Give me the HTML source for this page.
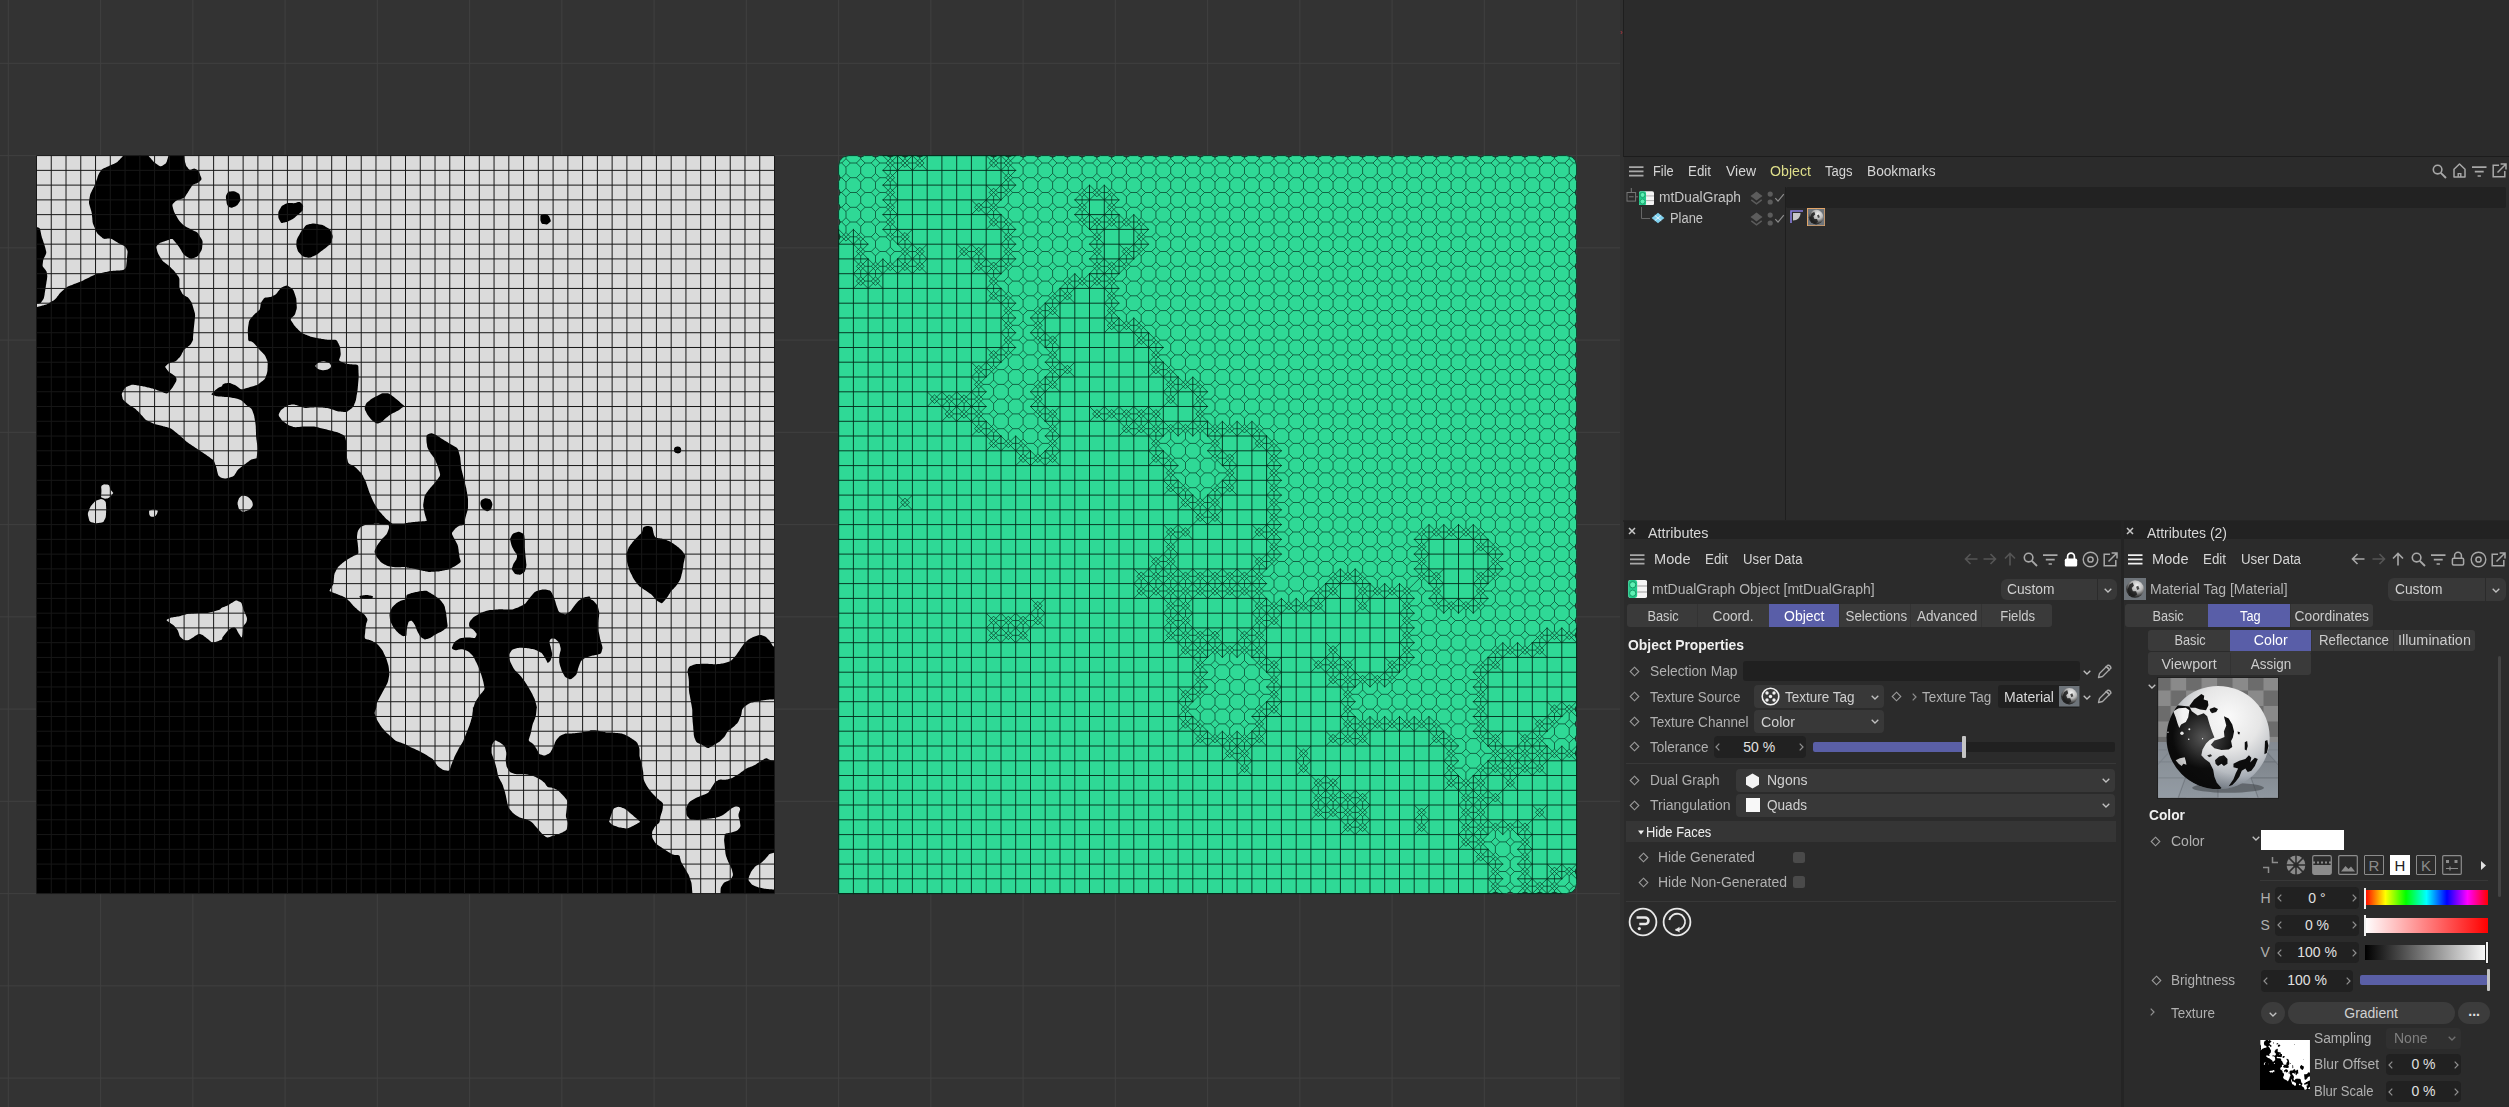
<!DOCTYPE html>
<html><head><meta charset="utf-8"><title>C4D</title>
<style>
html,body{margin:0;padding:0;background:#333;}
body{width:2509px;height:1107px;position:relative;overflow:hidden;font-family:"Liberation Sans",sans-serif;font-size:14px;}
#ui div,#ui svg{position:absolute}
</style></head><body>
<svg id="vp" width="1620" height="1107" viewBox="0 0 1620 1107" style="position:absolute;left:0;top:0">
<defs><clipPath id="cl"><rect x="36.5" y="155.6" width="738" height="738"/></clipPath><filter id="bl" x="-2%" y="-2%" width="104%" height="104%"><feGaussianBlur stdDeviation="0.7"/></filter></defs>
<rect width="1620" height="1107" fill="#333333"/>
<path d="M8.35,0V1107M100.6,0V1107M192.85,0V1107M285.1,0V1107M377.35,0V1107M469.6,0V1107M561.85,0V1107M654.1,0V1107M746.35,0V1107M838.6,0V1107M930.85,0V1107M1023.1,0V1107M1115.35,0V1107M1207.6,0V1107M1299.85,0V1107M1392.1,0V1107M1484.35,0V1107M1576.6,0V1107M0,63.35H1620M0,155.6H1620M0,247.85H1620M0,340.1H1620M0,432.35H1620M0,524.6H1620M0,616.85H1620M0,709.1H1620M0,801.35H1620M0,893.6H1620M0,985.85H1620M0,1078.1H1620" stroke="#404040" stroke-width="1" fill="none"/>
<rect x="36.5" y="155.6" width="738" height="738" fill="#dbdbdb"/>
<g clip-path="url(#cl)"><g filter="url(#bl)">
<path id="blobp" d="M779.7,761.1 778.8,761.1 777.9,761 777,760.9 776.2,760.8 775.3,760.7 774.4,760.7 773.5,760.6 772.7,760.5 771.8,760.4 771,760.3 770.3,760.1 769.6,759.8 769.1,759.5 768.5,759.2 768,758.9 767.4,758.6 766.9,758.3 766.2,758.2 765.4,758.4 764.6,758.7 763.6,759.4 762.6,760 761.6,760.6 760.7,761.3 759.7,761.9 758.7,762.5 757.7,763.1 756.7,763.8 755.8,764.4 754.8,765 753.7,765.5 752.7,766 751.7,766.4 750.6,766.8 749.6,767.2 748.5,767.6 747.5,768.1 746.5,768.5 745.6,769.1 744.7,769.6 743.8,770.3 743,770.9 742.2,771.5 741.3,772.1 740.5,772.8 739.6,773.4 738.8,773.9 738,774.5 737.2,775 736.3,775.5 735.5,776 734.7,776.6 733.8,777.1 733,777.5 732.2,777.9 731.4,778.2 730.5,778.5 729.7,778.7 728.9,779 728.1,779.2 727.3,779.5 726.4,779.6 725.6,779.7 724.7,779.8 723.9,779.7 723,779.7 722.2,779.7 721.3,779.6 720.5,779.6 719.7,779.7 719,779.8 718.4,780 717.8,780.4 717.3,780.7 716.8,781 716.2,781.3 715.7,781.7 715.2,782.1 714.6,782.7 714.1,783.5 713.5,784.4 713,785.3 712.4,786.2 711.8,787.1 711.3,788 710.7,788.9 710.2,789.8 709.6,790.7 709.1,791.6 708.4,792.4 707.6,793 706.7,793.6 705.7,794 704.6,794.4 703.6,794.8 702.5,795.2 701.5,795.6 700.5,796.1 699.4,796.5 698.4,796.9 697.4,797.3 696.4,797.7 695.4,798.2 694.6,798.7 693.7,799.2 692.9,799.8 692,800.3 691.2,800.8 690.3,801.3 689.6,801.9 689,802.6 688.5,803.3 688.1,804 687.7,804.8 687.3,805.5 686.9,806.3 686.5,807 686.3,807.8 686.1,808.6 686,809.4 686.1,810.3 686.2,811.2 686.2,812 686.3,812.9 686.3,813.8 686.5,814.6 686.7,815.3 687.1,815.9 687.5,816.4 687.9,817 688.4,817.5 688.8,818 689.2,818.6 689.8,819 690.5,819.3 691.3,819.5 692.3,819.6 693.2,819.6 694.2,819.7 695.2,819.8 696.2,819.9 697.2,819.9 698.2,819.9 699.4,819.8 700.5,819.6 701.7,819.5 702.8,819.4 704,819.2 705.1,819.1 706.3,819 707.5,818.8 708.6,818.7 709.8,818.5 710.9,818.4 712.1,818.3 713.2,818.1 714.4,818 715.5,817.8 716.5,817.6 717.4,817.3 718.2,817 719.1,816.7 719.9,816.4 720.8,816 721.6,815.7 722.5,815.3 723.3,814.8 724.1,814.3 725,813.6 725.8,812.9 726.7,812.2 727.5,811.6 728.4,810.9 729.2,810.2 730,809.6 730.9,808.9 731.7,808.2 732.7,807.7 733.7,807.2 734.7,806.8 735.9,806.6 736.9,806.5 737.9,806.7 738.7,807 739.4,807.6 739.9,808.2 740.1,808.9 740.1,809.6 739.8,810.5 739.5,811.3 739.2,812.1 738.9,812.9 738.6,813.7 738.5,814.6 738.5,815.4 738.5,816.2 738.7,817.1 739,817.9 739.2,818.8 739.4,819.6 739.6,820.5 739.8,821.3 739.9,822 740,822.7 740.1,823.3 740.2,823.9 740.3,824.5 740.4,825.2 740.4,825.8 740.3,826.5 740,827.3 739.4,828.2 738.6,829.1 737.8,829.9 737,830.5 736.2,831 735.4,831.2 734.6,831.5 733.8,831.7 733,832 732.2,832.3 731.4,832.5 730.6,832.7 729.8,832.8 729.1,833 728.3,833.1 727.5,833.2 726.8,833.3 726,833.4 725.4,833.7 725,834.2 724.7,834.8 724.6,835.6 724.5,836.4 724.4,837.2 724.3,838 724.2,838.8 724.1,839.7 724.1,840.5 724.2,841.5 724.3,842.4 724.4,843.3 724.5,844.3 724.6,845.2 724.7,846.2 724.8,847.1 724.9,848.1 725,849 725.1,849.9 725.2,850.9 725.3,851.8 725.4,852.8 725.5,853.7 725.7,854.6 725.9,855.5 726.2,856.4 726.5,857.2 726.8,858.1 727.1,858.9 727.4,859.8 727.8,860.6 728.1,861.5 728.5,862.3 728.9,863.1 729.3,864 729.7,864.8 730.1,865.6 730.5,866.5 730.9,867.3 731.3,868.1 731.6,869 731.9,869.8 732.1,870.6 732.3,871.4 732.5,872.2 732.7,873 732.9,873.8 732.9,874.6 732.9,875.3 732.7,875.9 732.4,876.5 732.1,877.1 731.8,877.7 731.5,878.3 731.2,878.9 730.8,879.4 730.3,879.9 729.6,880.3 728.7,880.6 727.9,880.9 727.1,881.2 726.2,881.6 725.4,881.9 724.7,882.3 724,882.8 723.5,883.3 723.1,884 722.6,884.6 722.2,885.3 721.8,885.9 721.4,886.5 721,887.3 720.8,888.1 720.6,889.1 720.6,890.1 720.5,891.1 720.5,892.2 720.4,893.2 720.3,894.3 720.3,895.3 720.2,896.4 720.2,897.4 720.1,898.4 720.4,899.2 720.9,899.7 721.8,900 723,900 724.1,900 725.3,900 726.5,900 727.7,900 728.8,900 730,900 731.2,900 732.4,900 733.5,900 734.7,900 735.9,900 737,900 738.2,900 739.4,899.9 740.6,899.9 741.7,899.9 742.9,899.9 744.1,899.9 745.2,899.9 746.4,899.9 747.6,899.9 748.8,899.9 749.9,899.9 751.1,899.9 752.3,899.9 753.5,899.9 754.6,899.9 755.8,899.9 757,899.9 758.1,899.9 759.3,899.9 760.5,899.9 761.7,899.9 762.8,899.9 764,899.9 765.2,899.9 766.3,899.9 767.5,899.9 768.7,899.9 769.9,899.9 771,899.9 772.2,899.9 773.4,899.9 774.6,899.9 775.7,899.8 776.9,899.8 778.1,899.8 779.2,899.8 780.1,899.5 780.7,898.9 781,898 781,896.7 780.9,895.5 780.9,894.2 780.9,893 780.9,891.7 780.6,890.8 779.9,890.1 779,889.7 777.8,889.7 776.6,889.6 775.4,889.5 774.2,889.5 772.9,889.4 771.7,889.3 770.5,889.2 769.3,889.2 768.1,889.1 766.9,889 765.8,888.8 764.7,888.7 763.6,888.5 762.6,888.2 761.5,888 760.5,887.8 759.5,887.6 758.5,887.4 757.6,887.1 756.8,886.8 756.1,886.5 755.4,886.2 754.7,885.9 753.9,885.6 753.2,885.3 752.6,884.9 752,884.4 751.4,883.9 750.9,883.3 750.4,882.7 749.9,882.1 749.4,881.5 748.9,880.8 748.6,880.2 748.5,879.5 748.5,878.8 748.7,878 748.9,877.3 749.1,876.6 749.4,875.8 749.7,875.1 750,874.4 750.3,873.7 750.6,873 750.9,872.2 751.3,871.5 751.7,870.9 752.2,870.2 752.7,869.6 753.2,869 753.7,868.4 754.2,867.8 754.7,867.1 755.3,866.6 755.9,866 756.6,865.6 757.3,865.2 758.1,864.7 758.8,864.3 759.5,863.9 760.3,863.5 760.9,863 761.6,862.6 762.2,862.1 762.7,861.5 763.2,861 763.7,860.5 764.3,860 764.8,859.4 765.3,858.9 765.8,858.3 766.3,857.7 766.9,857.1 767.4,856.5 767.9,855.9 768.4,855.3 768.9,854.6 769.6,854.1 770.3,853.7 771.1,853.4 772.1,853.2 773,852.9 774,852.7 774.9,852.5 775.8,852.2 776.8,852 777.7,851.8 778.7,851.5 779.6,851.3 780.3,850.8 780.8,850.1 781,849.1 781,847.9 781,846.6 781,845.4 781,844.1 781,842.9 781,841.6 781,840.4 781,839.1 781,837.9 781,836.6 781,835.4 781,834.2 781,832.9 781,831.7 781,830.4 781,829.2 781,827.9 781,826.7 781,825.4 781,824.2 781,822.9 781,821.7 781,820.4 781,819.2 781,818 781,816.7 781,815.5 781,814.2 781,813 781,811.7 781,810.5 781,809.2 781,808 781,806.7 781,805.5 781,804.2 781,803 781,801.8 781,800.5 781,799.3 781,798 781,796.8 781,795.5 781,794.3 781,793 781,791.8 781,790.5 781,789.3 781,788.1 781,786.8 781,785.6 781,784.3 781,783.1 781,781.8 781,780.6 781,779.3 781,778.1 781,776.8 781,775.6 781,774.3 781,773.1 781,771.9 781,770.6 781,769.4 781,768.1 781,766.9 781,765.6 781,764.4 781,763.1 780.7,762.2 780.3,761.5ZM689.2,692.8 689.4,694 689.7,695.1 689.9,696.2 690.1,697.3 690.3,698.4 690.5,699.5 690.7,700.7 690.9,701.8 691.1,702.9 691.3,704 691.5,705.1 691.7,706.2 691.9,707.4 692.1,708.4 692.2,709.4 692.3,710.4 692.3,711.3 692.3,712.3 692.3,713.2 692.3,714.1 692.3,715 692.3,715.9 692.3,716.9 692.4,717.9 692.5,718.9 692.6,719.9 692.6,720.9 692.7,721.9 692.8,722.9 692.9,723.9 693,724.9 693.1,726 693.2,727 693.2,728 693.3,729 693.4,730 693.5,731 693.6,732 693.7,733 693.7,734 693.8,735 694,736 694.2,736.8 694.4,737.7 694.8,738.4 695.1,739.2 695.4,739.9 695.7,740.7 696.1,741.4 696.5,742 697,742.6 697.7,743 698.4,743.3 699.1,743.6 699.9,744 700.6,744.3 701.4,744.6 702.1,744.9 702.8,745.3 703.5,745.7 704.2,746.1 704.9,746.5 705.6,747 706.3,747.4 707.1,747.8 707.8,748 708.7,747.9 709.5,747.6 710.5,747 711.5,746.5 712.4,745.9 713.4,745.3 714.3,744.8 715.3,744.2 716.2,743.7 717.2,743.1 718.1,742.5 719,741.9 719.8,741.4 720.5,740.7 721.2,740.1 721.8,739.5 722.4,738.8 723.1,738.2 723.7,737.6 724.3,736.9 724.8,736.2 725.3,735.5 725.7,734.8 726.1,734.1 726.5,733.3 727,732.6 727.4,731.9 727.8,731.2 728.4,730.7 728.9,730.2 729.6,729.8 730.2,729.3 730.8,728.9 731.4,728.5 732,728.1 732.6,727.6 733.3,727.1 733.9,726.5 734.5,725.9 735.2,725.3 735.8,724.6 736.4,724 737.1,723.4 737.6,722.7 738.2,721.9 738.6,721 739.1,720 739.5,719.1 739.9,718.1 740.3,717.2 740.8,716.2 741.1,715.3 741.4,714.5 741.5,713.8 741.6,713.1 741.7,712.4 741.8,711.7 741.9,711 742,710.3 742.2,709.7 742.6,708.9 743.1,708.2 743.7,707.5 744.4,706.8 745,706.3 745.6,705.8 746.2,705.4 746.9,705 747.5,704.6 748.1,704.2 748.7,703.7 749.4,703.4 750.1,703.1 750.9,702.8 751.7,702.6 752.5,702.4 753.3,702.2 754.2,702 755,701.8 755.8,701.6 756.6,701.4 757.5,701.3 758.3,701.1 759.1,701 760,700.9 760.8,700.7 761.6,700.6 762.5,700.4 763.3,700.3 764.1,700.2 765,700 765.9,699.9 766.9,699.8 768.1,699.7 769.3,699.6 770.5,699.5 771.7,699.5 773,699.4 774.2,699.3 775.4,699.2 776.7,699.1 777.9,699.1 779.1,699 780,698.6 780.7,698 781,697.1 781,696 781,694.8 781,693.7 781,692.5 781,691.4 781,690.2 781,689.1 781,687.9 781,686.8 781,685.6 781,684.5 781,683.3 781,682.2 781,681.1 781,679.9 781,678.8 781,677.6 781,676.5 781,675.3 781,674.2 781,673 781,671.9 781,670.7 781,669.6 781,668.4 781,667.3 781,666.1 781,665 781,663.8 781,662.7 781,661.5 781,660.4 781,659.2 781,658.1 781,656.9 781,655.8 781,654.6 781,653.5 781,652.3 781,651.2 781,650 780.7,649.1 780.2,648.4 779.5,648 778.5,647.8 777.5,647.5 776.6,647.3 775.6,647.1 774.6,646.8 773.7,646.5 773,646 772.5,645.4 772.1,644.7 771.6,644 771.2,643.3 770.8,642.6 770.4,641.8 769.9,641.2 769.5,640.6 769,640 768.4,639.5 767.9,638.9 767.4,638.4 766.9,637.9 766.3,637.3 765.8,636.9 765.2,636.5 764.5,636.2 763.9,636 763.2,635.8 762.5,635.6 761.9,635.3 761.2,635.1 760.5,635 759.8,635 759.1,635.1 758.4,635.3 757.6,635.5 756.9,635.7 756.2,635.9 755.4,636.2 754.7,636.4 754,636.7 753.4,636.9 752.8,637.3 752.1,637.6 751.5,637.9 750.9,638.2 750.2,638.5 749.6,638.9 749,639.3 748.3,639.8 747.7,640.3 747.1,640.8 746.4,641.4 745.8,641.9 745.1,642.4 744.5,643 744,643.7 743.4,644.4 742.9,645.2 742.4,646 741.8,646.8 741.3,647.6 740.8,648.3 740.2,649.1 739.7,649.9 739.2,650.7 738.7,651.5 738.1,652.3 737.6,653.1 737.1,653.8 736.6,654.6 736,655.4 735.4,656.1 734.8,656.8 734.2,657.5 733.6,658.1 733,658.8 732.3,659.4 731.7,660.1 731,660.7 730.3,661.1 729.6,661.5 728.7,661.8 727.9,662 727.1,662.3 726.3,662.5 725.5,662.8 724.6,663 723.7,663.2 722.7,663.4 721.7,663.6 720.7,663.7 719.6,663.9 718.6,664 717.6,664.1 716.6,664.2 715.6,664.3 714.7,664.3 713.9,664.2 713.1,664.2 712.2,664.1 711.4,664.1 710.6,664 709.7,663.9 708.9,663.9 708.1,663.8 707.2,663.8 706.4,663.7 705.6,663.7 704.7,663.7 703.9,663.8 703,663.8 702.2,663.8 701.4,663.8 700.5,663.9 699.7,663.9 698.9,663.9 698,664 697.2,664 696.3,664.1 695.5,664.3 694.6,664.5 693.8,664.8 692.9,665.1 692.1,665.5 691.2,665.8 690.4,666.1 689.6,666.6 689,667.3 688.4,668.3 687.9,669.4 687.7,670.5 687.5,671.5 687.6,672.4 687.8,673.2 688,674.1 688.1,674.9 688.2,675.7 688.4,676.6 688.5,677.4 688.6,678.2 688.7,679 688.8,679.8 688.8,680.7 688.9,681.5 688.9,682.3 688.9,683.2 688.9,684 688.9,684.9 688.9,685.7 688.9,686.5 688.9,687.4 688.9,688.2 688.9,689.1 688.9,689.9 689,690.8 689.1,691.8ZM122.3,392.5 122.8,391.7 123.2,390.9 123.7,390.1 124.2,389.3 124.6,388.5 125.2,387.9 125.9,387.3 126.7,386.8 127.5,386.5 128.4,386.1 129.2,385.7 130.1,385.4 131,385 131.9,384.8 132.8,384.7 133.7,384.7 134.7,384.9 135.7,385 136.7,385.2 137.7,385.4 138.6,385.5 139.6,385.7 140.6,385.9 141.6,386 142.6,386.2 143.5,386.4 144.4,386.6 145.3,386.8 146.1,387 146.9,387.2 147.8,387.4 148.6,387.6 149.5,387.8 150.3,388 151.1,388.2 152,388.4 152.8,388.6 153.7,388.9 154.7,389.2 155.7,389.6 156.8,390 157.9,390.4 159,390.8 160.1,391.2 161.2,391.6 162.3,392 163.4,392.5 164.5,392.9 165.6,393.3 166.6,393.4 167.4,393.3 168.2,392.8 168.8,392.1 169.4,391.4 170,390.7 170.6,390 171.2,389.3 171.8,388.5 172.4,387.7 173,386.7 173.6,385.7 174.2,384.7 174.8,383.7 175.5,382.6 176.1,381.6 176.4,380.6 176.5,379.6 176.4,378.6 176,377.6 175.5,376.8 174.9,376 174.2,375.4 173.4,374.9 172.5,374.3 171.7,373.8 170.9,373.3 170,372.8 169.3,372.2 168.7,371.7 168.1,371.1 167.7,370.5 167.2,369.9 166.8,369.3 166.3,368.7 165.9,368 165.5,367.5 165.3,367.2 165.2,366.9 165.2,366.7 165.3,366.5 165.5,366.2 165.8,365.9 166.3,365.4 166.8,365 167.2,364.6 167.7,364.2 168.2,363.7 168.7,363.4 169.4,363 170.1,362.8 171,362.6 171.8,362.3 172.6,362.1 173.5,361.9 174.3,361.7 175.1,361.4 175.8,361 176.5,360.5 177.1,359.9 177.7,359.3 178.3,358.6 178.9,358 179.5,357.4 180.1,356.8 180.6,356 181.1,355.2 181.5,354.4 181.9,353.6 182.3,352.7 182.8,351.9 183.2,351 183.7,350.3 184.3,349.5 185.1,348.8 185.9,348.2 186.7,347.6 187.6,347 188.4,346.3 189.2,345.7 189.9,345.1 190.5,344.5 191,343.8 191.3,343.2 191.7,342.5 192,341.9 192.4,341.3 192.7,340.6 193,340.1 193.1,339.7 193.1,339.4 193,339.3 193,338.9 193,338.2 193,337.3 193.1,336.2 193.2,335 193.3,333.9 193.4,332.7 193.5,331.6 193.6,330.5 193.7,329.4 193.8,328.4 193.9,327.5 194,326.5 194.1,325.6 194.2,324.7 194.3,323.7 194.4,322.8 194.5,321.8 194.6,320.9 194.7,319.9 194.8,319 194.9,318.1 195,317.1 195.1,316.2 195.1,315.2 195,314.2 194.9,313.3 194.6,312.3 194.3,311.3 194,310.3 193.7,309.3 193.5,308.4 193.2,307.4 192.9,306.4 192.6,305.4 192.3,304.4 192,303.5 191.7,302.7 191.3,302 190.8,301.3 190.4,300.7 190,300 189.6,299.4 189.1,298.8 188.6,298.2 188,297.6 187.4,297.1 186.6,296.7 185.9,296.3 185.2,295.9 184.4,295.4 183.7,295 183.1,294.5 182.5,293.9 182,293.1 181.6,292.3 181.2,291.5 180.8,290.7 180.4,289.9 180,289.1 179.7,288.3 179.5,287.5 179.4,286.6 179.4,285.8 179.4,285 179.4,284.1 179.4,283.3 179.4,282.4 179.4,281.6 179.4,280.8 179.4,279.9 179.4,279.1 179.2,278.2 178.9,277.4 178.4,276.6 177.8,275.7 177.1,274.9 176.5,274 175.9,273.2 175.2,272.3 174.6,271.5 174,270.8 173.3,270.1 172.7,269.5 172.1,268.9 171.4,268.2 170.8,267.6 170.2,267 169.5,266.3 168.8,265.7 168,265.1 167.2,264.5 166.3,263.8 165.5,263.2 164.7,262.6 163.8,261.9 163,261.2 162.3,260.4 161.7,259.5 161,258.4 160.4,257.4 159.8,256.4 159.2,255.4 158.6,254.4 158.1,253.4 157.7,252.5 157.4,251.6 157.2,250.9 157,250.1 156.8,249.3 156.6,248.5 156.4,247.7 156.4,246.9 156.7,246.1 157.3,245.3 158.1,244.5 158.9,243.7 159.8,243.1 160.9,242.6 161.9,242.2 163,241.8 164.1,241.4 165.2,241.1 166.3,240.7 167.4,240.3 168.5,239.9 169.6,239.5 170.7,239.1 171.6,239 172.4,239.1 173.1,239.5 173.6,240.2 174.2,240.8 174.7,241.5 175.2,242.1 175.8,242.8 176.3,243.4 176.9,244.1 177.4,244.8 177.9,245.4 178.5,246.2 179.1,247 179.7,248 180.3,249 181,250.1 181.6,251.2 182.2,252.2 182.9,253.3 183.6,254.2 184.3,255 185.1,255.6 186,256.2 186.8,256.7 187.7,257.3 188.6,257.8 189.4,258.3 190.3,258.6 191.2,258.7 192,258.6 192.9,258.3 193.8,258 194.6,257.7 195.5,257.3 196.4,257 197.1,256.6 197.8,256 198.5,255.3 199,254.4 199.5,253.5 200.1,252.7 200.6,251.8 201.1,251 201.6,250 201.9,249.1 202.1,248.1 202.2,247 202.3,245.9 202.4,244.9 202.5,243.8 202.6,242.7 202.6,241.7 202.3,240.6 201.8,239.6 201.2,238.5 200.6,237.4 199.9,236.4 199.3,235.3 198.7,234.3 198,233.4 197.3,232.6 196.5,232 195.6,231.6 194.8,231.2 193.9,230.8 193.1,230.4 192.3,229.9 191.4,229.5 190.6,229.1 189.8,228.7 188.9,228.2 188.1,227.8 187.2,227.4 186.4,227 185.6,226.5 184.8,226.1 184.1,225.6 183.4,225 182.8,224.4 182.1,223.8 181.5,223.2 180.9,222.5 180.3,221.9 179.7,221.2 179.1,220.4 178.4,219.5 177.8,218.4 177.2,217.4 176.6,216.3 175.9,215.3 175.3,214.3 174.8,213.2 174.3,212.2 173.9,211.2 173.6,210.2 173.3,209.3 173,208.3 172.8,207.3 172.5,206.3 172.4,205.5 172.5,204.7 172.7,204.1 173.2,203.5 173.7,203 174.2,202.5 174.7,201.9 175.2,201.4 175.8,200.9 176.6,200.5 177.5,200.1 178.5,199.8 179.6,199.5 180.6,199.2 181.7,198.8 182.7,198.5 183.6,198.1 184.4,197.5 185.1,196.8 185.6,196 186.1,195.1 186.6,194.3 187.1,193.5 187.7,192.7 188.2,191.8 188.7,191 189.2,190.2 189.7,189.3 190.3,188.5 190.8,187.7 191.3,186.9 191.8,186 192.4,185.4 192.9,184.8 193.5,184.5 194.2,184.2 194.8,184 195.4,183.8 196,183.6 196.7,183.4 197.3,183.1 197.9,182.8 198.4,182.4 199,181.9 199.5,181.5 200.1,181 200.6,180.6 201.1,180.1 201.4,179.5 201.5,178.8 201.3,177.8 200.9,176.7 200.4,175.7 200,174.6 199.6,173.5 199.1,172.4 198.7,171.5 198.2,170.8 197.7,170.3 197.1,170 196.6,169.6 196,169.3 195.5,169 194.9,168.7 194.2,168.6 193.4,168.7 192.5,169 191.5,169.5 190.6,169.8 189.8,169.8 189.2,169.5 188.7,169 188.2,168.4 187.8,167.8 187.3,167.3 186.8,166.7 186.4,166.1 186,165.4 185.8,164.6 185.6,163.8 185.4,163 185.1,162.2 184.9,161.3 184.7,160.5 184.5,159.7 184.4,158.8 184.3,158 184.2,157.1 184.1,156.3 184,155.4 183.9,154.6 183.8,153.7 183.7,152.8 183.6,152 183.5,151.1 183.4,150.3 183.1,149.6 182.5,149.2 181.7,149 180.6,149 179.6,149 178.5,149 177.4,149 176.4,149 175.3,149 174.2,149 173.2,149 172.1,149 171.2,149.3 170.5,149.9 170,150.8 169.6,152 169.2,153.2 168.9,154.3 168.5,155.5 168.2,156.7 167.8,157.9 167.5,159.1 167.1,160.2 166.8,161.4 166.3,162.4 165.8,163.2 165.2,163.9 164.5,164.3 163.8,164.8 163.1,165.2 162.4,165.7 161.7,166.1 161,166.3 160.2,166.3 159.5,166 158.7,165.4 157.9,164.9 157,164.3 156.2,163.8 155.4,163.2 154.6,162.6 153.9,161.9 153.1,161.2 152.4,160.3 151.6,159.5 150.9,158.6 150.2,157.8 149.4,157 148.7,156.1 148,155.3 147.2,154.5 146.5,153.6 145.8,152.8 145,151.9 144.3,151.1 143.6,150.3 142.7,149.6 141.8,149.2 140.9,149 139.8,149 138.7,149 137.7,149 136.6,149 135.5,149 134.5,149 133.4,149 132.3,149 131.3,149 130.3,149.2 129.3,149.6 128.5,150.2 127.7,151.1 126.9,151.9 126.1,152.7 125.3,153.6 124.5,154.4 123.7,155.3 122.9,156.1 122.1,156.9 121.4,157.8 120.6,158.6 119.8,159.5 119,160.3 118.2,161.1 117.4,161.9 116.5,162.5 115.6,163 114.6,163.4 113.7,163.9 112.8,164.3 111.8,164.7 110.9,165.1 109.9,165.5 109,166 108,166.4 107.1,166.8 106.2,167.2 105.2,167.7 104.3,168.1 103.3,168.5 102.5,169 101.8,169.5 101.3,170.1 100.9,170.7 100.4,171.4 100,172 99.6,172.6 99.2,173.3 98.8,174 98.4,174.7 98.1,175.5 97.8,176.3 97.5,177.2 97.3,178 97,178.9 96.7,179.7 96.4,180.5 96.1,181.4 95.9,182.2 95.6,183.1 95.3,183.9 94.9,184.7 94.5,185.6 94.1,186.4 93.7,187.3 93.3,188.1 92.8,188.9 92.4,189.8 92,190.6 91.6,191.5 91.2,192.3 90.8,193.1 90.4,194 90.1,195 89.9,196 89.7,197 89.5,198.1 89.4,199.1 89.2,200.2 89,201.2 89,202.2 89,203.2 89.2,204.1 89.4,204.9 89.7,205.8 89.9,206.6 90.2,207.4 90.4,208.3 90.7,209.1 90.9,209.9 91.2,210.8 91.4,211.6 91.6,212.5 91.8,213.3 91.9,214.1 92,215 92,215.8 92.1,216.7 92.2,217.5 92.3,218.3 92.3,219.2 92.4,220 92.5,220.8 92.5,221.7 92.7,222.5 92.9,223.4 93.2,224.2 93.5,225 93.9,225.9 94.2,226.7 94.6,227.6 94.9,228.4 95.3,229.3 95.6,230.1 96,231 96.3,231.8 96.8,232.6 97.4,233.4 98.1,234.2 99,234.9 99.8,235.7 100.7,236.4 101.5,237.1 102.4,237.9 103.2,238.4 104.1,238.7 104.9,238.9 105.8,238.8 106.6,238.7 107.5,238.6 108.4,238.5 109.2,238.4 110.1,238.5 110.9,238.7 111.8,239.1 112.6,239.6 113.4,240.1 114.2,240.6 115,241.1 115.8,241.6 116.7,242.1 117.6,242.6 118.6,243.2 119.6,243.7 120.7,244.2 121.7,244.7 122.8,245.3 123.8,245.8 124.6,246.3 125.3,246.9 125.8,247.5 126.1,248.1 126.4,248.7 126.7,249.3 127,249.9 127.3,250.5 127.5,251.2 127.6,252.1 127.5,253 127.4,254 127.3,255 127.2,256 127.1,257.1 127,258.1 126.9,259.1 126.8,260.1 126.7,261.2 126.6,262.2 126.5,263.2 126.4,264.2 126.3,265.3 126.2,266.3 126,267.2 125.6,268 125.1,268.7 124.5,269.3 123.8,269.7 122.9,270 121.9,270.2 120.9,270.3 119.8,270.4 118.7,270.5 117.6,270.5 116.5,270.6 115.4,270.7 114.3,270.7 113.2,270.8 112.1,270.9 111.1,271 110,271.1 109.1,271.3 108.1,271.5 107.2,271.7 106.2,271.9 105.3,272.1 104.3,272.3 103.4,272.5 102.4,272.8 101.5,273 100.5,273.2 99.6,273.4 98.7,273.6 97.7,273.8 96.8,274 95.8,274.3 94.7,274.7 93.7,275.2 92.6,275.7 91.4,276.3 90.3,276.8 89.2,277.4 88.1,278 87,278.5 85.9,279.1 84.7,279.6 83.6,280.2 82.6,280.7 81.5,281.2 80.5,281.6 79.6,281.9 78.7,282.3 77.7,282.7 76.8,283 75.8,283.4 74.9,283.8 74,284.1 73,284.5 72.1,284.9 71.1,285.2 70.2,285.6 69.2,286 68.3,286.3 67.4,286.8 66.5,287.4 65.6,288 64.8,288.7 63.9,289.5 63.1,290.2 62.3,290.9 61.4,291.7 60.6,292.4 59.9,293.2 59.2,294 58.6,294.9 58,295.7 57.3,296.5 56.7,297.4 56.1,298.2 55.3,299 54.5,299.7 53.6,300.4 52.6,301 51.5,301.6 50.5,302.2 49.5,302.8 48.5,303.5 47.4,304 46.4,304.4 45.3,304.8 44.3,305.1 43.2,305.4 42.2,305.6 41.1,305.9 40,306.2 39,306.5 37.9,306.8 36.9,307 35.8,307.3 34.7,307.6 33.7,307.9 32.6,308.1 31.6,308.4 30.8,308.9 30.2,309.7 30,310.7 30,311.9 30,313.2 30,314.4 30,315.7 30,316.9 30,318.1 30,319.4 30,320.6 30,321.9 30,323.1 30,324.4 30,325.6 30,326.8 30,328.1 30,329.3 30,330.6 30,331.8 30,333 30,334.3 30,335.5 30,336.8 30,338 30,339.3 30,340.5 30,341.7 30,343 30,344.2 30,345.5 30,346.7 30,348 30,349.2 30,350.4 30,351.7 30,352.9 30,354.2 30,355.4 30,356.6 30,357.9 30,359.1 30,360.4 30,361.6 30,362.9 30,364.1 30,365.3 30,366.6 30,367.8 30,369.1 30,370.3 30,371.5 30,372.8 30,374 30,375.3 30,376.5 30,377.8 30,379 30,380.2 30,381.5 30,382.7 30,384 30,385.2 30,386.4 30,387.7 30,388.9 30,390.2 30,391.4 30,392.7 30,393.9 30,395.1 30,396.4 30,397.6 30,398.9 30,400.1 30,401.4 30,402.6 30,403.8 30,405.1 30,406.3 30,407.6 30,408.8 30,410 30,411.3 30,412.5 30,413.8 30,415 30,416.3 30,417.5 30,418.7 30,420 30,421.2 30,422.5 30,423.7 30,424.9 30,426.2 30,427.4 30,428.7 30,429.9 30,431.2 30,432.4 30,433.6 30,434.9 30,436.1 30,437.4 30,438.6 30,439.8 30,441.1 30,442.3 30,443.6 30,444.8 30,446.1 30,447.3 30,448.5 30,449.8 30,451 30,452.3 30,453.5 30,454.7 30,456 30,457.2 30,458.5 30,459.7 30,461 30,462.2 30,463.4 30,464.7 30,465.9 30,467.2 30,468.4 30,469.7 30,470.9 30,472.1 30,473.4 30,474.6 30,475.9 30,477.1 30,478.3 30,479.6 30,480.8 30,482.1 30,483.3 30,484.6 30,485.8 30,487 30,488.3 30,489.5 30,490.8 30,492 30,493.2 30,494.5 30,495.7 30,497 30,498.2 30,499.5 30,500.7 30,501.9 30,503.2 30,504.4 30,505.7 30,506.9 30,508.1 30,509.4 30,510.6 30,511.9 30,513.1 30,514.4 30,515.6 30,516.8 30,518.1 30,519.3 30,520.6 30,521.8 30,523 30,524.3 30,525.5 30,526.8 30,528 30,529.3 30,530.5 30,531.7 30,533 30,534.2 30,535.5 30,536.7 30,538 30,539.2 30,540.4 30,541.7 30,542.9 30,544.2 30,545.4 30,546.6 30,547.9 30,549.1 30,550.4 30,551.6 30,552.9 30,554.1 30,555.3 30,556.6 30,557.8 30,559.1 30,560.3 30,561.5 30,562.8 30,564 30,565.3 30,566.5 30,567.8 30,569 30,570.2 30,571.5 30,572.7 30,574 30,575.2 30,576.4 30,577.7 30,578.9 30,580.2 30,581.4 30,582.7 30,583.9 30,585.1 30,586.4 30,587.6 30,588.9 30,590.1 30,591.4 30,592.6 30,593.8 30,595.1 30,596.3 30,597.6 30,598.8 30,600 30,601.3 30,602.5 30,603.8 30,605 30,606.3 30,607.5 30,608.7 30,610 30,611.2 30,612.5 30,613.7 30,614.9 30,616.2 30,617.4 30,618.7 30,619.9 30,621.2 30,622.4 30,623.6 30,624.9 30,626.1 30,627.4 30,628.6 30,629.8 30,631.1 30,632.3 30,633.6 30,634.8 30,636.1 30,637.3 30,638.5 30,639.8 30,641 30,642.3 30,643.5 30,644.7 30,646 30,647.2 30,648.5 30,649.7 30,651 30,652.2 30,653.4 30,654.7 30,655.9 30,657.2 30,658.4 30,659.7 30,660.9 30,662.1 30,663.4 30,664.6 30,665.9 30,667.1 30,668.3 30,669.6 30,670.8 30,672.1 30,673.3 30,674.6 30,675.8 30,677 30,678.3 30,679.5 30,680.8 30,682 30,683.2 30,684.5 30,685.7 30,687 30,688.2 30,689.5 30,690.7 30,691.9 30,693.2 30,694.4 30,695.7 30,696.9 30,698.1 30,699.4 30,700.6 30,701.9 30,703.1 30,704.4 30,705.6 30,706.8 30,708.1 30,709.3 30,710.6 30,711.8 30,713 30,714.3 30,715.5 30,716.8 30,718 30,719.3 30,720.5 30,721.7 30.1,723 30.1,724.2 30.1,725.5 30.1,726.7 30.1,728 30.1,729.2 30.1,730.4 30.1,731.7 30.1,732.9 30.1,734.2 30.1,735.4 30.1,736.6 30.1,737.9 30.1,739.1 30.1,740.4 30.1,741.6 30.1,742.9 30.1,744.1 30.1,745.3 30.1,746.6 30.1,747.8 30.1,749.1 30.1,750.3 30.1,751.5 30.1,752.8 30.1,754 30.1,755.3 30.1,756.5 30.1,757.8 30.1,759 30.1,760.2 30.1,761.5 30.1,762.7 30.1,764 30.1,765.2 30.1,766.4 30.1,767.7 30.1,768.9 30.1,770.2 30.1,771.4 30.1,772.7 30.1,773.9 30.1,775.1 30.1,776.4 30.1,777.6 30.1,778.9 30.1,780.1 30.1,781.4 30.1,782.6 30.1,783.8 30.1,785.1 30.1,786.3 30.1,787.6 30.1,788.8 30.1,790 30.1,791.3 30.1,792.5 30.1,793.8 30.1,795 30.1,796.3 30.1,797.5 30.1,798.7 30.1,800 30.1,801.2 30.1,802.5 30.1,803.7 30.1,804.9 30.1,806.2 30.1,807.4 30.1,808.7 30.1,809.9 30.1,811.2 30.1,812.4 30.1,813.6 30.1,814.9 30.1,816.1 30.1,817.4 30.1,818.6 30.1,819.8 30.1,821.1 30.1,822.3 30.1,823.6 30.1,824.8 30.1,826.1 30.1,827.3 30.1,828.5 30.1,829.8 30.1,831 30.1,832.3 30.1,833.5 30.1,834.7 30.1,836 30.1,837.2 30.1,838.5 30.1,839.7 30.1,841 30.1,842.2 30.1,843.4 30.1,844.7 30.1,845.9 30.1,847.2 30.1,848.4 30.1,849.7 30.1,850.9 30.1,852.1 30.1,853.4 30.1,854.6 30.1,855.9 30.1,857.1 30.1,858.3 30.1,859.6 30.1,860.8 30.1,862.1 30.1,863.3 30.1,864.6 30.1,865.8 30.1,867 30.1,868.3 30.1,869.5 30.1,870.8 30.1,872 30.1,873.2 30.1,874.5 30.1,875.7 30.1,877 30.1,878.2 30.1,879.5 30.1,880.7 30.1,881.9 30.1,883.2 30.1,884.4 30.1,885.7 30.1,886.9 30.1,888.1 30.1,889.4 30.1,890.6 30.1,891.9 30.1,893.1 30.1,894.4 30.1,895.6 30.1,896.8 30.1,898.1 30.4,899 31,899.6 32,899.9 33.2,899.9 34.4,899.9 35.7,899.9 36.9,899.9 38.2,899.9 39.4,899.9 40.7,899.9 41.9,899.9 43.2,899.9 44.4,899.9 45.7,899.9 46.9,899.9 48.1,899.9 49.4,899.9 50.6,899.9 51.9,899.9 53.1,899.9 54.4,899.9 55.6,899.9 56.9,899.9 58.1,899.9 59.4,899.9 60.6,899.9 61.9,899.9 63.1,899.9 64.3,899.9 65.6,899.9 66.8,899.9 68.1,899.9 69.3,899.9 70.6,899.9 71.8,899.9 73.1,899.9 74.3,899.9 75.6,899.9 76.8,899.9 78,899.9 79.3,899.9 80.5,899.9 81.8,899.9 83,899.9 84.3,899.9 85.5,899.9 86.8,899.9 88,899.9 89.3,899.9 90.5,899.9 91.8,899.9 93,899.9 94.2,899.9 95.5,899.9 96.7,899.9 98,899.9 99.2,899.9 100.5,899.9 101.7,899.9 103,899.9 104.2,899.9 105.5,899.9 106.7,899.9 107.9,899.9 109.2,899.9 110.4,899.9 111.7,899.9 112.9,899.9 114.2,899.9 115.4,899.9 116.7,899.9 117.9,899.9 119.2,899.9 120.4,899.9 121.7,899.9 122.9,899.9 124.1,899.9 125.4,899.9 126.6,899.9 127.9,899.9 129.1,899.9 130.4,899.9 131.6,899.9 132.9,899.9 134.1,899.9 135.4,899.9 136.6,899.9 137.8,899.9 139.1,899.9 140.3,899.9 141.6,899.9 142.8,899.9 144.1,899.9 145.3,899.9 146.6,899.9 147.8,899.9 149.1,899.9 150.3,899.9 151.6,899.9 152.8,899.9 154,899.9 155.3,899.9 156.5,899.9 157.8,899.9 159,899.9 160.3,899.9 161.5,899.9 162.8,899.9 164,899.9 165.3,899.9 166.5,899.9 167.7,899.9 169,899.9 170.2,899.9 171.5,899.9 172.7,899.9 174,899.9 175.2,899.9 176.5,899.9 177.7,899.9 179,899.9 180.2,899.9 181.5,899.9 182.7,899.9 183.9,899.9 185.2,899.9 186.4,899.9 187.7,899.9 188.9,899.9 190.2,899.9 191.4,899.9 192.7,899.9 193.9,899.9 195.2,899.9 196.4,899.9 197.6,899.9 198.9,899.9 200.1,899.9 201.4,899.9 202.6,899.9 203.9,899.9 205.1,899.9 206.4,899.9 207.6,899.9 208.9,899.9 210.1,899.9 211.4,899.9 212.6,899.9 213.8,899.9 215.1,899.9 216.3,899.9 217.6,899.9 218.8,899.9 220.1,899.9 221.3,899.9 222.6,899.9 223.8,899.9 225.1,899.9 226.3,899.9 227.5,899.9 228.8,899.9 230,899.9 231.3,899.9 232.5,899.9 233.8,899.9 235,899.9 236.3,899.9 237.5,899.9 238.8,899.9 240,899.9 241.3,899.9 242.5,899.9 243.7,899.9 245,899.9 246.2,899.9 247.5,899.9 248.7,899.9 250,899.9 251.2,899.9 252.5,899.9 253.7,899.9 255,899.9 256.2,899.9 257.4,899.9 258.7,899.9 259.9,899.9 261.2,899.9 262.4,899.9 263.7,899.9 264.9,899.9 266.2,899.9 267.4,899.9 268.7,899.9 269.9,899.9 271.2,899.9 272.4,899.9 273.6,899.9 274.9,899.9 276.1,899.9 277.4,899.9 278.6,899.9 279.9,899.9 281.1,899.9 282.4,899.9 283.6,899.9 284.9,899.9 286.1,899.9 287.3,899.9 288.6,899.9 289.8,899.9 291.1,899.9 292.3,899.9 293.6,899.9 294.8,899.9 296.1,899.9 297.3,899.9 298.6,899.9 299.8,899.9 301.1,899.9 302.3,899.9 303.5,899.9 304.8,899.9 306,899.9 307.3,899.9 308.5,899.9 309.8,899.9 311,899.9 312.3,899.9 313.5,899.9 314.8,899.9 316,899.9 317.2,899.9 318.5,899.9 319.7,899.9 321,899.9 322.2,899.9 323.5,899.9 324.7,899.9 326,899.9 327.2,899.9 328.5,899.9 329.7,899.9 331,899.9 332.2,899.9 333.4,899.9 334.7,899.9 335.9,899.9 337.2,899.9 338.4,899.9 339.7,899.9 340.9,899.9 342.2,899.9 343.4,899.9 344.7,899.9 345.9,899.9 347.2,899.9 348.4,899.9 349.6,899.9 350.9,899.9 352.1,899.9 353.4,899.9 354.6,899.9 355.9,899.9 357.1,899.9 358.4,899.9 359.6,899.9 360.9,899.9 362.1,899.9 363.3,899.9 364.6,899.9 365.8,899.9 367.1,899.9 368.3,899.9 369.6,899.9 370.8,899.9 372.1,899.9 373.3,899.9 374.6,899.9 375.8,899.9 377.1,899.9 378.3,899.9 379.5,899.9 380.8,899.9 382,899.9 383.3,899.9 384.5,899.9 385.8,899.9 387,899.9 388.3,899.9 389.5,899.9 390.8,899.9 392,899.9 393.2,899.9 394.5,899.9 395.7,899.9 397,899.9 398.2,899.9 399.5,899.9 400.7,899.9 402,899.9 403.2,899.9 404.5,899.9 405.7,899.9 407,899.9 408.2,899.9 409.4,899.9 410.7,899.9 411.9,899.9 413.2,899.9 414.4,899.9 415.7,899.9 416.9,899.9 418.2,899.9 419.4,899.9 420.7,899.9 421.9,899.9 423.1,899.9 424.4,899.9 425.6,899.9 426.9,899.9 428.1,899.9 429.4,899.9 430.6,899.9 431.9,899.9 433.1,899.9 434.4,899.9 435.6,899.9 436.9,899.9 438.1,899.9 439.3,899.9 440.6,899.9 441.8,899.9 443.1,899.9 444.3,899.9 445.6,899.9 446.8,899.9 448.1,899.9 449.3,899.9 450.6,899.9 451.8,899.9 453,899.9 454.3,899.9 455.5,899.9 456.8,899.9 458,899.9 459.3,899.9 460.5,899.9 461.8,899.9 463,899.9 464.3,899.9 465.5,899.9 466.8,899.9 468,899.9 469.2,899.9 470.5,899.9 471.7,899.9 473,899.9 474.2,899.9 475.5,899.9 476.7,899.9 478,899.9 479.2,899.9 480.5,899.9 481.7,899.9 482.9,899.9 484.2,899.9 485.4,899.9 486.7,899.9 487.9,899.9 489.2,899.9 490.4,899.9 491.7,899.9 492.9,899.9 494.2,899.9 495.4,899.9 496.7,899.9 497.9,899.9 499.1,899.9 500.4,899.9 501.6,899.9 502.9,899.9 504.1,899.9 505.4,899.9 506.6,899.9 507.9,899.9 509.1,899.9 510.4,899.9 511.6,899.9 512.8,899.9 514.1,899.9 515.3,899.9 516.6,899.9 517.8,899.9 519.1,899.9 520.3,899.9 521.6,899.9 522.8,899.9 524.1,899.9 525.3,899.9 526.6,899.9 527.8,899.9 529,899.9 530.3,899.9 531.5,899.9 532.8,899.9 534,899.9 535.3,899.9 536.5,899.9 537.8,899.9 539,899.9 540.3,899.9 541.5,899.9 542.7,899.9 544,899.9 545.2,899.9 546.5,899.9 547.7,899.9 549,899.9 550.2,899.9 551.5,899.9 552.7,899.9 554,899.9 555.2,899.9 556.5,899.9 557.7,899.9 558.9,899.9 560.2,899.9 561.4,899.9 562.7,899.9 563.9,899.9 565.2,899.9 566.4,899.9 567.7,899.9 568.9,899.9 570.2,899.9 571.4,899.9 572.6,899.9 573.9,899.9 575.1,899.9 576.4,899.9 577.6,899.9 578.9,899.9 580.1,899.9 581.4,899.9 582.6,899.9 583.9,899.9 585.1,899.9 586.4,899.9 587.6,899.9 588.8,899.9 590.1,899.9 591.3,899.9 592.6,899.9 593.8,899.9 595.1,899.9 596.3,899.9 597.6,899.9 598.8,899.9 600.1,899.9 601.3,899.9 602.5,899.9 603.8,899.9 605,899.9 606.3,899.9 607.5,899.9 608.8,899.9 610,899.9 611.3,899.9 612.5,899.9 613.8,899.9 615,899.9 616.3,899.9 617.5,899.9 618.7,899.9 620,899.9 621.2,899.9 622.5,899.9 623.7,899.9 625,899.9 626.2,899.9 627.5,899.9 628.7,899.9 630,899.9 631.2,899.9 632.4,899.9 633.7,899.9 634.9,899.9 636.2,899.9 637.4,899.9 638.7,899.9 639.9,899.9 641.2,899.9 642.4,899.9 643.7,899.9 644.9,899.9 646.2,899.9 647.4,899.9 648.6,899.9 649.9,899.9 651.1,899.9 652.4,899.9 653.6,899.9 654.9,899.9 656.1,899.9 657.4,899.9 658.6,899.9 659.9,899.9 661.1,899.9 662.3,899.9 663.6,899.9 664.8,899.9 666.1,899.9 667.3,899.9 668.6,899.9 669.8,899.9 671.1,899.9 672.3,899.9 673.6,899.9 674.8,899.9 676.1,899.9 677.3,899.9 678.5,899.9 679.8,899.9 681,899.9 682.3,899.9 683.5,899.9 684.8,899.9 686,899.9 687.3,899.9 688.5,899.9 689.8,899.9 691,899.9 691.9,899.7 692.5,899.1 692.8,898.4 692.7,897.3 692.6,896.3 692.5,895.3 692.4,894.2 692.4,893.2 692.3,892.2 692.2,891.1 692.1,890.1 692,889.1 692,888 691.9,887 691.8,886 691.7,884.9 691.6,883.9 691.4,882.8 691.1,881.8 690.7,880.7 690.4,879.7 690,878.6 689.6,877.6 689.3,876.5 688.9,875.5 688.5,874.6 688,873.7 687.5,872.9 687,872 686.5,871.2 686.1,870.4 685.6,869.5 685.1,868.7 684.6,867.9 684.1,867 683.6,866.2 683.1,865.4 682.6,864.5 682.1,863.7 681.7,862.9 681.2,862 680.9,861.2 680.7,860.4 680.5,859.6 680.3,858.8 680.1,858 680,857.2 679.8,856.4 679.5,855.8 678.9,855.4 678.2,855.1 677.4,855 676.5,855 675.7,854.9 674.8,854.9 673.9,854.8 673.1,854.6 672.1,854.2 671.2,853.8 670.2,853.1 669.3,852.5 668.3,851.9 667.3,851.3 666.4,850.7 665.4,850 664.4,849.4 663.5,848.8 662.5,848.2 661.6,847.6 660.8,847 660,846.5 659.3,846 658.5,845.4 657.8,844.9 657.1,844.4 656.4,843.9 655.7,843.3 655.2,842.7 654.7,842.1 654.3,841.3 653.9,840.6 653.5,839.9 653.1,839.2 652.7,838.5 652.4,837.8 652.2,837.1 652.1,836.4 652.1,835.6 652.1,834.9 652.1,834.2 652.1,833.5 652.1,832.8 652.2,832 652.4,831.3 652.7,830.6 653.1,829.9 653.5,829.2 653.9,828.5 654.3,827.8 654.7,827.1 655.1,826.5 655.6,825.9 656.1,825.4 656.6,825 657.1,824.5 657.7,824.1 658.2,823.7 658.7,823.2 659.2,822.7 659.5,822.1 659.7,821.5 659.8,820.7 659.9,820 660,819.3 660.1,818.5 660.2,817.8 660.4,817 660.5,816.3 660.8,815.4 661,814.6 661.3,813.8 661.6,812.9 661.9,812.1 662.1,811.3 662.4,810.4 662.5,809.6 662.7,808.7 662.8,807.9 662.8,807 662.9,806.2 663,805.3 663.1,804.5 663,803.7 662.7,803 662.2,802.4 661.5,801.8 660.8,801.3 660.1,800.7 659.4,800.2 658.8,799.6 658.1,799 657.4,798.4 656.6,797.7 655.9,797 655.2,796.2 654.5,795.5 653.7,794.8 653,794.1 652.3,793.3 651.6,792.5 651,791.7 650.4,790.9 649.7,790.1 649.1,789.3 648.5,788.4 647.9,787.6 647.3,786.8 646.8,786 646.3,785.1 645.9,784.3 645.5,783.5 645.1,782.7 644.7,781.9 644.3,781 644,780.2 643.7,779.2 643.6,778.2 643.5,777.2 643.5,776.1 643.4,775.1 643.3,774.1 643.3,773 643.2,772 643,770.9 642.8,769.9 642.6,768.8 642.4,767.8 642.2,766.7 642,765.7 641.8,764.6 641.6,763.6 641.3,762.7 641.1,761.8 640.9,761 640.6,760.1 640.4,759.3 640.1,758.5 639.9,757.6 639.7,756.8 639.5,755.8 639.5,754.8 639.5,753.8 639.5,752.7 639.5,751.7 639.5,750.7 639.5,749.6 639.4,748.6 639.2,747.7 639,746.9 638.7,746.2 638.3,745.4 638,744.6 637.7,743.9 637.4,743.1 636.9,742.4 636.2,741.7 635.4,741.1 634.5,740.4 633.6,739.8 632.6,739.2 631.7,738.5 630.7,737.9 629.8,737.3 628.9,736.8 628,736.3 627.2,735.9 626.3,735.5 625.5,735 624.6,734.6 623.8,734.2 622.9,733.9 621.9,733.6 620.9,733.4 619.9,733.3 618.8,733.2 617.8,733.1 616.7,733 615.7,732.9 614.6,732.8 613.6,732.7 612.5,732.7 611.5,732.6 610.4,732.6 609.4,732.5 608.4,732.5 607.3,732.4 606.3,732.4 605.4,732.3 604.5,732.1 603.7,731.9 602.8,731.8 602,731.6 601.2,731.4 600.3,731.2 599.5,731 598.7,730.8 597.8,730.7 597,730.5 596.2,730.4 595.4,730.3 594.7,730.2 594.1,730.2 593.4,730.2 592.7,730.2 592,730.2 591.4,730.2 590.8,730.3 590.4,730.3 590.2,730.5 590.1,730.7 589.7,730.8 589.1,731 588.1,731.2 587,731.4 585.8,731.7 584.6,731.9 583.4,732.1 582.3,732.3 581.1,732.5 580,732.6 578.9,732.7 577.9,732.8 576.8,732.9 575.8,733.1 574.8,733.2 573.7,733.3 572.7,733.3 571.8,733.4 570.9,733.4 570.1,733.4 569.2,733.4 568.4,733.4 567.6,733.4 566.7,733.4 565.9,733.5 565.2,733.6 564.4,733.9 563.7,734.2 563,734.5 562.3,734.8 561.6,735.1 560.9,735.4 560.2,735.8 559.6,736.2 559,736.8 558.5,737.4 558,738 557.5,738.6 557,739.2 556.5,739.8 556,740.5 555.6,741.2 555.2,742 554.9,742.8 554.6,743.7 554.3,744.5 554,745.3 553.7,746.2 553.3,747 553,747.8 552.6,748.5 552.2,749.3 551.7,750 551.3,750.7 550.9,751.5 550.5,752.2 550,752.8 549.4,753.3 548.8,753.7 548.2,754 547.5,754.3 546.9,754.6 546.2,754.9 545.5,755.2 544.9,755.4 544.2,755.4 543.6,755.4 542.9,755.2 542.2,755 541.6,754.8 540.9,754.6 540.3,754.5 539.7,754.2 539.2,753.8 538.8,753.2 538.5,752.6 538.2,752 537.8,751.3 537.5,750.7 537.2,750.1 536.9,749.4 536.5,748.8 536.1,748.2 535.7,747.6 535.3,747 534.9,746.3 534.5,745.7 534,745.1 533.6,744.5 533.1,744 532.5,743.5 531.9,743.1 531.2,742.6 530.6,742.2 530,741.8 529.3,741.3 528.9,740.7 528.8,740 528.8,739.2 529.2,738.2 529.5,737.3 529.8,736.3 530.1,735.4 530.4,734.4 530.7,733.4 530.9,732.4 531.2,731.4 531.4,730.4 531.6,729.3 531.8,728.3 532,727.2 532.2,726.2 532.5,725.1 532.8,724.1 533.1,723 533.6,722 534,721 534.4,719.9 534.8,718.9 535.2,717.8 535.6,716.8 535.8,715.8 536,714.7 536.1,713.7 536.2,712.7 536.3,711.7 536.4,710.7 536.5,709.7 536.6,708.9 536.7,708.3 536.8,708 536.9,707.8 536.9,707.5 536.8,706.9 536.6,706.1 536.3,705 536.1,704 535.8,703 535.5,701.9 535.2,700.9 534.9,699.8 534.5,698.8 534,697.8 533.5,696.7 533,695.7 532.5,694.6 532,693.6 531.4,692.5 530.9,691.5 530.3,690.4 529.7,689.4 529.1,688.3 528.4,687.3 527.8,686.2 527.2,685.2 526.6,684.2 525.9,683.2 525.3,682.2 524.7,681.3 524,680.5 523.4,679.6 522.8,678.8 522.1,677.9 521.5,677.1 520.8,676.3 520.1,675.4 519.3,674.6 518.5,673.7 517.6,672.9 516.8,672 516,671.2 515.1,670.4 514.4,669.5 513.7,668.5 513.1,667.6 512.6,666.6 512.1,665.5 511.6,664.5 511.1,663.5 510.6,662.5 510.2,661.5 509.9,660.6 509.7,659.7 509.6,658.9 509.5,658.1 509.4,657.2 509.3,656.4 509.2,655.6 509.2,654.8 509.4,654.1 509.6,653.5 510,652.9 510.4,652.3 510.8,651.7 511.2,651.1 511.6,650.5 512.1,650 512.7,649.6 513.4,649.3 514.2,649 515,648.8 515.8,648.6 516.6,648.3 517.4,648.1 518.3,647.9 519.2,647.8 520.2,647.8 521.2,647.8 522.3,647.8 523.3,647.9 524.4,647.9 525.4,648 526.4,648 527.5,648.2 528.5,648.3 529.5,648.5 530.5,648.7 531.6,648.9 532.6,649.1 533.6,649.3 534.6,649.6 535.5,649.9 536.4,650.3 537.2,650.7 538.1,651.1 538.9,651.5 539.7,651.9 540.6,652.4 541.3,652.8 541.9,653.3 542.4,653.9 542.8,654.5 543.2,655.1 543.6,655.7 544,656.3 544.4,656.9 544.8,657.5 545.2,658.2 545.5,658.8 545.8,659.4 546.2,660 546.5,660.7 546.8,661.3 547.1,661.9 547.4,662.4 547.6,662.8 547.7,662.9 547.8,663 548.1,662.8 548.5,662.5 549,662 549.7,661.4 550.3,660.7 550.7,660 551,659.2 551.2,658.5 551.5,657.7 551.7,657 551.9,656.2 552.1,655.5 552.2,654.6 552.2,653.7 552,652.7 551.7,651.6 551.5,650.5 551.2,649.4 550.9,648.3 550.7,647.1 550.4,646 550.1,644.9 549.8,643.8 549.6,642.7 549.5,641.7 549.7,640.8 550,639.9 550.6,639.2 551.3,638.7 552,638.4 552.8,638.4 553.8,638.5 554.6,638.8 555.3,639.1 555.9,639.6 556.4,640.1 557,640.6 557.5,641.1 558,641.6 558.5,642.1 558.9,642.7 559.3,643.3 559.6,644 559.8,644.8 560,645.6 560.2,646.4 560.4,647.2 560.6,648 560.7,648.8 560.7,649.6 560.6,650.5 560.4,651.3 560.1,652.2 559.9,653 559.7,653.9 559.5,654.7 559.4,655.6 559.3,656.4 559.2,657.3 559.2,658.1 559.2,658.9 559.2,659.8 559.2,660.6 559.2,661.5 559.3,662.4 559.5,663.3 559.7,664.3 560,665.4 560.3,666.4 560.7,667.5 561,668.5 561.3,669.6 561.6,670.6 562,671.5 562.4,672.3 562.8,673.1 563.3,673.8 563.7,674.5 564.1,675.3 564.5,676 565,676.7 565.6,677.2 566.2,677.6 566.9,678 567.6,678.3 568.3,678.6 568.9,678.9 569.6,679.2 570.3,679.3 571,679.1 571.8,678.7 572.5,678.1 573.3,677.5 574,676.8 574.7,676.2 575.5,675.5 576.1,674.8 576.6,674.1 576.9,673.3 577.1,672.5 577.4,671.6 577.6,670.8 577.8,669.9 578,669.1 578.2,668.2 578.5,667.4 578.8,666.6 579.1,665.7 579.4,664.9 579.7,664.1 580.1,663.3 580.4,662.4 580.7,661.7 581.1,661.1 581.6,660.6 582.1,660.2 582.6,659.8 583.1,659.4 583.6,659 584.1,658.6 584.7,658.2 585.3,657.9 585.9,657.6 586.6,657.4 587.3,657.2 588,656.9 588.7,656.7 589.4,656.5 590.2,656.3 591,656 591.8,655.8 592.7,655.6 593.5,655.5 594.4,655.3 595.3,655.1 596.1,654.9 597,654.7 597.9,654.5 598.7,654.3 599.6,654.1 600.3,653.8 600.8,653.3 601.2,652.7 601.5,651.9 601.7,651.2 601.9,650.4 602.1,649.6 602.4,648.9 602.5,648 602.4,647.1 602.2,646.1 601.9,645.1 601.6,644 601.3,642.9 601,641.9 600.7,640.8 600.4,639.7 600.1,638.7 599.9,637.6 599.7,636.6 599.5,635.6 599.3,634.5 599.1,633.5 598.9,632.5 598.7,631.4 598.6,630.2 598.5,629.1 598.5,627.8 598.5,626.6 598.5,625.3 598.5,624.1 598.5,622.8 598.6,621.6 598.6,620.5 598.7,619.4 598.8,618.3 598.9,617.3 599,616.2 599.1,615.1 599.2,614.1 599.2,613.1 599.2,612.1 599,611.2 598.8,610.4 598.6,609.5 598.4,608.7 598.2,607.8 598,607 597.7,606.2 597.3,605.4 596.9,604.7 596.3,604.1 595.8,603.5 595.3,602.8 594.7,602.2 594.2,601.6 593.6,601 593,600.5 592.3,600.1 591.6,599.8 591,599.4 590.6,598.9 590.4,598.2 590.3,597.5 590,597 589.7,596.6 589.1,596.5 588.4,596.6 587.7,596.7 587,596.8 586.3,597 585.6,597.1 584.9,597.2 584.1,597.5 583.4,597.8 582.7,598.3 581.9,598.7 581.2,599.1 580.4,599.5 579.7,600 579,600.4 578.4,601 577.8,601.5 577.3,602.2 576.7,602.8 576.2,603.4 575.7,604.1 575.1,604.7 574.6,605.4 574.1,606.1 573.6,606.8 573.1,607.5 572.5,608.2 572,608.9 571.5,609.7 571,610.4 570.4,611 569.9,611.6 569.3,612.1 568.6,612.5 568,612.8 567.4,613.2 566.8,613.6 566.1,614 565.5,614.2 564.8,614.3 564,614.1 563.3,613.8 562.5,613.5 561.7,613.2 560.9,612.9 560.1,612.6 559.5,612.2 558.9,611.6 558.5,610.9 558.2,610.2 557.9,609.4 557.6,608.6 557.3,607.8 557,607 556.7,606.1 556.4,605.2 556.1,604.2 555.8,603.2 555.5,602.1 555.2,601.1 554.8,600 554.5,599 554.2,598 553.8,597 553.4,596.1 553,595.3 552.6,594.4 552.1,593.6 551.7,592.7 551.3,591.9 550.8,591.2 550.1,590.7 549.3,590.3 548.5,590.2 547.6,590 546.7,589.8 545.8,589.6 544.9,589.4 544,589.4 543.1,589.4 542,589.6 541,589.9 539.9,590.1 538.9,590.4 537.8,590.7 536.7,591 535.8,591.4 534.9,591.9 534.2,592.5 533.6,593.2 532.9,594 532.3,594.7 531.7,595.5 531,596.2 530.4,597 529.8,597.7 529.1,598.5 528.5,599.4 527.9,600.2 527.3,601 526.7,601.8 526,602.7 525.4,603.4 524.6,604 523.9,604.5 523,604.9 522.2,605.4 521.4,605.8 520.6,606.2 519.8,606.6 518.9,607 518.1,607.4 517.3,607.7 516.4,608 515.6,608.3 514.8,608.6 513.9,608.9 513.1,609.2 512.2,609.5 511.3,609.6 510.4,609.6 509.4,609.6 508.5,609.6 507.5,609.5 506.5,609.5 505.6,609.4 504.6,609.4 503.6,609.4 502.7,609.3 501.7,609.3 500.7,609.3 499.7,609.3 498.8,609.3 497.8,609.4 496.8,609.5 495.8,609.6 494.8,609.7 493.9,609.8 492.9,609.9 491.9,609.9 490.9,610 489.9,610.1 488.9,610.3 487.9,610.5 486.9,610.8 485.8,611.1 484.8,611.5 483.7,611.8 482.7,612.2 481.6,612.6 480.6,612.9 479.7,613.4 478.8,613.9 478,614.4 477.1,614.9 476.3,615.4 475.4,616 474.6,616.5 473.8,617.1 473.2,617.6 472.5,618.2 472,618.9 471.5,619.5 470.9,620.1 470.4,620.8 469.9,621.4 469.5,622.2 469.2,623.1 469.1,624.1 469.1,625.2 469.3,626.3 469.8,627.2 470.6,627.9 471.7,628.6 472.6,629.2 473.4,629.8 474,630.4 474.5,631 475,631.6 475.4,632.2 475.9,632.7 476.4,633.3 476.6,634 476.6,634.7 476.4,635.5 475.9,636.4 475.5,637.2 475.2,637.6 475,637.9 474.8,638 474.5,638 473.9,638 473.2,637.9 472.2,637.8 471.2,637.7 470.2,637.6 469.3,637.5 468.3,637.4 467.3,637.4 466.4,637.4 465.5,637.5 464.7,637.6 463.8,637.7 463,637.8 462.1,637.9 461.3,638 460.4,638.2 459.6,638.5 458.9,639 458.1,639.5 457.4,640 456.6,640.6 455.9,641.1 455.2,641.6 454.5,642.2 454,642.9 453.6,643.6 453.2,644.4 452.9,645.1 452.6,645.9 452.3,646.7 451.9,647.4 451.9,648.1 452.2,648.8 452.8,649.3 453.8,649.8 454.7,650.1 455.5,650.3 456.4,650.2 457.3,650 458.1,649.8 459,649.6 459.8,649.4 460.7,649.2 461.5,649.2 462.4,649.2 463.2,649.4 464,649.7 464.7,650 465.5,650.3 466.3,650.6 467.1,650.9 467.9,651.3 468.6,651.7 469.2,652.2 469.8,652.8 470.4,653.5 471.1,654.1 471.7,654.7 472.3,655.3 472.9,656 473.4,656.8 474,657.8 474.5,658.8 475,659.8 475.5,660.9 476.1,661.9 476.6,662.9 477.1,664 477.5,665 478,666.1 478.4,667.1 478.8,668.1 479.2,669.2 479.7,670.2 480.1,671.3 480.5,672.3 480.8,673.4 481.2,674.4 481.5,675.4 481.8,676.5 482.1,677.5 482.4,678.6 482.7,679.6 483,680.7 483.3,681.7 483.5,682.7 483.7,683.7 483.9,684.7 484.1,685.7 484.3,686.7 484.5,687.7 484.5,688.7 484.2,689.6 483.7,690.5 483,691.3 482.3,692.2 481.6,693 480.9,693.8 480.1,694.7 479.5,695.5 478.9,696.4 478.3,697.2 477.8,698 477.2,698.9 476.7,699.7 476.2,700.6 475.7,701.4 475.2,702.3 474.8,703.3 474.4,704.4 474.1,705.6 473.8,706.5 473.5,707.1 473.3,707.4 473,707.5 472.9,707.6 472.8,707.7 472.8,707.9 472.9,708 472.9,708.4 472.9,709 472.9,709.8 472.8,710.8 472.7,711.8 472.5,712.8 472.4,713.9 472.3,714.9 472.2,715.9 472,717 471.7,718 471.4,719.1 471.1,720.1 470.8,721.2 470.5,722.2 470.1,723.3 469.8,724.3 469.4,725.4 469,726.4 468.6,727.4 468.2,728.5 467.8,729.5 467.4,730.6 466.9,731.6 466.5,732.7 466.1,733.7 465.7,734.8 465.3,735.8 464.9,736.9 464.4,737.9 464,739 463.6,740 463.2,741 462.7,741.9 462.2,742.8 461.7,743.7 461.1,744.5 460.6,745.4 460.1,746.2 459.6,747 459,747.9 458.5,748.9 458,749.9 457.5,750.9 457,751.9 456.4,753 455.9,754 455.4,755.1 454.9,756.1 454.4,757.1 454,758.2 453.6,759.2 453.2,760.3 452.7,761.3 452.3,762.3 451.9,763.4 451.5,764.3 451.2,765.2 450.9,766 450.7,766.8 450.5,767.5 450.2,768.3 450,769 449.8,769.8 449.4,770.3 448.9,770.6 448.2,770.8 447.5,770.7 446.7,770.5 445.9,770.4 445.1,770.3 444.4,770.2 443.6,770 442.8,769.7 442.1,769.3 441.4,768.8 440.6,768.2 439.9,767.7 439.2,767.2 438.4,766.7 437.8,766.1 437.1,765.4 436.6,764.6 436,763.8 435.5,763 435,762.1 434.5,761.3 433.9,760.5 433.3,759.7 432.7,759 431.9,758.5 431.1,757.9 430.3,757.4 429.4,756.9 428.6,756.4 427.8,755.9 426.9,755.3 426,754.8 425.1,754.3 424.2,753.8 423.3,753.3 422.3,752.8 421.4,752.2 420.5,751.7 419.5,751.2 418.6,750.8 417.6,750.3 416.7,749.9 415.8,749.5 414.8,749.1 413.9,748.6 412.9,748.2 412,747.8 411.1,747.4 410.2,746.9 409.4,746.4 408.5,746 407.7,745.5 406.8,745.1 405.9,744.6 405,744.2 404,743.8 402.9,743.4 401.8,743 400.6,742.6 399.5,742.2 398.3,741.8 397.2,741.5 396.2,741 395.3,740.6 394.7,740.1 394.1,739.6 393.6,739 393.1,738.5 392.5,738 392,737.5 391.5,736.9 390.9,736.4 390.3,735.9 389.6,735.4 389,734.8 388.4,734.3 387.8,733.8 387.1,733.3 386.5,732.7 385.9,732.1 385.3,731.4 384.6,730.6 384,729.9 383.3,729.1 382.7,728.4 382.1,727.7 381.5,726.9 380.9,726.1 380.3,725.3 379.8,724.5 379.3,723.6 378.8,722.8 378.3,721.9 377.7,721.1 377.3,720.3 376.8,719.4 376.5,718.6 376.2,717.7 375.8,716.9 375.5,716 375.2,715.1 374.9,714.3 374.7,713.5 374.7,712.7 374.8,712 375,711.3 375.2,710.7 375.4,710 375.7,709.4 375.9,708.7 376.1,708 376.3,707.4 376.4,706.7 376.5,706.1 376.6,705.5 376.6,704.8 376.7,704.2 376.8,703.6 377,702.8 377.3,702 377.8,701.1 378.3,700.1 378.9,699.1 379.4,698.1 379.9,697.1 380.5,696.1 381,695.1 381.6,694.1 382.1,693.1 382.6,692.1 383.2,691.1 383.7,690.1 384.3,689.1 384.8,688.1 385.4,687.1 385.9,686.1 386.4,685.1 387,684.1 387.4,683.1 387.8,682.1 388.1,681.1 388.3,680.1 388.5,679 388.7,678 388.9,677 389.1,675.9 389.3,674.9 389.3,673.9 389.3,672.8 389.2,671.8 389.1,670.8 389,669.7 388.9,668.7 388.8,667.7 388.6,666.6 388.4,665.6 388.1,664.6 387.8,663.5 387.5,662.5 387.2,661.5 386.9,660.4 386.6,659.4 386.2,658.3 385.8,657.3 385.3,656.3 384.8,655.2 384.3,654.2 383.8,653.2 383.3,652.1 382.8,651.1 382.2,650.1 381.6,649.3 381,648.5 380.4,647.7 379.8,647 379.2,646.3 378.6,645.6 378,644.8 377.3,644.2 376.6,643.6 375.9,643.1 375.2,642.7 374.5,642.3 373.8,641.9 373.1,641.5 372.4,641.1 371.6,640.7 370.8,640.4 370,640.1 369.1,639.9 368.3,639.6 367.4,639.4 366.6,639.2 365.7,638.9 365.1,638.4 364.8,637.7 364.7,636.8 364.8,635.6 364.9,634.4 365.1,633.2 365.2,632 365.3,630.8 365.4,629.6 365.6,628.4 365.7,627.2 365.8,626 366,625 366.2,624.1 366.3,623.3 366.6,622.7 366.8,622.1 367,621.5 367.2,620.9 367.4,620.2 367.4,619.6 367.3,619 367.1,618.4 366.7,617.8 366.3,617.2 365.9,616.6 365.5,616 365.1,615.4 364.6,614.8 364.1,614.3 363.5,613.9 362.9,613.5 362.3,613 361.7,612.6 361.1,612.2 360.4,611.8 359.8,611.4 359.2,610.9 358.6,610.4 357.9,609.9 357.3,609.4 356.7,608.8 356.1,608.3 355.4,607.8 354.8,607.2 354.2,606.6 353.5,605.9 352.9,605.2 352.3,604.4 351.6,603.7 351,603 350.4,602.2 349.8,601.5 349.1,600.9 348.5,600.4 347.9,599.8 347.3,599.3 346.7,598.8 346,598.3 345.4,597.8 344.7,597.3 344,596.9 343.1,596.5 342.2,596.1 341.3,595.8 340.4,595.4 339.4,595 338.5,594.7 337.6,594.3 336.7,594 335.8,593.6 334.8,593.2 333.9,592.9 333,592.5 332.1,592.2 331.2,591.8 330.4,591.5 329.9,591.2 329.6,591 329.6,590.8 329.6,590.5 329.8,590 330.2,589.3 330.7,588.5 331.2,587.7 331.7,586.9 332.2,586.1 332.7,585.3 333.1,584.5 333.4,583.6 333.6,582.8 333.6,582 333.7,581.1 333.8,580.3 333.8,579.5 333.9,578.6 334,577.8 334.1,577 334.1,576.1 334.2,575.3 334.4,574.5 334.6,573.6 334.9,572.8 335.4,571.9 335.8,571.1 336.2,570.2 336.6,569.4 337.1,568.5 337.6,567.7 338.2,566.9 339,566.1 339.8,565.4 340.7,564.6 341.5,563.9 342.4,563.1 343.2,562.4 344.1,561.7 345.1,561 346.1,560.4 347.1,559.7 348.2,559.1 349.2,558.5 350.3,557.8 351.3,557.2 352.3,556.7 353.1,556.2 353.9,555.8 354.6,555.5 355.3,555.2 356,554.9 356.7,554.6 357.4,554.3 358,553.8 358.3,553.2 358.4,552.3 358.4,551.3 358.3,550.3 358.2,549.3 358.2,548.3 358.1,547.3 358,546.2 357.9,545.2 357.8,544.2 357.7,543.1 357.5,542.1 357.4,541.1 357.2,540 357.1,539 357,538 357,537.1 357,536.3 357.1,535.5 357.2,534.8 357.3,534.1 357.4,533.3 357.5,532.6 357.7,531.9 357.9,531.2 358.2,530.6 358.5,530.1 358.8,529.5 359.2,529 359.5,528.5 359.8,527.9 360.3,527.4 360.8,527 361.5,526.6 362.2,526.3 363,526 363.7,525.6 364.5,525.3 365.2,525 366,524.7 366.8,524.5 367.6,524.4 368.4,524.3 369.3,524.2 370.1,524.2 371,524.1 371.8,524 372.6,524 373.5,523.9 374.3,523.8 375.2,523.8 376,523.7 376.9,523.7 377.9,523.8 378.8,523.8 379.8,523.9 380.8,524 381.7,524 382.7,524.1 383.6,524.2 384.6,524.2 385.6,524.3 386.5,524.4 387.3,524.4 387.8,524.5 388.2,524.6 388.3,524.7 388.4,524.9 388.6,525.3 388.8,525.8 389,526.4 389,527.1 389,527.9 388.8,528.7 388.5,529.5 388.2,530.4 387.9,531.2 387.6,532.1 387.2,532.9 386.8,533.7 386.4,534.4 385.8,535.1 385.2,535.8 384.5,536.4 383.9,537 383.3,537.7 382.6,538.3 382,539 381.4,539.7 380.8,540.5 380.1,541.4 379.5,542.2 378.9,543 378.3,543.8 377.7,544.7 377.1,545.4 376.7,546.2 376.3,547 376,547.7 375.7,548.4 375.4,549.1 375.1,549.8 374.8,550.5 374.6,551.2 374.6,551.9 374.7,552.6 375.1,553.3 375.4,554.1 375.7,554.8 376,555.5 376.3,556.2 376.6,556.9 377.1,557.6 377.6,558.3 378.3,559 378.9,559.7 379.5,560.5 380.1,561.2 380.7,561.9 381.4,562.5 382.1,563.1 382.9,563.6 383.7,564 384.5,564.4 385.3,564.8 386.2,565.2 387,565.7 387.9,566 388.8,566.3 389.8,566.5 390.8,566.6 391.8,566.8 392.9,566.9 393.9,567.1 394.9,567.2 396,567.3 397.1,567.3 398.2,567.3 399.4,567.2 400.6,567.2 401.7,567.1 402.9,567 404.1,566.9 405,566.9 405.6,567 406,567.1 406.2,567.3 406.4,567.5 406.8,567.6 407.3,567.7 408,567.8 408.7,567.8 409.3,567.9 410,568 410.6,568 411.4,568.1 412.2,568.3 413.2,568.5 414.2,568.7 415.3,569 416.3,569.2 417.4,569.5 418.4,569.7 419.5,569.9 420.5,570.2 421.6,570.4 422.6,570.7 423.7,570.9 424.7,571.1 425.8,571.4 426.8,571.6 427.8,571.8 428.7,571.9 429.6,571.9 430.5,571.9 431.3,571.8 432.1,571.8 433,571.7 433.8,571.7 434.7,571.7 435.5,571.6 436.3,571.6 437.2,571.5 438,571.5 438.9,571.4 439.7,571.2 440.6,571.1 441.4,570.9 442.2,570.7 443.1,570.5 443.9,570.4 444.8,570.2 445.6,570 446.5,569.9 447.3,569.7 448.2,569.5 449,569.2 449.9,568.8 450.7,568.4 451.5,568 452.4,567.6 453.2,567.1 454,566.7 454.9,566.3 455.7,565.8 456.4,565.3 457.2,564.8 457.9,564.2 458.6,563.7 459.4,563.2 460.1,562.6 460.6,562 460.7,561.3 460.6,560.5 460.2,559.5 459.9,558.6 459.6,557.6 459.4,556.6 459.3,555.5 459.2,554.5 459,553.4 458.9,552.4 458.7,551.4 458.6,550.3 458.5,549.3 458.3,548.2 458.2,547.2 457.9,546.1 457.6,545.1 457.2,544.1 456.6,543.1 456.1,542 455.6,541 455,540 454.5,538.9 453.9,537.9 453.4,536.9 452.9,535.9 452.3,534.8 452,533.9 452,533.1 452.2,532.4 452.7,531.8 453.2,531.2 453.7,530.6 454.2,530 454.6,529.4 455.1,528.8 455.6,528.3 456.1,527.9 456.7,527.5 457.2,527.1 457.7,526.8 458.2,526.4 458.8,526 459.4,525.7 460.2,525.5 461.1,525.4 462.2,525.3 463,525 463.7,524.5 464.1,523.7 464.3,522.7 464.5,521.7 464.8,520.7 465,519.7 465.2,518.7 465.4,517.7 465.7,516.7 466,515.6 466.3,514.6 466.6,513.5 466.9,512.5 467.2,511.5 467.5,510.4 467.8,509.4 467.9,508.5 468,507.6 468,506.7 468,505.9 468,505 468,504.2 468,503.3 468,502.5 468,501.7 468,500.8 468,500 468,499.1 467.9,498.3 467.8,497.4 467.7,496.6 467.5,495.8 467.4,494.9 467.2,494.1 467.1,493.3 467,492.4 466.8,491.6 466.7,490.7 466.5,489.9 466.4,489 466.2,488.1 466,487.2 465.7,486.2 465.5,485.2 465.2,484.2 465,483.2 464.7,482.2 464.5,481.2 464.2,480.2 464,479.2 463.7,478.2 463.5,477.2 463.2,476.2 463,475.2 462.7,474.2 462.5,473.2 462.2,472.2 462,471.2 461.7,470.2 461.5,469.2 461.3,468.2 461.2,467.2 461.1,466.2 461,465.2 460.9,464.3 460.8,463.3 460.7,462.3 460.6,461.3 460.5,460.3 460.4,459.4 460.3,458.4 460.2,457.4 460,456.4 459.7,455.3 459.4,454.2 459.1,453.2 458.8,452.1 458.6,451 458.3,449.9 457.8,449 457.2,448.2 456.5,447.6 455.6,447 454.7,446.5 453.8,446 453,445.5 452.1,444.9 451.2,444.4 450.3,443.9 449.4,443.4 448.5,442.9 447.6,442.3 446.7,441.8 445.9,441.3 445,440.8 444.1,440.2 443.1,439.6 442.2,439 441.3,438.4 440.3,437.8 439.4,437.1 438.4,436.5 437.5,435.9 436.6,435.3 435.8,434.9 435.1,434.5 434.4,434.3 433.8,434 433.2,433.8 432.5,433.5 431.9,433.3 431.1,433.2 430.2,433.4 429.2,433.7 428.1,434.2 427.3,434.8 426.7,435.4 426.5,436 426.4,436.7 426.4,437.3 426.4,438 426.4,438.7 426.4,439.3 426.4,440 426.5,440.8 426.5,441.6 426.6,442.4 426.7,443.3 426.9,444.1 427,444.9 427.1,445.8 427.2,446.6 427.4,447.3 427.7,448 428,448.7 428.3,449.3 428.7,449.9 429,450.6 429.3,451.2 429.7,451.9 430.2,452.6 430.7,453.4 431.3,454.3 432,455.1 432.6,455.9 433.2,456.8 433.8,457.6 434.4,458.5 434.9,459.4 435.4,460.4 435.8,461.4 436.2,462.5 436.6,463.5 437.1,464.5 437.5,465.6 437.8,466.6 438.2,467.6 438.5,468.6 438.8,469.6 439.1,470.6 439.4,471.6 439.7,472.7 440,473.7 440.1,474.6 440,475.5 439.6,476.4 439,477.2 438.4,478.1 437.8,478.9 437.2,479.7 436.6,480.6 435.9,481.4 435.3,482.2 434.6,483.1 433.8,483.9 433.1,484.7 432.4,485.6 431.6,486.4 430.9,487.3 430.2,488.1 429.5,488.9 428.8,489.8 428.2,490.6 427.6,491.5 426.9,492.3 426.3,493.2 425.7,494 425.2,494.9 424.8,495.7 424.5,496.6 424.4,497.4 424.2,498.3 424.1,499.1 423.9,500 423.8,500.8 423.7,501.7 423.5,502.5 423.4,503.4 423.2,504.2 423.2,505.1 423.2,506 423.3,507 423.6,508.1 423.8,509.2 424,510.2 424.2,511.3 424.4,512.3 424.6,513.3 424.9,514.3 425.1,515.2 425.4,516 425.6,516.8 425.9,517.7 426.2,518.5 426.4,519.4 426.6,520.1 426.7,520.5 426.6,520.8 426.5,520.9 426.2,521 425.6,521.1 424.9,521.2 423.9,521.2 423,521.3 422.1,521.3 421.1,521.4 420.2,521.5 419.2,521.5 418.3,521.6 417.3,521.7 416.4,521.7 415.5,521.8 414.6,521.9 413.7,522 412.9,522.1 412.1,522.2 411.2,522.3 410.4,522.4 409.5,522.5 408.7,522.6 407.9,522.8 407,522.9 406.2,523 405.5,523.1 405,523.2 404.7,523.3 404.5,523.5 404.1,523.6 403.5,523.6 402.7,523.6 401.7,523.6 400.7,523.6 399.7,523.6 398.7,523.6 397.7,523.6 396.7,523.6 395.7,523.6 394.7,523.6 393.6,523.6 392.7,523.5 391.8,523.2 391,522.7 390.2,522.1 389.4,521.4 388.6,520.8 387.8,520.1 387,519.5 386.3,518.9 385.6,518.2 384.9,517.5 384.3,516.8 383.7,516.1 383,515.4 382.4,514.7 381.8,514 381.2,513.3 380.5,512.6 379.9,511.9 379.3,511.2 378.7,510.5 378,509.6 377.4,508.6 376.8,507.6 376.2,506.6 375.5,505.5 374.9,504.5 374.3,503.5 373.8,502.5 373.3,501.5 372.9,500.7 372.5,499.8 372.2,499 371.8,498.2 371.5,497.4 371.1,496.5 370.8,495.7 370.4,494.9 370.1,494 369.8,493.2 369.4,492.4 369.1,491.6 368.8,490.7 368.5,489.9 368.3,489 368,488.2 367.7,487.4 367.4,486.5 367.1,485.7 366.9,484.9 366.6,484 366.3,483.2 366,482.3 365.6,481.3 365.1,480.3 364.6,479.3 364,478.2 363.5,477.2 363,476.1 362.5,475.1 361.8,474.1 361.2,473.1 360.4,472.2 359.5,471.4 358.7,470.5 357.9,469.7 357,468.8 356.2,468 355.3,467.3 354.5,466.6 353.7,466.1 352.8,465.7 352,465.2 351.2,464.8 350.4,464.4 349.5,464 348.9,463.4 348.3,462.7 347.9,461.8 347.7,460.8 347.5,459.8 347.2,458.8 347,457.8 346.7,456.8 346.6,455.8 346.4,454.8 346.4,453.8 346.4,452.9 346.5,451.9 346.5,450.9 346.5,449.9 346.5,449 346.6,448 346.6,447 346.6,446 346.6,445 346.6,444.1 346.5,443.1 346.4,442.1 346.1,441.2 345.9,440.2 345.7,439.2 345.5,438.3 345.2,437.3 344.9,436.4 344.3,435.8 343.6,435.2 342.8,434.8 341.9,434.3 341.1,433.9 340.2,433.5 339.4,433.1 338.4,432.7 337.4,432.3 336.3,432 335.1,431.7 334,431.4 332.8,431.1 331.6,430.8 330.5,430.5 329.3,430.2 328.1,429.9 326.9,429.6 325.8,429.3 324.6,429 323.4,428.8 322.3,428.5 321.1,428.2 319.9,427.9 318.7,427.6 317.6,427.3 316.4,427 315.3,426.8 314.2,426.6 313.2,426.6 312.2,426.6 311.2,426.6 310.2,426.6 309.3,426.6 308.3,426.6 307.3,426.6 306.3,426.6 305.3,426.6 304.4,426.6 303.4,426.6 302.3,426.6 301.3,426.7 300.3,426.8 299.2,426.9 298.2,427 297.1,427.1 296.1,427.2 295.1,427.2 294.2,427.1 293.3,426.9 292.5,426.6 291.7,426.3 290.8,426 290,425.7 289.2,425.4 288.4,425 287.7,424.6 286.9,424.1 286.2,423.6 285.5,423.1 284.8,422.6 284,422.1 283.3,421.5 282.7,421 282,420.4 281.5,419.7 281,419 280.5,418.3 280,417.6 279.5,416.9 279.1,416.2 278.8,415.6 278.7,414.9 278.8,414.3 279,413.7 279.3,413.1 279.6,412.5 279.9,412 280.2,411.4 280.5,410.8 281,410.2 281.7,409.6 282.4,409 283.1,408.4 283.8,407.9 284.5,407.3 285.3,406.7 286,406.2 286.8,405.8 287.5,405.5 288.3,405.3 289.2,405.1 290,404.9 290.8,404.7 291.6,404.5 292.3,404.4 293,404.4 293.7,404.5 294.3,404.6 295,404.8 295.6,405 296.2,405.1 296.9,405.3 297.5,405.5 298.3,405.7 299.1,406 299.9,406.3 300.7,406.6 301.6,406.9 302.4,407.2 303.2,407.6 304.1,407.8 305,407.9 306,407.9 306.9,407.9 307.9,407.8 308.9,407.7 309.9,407.6 310.8,407.6 311.8,407.5 312.8,407.4 313.8,407.4 314.7,407.3 315.7,407.3 316.7,407.3 317.7,407.3 318.6,407.4 319.6,407.4 320.6,407.5 321.5,407.6 322.5,407.6 323.5,407.7 324.4,407.8 325.4,407.9 326.4,407.9 327.3,408 328.2,408.2 329.1,408.4 329.9,408.7 330.8,409 331.6,409.3 332.4,409.6 333.3,409.8 334.1,410.1 335,410.4 335.8,410.7 336.6,410.9 337.5,411.2 338.5,411.4 339.5,411.5 340.6,411.6 341.7,411.7 342.7,411.8 343.8,411.9 344.9,412 345.9,411.9 346.9,411.7 347.8,411.2 348.6,410.6 349.5,409.9 350.3,409.3 351.2,408.7 352,408 352.7,407.3 353.3,406.6 353.8,405.8 354.1,404.9 354.4,404.1 354.7,403.2 355.1,402.4 355.4,401.6 355.7,400.7 355.9,399.9 356.1,399 356.2,398.2 356.4,397.3 356.5,396.5 356.6,395.6 356.8,394.8 356.9,394 357.1,393.1 357.2,392.3 357.3,391.4 357.5,390.5 357.6,389.5 357.7,388.5 357.8,387.4 357.9,386.3 358,385.2 358.1,384 358.2,382.9 358.3,381.8 358.4,380.7 358.5,379.6 358.6,378.5 358.6,377.4 358.7,376.3 358.7,375.3 358.6,374.3 358.6,373.3 358.5,372.3 358.5,371.3 358.5,370.3 358.4,369.3 358.4,368.3 358.4,367.3 358.3,366.3 358,365.5 357.5,365 356.8,364.7 355.8,364.6 354.8,364.5 353.8,364.5 352.8,364.4 351.9,364.3 350.9,364.2 349.9,364.2 348.9,364.1 347.9,364 346.9,363.8 346,363.6 345,363.3 344,362.9 343.1,362.5 342.1,362.1 341.1,361.7 340.2,361.3 339.5,360.8 339.2,360.2 339.1,359.6 339.4,358.9 339.6,358.2 339.9,357.5 340.2,356.8 340.4,356.1 340.6,355.3 340.7,354.4 340.7,353.5 340.6,352.4 340.5,351.4 340.4,350.3 340.3,349.3 340.2,348.2 340,347.2 339.7,346.3 339.4,345.4 338.9,344.5 338.5,343.6 338,342.8 337.6,341.9 337.2,341 336.6,340.4 336,339.9 335.2,339.7 334.3,339.7 333.5,339.7 332.6,339.7 331.7,339.7 330.9,339.7 330,339.7 329.1,339.7 328.2,339.7 327.4,339.7 326.4,339.6 325.4,339.5 324.2,339.3 323,339.1 321.8,338.9 320.5,338.6 319.3,338.4 318.1,338.2 316.9,338 315.6,337.8 314.4,337.5 313.2,337.3 312.1,337.1 311,336.8 310.1,336.5 309.3,336.1 308.5,335.8 307.6,335.4 306.8,335.1 306,334.7 305.1,334.4 304.3,334 303.5,333.7 302.7,333.4 301.8,332.9 301,332.3 300.2,331.6 299.4,330.8 298.5,330 297.7,329.1 296.9,328.3 296,327.5 295.3,326.6 294.6,325.8 293.9,324.9 293.4,324 292.8,323.1 292.2,322.2 291.6,321.3 291,320.5 290.8,319.7 290.8,319 291.1,318.3 291.6,317.8 292.2,317.3 292.8,316.8 293.4,316.2 294,315.7 294.5,315.1 294.9,314.4 295.2,313.7 295.5,312.8 295.7,312 296,311.1 296.2,310.2 296.5,309.4 296.7,308.5 296.8,307.7 296.8,306.8 296.7,306 296.7,305.2 296.6,304.3 296.6,303.5 296.5,302.6 296.5,301.8 296.4,300.9 296.4,300.1 296.3,299.2 296.2,298.3 295.9,297.4 295.6,296.4 295.2,295.3 294.9,294.2 294.5,293.2 294.1,292.1 293.7,291 293.2,290.1 292.6,289.3 291.9,288.6 291.2,288.1 290.4,287.6 289.6,287 288.9,286.5 288.1,286 287.3,285.7 286.6,285.6 285.8,285.7 285.1,286 284.3,286.3 283.6,286.6 282.8,286.9 282.1,287.3 281.3,287.7 280.6,288.3 280,289 279.3,289.9 278.7,290.7 278,291.5 277.4,292.4 276.8,293.2 276.1,293.9 275.5,294.5 274.9,294.9 274.3,295.2 273.7,295.5 273.1,295.8 272.5,296.1 271.9,296.4 271.2,296.7 270.5,296.9 269.7,297 268.9,297.2 268,297.3 267.2,297.4 266.4,297.5 265.5,297.6 264.8,297.8 264.1,298.2 263.6,298.7 263.2,299.4 262.7,300 262.3,300.7 261.9,301.3 261.4,302 261.1,302.7 260.8,303.4 260.6,304.2 260.5,305 260.4,305.9 260.3,306.7 260.2,307.5 260,308.4 259.8,309.1 259.4,309.9 258.8,310.5 258.1,311.1 257.4,311.8 256.7,312.4 256,313 255.2,313.6 254.5,314.2 253.9,314.9 253.2,315.6 252.6,316.4 251.9,317.1 251.3,317.9 250.7,318.6 250,319.4 249.5,320.2 249.1,321.2 248.8,322.3 248.7,323.4 248.5,324.6 248.3,325.7 248.1,326.9 248,328.1 247.9,329.2 247.8,330.2 247.8,331.2 247.8,332.2 247.9,333.1 247.9,334 248,335 248,335.9 248.1,336.9 248.1,337.8 248.1,338.8 248.2,339.7 248.5,340.4 248.9,340.9 249.6,341.2 250.6,341.3 251.5,341.6 252.3,342 253.1,342.5 253.9,343.3 254.6,344 255.3,344.8 255.9,345.5 256.6,346.2 257.2,347 257.8,347.7 258.4,348.4 259.1,349.2 259.7,349.9 260.3,350.5 260.9,351.2 261.6,351.8 262.2,352.4 262.8,353.1 263.4,353.7 264,354.3 264.6,355 265.1,355.7 265.5,356.5 265.8,357.3 266.2,358.1 266.5,358.9 266.9,359.7 267.2,360.5 267.5,361.4 267.6,362.5 267.7,363.6 267.7,364.8 267.6,366.1 267.6,367.3 267.5,368.6 267.5,369.8 267.4,371 267.2,372 267,373 266.7,374 266.4,374.9 266,375.8 265.7,376.7 265.4,377.7 265,378.5 264.3,379.4 263.6,380.1 262.6,380.9 261.7,381.6 260.8,382.3 259.9,383 258.9,383.7 258,384.4 257,384.9 256,385.3 255,385.6 254,385.9 253,386.2 252,386.5 251,386.8 249.9,387.1 248.9,387.4 247.9,387.7 246.9,388 245.9,388.3 244.9,388.6 243.9,388.9 242.8,389.2 241.9,389.3 241.1,389.2 240.4,388.9 239.7,388.4 239.1,387.9 238.5,387.4 237.8,386.9 237.2,386.4 236.5,385.9 235.7,385.5 235,385.1 234.1,384.8 233.3,384.4 232.4,384 231.6,383.7 230.7,383.3 230,383.1 229.2,382.9 228.5,382.9 227.8,383 227.2,383.1 226.5,383.2 225.9,383.2 225.2,383.3 224.6,383.5 224.1,383.7 223.5,383.9 223.1,384.2 222.7,384.5 222.4,384.9 222.3,385.3 222.2,385.7 222,386.1 221.5,386.4 220.9,386.7 220.1,387 219.3,387.3 218.5,387.8 217.7,388.3 216.8,388.9 216.1,389.5 215.4,390.1 214.8,390.7 214.2,391.2 213.7,391.8 213.2,392.3 212.6,392.8 212.1,393.4 211.7,393.8 211.5,394.1 211.4,394.4 211.4,394.5 211.6,394.6 212,394.8 212.5,395 213.1,395.2 213.7,395.4 214.4,395.6 215,395.8 215.6,396 216.4,396.2 217.2,396.3 218.2,396.4 219.3,396.5 220.3,396.6 221.4,396.6 222.4,396.7 223.5,396.8 224.6,396.9 225.6,396.9 226.7,397 227.7,397.1 228.8,397.2 229.8,397.3 230.9,397.5 231.9,397.7 233,397.9 234,398.1 235,398.3 236.1,398.5 237.1,398.8 238.1,399.1 239.1,399.4 240.1,399.8 241,400.3 241.8,400.7 242.4,401.2 243,401.7 243.5,402.3 244,402.8 244.5,403.3 245.1,403.8 245.6,404.4 246.3,404.9 246.9,405.4 247.6,405.9 248.4,406.4 249.1,406.9 249.8,407.5 250.5,408 251.1,408.6 251.7,409.2 252.1,410 252.4,410.8 252.7,411.6 253,412.4 253.3,413.3 253.6,414.1 253.9,414.9 254.1,415.7 254.3,416.5 254.4,417.4 254.6,418.2 254.7,419 254.8,419.8 255,420.7 255.1,421.5 255.3,422.3 255.4,423.2 255.5,424 255.6,424.8 255.7,425.8 255.8,426.7 255.8,427.7 255.8,428.6 255.9,429.6 255.9,430.6 255.9,431.6 256,432.6 256,433.5 256,434.5 256,435.5 256.1,436.5 256.2,437.5 256.3,438.4 256.4,439.4 256.6,440.4 256.7,441.3 256.8,442.3 257,443.3 257.1,444.2 257.3,445.2 257.4,446.2 257.5,447.2 257.6,448.2 257.6,449.2 257.5,450.4 257.4,451.5 257.3,452.7 257.1,453.9 257,455.1 256.8,456.3 256.7,457.2 256.6,457.8 256.5,458.2 256.4,458.3 256,458.4 255.4,458.5 254.5,458.7 253.4,458.9 252.4,459.2 251.4,459.6 250.6,460 249.8,460.6 249.1,461.1 248.3,461.7 247.5,462.3 246.7,462.8 246,463.4 245.2,463.9 244.4,464.5 243.7,465.1 242.9,465.6 242.2,466.2 241.6,466.7 240.9,467.2 240.3,467.7 239.7,468.3 239,468.8 238.4,469.3 237.8,469.9 237.3,470.5 236.8,471.2 236.4,471.9 236,472.7 235.5,473.4 235.1,474.1 234.7,474.8 234.2,475.5 233.5,476 232.8,476.4 232,476.7 231.2,477 230.4,477.3 229.6,477.6 228.8,477.9 227.9,478.1 226.9,478.3 225.9,478.4 224.7,478.4 223.8,478.3 223.1,478.3 222.7,478.2 222.6,478.1 222.4,478 222.2,477.9 222.1,477.9 221.9,478 221.5,477.8 221,477.6 220.3,477.2 219.5,476.6 218.8,475.9 218.2,475 217.9,474.1 217.6,473 217.4,471.9 217.1,470.9 216.9,469.8 216.7,468.7 216.4,467.7 216.1,466.8 215.9,465.9 215.5,465.1 215.2,464.2 214.9,463.4 214.6,462.6 214.3,461.8 213.9,461 213.3,460.3 212.6,459.6 211.8,459 211,458.4 210.1,457.8 209.3,457.1 208.5,456.5 207.6,455.9 206.7,455.2 205.7,454.6 204.7,453.9 203.7,453.3 202.7,452.6 201.7,451.9 200.7,451.2 199.7,450.6 198.7,449.9 197.7,449.2 196.7,448.6 195.7,447.9 194.7,447.2 193.7,446.6 192.7,445.9 191.7,445.2 190.7,444.6 189.7,443.9 188.7,443.2 187.8,442.6 186.9,441.9 186.1,441.3 185.5,440.7 184.8,440 184.1,439.4 183.4,438.8 182.7,438.1 182,437.5 181.3,436.9 180.6,436.3 179.9,435.6 179.2,435 178.5,434.4 177.8,433.9 177.1,433.3 176.4,432.8 175.7,432.2 175,431.7 174.3,431.1 173.6,430.5 173,430 172.3,429.4 171.6,428.9 170.8,428.4 169.9,428 169,427.7 167.9,427.4 166.9,427.1 165.8,426.9 164.8,426.6 163.8,426.4 162.7,426.1 161.7,425.8 160.6,425.6 159.6,425.3 158.6,425.1 157.5,424.8 156.5,424.5 155.4,424.3 154.4,423.9 153.3,423.6 152.3,423.1 151.2,422.6 150.2,422 149.1,421.5 148.1,421 147,420.4 146,419.9 145.2,419.2 144.5,418.6 143.8,417.8 143.2,417.1 142.6,416.3 141.9,415.6 141.3,414.9 140.7,414.2 140.1,413.5 139.4,412.8 138.8,412.2 138.2,411.6 137.6,411 136.9,410.4 136.3,409.7 135.6,409.1 134.9,408.6 134.1,408 133.3,407.5 132.5,407 131.6,406.4 130.8,405.9 130,405.4 129.2,404.9 128.4,404.3 127.6,403.7 126.9,403.1 126.2,402.4 125.4,401.8 124.7,401.2 124,400.5 123.4,399.9 122.9,399.2 122.6,398.5 122.5,397.7 122.3,397 122.1,396.3 122,395.5 121.8,394.8 121.8,394 122,393.2ZM609.2,821.8 609.2,821.6 609.2,821.3 609.3,820.8 609.5,820.2 609.8,819.3 610,818.5 610.3,817.7 610.6,816.9 610.8,816.1 611.1,815.3 611.4,814.4 611.7,813.6 612,812.8 612.3,811.9 612.6,811.1 613,810.3 613.3,809.4 613.7,808.7 614.2,808.2 614.7,807.9 615.4,807.7 616.1,807.5 616.7,807.3 617.4,807.1 618,806.9 618.7,806.8 619.4,806.9 620.2,807 620.9,807.3 621.7,807.6 622.5,807.9 623.2,808.1 624,808.4 624.8,808.8 625.7,809.4 626.6,810 627.5,810.8 628.4,811.6 629.4,812.4 630.3,813.2 631.2,814 632.2,814.8 633.1,815.6 634,816.4 635,817.2 635.9,818 636.9,818.8 637.8,819.6 638.7,820.4 639.4,821 639.8,821.5 640,821.8 639.9,821.9 639.7,822.1 639.3,822.4 638.8,822.7 638.1,823.1 637.4,823.5 636.7,823.9 636,824.3 635.3,824.7 634.6,825.1 633.8,825.5 633,825.9 632.2,826.3 631.3,826.8 630.4,827.2 629.6,827.6 628.7,828 627.8,828.3 626.9,828.4 625.8,828.4 624.8,828.2 623.7,828.1 622.7,827.9 621.6,827.7 620.6,827.6 619.6,827.4 618.6,827.2 617.7,826.9 616.9,826.6 616.1,826.3 615.2,826 614.4,825.7 613.6,825.4 612.8,825 612,824.5 611.2,823.9 610.4,823.1 609.8,822.5 609.4,822.1ZM491.6,752.3 491.6,751.7 491.6,751 491.6,750.4 491.6,749.7 491.6,749.1 491.6,748.3 491.7,747.4 491.9,746.5 492.1,745.4 492.4,744.4 492.8,743.5 493.3,742.6 493.9,741.8 494.4,741.1 494.8,740.7 495.1,740.4 495.3,740.4 495.5,740.4 495.9,740.6 496.4,740.8 497,741.1 497.6,741.4 498.3,741.7 498.9,742 499.5,742.3 500.1,742.7 500.7,743.1 501.3,743.5 501.8,743.9 502.3,744.3 502.9,744.8 503.4,745.2 503.9,745.7 504.4,746.2 504.8,746.9 505.1,747.6 505.3,748.4 505.5,749.3 505.7,750.1 505.9,751 506.1,751.8 506.3,752.7 506.3,753.5 506.3,754.4 506.2,755.2 506.1,756 506,756.9 505.9,757.7 505.8,758.5 505.7,759.4 505.7,760.2 505.8,761 505.9,761.9 506,762.7 506.1,763.5 506.2,764.3 506.3,765.1 506.5,765.9 506.7,766.7 507.1,767.4 507.5,768.2 507.9,768.9 508.3,769.6 508.7,770.3 509.1,771 509.6,771.6 510.1,772.1 510.8,772.5 511.5,772.7 512.2,773 512.9,773.2 513.6,773.5 514.3,773.8 515,774 515.8,774.1 516.6,774.2 517.4,774.2 518.3,774.2 519.1,774.2 519.9,774.2 520.8,774.2 521.6,774.2 522.4,774.2 523.3,774.2 524.1,774.2 525,774.2 526,774.4 527,774.6 528,774.8 529.1,775.1 530.1,775.3 531.2,775.6 532.3,775.8 533.3,776.1 534.2,776.5 535.1,776.8 536,777.3 536.8,777.7 537.6,778.1 538.5,778.5 539.3,778.9 540.1,779.4 540.7,779.8 541.3,780.2 541.9,780.6 542.4,781 542.9,781.4 543.4,781.9 543.9,782.3 544.5,782.8 545.1,783.6 545.7,784.5 546.3,785.5 547,786.3 547.6,786.9 548.3,787.2 549,787.3 549.8,787.4 550.5,787.5 551.2,787.6 551.9,787.7 552.6,787.9 553.3,788.1 553.9,788.3 554.6,788.7 555.2,789 555.8,789.3 556.5,789.6 557.1,789.9 557.7,790.3 558.4,790.8 559,791.3 559.6,792 560.3,792.6 560.9,793.3 561.6,793.9 562.2,794.5 562.8,795.2 563.4,795.8 564,796.5 564.5,797.1 565,797.8 565.6,798.5 566.1,799.1 566.6,799.8 567,800.5 567.2,801.4 567.3,802.3 567.2,803.2 567.1,804.2 567,805.2 566.9,806.2 566.8,807.2 566.7,808.2 566.6,809.2 566.5,810.2 566.4,811.1 566.3,812.1 566.2,813.1 566,814.1 565.9,815.1 565.9,816.1 566,817 566.3,817.9 566.6,818.7 566.9,819.5 567.2,820.4 567.5,821.2 567.8,822.1 568,822.9 568,823.8 567.9,824.6 567.7,825.5 567.5,826.4 567.3,827.2 567,828.1 566.8,829 566.5,829.7 566,830.3 565.4,830.8 564.6,831.2 563.9,831.6 563.1,832 562.4,832.4 561.7,832.8 560.8,833.1 559.9,833.5 558.8,833.9 557.7,834.3 556.6,834.6 555.4,835 554.3,835.4 553.2,835.8 552,836.1 550.9,836.5 549.8,836.9 548.6,837.2 547.6,837.4 546.7,837.3 546,837 545.3,836.5 544.7,836 544,835.4 543.4,834.9 542.8,834.4 542.1,833.8 541.5,833.2 540.9,832.5 540.2,831.8 539.6,831 539,830.3 538.4,829.6 537.7,828.8 537.1,828.1 536.5,827.4 535.9,826.7 535.2,825.9 534.6,825.2 534,824.5 533.4,823.7 532.7,823 532.1,822.4 531.5,821.9 530.9,821.5 530.3,821.2 529.6,820.8 529,820.5 528.4,820.2 527.8,819.9 527.1,819.6 526.4,819.4 525.6,819.1 524.8,818.9 523.9,818.7 523.1,818.5 522.2,818.3 521.4,818.1 520.6,817.8 519.7,817.4 518.9,817 518,816.4 517.2,815.9 516.3,815.4 515.5,814.9 514.6,814.3 513.9,813.7 513.1,813.1 512.4,812.4 511.8,811.6 511.1,810.9 510.5,810.1 509.9,809.4 509.2,808.6 508.7,807.8 508.3,807 508,806 507.8,805 507.5,804 507.3,803 507.1,802 506.9,801.1 506.7,800.1 506.5,799.1 506.3,798.1 506.1,797.1 505.9,796.1 505.7,795.1 505.4,794.1 505.2,793.1 505,792.1 504.7,791.2 504.5,790.2 504.1,789.3 503.8,788.4 503.5,787.4 503.2,786.5 502.9,785.6 502.5,784.6 502.1,783.7 501.7,782.8 501.1,781.8 500.6,780.9 500.1,779.9 499.6,779 499,778 498.6,777.1 498.2,776.1 497.9,775 497.7,774 497.5,772.9 497.3,771.9 497.1,770.9 496.9,769.8 496.7,768.8 496.4,767.7 496.1,766.7 495.8,765.6 495.5,764.6 495.2,763.6 494.9,762.5 494.5,761.5 494.2,760.5 493.9,759.6 493.6,758.7 493.3,757.9 493,757 492.7,756.2 492.4,755.4 492.1,754.5 491.8,753.7 491.7,753ZM315.3,366 315.3,365.8 315.5,365.5 315.9,365 316.5,364.3 317.3,363.5 318.1,362.9 318.8,362.4 319.5,362.1 320.2,361.9 320.8,361.7 321.5,361.6 322.2,361.4 322.8,361.3 323.5,361.2 324.2,361.3 324.9,361.4 325.7,361.7 326.4,362 327.2,362.2 327.9,362.5 328.7,362.7 329.3,363.1 329.9,363.7 330.5,364.5 330.9,365.3 331,366.2 330.8,367 330.3,367.8 329.4,368.5 328.5,369.1 327.7,369.5 326.9,369.7 326.2,369.8 325.5,369.9 324.7,370.1 324,370.2 323.2,370.3 322.4,370.2 321.4,370.1 320.3,369.8 319.2,369.4 318.2,368.9 317.3,368.4 316.6,367.8 316.1,367.2 315.7,366.7 315.4,366.3ZM237.7,502.1 237.9,501.4 238.1,500.7 238.4,500.1 238.6,499.4 238.8,498.7 239.2,498.1 239.8,497.4 240.5,496.7 241.4,496.1 242.3,495.6 243.1,495.4 243.8,495.4 244.4,495.6 245.1,495.9 245.7,496.1 246.4,496.3 247,496.5 247.6,496.8 248.2,497.2 248.7,497.6 249.2,498.1 249.8,498.6 250.3,499.2 250.8,499.7 251.3,500.2 251.8,500.9 252.2,501.7 252.5,502.7 252.7,503.8 252.8,504.8 252.7,505.6 252.4,506.3 252,506.9 251.6,507.4 251.1,508 250.7,508.5 250.3,509.1 249.7,509.6 249.1,510 248.3,510.3 247.4,510.6 246.6,510.9 245.7,511.1 244.8,511.4 244,511.7 243.2,511.8 242.5,511.7 241.9,511.5 241.4,511.1 241,510.7 240.5,510.3 240,509.9 239.5,509.5 239.1,509.1 238.7,508.5 238.5,507.8 238.3,507.1 238.2,506.4 238,505.6 237.8,504.9 237.6,504.2 237.6,503.5 237.6,502.8ZM166.6,620.3 166.6,620 166.9,619.7 167.4,619.3 168.1,618.9 169.1,618.4 170.1,618 171.1,617.6 172.1,617.4 173.2,617.2 174.2,617.1 175.3,616.9 176.3,616.8 177.4,616.6 178.4,616.4 179.5,616.2 180.5,615.9 181.6,615.6 182.6,615.3 183.7,615 184.7,614.7 185.8,614.4 186.8,614.1 187.7,613.9 188.6,613.8 189.4,613.7 190.3,613.7 191.1,613.6 192,613.5 192.8,613.4 193.6,613.4 194.5,613.3 195.3,613.2 196.2,613.2 197,613.1 197.8,613.1 198.7,613.1 199.5,613.1 200.3,613.1 201.2,613.1 202,613.1 202.8,613.1 203.7,613.1 204.5,613.1 205.3,613.1 206.2,613.1 207,613 207.8,612.9 208.7,612.7 209.5,612.5 210.3,612.3 211.2,612.1 212,611.9 212.8,611.7 213.6,611.5 214.5,611.3 215.3,611 216.1,610.7 216.9,610.5 217.8,610.2 218.6,610 219.4,609.7 220,609.4 220.5,609.1 220.8,608.8 220.8,608.5 221.1,608.2 221.5,607.9 222.2,607.6 223,607.3 223.8,607 224.6,606.7 225.5,606.3 226.3,606 227.1,605.7 227.9,605.3 228.6,604.9 229.3,604.5 230,604 230.7,603.6 231.4,603.1 232.2,602.7 232.9,602.2 233.6,601.8 234.3,601.3 235,600.9 235.7,600.6 236.4,600.5 237.1,600.6 237.7,600.9 238.4,601.2 239,601.4 239.7,601.7 240.4,602 240.9,602.5 241.4,603.1 241.8,604 242.1,605 242.5,606.1 242.8,607.1 243.1,608.1 243.4,609.2 243.8,610.2 244.1,611.2 244.5,612.2 244.9,613.2 245.4,614.1 245.8,615.1 246.2,616 246.6,617 246.9,618 247,619 246.9,620.1 246.7,621.1 246.3,622.2 245.8,623.1 245.1,624 244.3,624.8 243.7,625.7 243.2,626.5 243,627.3 243,628.1 242.9,629 242.9,629.8 242.8,630.6 242.8,631.4 242.7,632.3 242.6,633.4 242.5,634.5 242.3,635.6 242.1,636.5 241.9,637.1 241.7,637.4 241.5,637.3 241.3,637.2 241,636.9 240.7,636.5 240.3,635.9 239.9,635.3 239.6,634.8 239.2,634.2 238.8,633.7 238.5,633.1 238.1,632.5 237.8,631.9 237.5,631.3 237.2,630.7 236.9,630.1 236.6,629.5 236.3,628.8 235.8,628.3 235.3,627.9 234.7,627.6 233.9,627.4 233.1,627.4 232.2,627.7 231.2,628.1 230.2,628.7 229.4,629.3 228.6,629.9 227.9,630.5 227.4,631.2 226.9,631.8 226.3,632.5 225.8,633.1 225.3,633.8 224.7,634.4 224.2,635.1 223.7,635.7 223.1,636.4 222.7,637 222.4,637.6 222.3,638.2 222.2,638.8 222,639.3 221.5,639.7 220.9,640 220.1,640.3 219.3,640.6 218.5,640.9 217.7,641.2 216.9,641.4 216.1,641.7 215.3,642 214.5,642.3 213.7,642.6 212.9,642.6 212.1,642.4 211.3,641.9 210.4,641.2 209.5,640.5 208.7,639.8 207.8,639.1 207,638.5 206.1,637.8 205.3,637.1 204.4,636.4 203.6,635.7 202.7,635.1 201.8,634.7 200.8,634.3 199.8,634.1 198.9,634.1 198,634.3 197.1,634.7 196.3,635.2 195.4,635.8 194.6,636.3 193.8,636.9 193,637.4 192.1,638 191.3,638.5 190.5,639.1 189.6,639.6 188.7,640 187.8,640.2 186.7,640.3 185.6,640.2 184.6,640 183.8,639.8 183.1,639.4 182.6,638.9 182,638.4 181.5,637.9 181,637.4 180.4,636.9 180,636.4 179.6,635.8 179.3,635.1 179.1,634.3 178.9,633.6 178.7,632.9 178.4,632.1 178.2,631.4 177.9,630.7 177.6,630 177.1,629.4 176.6,628.8 176.1,628.1 175.6,627.5 175.1,626.9 174.6,626.3 174,625.7 173.3,625.1 172.5,624.5 171.6,623.9 170.7,623.3 169.8,622.7 168.9,622.1 168,621.5 167.3,621 166.8,620.6ZM149.1,510.8 149.2,510.6 149.6,510.5 150.2,510.2 151.1,509.9 152.3,509.6 153.3,509.4 154.4,509.4 155.3,509.6 156.2,509.9 156.9,510.2 157.4,510.4 157.7,510.6 157.8,510.7 157.8,511.1 157.6,511.7 157.4,512.6 157,513.7 156.5,514.6 155.9,515.4 155.2,516 154.4,516.5 153.5,516.7 152.6,516.8 151.7,516.7 150.8,516.4 150.1,515.9 149.5,515.1 149.2,514.1 149.1,512.9 149.1,511.9 149.1,511.2ZM101.2,497.3 101.1,497.1 101.1,496.9 101.1,496.4 101.1,495.9 101.2,495.2 101.2,494.4 101.3,493.7 101.3,493 101.4,492.3 101.4,491.6 101.4,490.9 101.4,490.3 101.4,489.6 101.3,489 101.3,488.3 101.2,487.7 101.2,487 101.3,486.4 101.6,485.8 102.1,485.3 102.8,484.9 103.5,484.6 104.1,484.4 104.8,484.3 105.4,484.4 106.1,484.5 106.7,484.5 107.4,484.6 108,484.7 108.6,484.9 109,485.3 109.3,485.8 109.6,486.5 109.8,487.2 110,487.8 110.3,488.5 110.5,489.2 110.8,489.9 111.2,490.5 111.7,491.1 112.3,491.7 112.7,492.2 113,492.5 113.2,492.8 113.2,493 113.1,493.3 112.9,493.6 112.6,494 112.2,494.5 111.8,495 111.4,495.6 110.9,496.1 110.5,496.6 110,497.1 109.2,497.5 108.4,498 107.3,498.4 106.3,498.6 105.2,498.7 104.1,498.5 103,498.1 102.2,497.7 101.6,497.5ZM88.1,512.6 88.4,511.8 88.8,510.9 89.1,510 89.4,509.1 89.7,508.3 90.1,507.4 90.6,506.6 91.1,505.8 91.8,505.1 92.4,504.3 93,503.6 93.7,502.9 94.3,502.1 95,501.5 95.7,501 96.4,500.6 97.2,500.3 97.9,500 98.7,499.7 99.4,499.5 100.2,499.2 101,499.1 102,499.3 103,499.6 104.1,500.2 104.9,500.9 105.5,501.7 105.8,502.5 105.9,503.5 106,504.5 106,505.4 106.1,506.4 106.1,507.3 106.2,508.3 106.2,509.3 106.1,510.4 106.1,511.4 106.1,512.5 106,513.5 106,514.5 105.9,515.6 105.8,516.5 105.6,517.4 105.4,518.2 105,518.8 104.7,519.5 104.4,520.1 104,520.8 103.7,521.4 103.2,522 102.6,522.3 101.7,522.6 100.8,522.7 99.8,522.8 98.8,522.9 97.9,523.1 96.9,523.2 96,523.2 95.2,523.2 94.4,523 93.6,522.8 92.9,522.6 92.2,522.4 91.4,522.2 90.7,522 90.1,521.6 89.6,521 89.2,520.2 89,519.2 88.7,518.3 88.5,517.3 88.3,516.4 88,515.4 87.9,514.5 87.9,513.5ZM634.8,580.6 635.4,581.4 636,582.3 636.7,583.1 637.3,584 638,584.8 638.7,585.6 639.5,586.4 640.5,587.1 641.5,587.8 642.5,588.5 643.6,589.2 644.6,589.9 645.7,590.6 646.7,591.3 647.7,592 648.8,592.7 649.8,593.4 650.8,594.1 651.6,594.8 652.3,595.5 653,596.2 653.6,597 654.2,597.7 654.9,598.5 655.5,599.2 656.1,599.9 656.8,600.4 657.5,600.9 658.1,601.4 658.8,601.8 659.5,602.2 660.2,602.6 660.8,603.1 661.5,603.2 662.2,603 662.8,602.6 663.5,601.8 664.1,601.1 664.7,600.4 665.4,599.6 666,598.9 666.6,598.1 667.2,597.3 667.8,596.5 668.3,595.7 668.8,594.8 669.3,594 669.9,593.2 670.4,592.3 670.9,591.5 671.5,590.8 672.1,590.1 672.7,589.5 673.4,588.9 674,588.2 674.6,587.6 675.2,587 675.8,586.3 676.4,585.6 677,584.8 677.5,583.9 678,583.1 678.6,582.2 679.1,581.4 679.6,580.6 680.1,579.7 680.5,578.7 680.8,577.7 681.1,576.7 681.4,575.6 681.6,574.6 681.9,573.5 682.2,572.5 682.4,571.4 682.6,570.4 682.8,569.3 683,568.3 683.1,567.2 683.3,566.2 683.4,565.1 683.5,564.1 683.7,563.1 683.9,562.1 684.1,561.2 684.3,560.4 684.5,559.5 684.7,558.6 684.9,557.8 685.1,556.9 685.1,556.1 685,555.3 684.8,554.6 684.3,554 683.9,553.4 683.5,552.7 683,552.1 682.6,551.4 682.1,550.8 681.5,550.2 680.9,549.5 680.1,548.9 679.4,548.3 678.7,547.6 677.9,547 677.2,546.4 676.4,545.8 675.7,545.2 674.8,544.7 674,544.1 673.2,543.6 672.3,543.1 671.5,542.6 670.7,542 669.8,541.6 669,541.1 668.1,540.8 667.3,540.5 666.4,540.1 665.6,539.8 664.7,539.5 663.9,539.2 663,538.9 662.1,538.7 661.2,538.5 660.3,538.4 659.4,538.3 658.5,538.2 657.6,538.1 656.7,538 655.9,537.6 655.2,537.1 654.7,536.3 654.3,535.4 653.9,534.4 653.7,533.5 653.4,532.6 653.3,531.8 653.1,530.9 652.9,530.1 652.8,529.2 652.6,528.3 652.3,527.7 652,527.1 651.5,526.8 650.9,526.6 650.2,526.4 649.6,526.3 649,526.1 648.4,525.9 647.7,525.9 646.8,526 645.9,526.2 644.8,526.5 643.9,526.9 643.3,527.4 643,528 642.8,528.7 642.7,529.3 642.6,530 642.4,530.6 642.3,531.3 642,531.9 641.6,532.6 641.1,533.3 640.4,533.9 639.7,534.6 639,535.3 638.3,536 637.6,536.7 637,537.4 636.3,538.1 635.6,538.8 634.9,539.4 634.2,540.2 633.6,540.9 632.9,541.7 632.3,542.6 631.7,543.4 631,544.2 630.4,545.1 629.8,545.9 629.2,546.8 628.7,547.6 628.4,548.5 628,549.3 627.7,550.2 627.4,551 627.1,551.9 626.7,552.7 626.5,553.6 626.4,554.6 626.4,555.6 626.5,556.7 626.6,557.7 626.7,558.8 626.8,559.9 626.9,560.9 627.1,562 627.3,563.1 627.6,564.1 627.9,565.2 628.2,566.2 628.5,567.3 628.8,568.3 629.2,569.4 629.5,570.4 629.9,571.5 630.4,572.5 630.9,573.5 631.5,574.6 632,575.6 632.5,576.7 633,577.7 633.6,578.7 634.2,579.7ZM675.3,452.7 676.2,453.1 677.1,453.3 678,453.4 678.9,453.3 679.8,453 680.4,452.5 680.9,451.7 681.1,450.7 681.2,449.5 681,448.5 680.5,447.7 679.9,447.1 678.9,446.8 678,446.6 677.1,446.6 676.3,446.7 675.4,447 674.7,447.6 674.2,448.3 674,449.2 674,450.4 674.2,451.4 674.6,452.1ZM542.7,223.9 543.4,224 544.1,224.1 544.8,224.2 545.4,224.3 546.1,224.4 546.8,224.4 547.3,224.2 547.9,223.9 548.4,223.5 548.9,223.1 549.3,222.7 549.8,222.3 550.3,221.9 550.6,221.4 550.7,220.9 550.7,220.3 550.4,219.6 550.2,219 549.9,218.3 549.6,217.6 549.4,217 549,216.3 548.4,215.7 547.7,215.1 546.8,214.5 546,214.1 545.2,213.9 544.5,214 543.9,214.1 543.3,214.3 542.6,214.5 542,214.7 541.3,214.9 540.9,215.2 540.5,215.6 540.4,216.2 540.4,216.8 540.4,217.5 540.4,218.1 540.4,218.8 540.4,219.4 540.4,220.1 540.6,220.9 540.9,221.7 541.2,222.5 541.6,223.2 542.1,223.7ZM517,556.4 516.9,557.4 516.6,558.3 516.4,559.2 516,559.9 515.6,560.5 515.2,561.1 514.8,561.8 514.3,562.4 513.9,563 513.6,563.6 513.3,564.3 513,564.9 512.8,565.6 512.6,566.2 512.4,566.9 512.1,567.6 511.9,568.2 511.9,568.9 512,569.5 512.3,570.1 512.7,570.7 513.1,571.3 513.6,571.9 514,572.6 514.5,573.2 514.9,573.7 515.5,574 516.1,574.2 516.7,574.3 517.4,574.4 518.1,574.5 518.7,574.6 519.4,574.7 520,574.7 520.6,574.5 521.2,574.3 521.7,573.9 522.3,573.5 522.8,573.1 523.4,572.8 523.9,572.4 524.4,571.9 524.8,571.4 525.1,570.7 525.3,569.9 525.5,569.2 525.8,568.4 526,567.7 526.2,566.9 526.3,566.1 526.4,565.2 526.4,564.2 526.2,563.2 526.1,562.1 526,561.1 525.9,560 525.8,559 525.7,557.9 525.6,556.9 525.5,555.9 525.4,554.8 525.3,553.8 525.2,552.7 525.1,551.7 525,550.6 524.9,549.6 524.9,548.6 524.8,547.5 524.8,546.5 524.8,545.4 524.8,544.4 524.8,543.3 524.8,542.3 524.8,541.3 524.8,540.3 524.7,539.4 524.6,538.6 524.5,537.7 524.4,536.9 524.3,536.1 524.2,535.2 523.9,534.5 523.5,533.9 523,533.5 522.3,533.2 521.7,532.9 521,532.6 520.3,532.3 519.7,532 519,531.8 518.3,531.8 517.5,531.9 516.8,532.2 516,532.5 515.2,532.8 514.5,533.1 513.7,533.3 513.1,533.7 512.5,534.2 512.1,534.7 511.7,535.4 511.4,536.1 511.1,536.7 510.8,537.4 510.4,538 510.2,538.7 510.2,539.5 510.3,540.3 510.5,541.2 510.7,542 510.9,542.9 511.1,543.7 511.3,544.6 511.6,545.4 511.8,546.1 512.1,546.8 512.4,547.4 512.7,548.1 513.1,548.7 513.4,549.3 513.7,550 514.1,550.7 514.7,551.5 515.3,552.4 516.1,553.3 516.6,554.3 516.9,555.3ZM481.1,506.4 481.6,507.4 482.2,508.3 482.8,509 483.5,509.5 484.1,509.9 484.8,510.2 485.4,510.5 486.1,510.8 486.8,511.2 487.5,511.2 488.3,511.1 489.1,510.6 490,510 490.7,509.3 491.2,508.7 491.6,508 491.7,507.3 491.9,506.7 492,506 492.2,505.4 492.4,504.7 492.3,504 492.1,503.1 491.8,502.1 491.2,501 490.7,500.1 490.1,499.5 489.5,499.1 488.8,498.9 488.1,498.8 487.5,498.6 486.8,498.5 486.2,498.3 485.4,498.3 484.5,498.5 483.5,498.9 482.4,499.4 481.6,500.1 480.9,500.9 480.6,501.9 480.4,503.1 480.5,504.2 480.7,505.3ZM389.5,615.5 389.6,616.3 389.7,617.1 389.8,618 389.9,618.8 390,619.6 390.2,620.4 390.4,621.2 390.7,622.1 391.2,622.9 391.6,623.7 392,624.5 392.4,625.4 392.8,626.2 393.3,627 393.8,627.8 394.4,628.5 395,629.2 395.6,629.9 396.2,630.7 396.8,631.4 397.5,632.1 398.1,632.8 398.7,633.3 399.3,633.8 399.9,634.2 400.5,634.6 401.1,635 401.7,635.4 402.3,635.8 402.9,636.1 403.5,636.2 404.2,636.1 404.8,636 405.3,635.8 405.7,635.8 406,635.8 406.1,635.9 406.3,635.7 406.4,635.2 406.5,634.4 406.6,633.4 406.6,632.4 406.7,631.3 406.8,630.3 406.9,629.3 407,628.3 407.1,627.4 407.3,626.6 407.5,625.8 407.7,625 407.9,624.2 408.1,623.4 408.3,622.7 408.6,622 409,621.5 409.5,621.2 410.2,620.9 410.7,620.8 411.1,620.7 411.4,620.6 411.5,620.7 411.8,620.9 412.3,621.4 412.9,622.1 413.6,623 414.2,623.9 414.7,624.8 415.2,625.7 415.5,626.5 415.8,627.3 416.1,628.2 416.4,629 416.7,629.8 417.1,630.7 417.5,631.4 417.8,632.2 418.3,632.9 418.7,633.7 419.1,634.4 419.5,635.2 420,635.9 420.4,636.5 420.9,637.1 421.4,637.5 422,637.8 422.5,638.2 423.1,638.5 423.6,638.8 424.2,639.2 424.7,639.4 425.3,639.4 426,639.3 426.6,639.1 427.3,638.9 427.9,638.7 428.6,638.5 429.3,638.3 429.9,638 430.6,637.7 431.2,637.3 431.8,636.9 432.5,636.5 433.1,636.1 433.7,635.6 434.3,635.2 435,634.8 435.8,634.4 436.5,634 437.4,633.5 438.2,633.1 439,632.7 439.9,632.3 440.7,631.9 441.5,631.4 442.3,630.9 443.1,630.4 443.8,629.9 444.6,629.3 445.3,628.8 446.1,628.2 446.8,627.7 447.3,627 447.6,626.2 447.6,625.2 447.4,624.1 447.3,623.1 447.1,622 447,621 446.9,619.9 446.8,618.9 446.7,617.8 446.5,616.8 446.4,615.7 446.3,614.7 446.2,613.6 446,612.6 445.8,611.5 445.5,610.5 445.3,609.4 445.1,608.4 444.9,607.3 444.6,606.3 444.2,605.4 443.8,604.6 443.2,603.8 442.7,603.1 442.2,602.4 441.6,601.6 441.1,600.9 440.5,600.2 439.9,599.6 439.3,599 438.6,598.5 437.9,598.1 437.2,597.6 436.5,597.1 435.8,596.6 435.1,596.1 434.4,595.6 433.7,595.1 433,594.6 432.3,594.2 431.5,593.7 430.8,593.3 430.1,592.8 429.3,592.4 428.6,592 427.8,591.6 427.1,591.1 426.3,590.8 425.5,590.7 424.7,590.7 423.8,590.8 423,590.9 422.1,591 421.3,591.1 420.4,591.2 419.5,591.3 418.6,591.5 417.7,591.7 416.8,591.9 415.8,592.1 414.9,592.3 414,592.5 413,592.7 412.2,592.9 411.4,593.1 410.6,593.4 410,593.6 409.3,593.9 408.7,594.1 408,594.4 407.3,594.6 406.8,595.1 406.5,595.7 406.3,596.6 406.3,597.7 405.9,598.6 405.4,599.3 404.5,599.8 403.3,600 402.3,600.3 401.4,600.5 400.7,600.8 400.1,601.1 399.4,601.5 398.8,601.8 398.2,602.1 397.6,602.4 397,602.8 396.4,603.2 395.8,603.8 395.1,604.4 394.5,605 393.9,605.6 393.3,606.2 392.7,606.8 392.1,607.5 391.7,608.2 391.3,609 391,609.8 390.7,610.6 390.4,611.4 390.1,612.2 389.8,613.1 389.6,613.9 389.5,614.7ZM373,421.1 373.7,421.6 374.3,422 374.9,422.4 375.6,422.8 376.2,423.3 377,423.5 377.9,423.5 378.8,423.3 379.9,422.8 380.9,422.4 381.7,421.9 382.4,421.4 382.9,420.9 383.5,420.3 384,419.8 384.5,419.3 385.1,418.7 385.7,418.2 386.3,417.7 387,417.2 387.7,416.7 388.4,416.1 389.1,415.6 389.8,415.1 390.6,414.6 391.3,414.1 392.1,413.6 392.9,413.2 393.7,412.8 394.6,412.4 395.4,411.9 396.2,411.5 397.1,411.1 397.9,410.7 398.7,410.2 399.4,409.7 400.2,409.2 400.9,408.6 401.6,408.1 402.4,407.6 403.1,407.1 403.7,406.7 404,406.3 404.2,406.1 404.3,406 404.1,405.8 403.6,405.3 402.9,404.7 402,403.9 401.1,403.2 400.2,402.4 399.3,401.6 398.4,400.8 397.5,400 396.6,399.3 395.6,398.5 394.7,397.7 393.9,397 393.1,396.4 392.4,395.9 391.8,395.5 391.1,395.1 390.5,394.7 389.9,394.2 389.2,393.8 388.6,393.5 387.9,393.3 387.1,393.2 386.4,393.2 385.6,393.2 384.8,393.2 384,393.2 383.3,393.2 382.5,393.3 381.6,393.5 380.8,393.9 379.8,394.4 378.9,394.9 378,395.4 377.1,395.9 376.2,396.3 375.3,396.8 374.4,397.3 373.5,397.8 372.6,398.3 371.7,398.8 371,399.3 370.3,399.8 369.6,400.4 369,400.9 368.3,401.5 367.7,402 367,402.6 366.5,403.1 366.1,403.7 365.7,404.4 365.5,405 365.3,405.7 365.1,406.3 364.9,407 364.7,407.6 364.7,408.3 364.8,409.1 365,409.9 365.4,410.7 365.9,411.6 366.3,412.4 366.7,413.3 367.1,414.1 367.6,414.9 368.1,415.6 368.6,416.3 369.1,417 369.6,417.6 370.2,418.3 370.7,418.9 371.2,419.5 371.8,420.1 372.4,420.7ZM361.4,598.5 362.1,598.6 362.9,598.7 363.7,598.8 364.5,598.9 365.2,599.1 366,599.1 366.7,599.1 367.5,599.1 368.2,599 369,598.9 369.7,598.8 370.4,598.8 371.2,598.7 371.8,598.5 372.3,598.1 372.7,597.6 373,597 373,596.6 372.7,596.2 372.1,595.9 371.2,595.7 370.3,595.6 369.5,595.4 368.6,595.3 367.7,595.1 366.8,595 366,595 365.1,595 364.3,595.2 363.4,595.3 362.6,595.4 361.7,595.5 360.9,595.7 360.3,595.8 359.8,595.9 359.5,596 359.5,596.1 359.5,596.3 359.5,596.6 359.7,597.1 359.9,597.6 360.3,598 360.8,598.3ZM298.8,252.3 299.4,253 300,253.6 300.6,254.3 301.2,254.9 301.8,255.6 302.5,256.1 303.2,256.5 304,256.8 304.8,257 305.7,257.2 306.5,257.3 307.4,257.5 308.2,257.7 309.1,257.7 309.9,257.6 310.8,257.4 311.7,257 312.5,256.6 313.4,256.2 314.3,255.8 315.2,255.5 316,255 316.9,254.5 317.8,253.9 318.7,253.2 319.6,252.5 320.5,251.8 321.4,251.1 322.3,250.4 323.2,249.7 324.1,249 325,248.4 325.9,247.7 326.8,247 327.6,246.3 328.5,245.6 329.4,244.9 330.2,244.2 330.8,243.3 331.2,242.4 331.5,241.5 331.7,240.5 332,239.6 332.3,238.6 332.6,237.6 332.7,236.7 332.6,235.8 332.4,234.9 332,234.1 331.6,233.2 331.3,232.3 330.9,231.5 330.5,230.6 330,229.8 329.4,229.1 328.6,228.5 327.8,228 326.9,227.4 326,226.9 325.2,226.4 324.3,225.8 323.4,225.4 322.6,225 321.7,224.8 320.9,224.7 320.1,224.5 319.2,224.4 318.4,224.2 317.5,224.1 316.7,224 315.9,223.8 315,223.7 314.2,223.5 313.3,223.5 312.5,223.5 311.6,223.7 310.8,223.9 309.9,224.1 309,224.3 308.2,224.5 307.3,224.7 306.5,225.1 305.8,225.6 305.1,226.3 304.4,227.2 303.8,228 303.2,228.9 302.5,229.7 301.9,230.6 301.3,231.4 300.7,232.3 300.1,233.3 299.6,234.2 299.1,235.2 298.6,236.1 298,237.1 297.5,238 297.1,238.9 296.8,239.8 296.6,240.6 296.5,241.3 296.5,242.1 296.4,242.8 296.4,243.6 296.3,244.3 296.3,245.1 296.4,245.8 296.5,246.6 296.7,247.3 296.9,248 297.1,248.8 297.4,249.5 297.6,250.3 297.9,251 298.3,251.7ZM278.9,218.9 279.2,219.6 279.6,220.2 280,220.9 280.3,221.5 280.7,222.2 281.1,222.7 281.7,222.9 282.3,222.9 283.1,222.8 283.8,222.6 284.5,222.4 285.3,222.3 286,222.1 286.7,221.9 287.5,221.6 288.2,221.3 289,220.9 289.7,220.6 290.5,220.2 291.2,219.8 292,219.5 292.7,219 293.5,218.5 294.3,217.9 295.1,217.2 295.9,216.5 296.7,215.8 297.6,215.1 298.4,214.4 299.2,213.7 300,213 300.8,212.3 301.6,211.6 302.2,210.9 302.7,210.2 302.9,209.5 302.9,208.8 303,208.1 303,207.5 303.1,206.8 303.1,206.1 303,205.5 302.8,204.9 302.5,204.4 302,204 301.6,203.6 301.1,203.1 300.7,202.7 300.2,202.3 299.7,202 299.2,201.9 298.6,201.9 297.9,202.1 297.3,202.3 296.7,202.5 296.1,202.7 295.4,203 294.7,203.1 294,203.2 293.2,203.2 292.4,203.1 291.5,203.1 290.7,203 289.9,202.9 289,202.9 288.2,202.9 287.4,203.1 286.6,203.4 285.9,203.8 285.1,204.1 284.4,204.5 283.6,204.9 282.9,205.3 282.2,205.8 281.6,206.3 281.1,207 280.7,207.8 280.3,208.5 279.8,209.3 279.4,210.1 279,210.8 278.6,211.6 278.4,212.3 278.3,213.1 278.3,213.8 278.3,214.6 278.3,215.3 278.3,216.1 278.3,216.8 278.4,217.5 278.6,218.2ZM228.5,206.5 229.5,207.2 230.5,207.6 231.3,207.7 232.2,207.7 232.9,207.3 233.7,207 234.4,206.7 235.2,206.4 236,206 236.6,205.6 237.2,205.2 237.8,204.6 238.2,203.9 238.6,203.3 239.1,202.6 239.5,202 239.9,201.3 240.2,200.7 240.4,199.9 240.4,199.2 240.3,198.4 240.2,197.7 240,196.9 239.9,196.1 239.8,195.4 239.6,194.7 239.2,194.1 238.7,193.6 238,193.2 237.4,192.8 236.7,192.5 236.1,192.1 235.4,191.7 234.7,191.4 234,191.2 233.3,191.2 232.5,191.3 231.7,191.3 231,191.4 230.2,191.5 229.4,191.6 228.8,191.7 228.2,192.1 227.8,192.5 227.5,193 227.1,193.6 226.8,194.1 226.5,194.7 226.2,195.2 226,196 225.9,196.8 225.9,197.8 226.1,199 226.3,200.2 226.5,201.4 226.6,202.6 226.8,203.7 227.2,204.8 227.8,205.7ZM31.3,304.7 32.2,304.6 33.1,304.5 33.9,304.3 34.8,304.2 35.7,304.1 36.6,304 37.4,303.8 38.3,303.7 39.2,303.6 39.9,303.3 40.6,302.9 41.1,302.4 41.6,301.8 42,301.1 42.5,300.5 42.9,299.8 43.3,299.2 43.7,298.4 44,297.6 44.2,296.6 44.4,295.5 44.6,294.4 44.7,293.3 44.9,292.2 45.1,291.1 45.3,290 45.4,288.9 45.6,287.8 45.8,286.7 45.9,285.6 46.1,284.5 46.3,283.4 46.4,282.4 46.6,281.3 46.8,280.2 47,279.1 47.1,278 47.2,277 47.3,276.1 47.2,275.4 47.1,274.7 47,274.1 46.9,273.4 46.8,272.8 46.7,272.1 46.5,271.5 46.2,270.9 45.7,270.2 45.2,269.6 44.7,269 44.2,268.3 43.7,267.7 43.2,267.1 42.8,266.4 42.6,265.7 42.6,264.9 42.7,264.1 42.8,263.3 42.9,262.5 43,261.7 43.1,260.9 43.2,260.1 43.5,259.3 43.8,258.4 44.2,257.6 44.7,256.7 45.1,255.9 45.5,255 45.9,254.2 46.2,253.3 46.3,252.5 46.2,251.6 46,250.8 45.8,249.9 45.6,249.1 45.4,248.3 45.2,247.4 44.9,246.6 44.7,245.7 44.4,244.9 44.2,244.1 43.9,243.2 43.6,242.4 43.3,241.6 43.1,240.7 42.8,239.9 42.5,239.1 42.2,238.2 41.9,237.4 41.7,236.5 41.4,235.6 41.2,234.6 41,233.5 40.8,232.5 40.6,231.4 40.4,230.4 40.2,229.3 39.7,228.5 39,227.8 38.1,227.4 36.9,227.1 35.7,226.9 34.5,226.7 33.3,226.4 32.1,226.2 31.2,226 30.6,226 30.2,226 30.1,226.1 30,226.4 30,227.1 30,228 30,229.3 30,230.5 30,231.7 30,233 30,234.2 30,235.4 30,236.7 30,237.9 30,239.1 30,240.3 30,241.6 30,242.8 30,244 30,245.3 30,246.5 30,247.7 30,249 30,250.2 30,251.4 30,252.6 30,253.9 30,255.1 30,256.3 30,257.6 30,258.8 30,260 30,261.3 30,262.5 30,263.7 30,264.9 30,266.2 30,267.4 30,268.6 30,269.9 30,271.1 30,272.3 30,273.6 30,274.8 30,276 30,277.2 30,278.5 30,279.7 30,280.9 30,282.2 30,283.4 30,284.6 30,285.8 30,287.1 30,288.3 30,289.5 30,290.8 30,292 30,293.2 30,294.5 30,295.7 30,296.9 30,298.1 30,299.4 30,300.6 30,301.8 30,303.1 30.2,304 30.7,304.5Z" fill="#000" fill-rule="evenodd"/>
</g></g>
<path d="M36.5,155.6V893.6M36.5,155.6H774.5M51.26,155.6V893.6M36.5,170.36H774.5M66.02,155.6V893.6M36.5,185.12H774.5M80.78,155.6V893.6M36.5,199.88H774.5M95.54,155.6V893.6M36.5,214.64H774.5M110.3,155.6V893.6M36.5,229.4H774.5M125.06,155.6V893.6M36.5,244.16H774.5M139.82,155.6V893.6M36.5,258.92H774.5M154.58,155.6V893.6M36.5,273.68H774.5M169.34,155.6V893.6M36.5,288.44H774.5M184.1,155.6V893.6M36.5,303.2H774.5M198.86,155.6V893.6M36.5,317.96H774.5M213.62,155.6V893.6M36.5,332.72H774.5M228.38,155.6V893.6M36.5,347.48H774.5M243.14,155.6V893.6M36.5,362.24H774.5M257.9,155.6V893.6M36.5,377H774.5M272.66,155.6V893.6M36.5,391.76H774.5M287.42,155.6V893.6M36.5,406.52H774.5M302.18,155.6V893.6M36.5,421.28H774.5M316.94,155.6V893.6M36.5,436.04H774.5M331.7,155.6V893.6M36.5,450.8H774.5M346.46,155.6V893.6M36.5,465.56H774.5M361.22,155.6V893.6M36.5,480.32H774.5M375.98,155.6V893.6M36.5,495.08H774.5M390.74,155.6V893.6M36.5,509.84H774.5M405.5,155.6V893.6M36.5,524.6H774.5M420.26,155.6V893.6M36.5,539.36H774.5M435.02,155.6V893.6M36.5,554.12H774.5M449.78,155.6V893.6M36.5,568.88H774.5M464.54,155.6V893.6M36.5,583.64H774.5M479.3,155.6V893.6M36.5,598.4H774.5M494.06,155.6V893.6M36.5,613.16H774.5M508.82,155.6V893.6M36.5,627.92H774.5M523.58,155.6V893.6M36.5,642.68H774.5M538.34,155.6V893.6M36.5,657.44H774.5M553.1,155.6V893.6M36.5,672.2H774.5M567.86,155.6V893.6M36.5,686.96H774.5M582.62,155.6V893.6M36.5,701.72H774.5M597.38,155.6V893.6M36.5,716.48H774.5M612.14,155.6V893.6M36.5,731.24H774.5M626.9,155.6V893.6M36.5,746H774.5M641.66,155.6V893.6M36.5,760.76H774.5M656.42,155.6V893.6M36.5,775.52H774.5M671.18,155.6V893.6M36.5,790.28H774.5M685.94,155.6V893.6M36.5,805.04H774.5M700.7,155.6V893.6M36.5,819.8H774.5M715.46,155.6V893.6M36.5,834.56H774.5M730.22,155.6V893.6M36.5,849.32H774.5M744.98,155.6V893.6M36.5,864.08H774.5M759.74,155.6V893.6M36.5,878.84H774.5M774.5,155.6V893.6M36.5,893.6H774.5" stroke="#171717" stroke-width="1" fill="none"/>
<path d="M839.78,160.77 843.03,157.08 848.93,155.6 857.05,155.6 860.74,157.22 864.43,155.6 871.81,155.6 875.5,157.22 879.19,155.6 886.57,155.6 890.26,157.22 893.95,155.6 901.33,155.6 905.02,157.22 908.71,155.6 916.09,155.6 919.78,157.22 923.47,155.6 927.16,155.6 941.92,155.6 941.92,155.6 956.68,155.6 956.68,155.6 971.44,155.6 971.44,155.6 986.2,155.6 989.89,155.6 993.58,157.22 997.27,155.6 1004.65,155.6 1008.34,157.22 1012.03,155.6 1019.41,155.6 1023.1,157.22 1026.79,155.6 1034.17,155.6 1037.86,157.22 1041.55,155.6 1048.93,155.6 1052.62,157.22 1056.31,155.6 1063.69,155.6 1067.38,157.22 1071.07,155.6 1078.45,155.6 1082.14,157.22 1085.83,155.6 1093.21,155.6 1096.9,157.22 1100.59,155.6 1107.97,155.6 1111.66,157.22 1115.35,155.6 1122.73,155.6 1126.42,157.22 1130.11,155.6 1137.49,155.6 1141.18,157.22 1144.87,155.6 1152.25,155.6 1155.94,157.22 1159.63,155.6 1167.01,155.6 1170.7,157.22 1174.39,155.6 1181.77,155.6 1185.46,157.22 1189.15,155.6 1196.53,155.6 1200.22,157.22 1203.91,155.6 1211.29,155.6 1214.98,157.22 1218.67,155.6 1226.05,155.6 1229.74,157.22 1233.43,155.6 1240.81,155.6 1244.5,157.22 1248.19,155.6 1255.57,155.6 1259.26,157.22 1262.95,155.6 1270.33,155.6 1274.02,157.22 1277.71,155.6 1285.09,155.6 1288.78,157.22 1292.47,155.6 1299.85,155.6 1303.54,157.22 1307.23,155.6 1314.61,155.6 1318.3,157.22 1321.99,155.6 1329.37,155.6 1333.06,157.22 1336.75,155.6 1344.13,155.6 1347.82,157.22 1351.51,155.6 1358.89,155.6 1362.58,157.22 1366.27,155.6 1373.65,155.6 1377.34,157.22 1381.03,155.6 1388.41,155.6 1392.1,157.22 1395.79,155.6 1403.17,155.6 1406.86,157.22 1410.55,155.6 1417.93,155.6 1421.62,157.22 1425.31,155.6 1432.69,155.6 1436.38,157.22 1440.07,155.6 1447.45,155.6 1451.14,157.22 1454.83,155.6 1462.21,155.6 1465.9,157.22 1469.59,155.6 1476.97,155.6 1480.66,157.22 1484.35,155.6 1491.73,155.6 1495.42,157.22 1499.11,155.6 1506.49,155.6 1510.18,157.22 1513.87,155.6 1521.25,155.6 1524.94,157.22 1528.63,155.6 1536.01,155.6 1539.7,157.22 1543.39,155.6 1550.77,155.6 1554.46,157.22 1558.15,155.6 1566.27,155.6 1572.17,157.08 1575.42,160.77 1576.6,165.93 1576.6,174.05 1574.98,177.74 1576.6,181.43 1576.6,188.81 1574.98,192.5 1576.6,196.19 1576.6,203.57 1574.98,207.26 1576.6,210.95 1576.6,218.33 1574.98,222.02 1576.6,225.71 1576.6,233.09 1574.98,236.78 1576.6,240.47 1576.6,247.85 1574.98,251.54 1576.6,255.23 1576.6,262.61 1574.98,266.3 1576.6,269.99 1576.6,277.37 1574.98,281.06 1576.6,284.75 1576.6,292.13 1574.98,295.82 1576.6,299.51 1576.6,306.89 1574.98,310.58 1576.6,314.27 1576.6,321.65 1574.98,325.34 1576.6,329.03 1576.6,336.41 1574.98,340.1 1576.6,343.79 1576.6,351.17 1574.98,354.86 1576.6,358.55 1576.6,365.93 1574.98,369.62 1576.6,373.31 1576.6,380.69 1574.98,384.38 1576.6,388.07 1576.6,395.45 1574.98,399.14 1576.6,402.83 1576.6,410.21 1574.98,413.9 1576.6,417.59 1576.6,424.97 1574.98,428.66 1576.6,432.35 1576.6,439.73 1574.98,443.42 1576.6,447.11 1576.6,454.49 1574.98,458.18 1576.6,461.87 1576.6,469.25 1574.98,472.94 1576.6,476.63 1576.6,484.01 1574.98,487.7 1576.6,491.39 1576.6,498.77 1574.98,502.46 1576.6,506.15 1576.6,513.53 1574.98,517.22 1576.6,520.91 1576.6,528.29 1574.98,531.98 1576.6,535.67 1576.6,543.05 1574.98,546.74 1576.6,550.43 1576.6,557.81 1574.98,561.5 1576.6,565.19 1576.6,572.57 1574.98,576.26 1576.6,579.95 1576.6,587.33 1574.98,591.02 1576.6,594.71 1576.6,602.09 1574.98,605.78 1576.6,609.47 1576.6,616.85 1574.98,620.54 1576.6,624.23 1576.6,631.61 1574.98,635.3 1576.6,638.99 1576.6,642.68 1576.6,657.44 1576.6,657.44 1576.6,672.2 1576.6,672.2 1576.6,686.96 1576.6,686.96 1576.6,701.72 1576.6,705.41 1574.98,709.1 1576.6,712.79 1576.6,720.17 1574.98,723.86 1576.6,727.55 1576.6,734.93 1574.98,738.62 1576.6,742.31 1576.6,749.69 1574.98,753.38 1576.6,757.07 1576.6,760.76 1576.6,775.52 1576.6,775.52 1576.6,790.28 1576.6,790.28 1576.6,805.04 1576.6,805.04 1576.6,819.8 1576.6,819.8 1576.6,834.56 1576.6,834.56 1576.6,849.32 1576.6,849.32 1576.6,864.08 1576.6,867.77 1574.98,871.46 1576.6,875.15 1576.6,883.27 1575.42,888.43 1572.17,892.12 1566.27,893.6 1558.15,893.6 1554.46,891.98 1550.77,893.6 1543.39,893.6 1539.7,891.98 1536.01,893.6 1528.63,893.6 1524.94,891.98 1521.25,893.6 1513.87,893.6 1510.18,891.98 1506.49,893.6 1499.11,893.6 1495.42,891.98 1491.73,893.6 1488.04,893.6 1473.28,893.6 1473.28,893.6 1458.52,893.6 1458.52,893.6 1443.76,893.6 1443.76,893.6 1429,893.6 1429,893.6 1414.24,893.6 1414.24,893.6 1399.48,893.6 1399.48,893.6 1384.72,893.6 1384.72,893.6 1369.96,893.6 1369.96,893.6 1355.2,893.6 1355.2,893.6 1340.44,893.6 1340.44,893.6 1325.68,893.6 1325.68,893.6 1310.92,893.6 1310.92,893.6 1296.16,893.6 1296.16,893.6 1281.4,893.6 1281.4,893.6 1266.64,893.6 1266.64,893.6 1251.88,893.6 1251.88,893.6 1237.12,893.6 1237.12,893.6 1222.36,893.6 1222.36,893.6 1207.6,893.6 1207.6,893.6 1192.84,893.6 1192.84,893.6 1178.08,893.6 1178.08,893.6 1163.32,893.6 1163.32,893.6 1148.56,893.6 1148.56,893.6 1133.8,893.6 1133.8,893.6 1119.04,893.6 1119.04,893.6 1104.28,893.6 1104.28,893.6 1089.52,893.6 1089.52,893.6 1074.76,893.6 1074.76,893.6 1060,893.6 1060,893.6 1045.24,893.6 1045.24,893.6 1030.48,893.6 1030.48,893.6 1015.72,893.6 1015.72,893.6 1000.96,893.6 1000.96,893.6 986.2,893.6 986.2,893.6 971.44,893.6 971.44,893.6 956.68,893.6 956.68,893.6 941.92,893.6 941.92,893.6 927.16,893.6 927.16,893.6 912.4,893.6 912.4,893.6 897.64,893.6 897.64,893.6 882.88,893.6 882.88,893.6 868.12,893.6 868.12,893.6 853.36,893.6 853.36,893.6 838.6,893.6 838.6,893.6 838.6,878.84 838.6,878.84 838.6,864.08 838.6,864.08 838.6,849.32 838.6,849.32 838.6,834.56 838.6,834.56 838.6,819.8 838.6,819.8 838.6,805.04 838.6,805.04 838.6,790.28 838.6,790.28 838.6,775.52 838.6,775.52 838.6,760.76 838.6,760.76 838.6,746 838.6,746 838.6,731.24 838.6,731.24 838.6,716.48 838.6,716.48 838.6,701.72 838.6,701.72 838.6,686.96 838.6,686.96 838.6,672.2 838.6,672.2 838.6,657.44 838.6,657.44 838.6,642.68 838.6,642.68 838.6,627.92 838.6,627.92 838.6,613.16 838.6,613.16 838.6,598.4 838.6,598.4 838.6,583.64 838.6,583.64 838.6,568.88 838.6,568.88 838.6,554.12 838.6,554.12 838.6,539.36 838.6,539.36 838.6,524.6 838.6,524.6 838.6,509.84 838.6,509.84 838.6,495.08 838.6,495.08 838.6,480.32 838.6,480.32 838.6,465.56 838.6,465.56 838.6,450.8 838.6,450.8 838.6,436.04 838.6,436.04 838.6,421.28 838.6,421.28 838.6,406.52 838.6,406.52 838.6,391.76 838.6,391.76 838.6,377 838.6,377 838.6,362.24 838.6,362.24 838.6,347.48 838.6,347.48 838.6,332.72 838.6,332.72 838.6,317.96 838.6,317.96 838.6,303.2 838.6,303.2 838.6,288.44 838.6,288.44 838.6,273.68 838.6,273.68 838.6,258.92 838.6,258.92 838.6,244.16 838.6,240.47 840.22,236.78 838.6,233.09 838.6,225.71 840.22,222.02 838.6,218.33 838.6,210.95 840.22,207.26 838.6,203.57 838.6,196.19 840.22,192.5 838.6,188.81 838.6,181.43 840.22,177.74 838.6,174.05 838.6,165.93Z" fill="#2fd996" stroke="#06402a" stroke-width="1" stroke-linejoin="round"/>
<path d="M841.7,163L846,158.7L850.3,163L846,167.3ZM850.3,163L856.4,163M846,167.3L846,173.4M841.7,163L839.8,163M846,158.7L846,156.8M856.4,163L860.7,158.7L865.1,163L860.7,167.3ZM865.1,163L871.2,163M860.7,167.3L860.7,173.4M860.7,158.7L860.7,156.8M871.2,163L875.5,158.7L879.8,163L875.5,167.3ZM879.8,163L885.9,163M875.5,167.3L875.5,173.4M875.5,158.7L875.5,156.8M885.9,163L890.3,158.7L894.6,163L890.3,167.3ZM894.6,163L900.7,163M890.3,167.3L890.3,173.4M890.3,158.7L890.3,156.8M890.3,163L882.9,155.6M890.3,163L897.6,155.6M890.3,163L882.9,170.4M890.3,163L897.6,170.4M900.7,163L905,158.7L909.3,163L905,167.3ZM909.3,163L915.5,163M905,158.7L905,156.8M905,163L897.6,155.6M905,163L912.4,155.6M905,163L897.6,170.4M905,163L912.4,170.4M915.5,163L919.8,158.7L924.1,163L919.8,167.3ZM919.8,158.7L919.8,156.8M919.8,163L912.4,155.6M919.8,163L927.2,155.6M919.8,163L912.4,170.4M919.8,163L927.2,170.4M989.3,163L993.6,158.7L997.9,163L993.6,167.3ZM997.9,163L1004,163M993.6,158.7L993.6,156.8M993.6,163L986.2,155.6M993.6,163L1001,155.6M993.6,163L986.2,170.4M993.6,163L1001,170.4M1004,163L1008.3,158.7L1012.7,163L1008.3,167.3ZM1012.7,163L1018.8,163M1008.3,167.3L1008.3,173.4M1008.3,158.7L1008.3,156.8M1008.3,163L1001,155.6M1008.3,163L1015.7,155.6M1008.3,163L1001,170.4M1008.3,163L1015.7,170.4M1018.8,163L1023.1,158.7L1027.4,163L1023.1,167.3ZM1027.4,163L1033.5,163M1023.1,167.3L1023.1,173.4M1023.1,158.7L1023.1,156.8M1033.5,163L1037.9,158.7L1042.2,163L1037.9,167.3ZM1042.2,163L1048.3,163M1037.9,167.3L1037.9,173.4M1037.9,158.7L1037.9,156.8M1048.3,163L1052.6,158.7L1056.9,163L1052.6,167.3ZM1056.9,163L1063.1,163M1052.6,167.3L1052.6,173.4M1052.6,158.7L1052.6,156.8M1063.1,163L1067.4,158.7L1071.7,163L1067.4,167.3ZM1071.7,163L1077.8,163M1067.4,167.3L1067.4,173.4M1067.4,158.7L1067.4,156.8M1077.8,163L1082.1,158.7L1086.5,163L1082.1,167.3ZM1086.5,163L1092.6,163M1082.1,167.3L1082.1,173.4M1082.1,158.7L1082.1,156.8M1092.6,163L1096.9,158.7L1101.2,163L1096.9,167.3ZM1101.2,163L1107.3,163M1096.9,167.3L1096.9,173.4M1096.9,158.7L1096.9,156.8M1107.3,163L1111.7,158.7L1116,163L1111.7,167.3ZM1116,163L1122.1,163M1111.7,167.3L1111.7,173.4M1111.7,158.7L1111.7,156.8M1122.1,163L1126.4,158.7L1130.7,163L1126.4,167.3ZM1130.7,163L1136.9,163M1126.4,167.3L1126.4,173.4M1126.4,158.7L1126.4,156.8M1136.9,163L1141.2,158.7L1145.5,163L1141.2,167.3ZM1145.5,163L1151.6,163M1141.2,167.3L1141.2,173.4M1141.2,158.7L1141.2,156.8M1151.6,163L1155.9,158.7L1160.3,163L1155.9,167.3ZM1160.3,163L1166.4,163M1155.9,167.3L1155.9,173.4M1155.9,158.7L1155.9,156.8M1166.4,163L1170.7,158.7L1175,163L1170.7,167.3ZM1175,163L1181.1,163M1170.7,167.3L1170.7,173.4M1170.7,158.7L1170.7,156.8M1181.1,163L1185.5,158.7L1189.8,163L1185.5,167.3ZM1189.8,163L1195.9,163M1185.5,167.3L1185.5,173.4M1185.5,158.7L1185.5,156.8M1195.9,163L1200.2,158.7L1204.5,163L1200.2,167.3ZM1204.5,163L1210.7,163M1200.2,167.3L1200.2,173.4M1200.2,158.7L1200.2,156.8M1210.7,163L1215,158.7L1219.3,163L1215,167.3ZM1219.3,163L1225.4,163M1215,167.3L1215,173.4M1215,158.7L1215,156.8M1225.4,163L1229.7,158.7L1234.1,163L1229.7,167.3ZM1234.1,163L1240.2,163M1229.7,167.3L1229.7,173.4M1229.7,158.7L1229.7,156.8M1240.2,163L1244.5,158.7L1248.8,163L1244.5,167.3ZM1248.8,163L1254.9,163M1244.5,167.3L1244.5,173.4M1244.5,158.7L1244.5,156.8M1254.9,163L1259.3,158.7L1263.6,163L1259.3,167.3ZM1263.6,163L1269.7,163M1259.3,167.3L1259.3,173.4M1259.3,158.7L1259.3,156.8M1269.7,163L1274,158.7L1278.3,163L1274,167.3ZM1278.3,163L1284.5,163M1274,167.3L1274,173.4M1274,158.7L1274,156.8M1284.5,163L1288.8,158.7L1293.1,163L1288.8,167.3ZM1293.1,163L1299.2,163M1288.8,167.3L1288.8,173.4M1288.8,158.7L1288.8,156.8M1299.2,163L1303.5,158.7L1307.9,163L1303.5,167.3ZM1307.9,163L1314,163M1303.5,167.3L1303.5,173.4M1303.5,158.7L1303.5,156.8M1314,163L1318.3,158.7L1322.6,163L1318.3,167.3ZM1322.6,163L1328.7,163M1318.3,167.3L1318.3,173.4M1318.3,158.7L1318.3,156.8M1328.7,163L1333.1,158.7L1337.4,163L1333.1,167.3ZM1337.4,163L1343.5,163M1333.1,167.3L1333.1,173.4M1333.1,158.7L1333.1,156.8M1343.5,163L1347.8,158.7L1352.1,163L1347.8,167.3ZM1352.1,163L1358.3,163M1347.8,167.3L1347.8,173.4M1347.8,158.7L1347.8,156.8M1358.3,163L1362.6,158.7L1366.9,163L1362.6,167.3ZM1366.9,163L1373,163M1362.6,167.3L1362.6,173.4M1362.6,158.7L1362.6,156.8M1373,163L1377.3,158.7L1381.7,163L1377.3,167.3ZM1381.7,163L1387.8,163M1377.3,167.3L1377.3,173.4M1377.3,158.7L1377.3,156.8M1387.8,163L1392.1,158.7L1396.4,163L1392.1,167.3ZM1396.4,163L1402.5,163M1392.1,167.3L1392.1,173.4M1392.1,158.7L1392.1,156.8M1402.5,163L1406.9,158.7L1411.2,163L1406.9,167.3ZM1411.2,163L1417.3,163M1406.9,167.3L1406.9,173.4M1406.9,158.7L1406.9,156.8M1417.3,163L1421.6,158.7L1425.9,163L1421.6,167.3ZM1425.9,163L1432.1,163M1421.6,167.3L1421.6,173.4M1421.6,158.7L1421.6,156.8M1432.1,163L1436.4,158.7L1440.7,163L1436.4,167.3ZM1440.7,163L1446.8,163M1436.4,167.3L1436.4,173.4M1436.4,158.7L1436.4,156.8M1446.8,163L1451.1,158.7L1455.5,163L1451.1,167.3ZM1455.5,163L1461.6,163M1451.1,167.3L1451.1,173.4M1451.1,158.7L1451.1,156.8M1461.6,163L1465.9,158.7L1470.2,163L1465.9,167.3ZM1470.2,163L1476.3,163M1465.9,167.3L1465.9,173.4M1465.9,158.7L1465.9,156.8M1476.3,163L1480.7,158.7L1485,163L1480.7,167.3ZM1485,163L1491.1,163M1480.7,167.3L1480.7,173.4M1480.7,158.7L1480.7,156.8M1491.1,163L1495.4,158.7L1499.7,163L1495.4,167.3ZM1499.7,163L1505.9,163M1495.4,167.3L1495.4,173.4M1495.4,158.7L1495.4,156.8M1505.9,163L1510.2,158.7L1514.5,163L1510.2,167.3ZM1514.5,163L1520.6,163M1510.2,167.3L1510.2,173.4M1510.2,158.7L1510.2,156.8M1520.6,163L1524.9,158.7L1529.3,163L1524.9,167.3ZM1529.3,163L1535.4,163M1524.9,167.3L1524.9,173.4M1524.9,158.7L1524.9,156.8M1535.4,163L1539.7,158.7L1544,163L1539.7,167.3ZM1544,163L1550.1,163M1539.7,167.3L1539.7,173.4M1539.7,158.7L1539.7,156.8M1550.1,163L1554.5,158.7L1558.8,163L1554.5,167.3ZM1558.8,163L1564.9,163M1554.5,167.3L1554.5,173.4M1554.5,158.7L1554.5,156.8M1564.9,163L1569.2,158.7L1573.5,163L1569.2,167.3ZM1569.2,167.3L1569.2,173.4M1573.5,163L1575.4,163M1569.2,158.7L1569.2,156.8M841.7,177.7L846,173.4L850.3,177.7L846,182.1ZM850.3,177.7L856.4,177.7M846,182.1L846,188.2M841.7,177.7L839.8,177.7M856.4,177.7L860.7,173.4L865.1,177.7L860.7,182.1ZM865.1,177.7L871.2,177.7M860.7,182.1L860.7,188.2M871.2,177.7L875.5,173.4L879.8,177.7L875.5,182.1ZM879.8,177.7L885.9,177.7M875.5,182.1L875.5,188.2M885.9,177.7L890.3,173.4L894.6,177.7L890.3,182.1ZM890.3,182.1L890.3,188.2M890.3,177.7L882.9,170.4M890.3,177.7L897.6,170.4M890.3,177.7L882.9,185.1M890.3,177.7L897.6,185.1M1004,177.7L1008.3,173.4L1012.7,177.7L1008.3,182.1ZM1012.7,177.7L1018.8,177.7M1008.3,182.1L1008.3,188.2M1008.3,177.7L1001,170.4M1008.3,177.7L1015.7,170.4M1008.3,177.7L1001,185.1M1008.3,177.7L1015.7,185.1M1018.8,177.7L1023.1,173.4L1027.4,177.7L1023.1,182.1ZM1027.4,177.7L1033.5,177.7M1023.1,182.1L1023.1,188.2M1033.5,177.7L1037.9,173.4L1042.2,177.7L1037.9,182.1ZM1042.2,177.7L1048.3,177.7M1037.9,182.1L1037.9,188.2M1048.3,177.7L1052.6,173.4L1056.9,177.7L1052.6,182.1ZM1056.9,177.7L1063.1,177.7M1052.6,182.1L1052.6,188.2M1063.1,177.7L1067.4,173.4L1071.7,177.7L1067.4,182.1ZM1071.7,177.7L1077.8,177.7M1067.4,182.1L1067.4,188.2M1077.8,177.7L1082.1,173.4L1086.5,177.7L1082.1,182.1ZM1086.5,177.7L1092.6,177.7M1082.1,182.1L1082.1,188.2M1092.6,177.7L1096.9,173.4L1101.2,177.7L1096.9,182.1ZM1101.2,177.7L1107.3,177.7M1096.9,182.1L1096.9,188.2M1107.3,177.7L1111.7,173.4L1116,177.7L1111.7,182.1ZM1116,177.7L1122.1,177.7M1111.7,182.1L1111.7,188.2M1122.1,177.7L1126.4,173.4L1130.7,177.7L1126.4,182.1ZM1130.7,177.7L1136.9,177.7M1126.4,182.1L1126.4,188.2M1136.9,177.7L1141.2,173.4L1145.5,177.7L1141.2,182.1ZM1145.5,177.7L1151.6,177.7M1141.2,182.1L1141.2,188.2M1151.6,177.7L1155.9,173.4L1160.3,177.7L1155.9,182.1ZM1160.3,177.7L1166.4,177.7M1155.9,182.1L1155.9,188.2M1166.4,177.7L1170.7,173.4L1175,177.7L1170.7,182.1ZM1175,177.7L1181.1,177.7M1170.7,182.1L1170.7,188.2M1181.1,177.7L1185.5,173.4L1189.8,177.7L1185.5,182.1ZM1189.8,177.7L1195.9,177.7M1185.5,182.1L1185.5,188.2M1195.9,177.7L1200.2,173.4L1204.5,177.7L1200.2,182.1ZM1204.5,177.7L1210.7,177.7M1200.2,182.1L1200.2,188.2M1210.7,177.7L1215,173.4L1219.3,177.7L1215,182.1ZM1219.3,177.7L1225.4,177.7M1215,182.1L1215,188.2M1225.4,177.7L1229.7,173.4L1234.1,177.7L1229.7,182.1ZM1234.1,177.7L1240.2,177.7M1229.7,182.1L1229.7,188.2M1240.2,177.7L1244.5,173.4L1248.8,177.7L1244.5,182.1ZM1248.8,177.7L1254.9,177.7M1244.5,182.1L1244.5,188.2M1254.9,177.7L1259.3,173.4L1263.6,177.7L1259.3,182.1ZM1263.6,177.7L1269.7,177.7M1259.3,182.1L1259.3,188.2M1269.7,177.7L1274,173.4L1278.3,177.7L1274,182.1ZM1278.3,177.7L1284.5,177.7M1274,182.1L1274,188.2M1284.5,177.7L1288.8,173.4L1293.1,177.7L1288.8,182.1ZM1293.1,177.7L1299.2,177.7M1288.8,182.1L1288.8,188.2M1299.2,177.7L1303.5,173.4L1307.9,177.7L1303.5,182.1ZM1307.9,177.7L1314,177.7M1303.5,182.1L1303.5,188.2M1314,177.7L1318.3,173.4L1322.6,177.7L1318.3,182.1ZM1322.6,177.7L1328.7,177.7M1318.3,182.1L1318.3,188.2M1328.7,177.7L1333.1,173.4L1337.4,177.7L1333.1,182.1ZM1337.4,177.7L1343.5,177.7M1333.1,182.1L1333.1,188.2M1343.5,177.7L1347.8,173.4L1352.1,177.7L1347.8,182.1ZM1352.1,177.7L1358.3,177.7M1347.8,182.1L1347.8,188.2M1358.3,177.7L1362.6,173.4L1366.9,177.7L1362.6,182.1ZM1366.9,177.7L1373,177.7M1362.6,182.1L1362.6,188.2M1373,177.7L1377.3,173.4L1381.7,177.7L1377.3,182.1ZM1381.7,177.7L1387.8,177.7M1377.3,182.1L1377.3,188.2M1387.8,177.7L1392.1,173.4L1396.4,177.7L1392.1,182.1ZM1396.4,177.7L1402.5,177.7M1392.1,182.1L1392.1,188.2M1402.5,177.7L1406.9,173.4L1411.2,177.7L1406.9,182.1ZM1411.2,177.7L1417.3,177.7M1406.9,182.1L1406.9,188.2M1417.3,177.7L1421.6,173.4L1425.9,177.7L1421.6,182.1ZM1425.9,177.7L1432.1,177.7M1421.6,182.1L1421.6,188.2M1432.1,177.7L1436.4,173.4L1440.7,177.7L1436.4,182.1ZM1440.7,177.7L1446.8,177.7M1436.4,182.1L1436.4,188.2M1446.8,177.7L1451.1,173.4L1455.5,177.7L1451.1,182.1ZM1455.5,177.7L1461.6,177.7M1451.1,182.1L1451.1,188.2M1461.6,177.7L1465.9,173.4L1470.2,177.7L1465.9,182.1ZM1470.2,177.7L1476.3,177.7M1465.9,182.1L1465.9,188.2M1476.3,177.7L1480.7,173.4L1485,177.7L1480.7,182.1ZM1485,177.7L1491.1,177.7M1480.7,182.1L1480.7,188.2M1491.1,177.7L1495.4,173.4L1499.7,177.7L1495.4,182.1ZM1499.7,177.7L1505.9,177.7M1495.4,182.1L1495.4,188.2M1505.9,177.7L1510.2,173.4L1514.5,177.7L1510.2,182.1ZM1514.5,177.7L1520.6,177.7M1510.2,182.1L1510.2,188.2M1520.6,177.7L1524.9,173.4L1529.3,177.7L1524.9,182.1ZM1529.3,177.7L1535.4,177.7M1524.9,182.1L1524.9,188.2M1535.4,177.7L1539.7,173.4L1544,177.7L1539.7,182.1ZM1544,177.7L1550.1,177.7M1539.7,182.1L1539.7,188.2M1550.1,177.7L1554.5,173.4L1558.8,177.7L1554.5,182.1ZM1558.8,177.7L1564.9,177.7M1554.5,182.1L1554.5,188.2M1564.9,177.7L1569.2,173.4L1573.5,177.7L1569.2,182.1ZM1569.2,182.1L1569.2,188.2M1573.5,177.7L1575.4,177.7M841.7,192.5L846,188.2L850.3,192.5L846,196.8ZM850.3,192.5L856.4,192.5M846,196.8L846,202.9M841.7,192.5L839.8,192.5M856.4,192.5L860.7,188.2L865.1,192.5L860.7,196.8ZM865.1,192.5L871.2,192.5M860.7,196.8L860.7,202.9M871.2,192.5L875.5,188.2L879.8,192.5L875.5,196.8ZM879.8,192.5L885.9,192.5M875.5,196.8L875.5,202.9M885.9,192.5L890.3,188.2L894.6,192.5L890.3,196.8ZM890.3,196.8L890.3,202.9M890.3,192.5L882.9,185.1M890.3,192.5L897.6,185.1M890.3,192.5L882.9,199.9M890.3,192.5L897.6,199.9M989.3,192.5L993.6,188.2L997.9,192.5L993.6,196.8ZM997.9,192.5L1004,192.5M993.6,196.8L993.6,202.9M993.6,192.5L986.2,185.1M993.6,192.5L1001,185.1M993.6,192.5L986.2,199.9M993.6,192.5L1001,199.9M1004,192.5L1008.3,188.2L1012.7,192.5L1008.3,196.8ZM1012.7,192.5L1018.8,192.5M1008.3,196.8L1008.3,202.9M1008.3,192.5L1001,185.1M1008.3,192.5L1015.7,185.1M1008.3,192.5L1001,199.9M1018.8,192.5L1023.1,188.2L1027.4,192.5L1023.1,196.8ZM1027.4,192.5L1033.5,192.5M1023.1,196.8L1023.1,202.9M1033.5,192.5L1037.9,188.2L1042.2,192.5L1037.9,196.8ZM1042.2,192.5L1048.3,192.5M1037.9,196.8L1037.9,202.9M1048.3,192.5L1052.6,188.2L1056.9,192.5L1052.6,196.8ZM1056.9,192.5L1063.1,192.5M1052.6,196.8L1052.6,202.9M1063.1,192.5L1067.4,188.2L1071.7,192.5L1067.4,196.8ZM1071.7,192.5L1077.8,192.5M1067.4,196.8L1067.4,202.9M1077.8,192.5L1082.1,188.2L1086.5,192.5L1082.1,196.8ZM1086.5,192.5L1092.6,192.5M1082.1,196.8L1082.1,202.9M1082.1,192.5L1089.5,185.1M1082.1,192.5L1074.8,199.9M1082.1,192.5L1089.5,199.9M1092.6,192.5L1096.9,188.2L1101.2,192.5L1096.9,196.8ZM1101.2,192.5L1107.3,192.5M1096.9,192.5L1089.5,185.1M1096.9,192.5L1104.3,185.1M1096.9,192.5L1089.5,199.9M1096.9,192.5L1104.3,199.9M1107.3,192.5L1111.7,188.2L1116,192.5L1111.7,196.8ZM1116,192.5L1122.1,192.5M1111.7,196.8L1111.7,202.9M1111.7,192.5L1104.3,185.1M1111.7,192.5L1104.3,199.9M1111.7,192.5L1119,199.9M1122.1,192.5L1126.4,188.2L1130.7,192.5L1126.4,196.8ZM1130.7,192.5L1136.9,192.5M1126.4,196.8L1126.4,202.9M1136.9,192.5L1141.2,188.2L1145.5,192.5L1141.2,196.8ZM1145.5,192.5L1151.6,192.5M1141.2,196.8L1141.2,202.9M1151.6,192.5L1155.9,188.2L1160.3,192.5L1155.9,196.8ZM1160.3,192.5L1166.4,192.5M1155.9,196.8L1155.9,202.9M1166.4,192.5L1170.7,188.2L1175,192.5L1170.7,196.8ZM1175,192.5L1181.1,192.5M1170.7,196.8L1170.7,202.9M1181.1,192.5L1185.5,188.2L1189.8,192.5L1185.5,196.8ZM1189.8,192.5L1195.9,192.5M1185.5,196.8L1185.5,202.9M1195.9,192.5L1200.2,188.2L1204.5,192.5L1200.2,196.8ZM1204.5,192.5L1210.7,192.5M1200.2,196.8L1200.2,202.9M1210.7,192.5L1215,188.2L1219.3,192.5L1215,196.8ZM1219.3,192.5L1225.4,192.5M1215,196.8L1215,202.9M1225.4,192.5L1229.7,188.2L1234.1,192.5L1229.7,196.8ZM1234.1,192.5L1240.2,192.5M1229.7,196.8L1229.7,202.9M1240.2,192.5L1244.5,188.2L1248.8,192.5L1244.5,196.8ZM1248.8,192.5L1254.9,192.5M1244.5,196.8L1244.5,202.9M1254.9,192.5L1259.3,188.2L1263.6,192.5L1259.3,196.8ZM1263.6,192.5L1269.7,192.5M1259.3,196.8L1259.3,202.9M1269.7,192.5L1274,188.2L1278.3,192.5L1274,196.8ZM1278.3,192.5L1284.5,192.5M1274,196.8L1274,202.9M1284.5,192.5L1288.8,188.2L1293.1,192.5L1288.8,196.8ZM1293.1,192.5L1299.2,192.5M1288.8,196.8L1288.8,202.9M1299.2,192.5L1303.5,188.2L1307.9,192.5L1303.5,196.8ZM1307.9,192.5L1314,192.5M1303.5,196.8L1303.5,202.9M1314,192.5L1318.3,188.2L1322.6,192.5L1318.3,196.8ZM1322.6,192.5L1328.7,192.5M1318.3,196.8L1318.3,202.9M1328.7,192.5L1333.1,188.2L1337.4,192.5L1333.1,196.8ZM1337.4,192.5L1343.5,192.5M1333.1,196.8L1333.1,202.9M1343.5,192.5L1347.8,188.2L1352.1,192.5L1347.8,196.8ZM1352.1,192.5L1358.3,192.5M1347.8,196.8L1347.8,202.9M1358.3,192.5L1362.6,188.2L1366.9,192.5L1362.6,196.8ZM1366.9,192.5L1373,192.5M1362.6,196.8L1362.6,202.9M1373,192.5L1377.3,188.2L1381.7,192.5L1377.3,196.8ZM1381.7,192.5L1387.8,192.5M1377.3,196.8L1377.3,202.9M1387.8,192.5L1392.1,188.2L1396.4,192.5L1392.1,196.8ZM1396.4,192.5L1402.5,192.5M1392.1,196.8L1392.1,202.9M1402.5,192.5L1406.9,188.2L1411.2,192.5L1406.9,196.8ZM1411.2,192.5L1417.3,192.5M1406.9,196.8L1406.9,202.9M1417.3,192.5L1421.6,188.2L1425.9,192.5L1421.6,196.8ZM1425.9,192.5L1432.1,192.5M1421.6,196.8L1421.6,202.9M1432.1,192.5L1436.4,188.2L1440.7,192.5L1436.4,196.8ZM1440.7,192.5L1446.8,192.5M1436.4,196.8L1436.4,202.9M1446.8,192.5L1451.1,188.2L1455.5,192.5L1451.1,196.8ZM1455.5,192.5L1461.6,192.5M1451.1,196.8L1451.1,202.9M1461.6,192.5L1465.9,188.2L1470.2,192.5L1465.9,196.8ZM1470.2,192.5L1476.3,192.5M1465.9,196.8L1465.9,202.9M1476.3,192.5L1480.7,188.2L1485,192.5L1480.7,196.8ZM1485,192.5L1491.1,192.5M1480.7,196.8L1480.7,202.9M1491.1,192.5L1495.4,188.2L1499.7,192.5L1495.4,196.8ZM1499.7,192.5L1505.9,192.5M1495.4,196.8L1495.4,202.9M1505.9,192.5L1510.2,188.2L1514.5,192.5L1510.2,196.8ZM1514.5,192.5L1520.6,192.5M1510.2,196.8L1510.2,202.9M1520.6,192.5L1524.9,188.2L1529.3,192.5L1524.9,196.8ZM1529.3,192.5L1535.4,192.5M1524.9,196.8L1524.9,202.9M1535.4,192.5L1539.7,188.2L1544,192.5L1539.7,196.8ZM1544,192.5L1550.1,192.5M1539.7,196.8L1539.7,202.9M1550.1,192.5L1554.5,188.2L1558.8,192.5L1554.5,196.8ZM1558.8,192.5L1564.9,192.5M1554.5,196.8L1554.5,202.9M1564.9,192.5L1569.2,188.2L1573.5,192.5L1569.2,196.8ZM1569.2,196.8L1569.2,202.9M1573.5,192.5L1575.4,192.5M841.7,207.3L846,202.9L850.3,207.3L846,211.6ZM850.3,207.3L856.4,207.3M846,211.6L846,217.7M841.7,207.3L839.8,207.3M856.4,207.3L860.7,202.9L865.1,207.3L860.7,211.6ZM865.1,207.3L871.2,207.3M860.7,211.6L860.7,217.7M871.2,207.3L875.5,202.9L879.8,207.3L875.5,211.6ZM879.8,207.3L885.9,207.3M875.5,211.6L875.5,217.7M885.9,207.3L890.3,202.9L894.6,207.3L890.3,211.6ZM890.3,211.6L890.3,217.7M890.3,207.3L882.9,199.9M890.3,207.3L897.6,199.9M890.3,207.3L882.9,214.6M890.3,207.3L897.6,214.6M974.5,207.3L978.8,202.9L983.1,207.3L978.8,211.6ZM983.1,207.3L989.3,207.3M978.8,207.3L971.4,199.9M978.8,207.3L986.2,199.9M978.8,207.3L971.4,214.6M978.8,207.3L986.2,214.6M989.3,207.3L993.6,202.9L997.9,207.3L993.6,211.6ZM997.9,207.3L1004,207.3M993.6,211.6L993.6,217.7M993.6,207.3L986.2,199.9M993.6,207.3L1001,199.9M993.6,207.3L986.2,214.6M993.6,207.3L1001,214.6M1004,207.3L1008.3,202.9L1012.7,207.3L1008.3,211.6ZM1012.7,207.3L1018.8,207.3M1008.3,211.6L1008.3,217.7M1018.8,207.3L1023.1,202.9L1027.4,207.3L1023.1,211.6ZM1027.4,207.3L1033.5,207.3M1023.1,211.6L1023.1,217.7M1033.5,207.3L1037.9,202.9L1042.2,207.3L1037.9,211.6ZM1042.2,207.3L1048.3,207.3M1037.9,211.6L1037.9,217.7M1048.3,207.3L1052.6,202.9L1056.9,207.3L1052.6,211.6ZM1056.9,207.3L1063.1,207.3M1052.6,211.6L1052.6,217.7M1063.1,207.3L1067.4,202.9L1071.7,207.3L1067.4,211.6ZM1071.7,207.3L1077.8,207.3M1067.4,211.6L1067.4,217.7M1077.8,207.3L1082.1,202.9L1086.5,207.3L1082.1,211.6ZM1082.1,211.6L1082.1,217.7M1082.1,207.3L1074.8,199.9M1082.1,207.3L1089.5,199.9M1082.1,207.3L1074.8,214.6M1082.1,207.3L1089.5,214.6M1107.3,207.3L1111.7,202.9L1116,207.3L1111.7,211.6ZM1116,207.3L1122.1,207.3M1111.7,211.6L1111.7,217.7M1111.7,207.3L1104.3,199.9M1111.7,207.3L1119,199.9M1111.7,207.3L1104.3,214.6M1111.7,207.3L1119,214.6M1122.1,207.3L1126.4,202.9L1130.7,207.3L1126.4,211.6ZM1130.7,207.3L1136.9,207.3M1126.4,211.6L1126.4,217.7M1136.9,207.3L1141.2,202.9L1145.5,207.3L1141.2,211.6ZM1145.5,207.3L1151.6,207.3M1141.2,211.6L1141.2,217.7M1151.6,207.3L1155.9,202.9L1160.3,207.3L1155.9,211.6ZM1160.3,207.3L1166.4,207.3M1155.9,211.6L1155.9,217.7M1166.4,207.3L1170.7,202.9L1175,207.3L1170.7,211.6ZM1175,207.3L1181.1,207.3M1170.7,211.6L1170.7,217.7M1181.1,207.3L1185.5,202.9L1189.8,207.3L1185.5,211.6ZM1189.8,207.3L1195.9,207.3M1185.5,211.6L1185.5,217.7M1195.9,207.3L1200.2,202.9L1204.5,207.3L1200.2,211.6ZM1204.5,207.3L1210.7,207.3M1200.2,211.6L1200.2,217.7M1210.7,207.3L1215,202.9L1219.3,207.3L1215,211.6ZM1219.3,207.3L1225.4,207.3M1215,211.6L1215,217.7M1225.4,207.3L1229.7,202.9L1234.1,207.3L1229.7,211.6ZM1234.1,207.3L1240.2,207.3M1229.7,211.6L1229.7,217.7M1240.2,207.3L1244.5,202.9L1248.8,207.3L1244.5,211.6ZM1248.8,207.3L1254.9,207.3M1244.5,211.6L1244.5,217.7M1254.9,207.3L1259.3,202.9L1263.6,207.3L1259.3,211.6ZM1263.6,207.3L1269.7,207.3M1259.3,211.6L1259.3,217.7M1269.7,207.3L1274,202.9L1278.3,207.3L1274,211.6ZM1278.3,207.3L1284.5,207.3M1274,211.6L1274,217.7M1284.5,207.3L1288.8,202.9L1293.1,207.3L1288.8,211.6ZM1293.1,207.3L1299.2,207.3M1288.8,211.6L1288.8,217.7M1299.2,207.3L1303.5,202.9L1307.9,207.3L1303.5,211.6ZM1307.9,207.3L1314,207.3M1303.5,211.6L1303.5,217.7M1314,207.3L1318.3,202.9L1322.6,207.3L1318.3,211.6ZM1322.6,207.3L1328.7,207.3M1318.3,211.6L1318.3,217.7M1328.7,207.3L1333.1,202.9L1337.4,207.3L1333.1,211.6ZM1337.4,207.3L1343.5,207.3M1333.1,211.6L1333.1,217.7M1343.5,207.3L1347.8,202.9L1352.1,207.3L1347.8,211.6ZM1352.1,207.3L1358.3,207.3M1347.8,211.6L1347.8,217.7M1358.3,207.3L1362.6,202.9L1366.9,207.3L1362.6,211.6ZM1366.9,207.3L1373,207.3M1362.6,211.6L1362.6,217.7M1373,207.3L1377.3,202.9L1381.7,207.3L1377.3,211.6ZM1381.7,207.3L1387.8,207.3M1377.3,211.6L1377.3,217.7M1387.8,207.3L1392.1,202.9L1396.4,207.3L1392.1,211.6ZM1396.4,207.3L1402.5,207.3M1392.1,211.6L1392.1,217.7M1402.5,207.3L1406.9,202.9L1411.2,207.3L1406.9,211.6ZM1411.2,207.3L1417.3,207.3M1406.9,211.6L1406.9,217.7M1417.3,207.3L1421.6,202.9L1425.9,207.3L1421.6,211.6ZM1425.9,207.3L1432.1,207.3M1421.6,211.6L1421.6,217.7M1432.1,207.3L1436.4,202.9L1440.7,207.3L1436.4,211.6ZM1440.7,207.3L1446.8,207.3M1436.4,211.6L1436.4,217.7M1446.8,207.3L1451.1,202.9L1455.5,207.3L1451.1,211.6ZM1455.5,207.3L1461.6,207.3M1451.1,211.6L1451.1,217.7M1461.6,207.3L1465.9,202.9L1470.2,207.3L1465.9,211.6ZM1470.2,207.3L1476.3,207.3M1465.9,211.6L1465.9,217.7M1476.3,207.3L1480.7,202.9L1485,207.3L1480.7,211.6ZM1485,207.3L1491.1,207.3M1480.7,211.6L1480.7,217.7M1491.1,207.3L1495.4,202.9L1499.7,207.3L1495.4,211.6ZM1499.7,207.3L1505.9,207.3M1495.4,211.6L1495.4,217.7M1505.9,207.3L1510.2,202.9L1514.5,207.3L1510.2,211.6ZM1514.5,207.3L1520.6,207.3M1510.2,211.6L1510.2,217.7M1520.6,207.3L1524.9,202.9L1529.3,207.3L1524.9,211.6ZM1529.3,207.3L1535.4,207.3M1524.9,211.6L1524.9,217.7M1535.4,207.3L1539.7,202.9L1544,207.3L1539.7,211.6ZM1544,207.3L1550.1,207.3M1539.7,211.6L1539.7,217.7M1550.1,207.3L1554.5,202.9L1558.8,207.3L1554.5,211.6ZM1558.8,207.3L1564.9,207.3M1554.5,211.6L1554.5,217.7M1564.9,207.3L1569.2,202.9L1573.5,207.3L1569.2,211.6ZM1569.2,211.6L1569.2,217.7M1573.5,207.3L1575.4,207.3M841.7,222L846,217.7L850.3,222L846,226.3ZM850.3,222L856.4,222M846,226.3L846,232.5M841.7,222L839.8,222M856.4,222L860.7,217.7L865.1,222L860.7,226.3ZM865.1,222L871.2,222M860.7,226.3L860.7,232.5M871.2,222L875.5,217.7L879.8,222L875.5,226.3ZM879.8,222L885.9,222M875.5,226.3L875.5,232.5M885.9,222L890.3,217.7L894.6,222L890.3,226.3ZM890.3,226.3L890.3,232.5M890.3,222L882.9,214.6M890.3,222L897.6,214.6M890.3,222L882.9,229.4M890.3,222L897.6,229.4M989.3,222L993.6,217.7L997.9,222L993.6,226.3ZM997.9,222L1004,222M993.6,222L986.2,214.6M993.6,222L1001,214.6M993.6,222L986.2,229.4M993.6,222L1001,229.4M1004,222L1008.3,217.7L1012.7,222L1008.3,226.3ZM1012.7,222L1018.8,222M1008.3,226.3L1008.3,232.5M1008.3,222L1001,214.6M1008.3,222L1001,229.4M1008.3,222L1015.7,229.4M1018.8,222L1023.1,217.7L1027.4,222L1023.1,226.3ZM1027.4,222L1033.5,222M1023.1,226.3L1023.1,232.5M1033.5,222L1037.9,217.7L1042.2,222L1037.9,226.3ZM1042.2,222L1048.3,222M1037.9,226.3L1037.9,232.5M1048.3,222L1052.6,217.7L1056.9,222L1052.6,226.3ZM1056.9,222L1063.1,222M1052.6,226.3L1052.6,232.5M1063.1,222L1067.4,217.7L1071.7,222L1067.4,226.3ZM1071.7,222L1077.8,222M1067.4,226.3L1067.4,232.5M1077.8,222L1082.1,217.7L1086.5,222L1082.1,226.3ZM1086.5,222L1092.6,222M1082.1,226.3L1082.1,232.5M1082.1,222L1074.8,214.6M1082.1,222L1089.5,214.6M1082.1,222L1089.5,229.4M1092.6,222L1096.9,217.7L1101.2,222L1096.9,226.3ZM1101.2,222L1107.3,222M1096.9,226.3L1096.9,232.5M1096.9,222L1089.5,214.6M1096.9,222L1104.3,214.6M1096.9,222L1089.5,229.4M1096.9,222L1104.3,229.4M1107.3,222L1111.7,217.7L1116,222L1111.7,226.3ZM1116,222L1122.1,222M1111.7,222L1104.3,214.6M1111.7,222L1119,214.6M1111.7,222L1104.3,229.4M1111.7,222L1119,229.4M1122.1,222L1126.4,217.7L1130.7,222L1126.4,226.3ZM1130.7,222L1136.9,222M1126.4,222L1119,214.6M1126.4,222L1133.8,214.6M1126.4,222L1119,229.4M1126.4,222L1133.8,229.4M1136.9,222L1141.2,217.7L1145.5,222L1141.2,226.3ZM1145.5,222L1151.6,222M1141.2,226.3L1141.2,232.5M1141.2,222L1133.8,214.6M1141.2,222L1133.8,229.4M1141.2,222L1148.6,229.4M1151.6,222L1155.9,217.7L1160.3,222L1155.9,226.3ZM1160.3,222L1166.4,222M1155.9,226.3L1155.9,232.5M1166.4,222L1170.7,217.7L1175,222L1170.7,226.3ZM1175,222L1181.1,222M1170.7,226.3L1170.7,232.5M1181.1,222L1185.5,217.7L1189.8,222L1185.5,226.3ZM1189.8,222L1195.9,222M1185.5,226.3L1185.5,232.5M1195.9,222L1200.2,217.7L1204.5,222L1200.2,226.3ZM1204.5,222L1210.7,222M1200.2,226.3L1200.2,232.5M1210.7,222L1215,217.7L1219.3,222L1215,226.3ZM1219.3,222L1225.4,222M1215,226.3L1215,232.5M1225.4,222L1229.7,217.7L1234.1,222L1229.7,226.3ZM1234.1,222L1240.2,222M1229.7,226.3L1229.7,232.5M1240.2,222L1244.5,217.7L1248.8,222L1244.5,226.3ZM1248.8,222L1254.9,222M1244.5,226.3L1244.5,232.5M1254.9,222L1259.3,217.7L1263.6,222L1259.3,226.3ZM1263.6,222L1269.7,222M1259.3,226.3L1259.3,232.5M1269.7,222L1274,217.7L1278.3,222L1274,226.3ZM1278.3,222L1284.5,222M1274,226.3L1274,232.5M1284.5,222L1288.8,217.7L1293.1,222L1288.8,226.3ZM1293.1,222L1299.2,222M1288.8,226.3L1288.8,232.5M1299.2,222L1303.5,217.7L1307.9,222L1303.5,226.3ZM1307.9,222L1314,222M1303.5,226.3L1303.5,232.5M1314,222L1318.3,217.7L1322.6,222L1318.3,226.3ZM1322.6,222L1328.7,222M1318.3,226.3L1318.3,232.5M1328.7,222L1333.1,217.7L1337.4,222L1333.1,226.3ZM1337.4,222L1343.5,222M1333.1,226.3L1333.1,232.5M1343.5,222L1347.8,217.7L1352.1,222L1347.8,226.3ZM1352.1,222L1358.3,222M1347.8,226.3L1347.8,232.5M1358.3,222L1362.6,217.7L1366.9,222L1362.6,226.3ZM1366.9,222L1373,222M1362.6,226.3L1362.6,232.5M1373,222L1377.3,217.7L1381.7,222L1377.3,226.3ZM1381.7,222L1387.8,222M1377.3,226.3L1377.3,232.5M1387.8,222L1392.1,217.7L1396.4,222L1392.1,226.3ZM1396.4,222L1402.5,222M1392.1,226.3L1392.1,232.5M1402.5,222L1406.9,217.7L1411.2,222L1406.9,226.3ZM1411.2,222L1417.3,222M1406.9,226.3L1406.9,232.5M1417.3,222L1421.6,217.7L1425.9,222L1421.6,226.3ZM1425.9,222L1432.1,222M1421.6,226.3L1421.6,232.5M1432.1,222L1436.4,217.7L1440.7,222L1436.4,226.3ZM1440.7,222L1446.8,222M1436.4,226.3L1436.4,232.5M1446.8,222L1451.1,217.7L1455.5,222L1451.1,226.3ZM1455.5,222L1461.6,222M1451.1,226.3L1451.1,232.5M1461.6,222L1465.9,217.7L1470.2,222L1465.9,226.3ZM1470.2,222L1476.3,222M1465.9,226.3L1465.9,232.5M1476.3,222L1480.7,217.7L1485,222L1480.7,226.3ZM1485,222L1491.1,222M1480.7,226.3L1480.7,232.5M1491.1,222L1495.4,217.7L1499.7,222L1495.4,226.3ZM1499.7,222L1505.9,222M1495.4,226.3L1495.4,232.5M1505.9,222L1510.2,217.7L1514.5,222L1510.2,226.3ZM1514.5,222L1520.6,222M1510.2,226.3L1510.2,232.5M1520.6,222L1524.9,217.7L1529.3,222L1524.9,226.3ZM1529.3,222L1535.4,222M1524.9,226.3L1524.9,232.5M1535.4,222L1539.7,217.7L1544,222L1539.7,226.3ZM1544,222L1550.1,222M1539.7,226.3L1539.7,232.5M1550.1,222L1554.5,217.7L1558.8,222L1554.5,226.3ZM1558.8,222L1564.9,222M1554.5,226.3L1554.5,232.5M1564.9,222L1569.2,217.7L1573.5,222L1569.2,226.3ZM1569.2,226.3L1569.2,232.5M1573.5,222L1575.4,222M841.7,236.8L846,232.5L850.3,236.8L846,241.1ZM850.3,236.8L856.4,236.8M841.7,236.8L839.8,236.8M846,236.8L838.6,229.4M846,236.8L853.4,229.4M846,236.8L838.6,244.2M846,236.8L853.4,244.2M856.4,236.8L860.7,232.5L865.1,236.8L860.7,241.1ZM865.1,236.8L871.2,236.8M860.7,241.1L860.7,247.2M860.7,236.8L853.4,229.4M860.7,236.8L853.4,244.2M860.7,236.8L868.1,244.2M871.2,236.8L875.5,232.5L879.8,236.8L875.5,241.1ZM879.8,236.8L885.9,236.8M875.5,241.1L875.5,247.2M885.9,236.8L890.3,232.5L894.6,236.8L890.3,241.1ZM894.6,236.8L900.7,236.8M890.3,241.1L890.3,247.2M890.3,236.8L882.9,229.4M890.3,236.8L897.6,229.4M890.3,236.8L897.6,244.2M900.7,236.8L905,232.5L909.3,236.8L905,241.1ZM905,241.1L905,247.2M905,236.8L897.6,229.4M905,236.8L912.4,229.4M905,236.8L897.6,244.2M905,236.8L912.4,244.2M1004,236.8L1008.3,232.5L1012.7,236.8L1008.3,241.1ZM1012.7,236.8L1018.8,236.8M1008.3,241.1L1008.3,247.2M1008.3,236.8L1001,229.4M1008.3,236.8L1015.7,229.4M1008.3,236.8L1001,244.2M1008.3,236.8L1015.7,244.2M1018.8,236.8L1023.1,232.5L1027.4,236.8L1023.1,241.1ZM1027.4,236.8L1033.5,236.8M1023.1,241.1L1023.1,247.2M1033.5,236.8L1037.9,232.5L1042.2,236.8L1037.9,241.1ZM1042.2,236.8L1048.3,236.8M1037.9,241.1L1037.9,247.2M1048.3,236.8L1052.6,232.5L1056.9,236.8L1052.6,241.1ZM1056.9,236.8L1063.1,236.8M1052.6,241.1L1052.6,247.2M1063.1,236.8L1067.4,232.5L1071.7,236.8L1067.4,241.1ZM1071.7,236.8L1077.8,236.8M1067.4,241.1L1067.4,247.2M1077.8,236.8L1082.1,232.5L1086.5,236.8L1082.1,241.1ZM1086.5,236.8L1092.6,236.8M1082.1,241.1L1082.1,247.2M1092.6,236.8L1096.9,232.5L1101.2,236.8L1096.9,241.1ZM1096.9,241.1L1096.9,247.2M1096.9,236.8L1089.5,229.4M1096.9,236.8L1104.3,229.4M1096.9,236.8L1089.5,244.2M1096.9,236.8L1104.3,244.2M1136.9,236.8L1141.2,232.5L1145.5,236.8L1141.2,241.1ZM1145.5,236.8L1151.6,236.8M1141.2,241.1L1141.2,247.2M1141.2,236.8L1133.8,229.4M1141.2,236.8L1148.6,229.4M1141.2,236.8L1133.8,244.2M1141.2,236.8L1148.6,244.2M1151.6,236.8L1155.9,232.5L1160.3,236.8L1155.9,241.1ZM1160.3,236.8L1166.4,236.8M1155.9,241.1L1155.9,247.2M1166.4,236.8L1170.7,232.5L1175,236.8L1170.7,241.1ZM1175,236.8L1181.1,236.8M1170.7,241.1L1170.7,247.2M1181.1,236.8L1185.5,232.5L1189.8,236.8L1185.5,241.1ZM1189.8,236.8L1195.9,236.8M1185.5,241.1L1185.5,247.2M1195.9,236.8L1200.2,232.5L1204.5,236.8L1200.2,241.1ZM1204.5,236.8L1210.7,236.8M1200.2,241.1L1200.2,247.2M1210.7,236.8L1215,232.5L1219.3,236.8L1215,241.1ZM1219.3,236.8L1225.4,236.8M1215,241.1L1215,247.2M1225.4,236.8L1229.7,232.5L1234.1,236.8L1229.7,241.1ZM1234.1,236.8L1240.2,236.8M1229.7,241.1L1229.7,247.2M1240.2,236.8L1244.5,232.5L1248.8,236.8L1244.5,241.1ZM1248.8,236.8L1254.9,236.8M1244.5,241.1L1244.5,247.2M1254.9,236.8L1259.3,232.5L1263.6,236.8L1259.3,241.1ZM1263.6,236.8L1269.7,236.8M1259.3,241.1L1259.3,247.2M1269.7,236.8L1274,232.5L1278.3,236.8L1274,241.1ZM1278.3,236.8L1284.5,236.8M1274,241.1L1274,247.2M1284.5,236.8L1288.8,232.5L1293.1,236.8L1288.8,241.1ZM1293.1,236.8L1299.2,236.8M1288.8,241.1L1288.8,247.2M1299.2,236.8L1303.5,232.5L1307.9,236.8L1303.5,241.1ZM1307.9,236.8L1314,236.8M1303.5,241.1L1303.5,247.2M1314,236.8L1318.3,232.5L1322.6,236.8L1318.3,241.1ZM1322.6,236.8L1328.7,236.8M1318.3,241.1L1318.3,247.2M1328.7,236.8L1333.1,232.5L1337.4,236.8L1333.1,241.1ZM1337.4,236.8L1343.5,236.8M1333.1,241.1L1333.1,247.2M1343.5,236.8L1347.8,232.5L1352.1,236.8L1347.8,241.1ZM1352.1,236.8L1358.3,236.8M1347.8,241.1L1347.8,247.2M1358.3,236.8L1362.6,232.5L1366.9,236.8L1362.6,241.1ZM1366.9,236.8L1373,236.8M1362.6,241.1L1362.6,247.2M1373,236.8L1377.3,232.5L1381.7,236.8L1377.3,241.1ZM1381.7,236.8L1387.8,236.8M1377.3,241.1L1377.3,247.2M1387.8,236.8L1392.1,232.5L1396.4,236.8L1392.1,241.1ZM1396.4,236.8L1402.5,236.8M1392.1,241.1L1392.1,247.2M1402.5,236.8L1406.9,232.5L1411.2,236.8L1406.9,241.1ZM1411.2,236.8L1417.3,236.8M1406.9,241.1L1406.9,247.2M1417.3,236.8L1421.6,232.5L1425.9,236.8L1421.6,241.1ZM1425.9,236.8L1432.1,236.8M1421.6,241.1L1421.6,247.2M1432.1,236.8L1436.4,232.5L1440.7,236.8L1436.4,241.1ZM1440.7,236.8L1446.8,236.8M1436.4,241.1L1436.4,247.2M1446.8,236.8L1451.1,232.5L1455.5,236.8L1451.1,241.1ZM1455.5,236.8L1461.6,236.8M1451.1,241.1L1451.1,247.2M1461.6,236.8L1465.9,232.5L1470.2,236.8L1465.9,241.1ZM1470.2,236.8L1476.3,236.8M1465.9,241.1L1465.9,247.2M1476.3,236.8L1480.7,232.5L1485,236.8L1480.7,241.1ZM1485,236.8L1491.1,236.8M1480.7,241.1L1480.7,247.2M1491.1,236.8L1495.4,232.5L1499.7,236.8L1495.4,241.1ZM1499.7,236.8L1505.9,236.8M1495.4,241.1L1495.4,247.2M1505.9,236.8L1510.2,232.5L1514.5,236.8L1510.2,241.1ZM1514.5,236.8L1520.6,236.8M1510.2,241.1L1510.2,247.2M1520.6,236.8L1524.9,232.5L1529.3,236.8L1524.9,241.1ZM1529.3,236.8L1535.4,236.8M1524.9,241.1L1524.9,247.2M1535.4,236.8L1539.7,232.5L1544,236.8L1539.7,241.1ZM1544,236.8L1550.1,236.8M1539.7,241.1L1539.7,247.2M1550.1,236.8L1554.5,232.5L1558.8,236.8L1554.5,241.1ZM1558.8,236.8L1564.9,236.8M1554.5,241.1L1554.5,247.2M1564.9,236.8L1569.2,232.5L1573.5,236.8L1569.2,241.1ZM1569.2,241.1L1569.2,247.2M1573.5,236.8L1575.4,236.8M856.4,251.5L860.7,247.2L865.1,251.5L860.7,255.9ZM865.1,251.5L871.2,251.5M860.7,255.9L860.7,262M860.7,251.5L853.4,244.2M860.7,251.5L868.1,244.2M860.7,251.5L853.4,258.9M860.7,251.5L868.1,258.9M871.2,251.5L875.5,247.2L879.8,251.5L875.5,255.9ZM879.8,251.5L885.9,251.5M875.5,255.9L875.5,262M885.9,251.5L890.3,247.2L894.6,251.5L890.3,255.9ZM894.6,251.5L900.7,251.5M890.3,255.9L890.3,262M900.7,251.5L905,247.2L909.3,251.5L905,255.9ZM909.3,251.5L915.5,251.5M905,255.9L905,262M905,251.5L897.6,244.2M905,251.5L912.4,244.2M905,251.5L897.6,258.9M905,251.5L912.4,258.9M915.5,251.5L919.8,247.2L924.1,251.5L919.8,255.9ZM919.8,255.9L919.8,262M919.8,251.5L912.4,244.2M919.8,251.5L927.2,244.2M919.8,251.5L912.4,258.9M919.8,251.5L927.2,258.9M959.7,251.5L964.1,247.2L968.4,251.5L964.1,255.9ZM968.4,251.5L974.5,251.5M964.1,251.5L956.7,244.2M964.1,251.5L971.4,244.2M964.1,251.5L956.7,258.9M964.1,251.5L971.4,258.9M974.5,251.5L978.8,247.2L983.1,251.5L978.8,255.9ZM978.8,255.9L978.8,262M978.8,251.5L971.4,244.2M978.8,251.5L986.2,244.2M978.8,251.5L971.4,258.9M978.8,251.5L986.2,258.9M1004,251.5L1008.3,247.2L1012.7,251.5L1008.3,255.9ZM1012.7,251.5L1018.8,251.5M1008.3,255.9L1008.3,262M1008.3,251.5L1001,244.2M1008.3,251.5L1015.7,244.2M1008.3,251.5L1001,258.9M1008.3,251.5L1015.7,258.9M1018.8,251.5L1023.1,247.2L1027.4,251.5L1023.1,255.9ZM1027.4,251.5L1033.5,251.5M1023.1,255.9L1023.1,262M1033.5,251.5L1037.9,247.2L1042.2,251.5L1037.9,255.9ZM1042.2,251.5L1048.3,251.5M1037.9,255.9L1037.9,262M1048.3,251.5L1052.6,247.2L1056.9,251.5L1052.6,255.9ZM1056.9,251.5L1063.1,251.5M1052.6,255.9L1052.6,262M1063.1,251.5L1067.4,247.2L1071.7,251.5L1067.4,255.9ZM1071.7,251.5L1077.8,251.5M1067.4,255.9L1067.4,262M1077.8,251.5L1082.1,247.2L1086.5,251.5L1082.1,255.9ZM1086.5,251.5L1092.6,251.5M1082.1,255.9L1082.1,262M1092.6,251.5L1096.9,247.2L1101.2,251.5L1096.9,255.9ZM1096.9,255.9L1096.9,262M1096.9,251.5L1089.5,244.2M1096.9,251.5L1104.3,244.2M1096.9,251.5L1089.5,258.9M1096.9,251.5L1104.3,258.9M1122.1,251.5L1126.4,247.2L1130.7,251.5L1126.4,255.9ZM1130.7,251.5L1136.9,251.5M1126.4,255.9L1126.4,262M1126.4,251.5L1119,244.2M1126.4,251.5L1133.8,244.2M1126.4,251.5L1119,258.9M1126.4,251.5L1133.8,258.9M1136.9,251.5L1141.2,247.2L1145.5,251.5L1141.2,255.9ZM1145.5,251.5L1151.6,251.5M1141.2,255.9L1141.2,262M1141.2,251.5L1133.8,244.2M1141.2,251.5L1148.6,244.2M1141.2,251.5L1133.8,258.9M1151.6,251.5L1155.9,247.2L1160.3,251.5L1155.9,255.9ZM1160.3,251.5L1166.4,251.5M1155.9,255.9L1155.9,262M1166.4,251.5L1170.7,247.2L1175,251.5L1170.7,255.9ZM1175,251.5L1181.1,251.5M1170.7,255.9L1170.7,262M1181.1,251.5L1185.5,247.2L1189.8,251.5L1185.5,255.9ZM1189.8,251.5L1195.9,251.5M1185.5,255.9L1185.5,262M1195.9,251.5L1200.2,247.2L1204.5,251.5L1200.2,255.9ZM1204.5,251.5L1210.7,251.5M1200.2,255.9L1200.2,262M1210.7,251.5L1215,247.2L1219.3,251.5L1215,255.9ZM1219.3,251.5L1225.4,251.5M1215,255.9L1215,262M1225.4,251.5L1229.7,247.2L1234.1,251.5L1229.7,255.9ZM1234.1,251.5L1240.2,251.5M1229.7,255.9L1229.7,262M1240.2,251.5L1244.5,247.2L1248.8,251.5L1244.5,255.9ZM1248.8,251.5L1254.9,251.5M1244.5,255.9L1244.5,262M1254.9,251.5L1259.3,247.2L1263.6,251.5L1259.3,255.9ZM1263.6,251.5L1269.7,251.5M1259.3,255.9L1259.3,262M1269.7,251.5L1274,247.2L1278.3,251.5L1274,255.9ZM1278.3,251.5L1284.5,251.5M1274,255.9L1274,262M1284.5,251.5L1288.8,247.2L1293.1,251.5L1288.8,255.9ZM1293.1,251.5L1299.2,251.5M1288.8,255.9L1288.8,262M1299.2,251.5L1303.5,247.2L1307.9,251.5L1303.5,255.9ZM1307.9,251.5L1314,251.5M1303.5,255.9L1303.5,262M1314,251.5L1318.3,247.2L1322.6,251.5L1318.3,255.9ZM1322.6,251.5L1328.7,251.5M1318.3,255.9L1318.3,262M1328.7,251.5L1333.1,247.2L1337.4,251.5L1333.1,255.9ZM1337.4,251.5L1343.5,251.5M1333.1,255.9L1333.1,262M1343.5,251.5L1347.8,247.2L1352.1,251.5L1347.8,255.9ZM1352.1,251.5L1358.3,251.5M1347.8,255.9L1347.8,262M1358.3,251.5L1362.6,247.2L1366.9,251.5L1362.6,255.9ZM1366.9,251.5L1373,251.5M1362.6,255.9L1362.6,262M1373,251.5L1377.3,247.2L1381.7,251.5L1377.3,255.9ZM1381.7,251.5L1387.8,251.5M1377.3,255.9L1377.3,262M1387.8,251.5L1392.1,247.2L1396.4,251.5L1392.1,255.9ZM1396.4,251.5L1402.5,251.5M1392.1,255.9L1392.1,262M1402.5,251.5L1406.9,247.2L1411.2,251.5L1406.9,255.9ZM1411.2,251.5L1417.3,251.5M1406.9,255.9L1406.9,262M1417.3,251.5L1421.6,247.2L1425.9,251.5L1421.6,255.9ZM1425.9,251.5L1432.1,251.5M1421.6,255.9L1421.6,262M1432.1,251.5L1436.4,247.2L1440.7,251.5L1436.4,255.9ZM1440.7,251.5L1446.8,251.5M1436.4,255.9L1436.4,262M1446.8,251.5L1451.1,247.2L1455.5,251.5L1451.1,255.9ZM1455.5,251.5L1461.6,251.5M1451.1,255.9L1451.1,262M1461.6,251.5L1465.9,247.2L1470.2,251.5L1465.9,255.9ZM1470.2,251.5L1476.3,251.5M1465.9,255.9L1465.9,262M1476.3,251.5L1480.7,247.2L1485,251.5L1480.7,255.9ZM1485,251.5L1491.1,251.5M1480.7,255.9L1480.7,262M1491.1,251.5L1495.4,247.2L1499.7,251.5L1495.4,255.9ZM1499.7,251.5L1505.9,251.5M1495.4,255.9L1495.4,262M1505.9,251.5L1510.2,247.2L1514.5,251.5L1510.2,255.9ZM1514.5,251.5L1520.6,251.5M1510.2,255.9L1510.2,262M1520.6,251.5L1524.9,247.2L1529.3,251.5L1524.9,255.9ZM1529.3,251.5L1535.4,251.5M1524.9,255.9L1524.9,262M1535.4,251.5L1539.7,247.2L1544,251.5L1539.7,255.9ZM1544,251.5L1550.1,251.5M1539.7,255.9L1539.7,262M1550.1,251.5L1554.5,247.2L1558.8,251.5L1554.5,255.9ZM1558.8,251.5L1564.9,251.5M1554.5,255.9L1554.5,262M1564.9,251.5L1569.2,247.2L1573.5,251.5L1569.2,255.9ZM1569.2,255.9L1569.2,262M1573.5,251.5L1575.4,251.5M856.4,266.3L860.7,262L865.1,266.3L860.7,270.6ZM865.1,266.3L871.2,266.3M860.7,270.6L860.7,276.7M860.7,266.3L853.4,258.9M860.7,266.3L868.1,258.9M860.7,266.3L853.4,273.7M860.7,266.3L868.1,273.7M871.2,266.3L875.5,262L879.8,266.3L875.5,270.6ZM879.8,266.3L885.9,266.3M875.5,270.6L875.5,276.7M875.5,266.3L868.1,258.9M875.5,266.3L882.9,258.9M875.5,266.3L868.1,273.7M875.5,266.3L882.9,273.7M885.9,266.3L890.3,262L894.6,266.3L890.3,270.6ZM894.6,266.3L900.7,266.3M890.3,266.3L882.9,258.9M890.3,266.3L897.6,258.9M890.3,266.3L882.9,273.7M890.3,266.3L897.6,273.7M900.7,266.3L905,262L909.3,266.3L905,270.6ZM909.3,266.3L915.5,266.3M905,266.3L897.6,258.9M905,266.3L912.4,258.9M905,266.3L897.6,273.7M905,266.3L912.4,273.7M915.5,266.3L919.8,262L924.1,266.3L919.8,270.6ZM919.8,266.3L912.4,258.9M919.8,266.3L927.2,258.9M919.8,266.3L912.4,273.7M919.8,266.3L927.2,273.7M974.5,266.3L978.8,262L983.1,266.3L978.8,270.6ZM983.1,266.3L989.3,266.3M978.8,266.3L971.4,258.9M978.8,266.3L986.2,258.9M978.8,266.3L971.4,273.7M978.8,266.3L986.2,273.7M989.3,266.3L993.6,262L997.9,266.3L993.6,270.6ZM997.9,266.3L1004,266.3M993.6,270.6L993.6,276.7M993.6,266.3L986.2,258.9M993.6,266.3L1001,258.9M993.6,266.3L986.2,273.7M993.6,266.3L1001,273.7M1004,266.3L1008.3,262L1012.7,266.3L1008.3,270.6ZM1012.7,266.3L1018.8,266.3M1008.3,270.6L1008.3,276.7M1008.3,266.3L1001,258.9M1008.3,266.3L1015.7,258.9M1008.3,266.3L1001,273.7M1018.8,266.3L1023.1,262L1027.4,266.3L1023.1,270.6ZM1027.4,266.3L1033.5,266.3M1023.1,270.6L1023.1,276.7M1033.5,266.3L1037.9,262L1042.2,266.3L1037.9,270.6ZM1042.2,266.3L1048.3,266.3M1037.9,270.6L1037.9,276.7M1048.3,266.3L1052.6,262L1056.9,266.3L1052.6,270.6ZM1056.9,266.3L1063.1,266.3M1052.6,270.6L1052.6,276.7M1063.1,266.3L1067.4,262L1071.7,266.3L1067.4,270.6ZM1071.7,266.3L1077.8,266.3M1067.4,270.6L1067.4,276.7M1077.8,266.3L1082.1,262L1086.5,266.3L1082.1,270.6ZM1086.5,266.3L1092.6,266.3M1082.1,270.6L1082.1,276.7M1092.6,266.3L1096.9,262L1101.2,266.3L1096.9,270.6ZM1101.2,266.3L1107.3,266.3M1096.9,270.6L1096.9,276.7M1096.9,266.3L1089.5,258.9M1096.9,266.3L1104.3,258.9M1096.9,266.3L1089.5,273.7M1096.9,266.3L1104.3,273.7M1107.3,266.3L1111.7,262L1116,266.3L1111.7,270.6ZM1116,266.3L1122.1,266.3M1111.7,270.6L1111.7,276.7M1111.7,266.3L1104.3,258.9M1111.7,266.3L1119,258.9M1111.7,266.3L1104.3,273.7M1111.7,266.3L1119,273.7M1122.1,266.3L1126.4,262L1130.7,266.3L1126.4,270.6ZM1130.7,266.3L1136.9,266.3M1126.4,270.6L1126.4,276.7M1126.4,266.3L1119,258.9M1126.4,266.3L1133.8,258.9M1126.4,266.3L1119,273.7M1136.9,266.3L1141.2,262L1145.5,266.3L1141.2,270.6ZM1145.5,266.3L1151.6,266.3M1141.2,270.6L1141.2,276.7M1151.6,266.3L1155.9,262L1160.3,266.3L1155.9,270.6ZM1160.3,266.3L1166.4,266.3M1155.9,270.6L1155.9,276.7M1166.4,266.3L1170.7,262L1175,266.3L1170.7,270.6ZM1175,266.3L1181.1,266.3M1170.7,270.6L1170.7,276.7M1181.1,266.3L1185.5,262L1189.8,266.3L1185.5,270.6ZM1189.8,266.3L1195.9,266.3M1185.5,270.6L1185.5,276.7M1195.9,266.3L1200.2,262L1204.5,266.3L1200.2,270.6ZM1204.5,266.3L1210.7,266.3M1200.2,270.6L1200.2,276.7M1210.7,266.3L1215,262L1219.3,266.3L1215,270.6ZM1219.3,266.3L1225.4,266.3M1215,270.6L1215,276.7M1225.4,266.3L1229.7,262L1234.1,266.3L1229.7,270.6ZM1234.1,266.3L1240.2,266.3M1229.7,270.6L1229.7,276.7M1240.2,266.3L1244.5,262L1248.8,266.3L1244.5,270.6ZM1248.8,266.3L1254.9,266.3M1244.5,270.6L1244.5,276.7M1254.9,266.3L1259.3,262L1263.6,266.3L1259.3,270.6ZM1263.6,266.3L1269.7,266.3M1259.3,270.6L1259.3,276.7M1269.7,266.3L1274,262L1278.3,266.3L1274,270.6ZM1278.3,266.3L1284.5,266.3M1274,270.6L1274,276.7M1284.5,266.3L1288.8,262L1293.1,266.3L1288.8,270.6ZM1293.1,266.3L1299.2,266.3M1288.8,270.6L1288.8,276.7M1299.2,266.3L1303.5,262L1307.9,266.3L1303.5,270.6ZM1307.9,266.3L1314,266.3M1303.5,270.6L1303.5,276.7M1314,266.3L1318.3,262L1322.6,266.3L1318.3,270.6ZM1322.6,266.3L1328.7,266.3M1318.3,270.6L1318.3,276.7M1328.7,266.3L1333.1,262L1337.4,266.3L1333.1,270.6ZM1337.4,266.3L1343.5,266.3M1333.1,270.6L1333.1,276.7M1343.5,266.3L1347.8,262L1352.1,266.3L1347.8,270.6ZM1352.1,266.3L1358.3,266.3M1347.8,270.6L1347.8,276.7M1358.3,266.3L1362.6,262L1366.9,266.3L1362.6,270.6ZM1366.9,266.3L1373,266.3M1362.6,270.6L1362.6,276.7M1373,266.3L1377.3,262L1381.7,266.3L1377.3,270.6ZM1381.7,266.3L1387.8,266.3M1377.3,270.6L1377.3,276.7M1387.8,266.3L1392.1,262L1396.4,266.3L1392.1,270.6ZM1396.4,266.3L1402.5,266.3M1392.1,270.6L1392.1,276.7M1402.5,266.3L1406.9,262L1411.2,266.3L1406.9,270.6ZM1411.2,266.3L1417.3,266.3M1406.9,270.6L1406.9,276.7M1417.3,266.3L1421.6,262L1425.9,266.3L1421.6,270.6ZM1425.9,266.3L1432.1,266.3M1421.6,270.6L1421.6,276.7M1432.1,266.3L1436.4,262L1440.7,266.3L1436.4,270.6ZM1440.7,266.3L1446.8,266.3M1436.4,270.6L1436.4,276.7M1446.8,266.3L1451.1,262L1455.5,266.3L1451.1,270.6ZM1455.5,266.3L1461.6,266.3M1451.1,270.6L1451.1,276.7M1461.6,266.3L1465.9,262L1470.2,266.3L1465.9,270.6ZM1470.2,266.3L1476.3,266.3M1465.9,270.6L1465.9,276.7M1476.3,266.3L1480.7,262L1485,266.3L1480.7,270.6ZM1485,266.3L1491.1,266.3M1480.7,270.6L1480.7,276.7M1491.1,266.3L1495.4,262L1499.7,266.3L1495.4,270.6ZM1499.7,266.3L1505.9,266.3M1495.4,270.6L1495.4,276.7M1505.9,266.3L1510.2,262L1514.5,266.3L1510.2,270.6ZM1514.5,266.3L1520.6,266.3M1510.2,270.6L1510.2,276.7M1520.6,266.3L1524.9,262L1529.3,266.3L1524.9,270.6ZM1529.3,266.3L1535.4,266.3M1524.9,270.6L1524.9,276.7M1535.4,266.3L1539.7,262L1544,266.3L1539.7,270.6ZM1544,266.3L1550.1,266.3M1539.7,270.6L1539.7,276.7M1550.1,266.3L1554.5,262L1558.8,266.3L1554.5,270.6ZM1558.8,266.3L1564.9,266.3M1554.5,270.6L1554.5,276.7M1564.9,266.3L1569.2,262L1573.5,266.3L1569.2,270.6ZM1569.2,270.6L1569.2,276.7M1573.5,266.3L1575.4,266.3M856.4,281.1L860.7,276.7L865.1,281.1L860.7,285.4ZM865.1,281.1L871.2,281.1M860.7,281.1L853.4,273.7M860.7,281.1L868.1,273.7M860.7,281.1L853.4,288.4M860.7,281.1L868.1,288.4M871.2,281.1L875.5,276.7L879.8,281.1L875.5,285.4ZM875.5,281.1L868.1,273.7M875.5,281.1L882.9,273.7M875.5,281.1L868.1,288.4M875.5,281.1L882.9,288.4M989.3,281.1L993.6,276.7L997.9,281.1L993.6,285.4ZM997.9,281.1L1004,281.1M993.6,285.4L993.6,291.5M993.6,281.1L986.2,273.7M993.6,281.1L1001,273.7M993.6,281.1L986.2,288.4M993.6,281.1L1001,288.4M1004,281.1L1008.3,276.7L1012.7,281.1L1008.3,285.4ZM1012.7,281.1L1018.8,281.1M1008.3,285.4L1008.3,291.5M1018.8,281.1L1023.1,276.7L1027.4,281.1L1023.1,285.4ZM1027.4,281.1L1033.5,281.1M1023.1,285.4L1023.1,291.5M1033.5,281.1L1037.9,276.7L1042.2,281.1L1037.9,285.4ZM1042.2,281.1L1048.3,281.1M1037.9,285.4L1037.9,291.5M1048.3,281.1L1052.6,276.7L1056.9,281.1L1052.6,285.4ZM1056.9,281.1L1063.1,281.1M1052.6,285.4L1052.6,291.5M1063.1,281.1L1067.4,276.7L1071.7,281.1L1067.4,285.4ZM1071.7,281.1L1077.8,281.1M1067.4,285.4L1067.4,291.5M1067.4,281.1L1074.8,273.7M1067.4,281.1L1060,288.4M1067.4,281.1L1074.8,288.4M1077.8,281.1L1082.1,276.7L1086.5,281.1L1082.1,285.4ZM1086.5,281.1L1092.6,281.1M1082.1,281.1L1074.8,273.7M1082.1,281.1L1089.5,273.7M1082.1,281.1L1074.8,288.4M1082.1,281.1L1089.5,288.4M1092.6,281.1L1096.9,276.7L1101.2,281.1L1096.9,285.4ZM1101.2,281.1L1107.3,281.1M1096.9,281.1L1089.5,273.7M1096.9,281.1L1104.3,273.7M1096.9,281.1L1089.5,288.4M1096.9,281.1L1104.3,288.4M1107.3,281.1L1111.7,276.7L1116,281.1L1111.7,285.4ZM1116,281.1L1122.1,281.1M1111.7,285.4L1111.7,291.5M1111.7,281.1L1104.3,273.7M1111.7,281.1L1119,273.7M1111.7,281.1L1104.3,288.4M1111.7,281.1L1119,288.4M1122.1,281.1L1126.4,276.7L1130.7,281.1L1126.4,285.4ZM1130.7,281.1L1136.9,281.1M1126.4,285.4L1126.4,291.5M1136.9,281.1L1141.2,276.7L1145.5,281.1L1141.2,285.4ZM1145.5,281.1L1151.6,281.1M1141.2,285.4L1141.2,291.5M1151.6,281.1L1155.9,276.7L1160.3,281.1L1155.9,285.4ZM1160.3,281.1L1166.4,281.1M1155.9,285.4L1155.9,291.5M1166.4,281.1L1170.7,276.7L1175,281.1L1170.7,285.4ZM1175,281.1L1181.1,281.1M1170.7,285.4L1170.7,291.5M1181.1,281.1L1185.5,276.7L1189.8,281.1L1185.5,285.4ZM1189.8,281.1L1195.9,281.1M1185.5,285.4L1185.5,291.5M1195.9,281.1L1200.2,276.7L1204.5,281.1L1200.2,285.4ZM1204.5,281.1L1210.7,281.1M1200.2,285.4L1200.2,291.5M1210.7,281.1L1215,276.7L1219.3,281.1L1215,285.4ZM1219.3,281.1L1225.4,281.1M1215,285.4L1215,291.5M1225.4,281.1L1229.7,276.7L1234.1,281.1L1229.7,285.4ZM1234.1,281.1L1240.2,281.1M1229.7,285.4L1229.7,291.5M1240.2,281.1L1244.5,276.7L1248.8,281.1L1244.5,285.4ZM1248.8,281.1L1254.9,281.1M1244.5,285.4L1244.5,291.5M1254.9,281.1L1259.3,276.7L1263.6,281.1L1259.3,285.4ZM1263.6,281.1L1269.7,281.1M1259.3,285.4L1259.3,291.5M1269.7,281.1L1274,276.7L1278.3,281.1L1274,285.4ZM1278.3,281.1L1284.5,281.1M1274,285.4L1274,291.5M1284.5,281.1L1288.8,276.7L1293.1,281.1L1288.8,285.4ZM1293.1,281.1L1299.2,281.1M1288.8,285.4L1288.8,291.5M1299.2,281.1L1303.5,276.7L1307.9,281.1L1303.5,285.4ZM1307.9,281.1L1314,281.1M1303.5,285.4L1303.5,291.5M1314,281.1L1318.3,276.7L1322.6,281.1L1318.3,285.4ZM1322.6,281.1L1328.7,281.1M1318.3,285.4L1318.3,291.5M1328.7,281.1L1333.1,276.7L1337.4,281.1L1333.1,285.4ZM1337.4,281.1L1343.5,281.1M1333.1,285.4L1333.1,291.5M1343.5,281.1L1347.8,276.7L1352.1,281.1L1347.8,285.4ZM1352.1,281.1L1358.3,281.1M1347.8,285.4L1347.8,291.5M1358.3,281.1L1362.6,276.7L1366.9,281.1L1362.6,285.4ZM1366.9,281.1L1373,281.1M1362.6,285.4L1362.6,291.5M1373,281.1L1377.3,276.7L1381.7,281.1L1377.3,285.4ZM1381.7,281.1L1387.8,281.1M1377.3,285.4L1377.3,291.5M1387.8,281.1L1392.1,276.7L1396.4,281.1L1392.1,285.4ZM1396.4,281.1L1402.5,281.1M1392.1,285.4L1392.1,291.5M1402.5,281.1L1406.9,276.7L1411.2,281.1L1406.9,285.4ZM1411.2,281.1L1417.3,281.1M1406.9,285.4L1406.9,291.5M1417.3,281.1L1421.6,276.7L1425.9,281.1L1421.6,285.4ZM1425.9,281.1L1432.1,281.1M1421.6,285.4L1421.6,291.5M1432.1,281.1L1436.4,276.7L1440.7,281.1L1436.4,285.4ZM1440.7,281.1L1446.8,281.1M1436.4,285.4L1436.4,291.5M1446.8,281.1L1451.1,276.7L1455.5,281.1L1451.1,285.4ZM1455.5,281.1L1461.6,281.1M1451.1,285.4L1451.1,291.5M1461.6,281.1L1465.9,276.7L1470.2,281.1L1465.9,285.4ZM1470.2,281.1L1476.3,281.1M1465.9,285.4L1465.9,291.5M1476.3,281.1L1480.7,276.7L1485,281.1L1480.7,285.4ZM1485,281.1L1491.1,281.1M1480.7,285.4L1480.7,291.5M1491.1,281.1L1495.4,276.7L1499.7,281.1L1495.4,285.4ZM1499.7,281.1L1505.9,281.1M1495.4,285.4L1495.4,291.5M1505.9,281.1L1510.2,276.7L1514.5,281.1L1510.2,285.4ZM1514.5,281.1L1520.6,281.1M1510.2,285.4L1510.2,291.5M1520.6,281.1L1524.9,276.7L1529.3,281.1L1524.9,285.4ZM1529.3,281.1L1535.4,281.1M1524.9,285.4L1524.9,291.5M1535.4,281.1L1539.7,276.7L1544,281.1L1539.7,285.4ZM1544,281.1L1550.1,281.1M1539.7,285.4L1539.7,291.5M1550.1,281.1L1554.5,276.7L1558.8,281.1L1554.5,285.4ZM1558.8,281.1L1564.9,281.1M1554.5,285.4L1554.5,291.5M1564.9,281.1L1569.2,276.7L1573.5,281.1L1569.2,285.4ZM1569.2,285.4L1569.2,291.5M1573.5,281.1L1575.4,281.1M989.3,295.8L993.6,291.5L997.9,295.8L993.6,300.1ZM997.9,295.8L1004,295.8M993.6,295.8L986.2,288.4M993.6,295.8L1001,288.4M993.6,295.8L986.2,303.2M993.6,295.8L1001,303.2M1004,295.8L1008.3,291.5L1012.7,295.8L1008.3,300.1ZM1012.7,295.8L1018.8,295.8M1008.3,300.1L1008.3,306.3M1008.3,295.8L1001,288.4M1008.3,295.8L1001,303.2M1008.3,295.8L1015.7,303.2M1018.8,295.8L1023.1,291.5L1027.4,295.8L1023.1,300.1ZM1027.4,295.8L1033.5,295.8M1023.1,300.1L1023.1,306.3M1033.5,295.8L1037.9,291.5L1042.2,295.8L1037.9,300.1ZM1042.2,295.8L1048.3,295.8M1037.9,300.1L1037.9,306.3M1048.3,295.8L1052.6,291.5L1056.9,295.8L1052.6,300.1ZM1056.9,295.8L1063.1,295.8M1052.6,300.1L1052.6,306.3M1052.6,295.8L1060,288.4M1052.6,295.8L1045.2,303.2M1052.6,295.8L1060,303.2M1063.1,295.8L1067.4,291.5L1071.7,295.8L1067.4,300.1ZM1067.4,295.8L1060,288.4M1067.4,295.8L1074.8,288.4M1067.4,295.8L1060,303.2M1067.4,295.8L1074.8,303.2M1107.3,295.8L1111.7,291.5L1116,295.8L1111.7,300.1ZM1116,295.8L1122.1,295.8M1111.7,300.1L1111.7,306.3M1111.7,295.8L1104.3,288.4M1111.7,295.8L1119,288.4M1111.7,295.8L1104.3,303.2M1111.7,295.8L1119,303.2M1122.1,295.8L1126.4,291.5L1130.7,295.8L1126.4,300.1ZM1130.7,295.8L1136.9,295.8M1126.4,300.1L1126.4,306.3M1136.9,295.8L1141.2,291.5L1145.5,295.8L1141.2,300.1ZM1145.5,295.8L1151.6,295.8M1141.2,300.1L1141.2,306.3M1151.6,295.8L1155.9,291.5L1160.3,295.8L1155.9,300.1ZM1160.3,295.8L1166.4,295.8M1155.9,300.1L1155.9,306.3M1166.4,295.8L1170.7,291.5L1175,295.8L1170.7,300.1ZM1175,295.8L1181.1,295.8M1170.7,300.1L1170.7,306.3M1181.1,295.8L1185.5,291.5L1189.8,295.8L1185.5,300.1ZM1189.8,295.8L1195.9,295.8M1185.5,300.1L1185.5,306.3M1195.9,295.8L1200.2,291.5L1204.5,295.8L1200.2,300.1ZM1204.5,295.8L1210.7,295.8M1200.2,300.1L1200.2,306.3M1210.7,295.8L1215,291.5L1219.3,295.8L1215,300.1ZM1219.3,295.8L1225.4,295.8M1215,300.1L1215,306.3M1225.4,295.8L1229.7,291.5L1234.1,295.8L1229.7,300.1ZM1234.1,295.8L1240.2,295.8M1229.7,300.1L1229.7,306.3M1240.2,295.8L1244.5,291.5L1248.8,295.8L1244.5,300.1ZM1248.8,295.8L1254.9,295.8M1244.5,300.1L1244.5,306.3M1254.9,295.8L1259.3,291.5L1263.6,295.8L1259.3,300.1ZM1263.6,295.8L1269.7,295.8M1259.3,300.1L1259.3,306.3M1269.7,295.8L1274,291.5L1278.3,295.8L1274,300.1ZM1278.3,295.8L1284.5,295.8M1274,300.1L1274,306.3M1284.5,295.8L1288.8,291.5L1293.1,295.8L1288.8,300.1ZM1293.1,295.8L1299.2,295.8M1288.8,300.1L1288.8,306.3M1299.2,295.8L1303.5,291.5L1307.9,295.8L1303.5,300.1ZM1307.9,295.8L1314,295.8M1303.5,300.1L1303.5,306.3M1314,295.8L1318.3,291.5L1322.6,295.8L1318.3,300.1ZM1322.6,295.8L1328.7,295.8M1318.3,300.1L1318.3,306.3M1328.7,295.8L1333.1,291.5L1337.4,295.8L1333.1,300.1ZM1337.4,295.8L1343.5,295.8M1333.1,300.1L1333.1,306.3M1343.5,295.8L1347.8,291.5L1352.1,295.8L1347.8,300.1ZM1352.1,295.8L1358.3,295.8M1347.8,300.1L1347.8,306.3M1358.3,295.8L1362.6,291.5L1366.9,295.8L1362.6,300.1ZM1366.9,295.8L1373,295.8M1362.6,300.1L1362.6,306.3M1373,295.8L1377.3,291.5L1381.7,295.8L1377.3,300.1ZM1381.7,295.8L1387.8,295.8M1377.3,300.1L1377.3,306.3M1387.8,295.8L1392.1,291.5L1396.4,295.8L1392.1,300.1ZM1396.4,295.8L1402.5,295.8M1392.1,300.1L1392.1,306.3M1402.5,295.8L1406.9,291.5L1411.2,295.8L1406.9,300.1ZM1411.2,295.8L1417.3,295.8M1406.9,300.1L1406.9,306.3M1417.3,295.8L1421.6,291.5L1425.9,295.8L1421.6,300.1ZM1425.9,295.8L1432.1,295.8M1421.6,300.1L1421.6,306.3M1432.1,295.8L1436.4,291.5L1440.7,295.8L1436.4,300.1ZM1440.7,295.8L1446.8,295.8M1436.4,300.1L1436.4,306.3M1446.8,295.8L1451.1,291.5L1455.5,295.8L1451.1,300.1ZM1455.5,295.8L1461.6,295.8M1451.1,300.1L1451.1,306.3M1461.6,295.8L1465.9,291.5L1470.2,295.8L1465.9,300.1ZM1470.2,295.8L1476.3,295.8M1465.9,300.1L1465.9,306.3M1476.3,295.8L1480.7,291.5L1485,295.8L1480.7,300.1ZM1485,295.8L1491.1,295.8M1480.7,300.1L1480.7,306.3M1491.1,295.8L1495.4,291.5L1499.7,295.8L1495.4,300.1ZM1499.7,295.8L1505.9,295.8M1495.4,300.1L1495.4,306.3M1505.9,295.8L1510.2,291.5L1514.5,295.8L1510.2,300.1ZM1514.5,295.8L1520.6,295.8M1510.2,300.1L1510.2,306.3M1520.6,295.8L1524.9,291.5L1529.3,295.8L1524.9,300.1ZM1529.3,295.8L1535.4,295.8M1524.9,300.1L1524.9,306.3M1535.4,295.8L1539.7,291.5L1544,295.8L1539.7,300.1ZM1544,295.8L1550.1,295.8M1539.7,300.1L1539.7,306.3M1550.1,295.8L1554.5,291.5L1558.8,295.8L1554.5,300.1ZM1558.8,295.8L1564.9,295.8M1554.5,300.1L1554.5,306.3M1564.9,295.8L1569.2,291.5L1573.5,295.8L1569.2,300.1ZM1569.2,300.1L1569.2,306.3M1573.5,295.8L1575.4,295.8M1004,310.6L1008.3,306.3L1012.7,310.6L1008.3,314.9ZM1012.7,310.6L1018.8,310.6M1008.3,314.9L1008.3,321M1008.3,310.6L1001,303.2M1008.3,310.6L1015.7,303.2M1008.3,310.6L1001,318M1008.3,310.6L1015.7,318M1018.8,310.6L1023.1,306.3L1027.4,310.6L1023.1,314.9ZM1027.4,310.6L1033.5,310.6M1023.1,314.9L1023.1,321M1033.5,310.6L1037.9,306.3L1042.2,310.6L1037.9,314.9ZM1042.2,310.6L1048.3,310.6M1037.9,314.9L1037.9,321M1037.9,310.6L1045.2,303.2M1037.9,310.6L1030.5,318M1037.9,310.6L1045.2,318M1048.3,310.6L1052.6,306.3L1056.9,310.6L1052.6,314.9ZM1052.6,310.6L1045.2,303.2M1052.6,310.6L1060,303.2M1052.6,310.6L1045.2,318M1052.6,310.6L1060,318M1107.3,310.6L1111.7,306.3L1116,310.6L1111.7,314.9ZM1116,310.6L1122.1,310.6M1111.7,314.9L1111.7,321M1111.7,310.6L1104.3,303.2M1111.7,310.6L1119,303.2M1111.7,310.6L1104.3,318M1111.7,310.6L1119,318M1122.1,310.6L1126.4,306.3L1130.7,310.6L1126.4,314.9ZM1130.7,310.6L1136.9,310.6M1126.4,314.9L1126.4,321M1136.9,310.6L1141.2,306.3L1145.5,310.6L1141.2,314.9ZM1145.5,310.6L1151.6,310.6M1141.2,314.9L1141.2,321M1151.6,310.6L1155.9,306.3L1160.3,310.6L1155.9,314.9ZM1160.3,310.6L1166.4,310.6M1155.9,314.9L1155.9,321M1166.4,310.6L1170.7,306.3L1175,310.6L1170.7,314.9ZM1175,310.6L1181.1,310.6M1170.7,314.9L1170.7,321M1181.1,310.6L1185.5,306.3L1189.8,310.6L1185.5,314.9ZM1189.8,310.6L1195.9,310.6M1185.5,314.9L1185.5,321M1195.9,310.6L1200.2,306.3L1204.5,310.6L1200.2,314.9ZM1204.5,310.6L1210.7,310.6M1200.2,314.9L1200.2,321M1210.7,310.6L1215,306.3L1219.3,310.6L1215,314.9ZM1219.3,310.6L1225.4,310.6M1215,314.9L1215,321M1225.4,310.6L1229.7,306.3L1234.1,310.6L1229.7,314.9ZM1234.1,310.6L1240.2,310.6M1229.7,314.9L1229.7,321M1240.2,310.6L1244.5,306.3L1248.8,310.6L1244.5,314.9ZM1248.8,310.6L1254.9,310.6M1244.5,314.9L1244.5,321M1254.9,310.6L1259.3,306.3L1263.6,310.6L1259.3,314.9ZM1263.6,310.6L1269.7,310.6M1259.3,314.9L1259.3,321M1269.7,310.6L1274,306.3L1278.3,310.6L1274,314.9ZM1278.3,310.6L1284.5,310.6M1274,314.9L1274,321M1284.5,310.6L1288.8,306.3L1293.1,310.6L1288.8,314.9ZM1293.1,310.6L1299.2,310.6M1288.8,314.9L1288.8,321M1299.2,310.6L1303.5,306.3L1307.9,310.6L1303.5,314.9ZM1307.9,310.6L1314,310.6M1303.5,314.9L1303.5,321M1314,310.6L1318.3,306.3L1322.6,310.6L1318.3,314.9ZM1322.6,310.6L1328.7,310.6M1318.3,314.9L1318.3,321M1328.7,310.6L1333.1,306.3L1337.4,310.6L1333.1,314.9ZM1337.4,310.6L1343.5,310.6M1333.1,314.9L1333.1,321M1343.5,310.6L1347.8,306.3L1352.1,310.6L1347.8,314.9ZM1352.1,310.6L1358.3,310.6M1347.8,314.9L1347.8,321M1358.3,310.6L1362.6,306.3L1366.9,310.6L1362.6,314.9ZM1366.9,310.6L1373,310.6M1362.6,314.9L1362.6,321M1373,310.6L1377.3,306.3L1381.7,310.6L1377.3,314.9ZM1381.7,310.6L1387.8,310.6M1377.3,314.9L1377.3,321M1387.8,310.6L1392.1,306.3L1396.4,310.6L1392.1,314.9ZM1396.4,310.6L1402.5,310.6M1392.1,314.9L1392.1,321M1402.5,310.6L1406.9,306.3L1411.2,310.6L1406.9,314.9ZM1411.2,310.6L1417.3,310.6M1406.9,314.9L1406.9,321M1417.3,310.6L1421.6,306.3L1425.9,310.6L1421.6,314.9ZM1425.9,310.6L1432.1,310.6M1421.6,314.9L1421.6,321M1432.1,310.6L1436.4,306.3L1440.7,310.6L1436.4,314.9ZM1440.7,310.6L1446.8,310.6M1436.4,314.9L1436.4,321M1446.8,310.6L1451.1,306.3L1455.5,310.6L1451.1,314.9ZM1455.5,310.6L1461.6,310.6M1451.1,314.9L1451.1,321M1461.6,310.6L1465.9,306.3L1470.2,310.6L1465.9,314.9ZM1470.2,310.6L1476.3,310.6M1465.9,314.9L1465.9,321M1476.3,310.6L1480.7,306.3L1485,310.6L1480.7,314.9ZM1485,310.6L1491.1,310.6M1480.7,314.9L1480.7,321M1491.1,310.6L1495.4,306.3L1499.7,310.6L1495.4,314.9ZM1499.7,310.6L1505.9,310.6M1495.4,314.9L1495.4,321M1505.9,310.6L1510.2,306.3L1514.5,310.6L1510.2,314.9ZM1514.5,310.6L1520.6,310.6M1510.2,314.9L1510.2,321M1520.6,310.6L1524.9,306.3L1529.3,310.6L1524.9,314.9ZM1529.3,310.6L1535.4,310.6M1524.9,314.9L1524.9,321M1535.4,310.6L1539.7,306.3L1544,310.6L1539.7,314.9ZM1544,310.6L1550.1,310.6M1539.7,314.9L1539.7,321M1550.1,310.6L1554.5,306.3L1558.8,310.6L1554.5,314.9ZM1558.8,310.6L1564.9,310.6M1554.5,314.9L1554.5,321M1564.9,310.6L1569.2,306.3L1573.5,310.6L1569.2,314.9ZM1569.2,314.9L1569.2,321M1573.5,310.6L1575.4,310.6M1004,325.3L1008.3,321L1012.7,325.3L1008.3,329.7ZM1012.7,325.3L1018.8,325.3M1008.3,329.7L1008.3,335.8M1008.3,325.3L1001,318M1008.3,325.3L1015.7,318M1008.3,325.3L1001,332.7M1008.3,325.3L1015.7,332.7M1018.8,325.3L1023.1,321L1027.4,325.3L1023.1,329.7ZM1027.4,325.3L1033.5,325.3M1023.1,329.7L1023.1,335.8M1033.5,325.3L1037.9,321L1042.2,325.3L1037.9,329.7ZM1037.9,329.7L1037.9,335.8M1037.9,325.3L1030.5,318M1037.9,325.3L1045.2,318M1037.9,325.3L1030.5,332.7M1037.9,325.3L1045.2,332.7M1107.3,325.3L1111.7,321L1116,325.3L1111.7,329.7ZM1116,325.3L1122.1,325.3M1111.7,325.3L1104.3,318M1111.7,325.3L1119,318M1111.7,325.3L1104.3,332.7M1111.7,325.3L1119,332.7M1122.1,325.3L1126.4,321L1130.7,325.3L1126.4,329.7ZM1130.7,325.3L1136.9,325.3M1126.4,325.3L1119,318M1126.4,325.3L1133.8,318M1126.4,325.3L1119,332.7M1126.4,325.3L1133.8,332.7M1136.9,325.3L1141.2,321L1145.5,325.3L1141.2,329.7ZM1145.5,325.3L1151.6,325.3M1141.2,329.7L1141.2,335.8M1141.2,325.3L1133.8,318M1141.2,325.3L1133.8,332.7M1141.2,325.3L1148.6,332.7M1151.6,325.3L1155.9,321L1160.3,325.3L1155.9,329.7ZM1160.3,325.3L1166.4,325.3M1155.9,329.7L1155.9,335.8M1166.4,325.3L1170.7,321L1175,325.3L1170.7,329.7ZM1175,325.3L1181.1,325.3M1170.7,329.7L1170.7,335.8M1181.1,325.3L1185.5,321L1189.8,325.3L1185.5,329.7ZM1189.8,325.3L1195.9,325.3M1185.5,329.7L1185.5,335.8M1195.9,325.3L1200.2,321L1204.5,325.3L1200.2,329.7ZM1204.5,325.3L1210.7,325.3M1200.2,329.7L1200.2,335.8M1210.7,325.3L1215,321L1219.3,325.3L1215,329.7ZM1219.3,325.3L1225.4,325.3M1215,329.7L1215,335.8M1225.4,325.3L1229.7,321L1234.1,325.3L1229.7,329.7ZM1234.1,325.3L1240.2,325.3M1229.7,329.7L1229.7,335.8M1240.2,325.3L1244.5,321L1248.8,325.3L1244.5,329.7ZM1248.8,325.3L1254.9,325.3M1244.5,329.7L1244.5,335.8M1254.9,325.3L1259.3,321L1263.6,325.3L1259.3,329.7ZM1263.6,325.3L1269.7,325.3M1259.3,329.7L1259.3,335.8M1269.7,325.3L1274,321L1278.3,325.3L1274,329.7ZM1278.3,325.3L1284.5,325.3M1274,329.7L1274,335.8M1284.5,325.3L1288.8,321L1293.1,325.3L1288.8,329.7ZM1293.1,325.3L1299.2,325.3M1288.8,329.7L1288.8,335.8M1299.2,325.3L1303.5,321L1307.9,325.3L1303.5,329.7ZM1307.9,325.3L1314,325.3M1303.5,329.7L1303.5,335.8M1314,325.3L1318.3,321L1322.6,325.3L1318.3,329.7ZM1322.6,325.3L1328.7,325.3M1318.3,329.7L1318.3,335.8M1328.7,325.3L1333.1,321L1337.4,325.3L1333.1,329.7ZM1337.4,325.3L1343.5,325.3M1333.1,329.7L1333.1,335.8M1343.5,325.3L1347.8,321L1352.1,325.3L1347.8,329.7ZM1352.1,325.3L1358.3,325.3M1347.8,329.7L1347.8,335.8M1358.3,325.3L1362.6,321L1366.9,325.3L1362.6,329.7ZM1366.9,325.3L1373,325.3M1362.6,329.7L1362.6,335.8M1373,325.3L1377.3,321L1381.7,325.3L1377.3,329.7ZM1381.7,325.3L1387.8,325.3M1377.3,329.7L1377.3,335.8M1387.8,325.3L1392.1,321L1396.4,325.3L1392.1,329.7ZM1396.4,325.3L1402.5,325.3M1392.1,329.7L1392.1,335.8M1402.5,325.3L1406.9,321L1411.2,325.3L1406.9,329.7ZM1411.2,325.3L1417.3,325.3M1406.9,329.7L1406.9,335.8M1417.3,325.3L1421.6,321L1425.9,325.3L1421.6,329.7ZM1425.9,325.3L1432.1,325.3M1421.6,329.7L1421.6,335.8M1432.1,325.3L1436.4,321L1440.7,325.3L1436.4,329.7ZM1440.7,325.3L1446.8,325.3M1436.4,329.7L1436.4,335.8M1446.8,325.3L1451.1,321L1455.5,325.3L1451.1,329.7ZM1455.5,325.3L1461.6,325.3M1451.1,329.7L1451.1,335.8M1461.6,325.3L1465.9,321L1470.2,325.3L1465.9,329.7ZM1470.2,325.3L1476.3,325.3M1465.9,329.7L1465.9,335.8M1476.3,325.3L1480.7,321L1485,325.3L1480.7,329.7ZM1485,325.3L1491.1,325.3M1480.7,329.7L1480.7,335.8M1491.1,325.3L1495.4,321L1499.7,325.3L1495.4,329.7ZM1499.7,325.3L1505.9,325.3M1495.4,329.7L1495.4,335.8M1505.9,325.3L1510.2,321L1514.5,325.3L1510.2,329.7ZM1514.5,325.3L1520.6,325.3M1510.2,329.7L1510.2,335.8M1520.6,325.3L1524.9,321L1529.3,325.3L1524.9,329.7ZM1529.3,325.3L1535.4,325.3M1524.9,329.7L1524.9,335.8M1535.4,325.3L1539.7,321L1544,325.3L1539.7,329.7ZM1544,325.3L1550.1,325.3M1539.7,329.7L1539.7,335.8M1550.1,325.3L1554.5,321L1558.8,325.3L1554.5,329.7ZM1558.8,325.3L1564.9,325.3M1554.5,329.7L1554.5,335.8M1564.9,325.3L1569.2,321L1573.5,325.3L1569.2,329.7ZM1569.2,329.7L1569.2,335.8M1573.5,325.3L1575.4,325.3M1004,340.1L1008.3,335.8L1012.7,340.1L1008.3,344.4ZM1012.7,340.1L1018.8,340.1M1008.3,344.4L1008.3,350.5M1008.3,340.1L1001,332.7M1008.3,340.1L1015.7,332.7M1008.3,340.1L1001,347.5M1008.3,340.1L1015.7,347.5M1018.8,340.1L1023.1,335.8L1027.4,340.1L1023.1,344.4ZM1027.4,340.1L1033.5,340.1M1023.1,344.4L1023.1,350.5M1033.5,340.1L1037.9,335.8L1042.2,340.1L1037.9,344.4ZM1042.2,340.1L1048.3,340.1M1037.9,344.4L1037.9,350.5M1037.9,340.1L1030.5,332.7M1037.9,340.1L1045.2,332.7M1037.9,340.1L1045.2,347.5M1048.3,340.1L1052.6,335.8L1056.9,340.1L1052.6,344.4ZM1052.6,344.4L1052.6,350.5M1052.6,340.1L1045.2,332.7M1052.6,340.1L1060,332.7M1052.6,340.1L1045.2,347.5M1052.6,340.1L1060,347.5M1136.9,340.1L1141.2,335.8L1145.5,340.1L1141.2,344.4ZM1145.5,340.1L1151.6,340.1M1141.2,340.1L1133.8,332.7M1141.2,340.1L1148.6,332.7M1141.2,340.1L1133.8,347.5M1141.2,340.1L1148.6,347.5M1151.6,340.1L1155.9,335.8L1160.3,340.1L1155.9,344.4ZM1160.3,340.1L1166.4,340.1M1155.9,344.4L1155.9,350.5M1155.9,340.1L1148.6,332.7M1155.9,340.1L1148.6,347.5M1155.9,340.1L1163.3,347.5M1166.4,340.1L1170.7,335.8L1175,340.1L1170.7,344.4ZM1175,340.1L1181.1,340.1M1170.7,344.4L1170.7,350.5M1181.1,340.1L1185.5,335.8L1189.8,340.1L1185.5,344.4ZM1189.8,340.1L1195.9,340.1M1185.5,344.4L1185.5,350.5M1195.9,340.1L1200.2,335.8L1204.5,340.1L1200.2,344.4ZM1204.5,340.1L1210.7,340.1M1200.2,344.4L1200.2,350.5M1210.7,340.1L1215,335.8L1219.3,340.1L1215,344.4ZM1219.3,340.1L1225.4,340.1M1215,344.4L1215,350.5M1225.4,340.1L1229.7,335.8L1234.1,340.1L1229.7,344.4ZM1234.1,340.1L1240.2,340.1M1229.7,344.4L1229.7,350.5M1240.2,340.1L1244.5,335.8L1248.8,340.1L1244.5,344.4ZM1248.8,340.1L1254.9,340.1M1244.5,344.4L1244.5,350.5M1254.9,340.1L1259.3,335.8L1263.6,340.1L1259.3,344.4ZM1263.6,340.1L1269.7,340.1M1259.3,344.4L1259.3,350.5M1269.7,340.1L1274,335.8L1278.3,340.1L1274,344.4ZM1278.3,340.1L1284.5,340.1M1274,344.4L1274,350.5M1284.5,340.1L1288.8,335.8L1293.1,340.1L1288.8,344.4ZM1293.1,340.1L1299.2,340.1M1288.8,344.4L1288.8,350.5M1299.2,340.1L1303.5,335.8L1307.9,340.1L1303.5,344.4ZM1307.9,340.1L1314,340.1M1303.5,344.4L1303.5,350.5M1314,340.1L1318.3,335.8L1322.6,340.1L1318.3,344.4ZM1322.6,340.1L1328.7,340.1M1318.3,344.4L1318.3,350.5M1328.7,340.1L1333.1,335.8L1337.4,340.1L1333.1,344.4ZM1337.4,340.1L1343.5,340.1M1333.1,344.4L1333.1,350.5M1343.5,340.1L1347.8,335.8L1352.1,340.1L1347.8,344.4ZM1352.1,340.1L1358.3,340.1M1347.8,344.4L1347.8,350.5M1358.3,340.1L1362.6,335.8L1366.9,340.1L1362.6,344.4ZM1366.9,340.1L1373,340.1M1362.6,344.4L1362.6,350.5M1373,340.1L1377.3,335.8L1381.7,340.1L1377.3,344.4ZM1381.7,340.1L1387.8,340.1M1377.3,344.4L1377.3,350.5M1387.8,340.1L1392.1,335.8L1396.4,340.1L1392.1,344.4ZM1396.4,340.1L1402.5,340.1M1392.1,344.4L1392.1,350.5M1402.5,340.1L1406.9,335.8L1411.2,340.1L1406.9,344.4ZM1411.2,340.1L1417.3,340.1M1406.9,344.4L1406.9,350.5M1417.3,340.1L1421.6,335.8L1425.9,340.1L1421.6,344.4ZM1425.9,340.1L1432.1,340.1M1421.6,344.4L1421.6,350.5M1432.1,340.1L1436.4,335.8L1440.7,340.1L1436.4,344.4ZM1440.7,340.1L1446.8,340.1M1436.4,344.4L1436.4,350.5M1446.8,340.1L1451.1,335.8L1455.5,340.1L1451.1,344.4ZM1455.5,340.1L1461.6,340.1M1451.1,344.4L1451.1,350.5M1461.6,340.1L1465.9,335.8L1470.2,340.1L1465.9,344.4ZM1470.2,340.1L1476.3,340.1M1465.9,344.4L1465.9,350.5M1476.3,340.1L1480.7,335.8L1485,340.1L1480.7,344.4ZM1485,340.1L1491.1,340.1M1480.7,344.4L1480.7,350.5M1491.1,340.1L1495.4,335.8L1499.7,340.1L1495.4,344.4ZM1499.7,340.1L1505.9,340.1M1495.4,344.4L1495.4,350.5M1505.9,340.1L1510.2,335.8L1514.5,340.1L1510.2,344.4ZM1514.5,340.1L1520.6,340.1M1510.2,344.4L1510.2,350.5M1520.6,340.1L1524.9,335.8L1529.3,340.1L1524.9,344.4ZM1529.3,340.1L1535.4,340.1M1524.9,344.4L1524.9,350.5M1535.4,340.1L1539.7,335.8L1544,340.1L1539.7,344.4ZM1544,340.1L1550.1,340.1M1539.7,344.4L1539.7,350.5M1550.1,340.1L1554.5,335.8L1558.8,340.1L1554.5,344.4ZM1558.8,340.1L1564.9,340.1M1554.5,344.4L1554.5,350.5M1564.9,340.1L1569.2,335.8L1573.5,340.1L1569.2,344.4ZM1569.2,344.4L1569.2,350.5M1573.5,340.1L1575.4,340.1M989.3,354.9L993.6,350.5L997.9,354.9L993.6,359.2ZM997.9,354.9L1004,354.9M993.6,359.2L993.6,365.3M993.6,354.9L986.2,347.5M993.6,354.9L1001,347.5M993.6,354.9L986.2,362.2M993.6,354.9L1001,362.2M1004,354.9L1008.3,350.5L1012.7,354.9L1008.3,359.2ZM1012.7,354.9L1018.8,354.9M1008.3,359.2L1008.3,365.3M1008.3,354.9L1001,347.5M1008.3,354.9L1015.7,347.5M1008.3,354.9L1001,362.2M1018.8,354.9L1023.1,350.5L1027.4,354.9L1023.1,359.2ZM1027.4,354.9L1033.5,354.9M1023.1,359.2L1023.1,365.3M1033.5,354.9L1037.9,350.5L1042.2,354.9L1037.9,359.2ZM1042.2,354.9L1048.3,354.9M1037.9,359.2L1037.9,365.3M1048.3,354.9L1052.6,350.5L1056.9,354.9L1052.6,359.2ZM1052.6,359.2L1052.6,365.3M1052.6,354.9L1045.2,347.5M1052.6,354.9L1060,347.5M1052.6,354.9L1045.2,362.2M1052.6,354.9L1060,362.2M1151.6,354.9L1155.9,350.5L1160.3,354.9L1155.9,359.2ZM1160.3,354.9L1166.4,354.9M1155.9,359.2L1155.9,365.3M1155.9,354.9L1148.6,347.5M1155.9,354.9L1163.3,347.5M1155.9,354.9L1148.6,362.2M1155.9,354.9L1163.3,362.2M1166.4,354.9L1170.7,350.5L1175,354.9L1170.7,359.2ZM1175,354.9L1181.1,354.9M1170.7,359.2L1170.7,365.3M1181.1,354.9L1185.5,350.5L1189.8,354.9L1185.5,359.2ZM1189.8,354.9L1195.9,354.9M1185.5,359.2L1185.5,365.3M1195.9,354.9L1200.2,350.5L1204.5,354.9L1200.2,359.2ZM1204.5,354.9L1210.7,354.9M1200.2,359.2L1200.2,365.3M1210.7,354.9L1215,350.5L1219.3,354.9L1215,359.2ZM1219.3,354.9L1225.4,354.9M1215,359.2L1215,365.3M1225.4,354.9L1229.7,350.5L1234.1,354.9L1229.7,359.2ZM1234.1,354.9L1240.2,354.9M1229.7,359.2L1229.7,365.3M1240.2,354.9L1244.5,350.5L1248.8,354.9L1244.5,359.2ZM1248.8,354.9L1254.9,354.9M1244.5,359.2L1244.5,365.3M1254.9,354.9L1259.3,350.5L1263.6,354.9L1259.3,359.2ZM1263.6,354.9L1269.7,354.9M1259.3,359.2L1259.3,365.3M1269.7,354.9L1274,350.5L1278.3,354.9L1274,359.2ZM1278.3,354.9L1284.5,354.9M1274,359.2L1274,365.3M1284.5,354.9L1288.8,350.5L1293.1,354.9L1288.8,359.2ZM1293.1,354.9L1299.2,354.9M1288.8,359.2L1288.8,365.3M1299.2,354.9L1303.5,350.5L1307.9,354.9L1303.5,359.2ZM1307.9,354.9L1314,354.9M1303.5,359.2L1303.5,365.3M1314,354.9L1318.3,350.5L1322.6,354.9L1318.3,359.2ZM1322.6,354.9L1328.7,354.9M1318.3,359.2L1318.3,365.3M1328.7,354.9L1333.1,350.5L1337.4,354.9L1333.1,359.2ZM1337.4,354.9L1343.5,354.9M1333.1,359.2L1333.1,365.3M1343.5,354.9L1347.8,350.5L1352.1,354.9L1347.8,359.2ZM1352.1,354.9L1358.3,354.9M1347.8,359.2L1347.8,365.3M1358.3,354.9L1362.6,350.5L1366.9,354.9L1362.6,359.2ZM1366.9,354.9L1373,354.9M1362.6,359.2L1362.6,365.3M1373,354.9L1377.3,350.5L1381.7,354.9L1377.3,359.2ZM1381.7,354.9L1387.8,354.9M1377.3,359.2L1377.3,365.3M1387.8,354.9L1392.1,350.5L1396.4,354.9L1392.1,359.2ZM1396.4,354.9L1402.5,354.9M1392.1,359.2L1392.1,365.3M1402.5,354.9L1406.9,350.5L1411.2,354.9L1406.9,359.2ZM1411.2,354.9L1417.3,354.9M1406.9,359.2L1406.9,365.3M1417.3,354.9L1421.6,350.5L1425.9,354.9L1421.6,359.2ZM1425.9,354.9L1432.1,354.9M1421.6,359.2L1421.6,365.3M1432.1,354.9L1436.4,350.5L1440.7,354.9L1436.4,359.2ZM1440.7,354.9L1446.8,354.9M1436.4,359.2L1436.4,365.3M1446.8,354.9L1451.1,350.5L1455.5,354.9L1451.1,359.2ZM1455.5,354.9L1461.6,354.9M1451.1,359.2L1451.1,365.3M1461.6,354.9L1465.9,350.5L1470.2,354.9L1465.9,359.2ZM1470.2,354.9L1476.3,354.9M1465.9,359.2L1465.9,365.3M1476.3,354.9L1480.7,350.5L1485,354.9L1480.7,359.2ZM1485,354.9L1491.1,354.9M1480.7,359.2L1480.7,365.3M1491.1,354.9L1495.4,350.5L1499.7,354.9L1495.4,359.2ZM1499.7,354.9L1505.9,354.9M1495.4,359.2L1495.4,365.3M1505.9,354.9L1510.2,350.5L1514.5,354.9L1510.2,359.2ZM1514.5,354.9L1520.6,354.9M1510.2,359.2L1510.2,365.3M1520.6,354.9L1524.9,350.5L1529.3,354.9L1524.9,359.2ZM1529.3,354.9L1535.4,354.9M1524.9,359.2L1524.9,365.3M1535.4,354.9L1539.7,350.5L1544,354.9L1539.7,359.2ZM1544,354.9L1550.1,354.9M1539.7,359.2L1539.7,365.3M1550.1,354.9L1554.5,350.5L1558.8,354.9L1554.5,359.2ZM1558.8,354.9L1564.9,354.9M1554.5,359.2L1554.5,365.3M1564.9,354.9L1569.2,350.5L1573.5,354.9L1569.2,359.2ZM1569.2,359.2L1569.2,365.3M1573.5,354.9L1575.4,354.9M974.5,369.6L978.8,365.3L983.1,369.6L978.8,373.9ZM983.1,369.6L989.3,369.6M978.8,373.9L978.8,380.1M978.8,369.6L971.4,362.2M978.8,369.6L986.2,362.2M978.8,369.6L971.4,377M978.8,369.6L986.2,377M989.3,369.6L993.6,365.3L997.9,369.6L993.6,373.9ZM997.9,369.6L1004,369.6M993.6,373.9L993.6,380.1M993.6,369.6L986.2,362.2M993.6,369.6L1001,362.2M993.6,369.6L986.2,377M1004,369.6L1008.3,365.3L1012.7,369.6L1008.3,373.9ZM1012.7,369.6L1018.8,369.6M1008.3,373.9L1008.3,380.1M1018.8,369.6L1023.1,365.3L1027.4,369.6L1023.1,373.9ZM1027.4,369.6L1033.5,369.6M1023.1,373.9L1023.1,380.1M1033.5,369.6L1037.9,365.3L1042.2,369.6L1037.9,373.9ZM1042.2,369.6L1048.3,369.6M1037.9,373.9L1037.9,380.1M1048.3,369.6L1052.6,365.3L1056.9,369.6L1052.6,373.9ZM1056.9,369.6L1063.1,369.6M1052.6,373.9L1052.6,380.1M1052.6,369.6L1045.2,362.2M1052.6,369.6L1060,362.2M1052.6,369.6L1045.2,377M1052.6,369.6L1060,377M1063.1,369.6L1067.4,365.3L1071.7,369.6L1067.4,373.9ZM1067.4,369.6L1060,362.2M1067.4,369.6L1074.8,362.2M1067.4,369.6L1060,377M1067.4,369.6L1074.8,377M1151.6,369.6L1155.9,365.3L1160.3,369.6L1155.9,373.9ZM1160.3,369.6L1166.4,369.6M1155.9,369.6L1148.6,362.2M1155.9,369.6L1163.3,362.2M1155.9,369.6L1148.6,377M1155.9,369.6L1163.3,377M1166.4,369.6L1170.7,365.3L1175,369.6L1170.7,373.9ZM1175,369.6L1181.1,369.6M1170.7,373.9L1170.7,380.1M1170.7,369.6L1163.3,362.2M1170.7,369.6L1163.3,377M1170.7,369.6L1178.1,377M1181.1,369.6L1185.5,365.3L1189.8,369.6L1185.5,373.9ZM1189.8,369.6L1195.9,369.6M1185.5,373.9L1185.5,380.1M1195.9,369.6L1200.2,365.3L1204.5,369.6L1200.2,373.9ZM1204.5,369.6L1210.7,369.6M1200.2,373.9L1200.2,380.1M1210.7,369.6L1215,365.3L1219.3,369.6L1215,373.9ZM1219.3,369.6L1225.4,369.6M1215,373.9L1215,380.1M1225.4,369.6L1229.7,365.3L1234.1,369.6L1229.7,373.9ZM1234.1,369.6L1240.2,369.6M1229.7,373.9L1229.7,380.1M1240.2,369.6L1244.5,365.3L1248.8,369.6L1244.5,373.9ZM1248.8,369.6L1254.9,369.6M1244.5,373.9L1244.5,380.1M1254.9,369.6L1259.3,365.3L1263.6,369.6L1259.3,373.9ZM1263.6,369.6L1269.7,369.6M1259.3,373.9L1259.3,380.1M1269.7,369.6L1274,365.3L1278.3,369.6L1274,373.9ZM1278.3,369.6L1284.5,369.6M1274,373.9L1274,380.1M1284.5,369.6L1288.8,365.3L1293.1,369.6L1288.8,373.9ZM1293.1,369.6L1299.2,369.6M1288.8,373.9L1288.8,380.1M1299.2,369.6L1303.5,365.3L1307.9,369.6L1303.5,373.9ZM1307.9,369.6L1314,369.6M1303.5,373.9L1303.5,380.1M1314,369.6L1318.3,365.3L1322.6,369.6L1318.3,373.9ZM1322.6,369.6L1328.7,369.6M1318.3,373.9L1318.3,380.1M1328.7,369.6L1333.1,365.3L1337.4,369.6L1333.1,373.9ZM1337.4,369.6L1343.5,369.6M1333.1,373.9L1333.1,380.1M1343.5,369.6L1347.8,365.3L1352.1,369.6L1347.8,373.9ZM1352.1,369.6L1358.3,369.6M1347.8,373.9L1347.8,380.1M1358.3,369.6L1362.6,365.3L1366.9,369.6L1362.6,373.9ZM1366.9,369.6L1373,369.6M1362.6,373.9L1362.6,380.1M1373,369.6L1377.3,365.3L1381.7,369.6L1377.3,373.9ZM1381.7,369.6L1387.8,369.6M1377.3,373.9L1377.3,380.1M1387.8,369.6L1392.1,365.3L1396.4,369.6L1392.1,373.9ZM1396.4,369.6L1402.5,369.6M1392.1,373.9L1392.1,380.1M1402.5,369.6L1406.9,365.3L1411.2,369.6L1406.9,373.9ZM1411.2,369.6L1417.3,369.6M1406.9,373.9L1406.9,380.1M1417.3,369.6L1421.6,365.3L1425.9,369.6L1421.6,373.9ZM1425.9,369.6L1432.1,369.6M1421.6,373.9L1421.6,380.1M1432.1,369.6L1436.4,365.3L1440.7,369.6L1436.4,373.9ZM1440.7,369.6L1446.8,369.6M1436.4,373.9L1436.4,380.1M1446.8,369.6L1451.1,365.3L1455.5,369.6L1451.1,373.9ZM1455.5,369.6L1461.6,369.6M1451.1,373.9L1451.1,380.1M1461.6,369.6L1465.9,365.3L1470.2,369.6L1465.9,373.9ZM1470.2,369.6L1476.3,369.6M1465.9,373.9L1465.9,380.1M1476.3,369.6L1480.7,365.3L1485,369.6L1480.7,373.9ZM1485,369.6L1491.1,369.6M1480.7,373.9L1480.7,380.1M1491.1,369.6L1495.4,365.3L1499.7,369.6L1495.4,373.9ZM1499.7,369.6L1505.9,369.6M1495.4,373.9L1495.4,380.1M1505.9,369.6L1510.2,365.3L1514.5,369.6L1510.2,373.9ZM1514.5,369.6L1520.6,369.6M1510.2,373.9L1510.2,380.1M1520.6,369.6L1524.9,365.3L1529.3,369.6L1524.9,373.9ZM1529.3,369.6L1535.4,369.6M1524.9,373.9L1524.9,380.1M1535.4,369.6L1539.7,365.3L1544,369.6L1539.7,373.9ZM1544,369.6L1550.1,369.6M1539.7,373.9L1539.7,380.1M1550.1,369.6L1554.5,365.3L1558.8,369.6L1554.5,373.9ZM1558.8,369.6L1564.9,369.6M1554.5,373.9L1554.5,380.1M1564.9,369.6L1569.2,365.3L1573.5,369.6L1569.2,373.9ZM1569.2,373.9L1569.2,380.1M1573.5,369.6L1575.4,369.6M974.5,384.4L978.8,380.1L983.1,384.4L978.8,388.7ZM983.1,384.4L989.3,384.4M978.8,388.7L978.8,394.8M978.8,384.4L971.4,377M978.8,384.4L986.2,377M978.8,384.4L971.4,391.8M978.8,384.4L986.2,391.8M989.3,384.4L993.6,380.1L997.9,384.4L993.6,388.7ZM997.9,384.4L1004,384.4M993.6,388.7L993.6,394.8M1004,384.4L1008.3,380.1L1012.7,384.4L1008.3,388.7ZM1012.7,384.4L1018.8,384.4M1008.3,388.7L1008.3,394.8M1018.8,384.4L1023.1,380.1L1027.4,384.4L1023.1,388.7ZM1027.4,384.4L1033.5,384.4M1023.1,388.7L1023.1,394.8M1033.5,384.4L1037.9,380.1L1042.2,384.4L1037.9,388.7ZM1042.2,384.4L1048.3,384.4M1037.9,388.7L1037.9,394.8M1037.9,384.4L1045.2,377M1037.9,384.4L1030.5,391.8M1037.9,384.4L1045.2,391.8M1048.3,384.4L1052.6,380.1L1056.9,384.4L1052.6,388.7ZM1052.6,384.4L1045.2,377M1052.6,384.4L1060,377M1052.6,384.4L1045.2,391.8M1052.6,384.4L1060,391.8M1166.4,384.4L1170.7,380.1L1175,384.4L1170.7,388.7ZM1175,384.4L1181.1,384.4M1170.7,388.7L1170.7,394.8M1170.7,384.4L1163.3,377M1170.7,384.4L1178.1,377M1170.7,384.4L1163.3,391.8M1170.7,384.4L1178.1,391.8M1181.1,384.4L1185.5,380.1L1189.8,384.4L1185.5,388.7ZM1189.8,384.4L1195.9,384.4M1185.5,384.4L1178.1,377M1185.5,384.4L1192.8,377M1185.5,384.4L1178.1,391.8M1185.5,384.4L1192.8,391.8M1195.9,384.4L1200.2,380.1L1204.5,384.4L1200.2,388.7ZM1204.5,384.4L1210.7,384.4M1200.2,388.7L1200.2,394.8M1200.2,384.4L1192.8,377M1200.2,384.4L1192.8,391.8M1200.2,384.4L1207.6,391.8M1210.7,384.4L1215,380.1L1219.3,384.4L1215,388.7ZM1219.3,384.4L1225.4,384.4M1215,388.7L1215,394.8M1225.4,384.4L1229.7,380.1L1234.1,384.4L1229.7,388.7ZM1234.1,384.4L1240.2,384.4M1229.7,388.7L1229.7,394.8M1240.2,384.4L1244.5,380.1L1248.8,384.4L1244.5,388.7ZM1248.8,384.4L1254.9,384.4M1244.5,388.7L1244.5,394.8M1254.9,384.4L1259.3,380.1L1263.6,384.4L1259.3,388.7ZM1263.6,384.4L1269.7,384.4M1259.3,388.7L1259.3,394.8M1269.7,384.4L1274,380.1L1278.3,384.4L1274,388.7ZM1278.3,384.4L1284.5,384.4M1274,388.7L1274,394.8M1284.5,384.4L1288.8,380.1L1293.1,384.4L1288.8,388.7ZM1293.1,384.4L1299.2,384.4M1288.8,388.7L1288.8,394.8M1299.2,384.4L1303.5,380.1L1307.9,384.4L1303.5,388.7ZM1307.9,384.4L1314,384.4M1303.5,388.7L1303.5,394.8M1314,384.4L1318.3,380.1L1322.6,384.4L1318.3,388.7ZM1322.6,384.4L1328.7,384.4M1318.3,388.7L1318.3,394.8M1328.7,384.4L1333.1,380.1L1337.4,384.4L1333.1,388.7ZM1337.4,384.4L1343.5,384.4M1333.1,388.7L1333.1,394.8M1343.5,384.4L1347.8,380.1L1352.1,384.4L1347.8,388.7ZM1352.1,384.4L1358.3,384.4M1347.8,388.7L1347.8,394.8M1358.3,384.4L1362.6,380.1L1366.9,384.4L1362.6,388.7ZM1366.9,384.4L1373,384.4M1362.6,388.7L1362.6,394.8M1373,384.4L1377.3,380.1L1381.7,384.4L1377.3,388.7ZM1381.7,384.4L1387.8,384.4M1377.3,388.7L1377.3,394.8M1387.8,384.4L1392.1,380.1L1396.4,384.4L1392.1,388.7ZM1396.4,384.4L1402.5,384.4M1392.1,388.7L1392.1,394.8M1402.5,384.4L1406.9,380.1L1411.2,384.4L1406.9,388.7ZM1411.2,384.4L1417.3,384.4M1406.9,388.7L1406.9,394.8M1417.3,384.4L1421.6,380.1L1425.9,384.4L1421.6,388.7ZM1425.9,384.4L1432.1,384.4M1421.6,388.7L1421.6,394.8M1432.1,384.4L1436.4,380.1L1440.7,384.4L1436.4,388.7ZM1440.7,384.4L1446.8,384.4M1436.4,388.7L1436.4,394.8M1446.8,384.4L1451.1,380.1L1455.5,384.4L1451.1,388.7ZM1455.5,384.4L1461.6,384.4M1451.1,388.7L1451.1,394.8M1461.6,384.4L1465.9,380.1L1470.2,384.4L1465.9,388.7ZM1470.2,384.4L1476.3,384.4M1465.9,388.7L1465.9,394.8M1476.3,384.4L1480.7,380.1L1485,384.4L1480.7,388.7ZM1485,384.4L1491.1,384.4M1480.7,388.7L1480.7,394.8M1491.1,384.4L1495.4,380.1L1499.7,384.4L1495.4,388.7ZM1499.7,384.4L1505.9,384.4M1495.4,388.7L1495.4,394.8M1505.9,384.4L1510.2,380.1L1514.5,384.4L1510.2,388.7ZM1514.5,384.4L1520.6,384.4M1510.2,388.7L1510.2,394.8M1520.6,384.4L1524.9,380.1L1529.3,384.4L1524.9,388.7ZM1529.3,384.4L1535.4,384.4M1524.9,388.7L1524.9,394.8M1535.4,384.4L1539.7,380.1L1544,384.4L1539.7,388.7ZM1544,384.4L1550.1,384.4M1539.7,388.7L1539.7,394.8M1550.1,384.4L1554.5,380.1L1558.8,384.4L1554.5,388.7ZM1558.8,384.4L1564.9,384.4M1554.5,388.7L1554.5,394.8M1564.9,384.4L1569.2,380.1L1573.5,384.4L1569.2,388.7ZM1569.2,388.7L1569.2,394.8M1573.5,384.4L1575.4,384.4M930.2,399.1L934.5,394.8L938.9,399.1L934.5,403.5ZM938.9,399.1L945,399.1M934.5,399.1L927.2,391.8M934.5,399.1L941.9,391.8M934.5,399.1L927.2,406.5M934.5,399.1L941.9,406.5M945,399.1L949.3,394.8L953.6,399.1L949.3,403.5ZM953.6,399.1L959.7,399.1M949.3,403.5L949.3,409.6M949.3,399.1L941.9,391.8M949.3,399.1L956.7,391.8M949.3,399.1L941.9,406.5M949.3,399.1L956.7,406.5M959.7,399.1L964.1,394.8L968.4,399.1L964.1,403.5ZM968.4,399.1L974.5,399.1M964.1,403.5L964.1,409.6M964.1,399.1L956.7,391.8M964.1,399.1L971.4,391.8M964.1,399.1L956.7,406.5M964.1,399.1L971.4,406.5M974.5,399.1L978.8,394.8L983.1,399.1L978.8,403.5ZM983.1,399.1L989.3,399.1M978.8,403.5L978.8,409.6M978.8,399.1L971.4,391.8M978.8,399.1L986.2,391.8M978.8,399.1L971.4,406.5M978.8,399.1L986.2,406.5M989.3,399.1L993.6,394.8L997.9,399.1L993.6,403.5ZM997.9,399.1L1004,399.1M993.6,403.5L993.6,409.6M1004,399.1L1008.3,394.8L1012.7,399.1L1008.3,403.5ZM1012.7,399.1L1018.8,399.1M1008.3,403.5L1008.3,409.6M1018.8,399.1L1023.1,394.8L1027.4,399.1L1023.1,403.5ZM1027.4,399.1L1033.5,399.1M1023.1,403.5L1023.1,409.6M1033.5,399.1L1037.9,394.8L1042.2,399.1L1037.9,403.5ZM1037.9,403.5L1037.9,409.6M1037.9,399.1L1030.5,391.8M1037.9,399.1L1045.2,391.8M1037.9,399.1L1030.5,406.5M1037.9,399.1L1045.2,406.5M1166.4,399.1L1170.7,394.8L1175,399.1L1170.7,403.5ZM1170.7,399.1L1163.3,391.8M1170.7,399.1L1178.1,391.8M1170.7,399.1L1163.3,406.5M1170.7,399.1L1178.1,406.5M1195.9,399.1L1200.2,394.8L1204.5,399.1L1200.2,403.5ZM1204.5,399.1L1210.7,399.1M1200.2,403.5L1200.2,409.6M1200.2,399.1L1192.8,391.8M1200.2,399.1L1207.6,391.8M1200.2,399.1L1192.8,406.5M1200.2,399.1L1207.6,406.5M1210.7,399.1L1215,394.8L1219.3,399.1L1215,403.5ZM1219.3,399.1L1225.4,399.1M1215,403.5L1215,409.6M1225.4,399.1L1229.7,394.8L1234.1,399.1L1229.7,403.5ZM1234.1,399.1L1240.2,399.1M1229.7,403.5L1229.7,409.6M1240.2,399.1L1244.5,394.8L1248.8,399.1L1244.5,403.5ZM1248.8,399.1L1254.9,399.1M1244.5,403.5L1244.5,409.6M1254.9,399.1L1259.3,394.8L1263.6,399.1L1259.3,403.5ZM1263.6,399.1L1269.7,399.1M1259.3,403.5L1259.3,409.6M1269.7,399.1L1274,394.8L1278.3,399.1L1274,403.5ZM1278.3,399.1L1284.5,399.1M1274,403.5L1274,409.6M1284.5,399.1L1288.8,394.8L1293.1,399.1L1288.8,403.5ZM1293.1,399.1L1299.2,399.1M1288.8,403.5L1288.8,409.6M1299.2,399.1L1303.5,394.8L1307.9,399.1L1303.5,403.5ZM1307.9,399.1L1314,399.1M1303.5,403.5L1303.5,409.6M1314,399.1L1318.3,394.8L1322.6,399.1L1318.3,403.5ZM1322.6,399.1L1328.7,399.1M1318.3,403.5L1318.3,409.6M1328.7,399.1L1333.1,394.8L1337.4,399.1L1333.1,403.5ZM1337.4,399.1L1343.5,399.1M1333.1,403.5L1333.1,409.6M1343.5,399.1L1347.8,394.8L1352.1,399.1L1347.8,403.5ZM1352.1,399.1L1358.3,399.1M1347.8,403.5L1347.8,409.6M1358.3,399.1L1362.6,394.8L1366.9,399.1L1362.6,403.5ZM1366.9,399.1L1373,399.1M1362.6,403.5L1362.6,409.6M1373,399.1L1377.3,394.8L1381.7,399.1L1377.3,403.5ZM1381.7,399.1L1387.8,399.1M1377.3,403.5L1377.3,409.6M1387.8,399.1L1392.1,394.8L1396.4,399.1L1392.1,403.5ZM1396.4,399.1L1402.5,399.1M1392.1,403.5L1392.1,409.6M1402.5,399.1L1406.9,394.8L1411.2,399.1L1406.9,403.5ZM1411.2,399.1L1417.3,399.1M1406.9,403.5L1406.9,409.6M1417.3,399.1L1421.6,394.8L1425.9,399.1L1421.6,403.5ZM1425.9,399.1L1432.1,399.1M1421.6,403.5L1421.6,409.6M1432.1,399.1L1436.4,394.8L1440.7,399.1L1436.4,403.5ZM1440.7,399.1L1446.8,399.1M1436.4,403.5L1436.4,409.6M1446.8,399.1L1451.1,394.8L1455.5,399.1L1451.1,403.5ZM1455.5,399.1L1461.6,399.1M1451.1,403.5L1451.1,409.6M1461.6,399.1L1465.9,394.8L1470.2,399.1L1465.9,403.5ZM1470.2,399.1L1476.3,399.1M1465.9,403.5L1465.9,409.6M1476.3,399.1L1480.7,394.8L1485,399.1L1480.7,403.5ZM1485,399.1L1491.1,399.1M1480.7,403.5L1480.7,409.6M1491.1,399.1L1495.4,394.8L1499.7,399.1L1495.4,403.5ZM1499.7,399.1L1505.9,399.1M1495.4,403.5L1495.4,409.6M1505.9,399.1L1510.2,394.8L1514.5,399.1L1510.2,403.5ZM1514.5,399.1L1520.6,399.1M1510.2,403.5L1510.2,409.6M1520.6,399.1L1524.9,394.8L1529.3,399.1L1524.9,403.5ZM1529.3,399.1L1535.4,399.1M1524.9,403.5L1524.9,409.6M1535.4,399.1L1539.7,394.8L1544,399.1L1539.7,403.5ZM1544,399.1L1550.1,399.1M1539.7,403.5L1539.7,409.6M1550.1,399.1L1554.5,394.8L1558.8,399.1L1554.5,403.5ZM1558.8,399.1L1564.9,399.1M1554.5,403.5L1554.5,409.6M1564.9,399.1L1569.2,394.8L1573.5,399.1L1569.2,403.5ZM1569.2,403.5L1569.2,409.6M1573.5,399.1L1575.4,399.1M945,413.9L949.3,409.6L953.6,413.9L949.3,418.2ZM953.6,413.9L959.7,413.9M949.3,413.9L941.9,406.5M949.3,413.9L956.7,406.5M949.3,413.9L941.9,421.3M949.3,413.9L956.7,421.3M959.7,413.9L964.1,409.6L968.4,413.9L964.1,418.2ZM968.4,413.9L974.5,413.9M964.1,413.9L956.7,406.5M964.1,413.9L971.4,406.5M964.1,413.9L956.7,421.3M964.1,413.9L971.4,421.3M974.5,413.9L978.8,409.6L983.1,413.9L978.8,418.2ZM983.1,413.9L989.3,413.9M978.8,418.2L978.8,424.3M978.8,413.9L971.4,406.5M978.8,413.9L986.2,406.5M978.8,413.9L971.4,421.3M978.8,413.9L986.2,421.3M989.3,413.9L993.6,409.6L997.9,413.9L993.6,418.2ZM997.9,413.9L1004,413.9M993.6,418.2L993.6,424.3M1004,413.9L1008.3,409.6L1012.7,413.9L1008.3,418.2ZM1012.7,413.9L1018.8,413.9M1008.3,418.2L1008.3,424.3M1018.8,413.9L1023.1,409.6L1027.4,413.9L1023.1,418.2ZM1027.4,413.9L1033.5,413.9M1023.1,418.2L1023.1,424.3M1033.5,413.9L1037.9,409.6L1042.2,413.9L1037.9,418.2ZM1042.2,413.9L1048.3,413.9M1037.9,418.2L1037.9,424.3M1037.9,413.9L1030.5,406.5M1037.9,413.9L1045.2,406.5M1037.9,413.9L1045.2,421.3M1048.3,413.9L1052.6,409.6L1056.9,413.9L1052.6,418.2ZM1052.6,418.2L1052.6,424.3M1052.6,413.9L1045.2,406.5M1052.6,413.9L1060,406.5M1052.6,413.9L1045.2,421.3M1052.6,413.9L1060,421.3M1092.6,413.9L1096.9,409.6L1101.2,413.9L1096.9,418.2ZM1101.2,413.9L1107.3,413.9M1096.9,413.9L1089.5,406.5M1096.9,413.9L1104.3,406.5M1096.9,413.9L1089.5,421.3M1096.9,413.9L1104.3,421.3M1107.3,413.9L1111.7,409.6L1116,413.9L1111.7,418.2ZM1116,413.9L1122.1,413.9M1111.7,413.9L1104.3,406.5M1111.7,413.9L1119,406.5M1111.7,413.9L1104.3,421.3M1111.7,413.9L1119,421.3M1122.1,413.9L1126.4,409.6L1130.7,413.9L1126.4,418.2ZM1130.7,413.9L1136.9,413.9M1126.4,418.2L1126.4,424.3M1126.4,413.9L1119,406.5M1126.4,413.9L1133.8,406.5M1126.4,413.9L1119,421.3M1126.4,413.9L1133.8,421.3M1136.9,413.9L1141.2,409.6L1145.5,413.9L1141.2,418.2ZM1145.5,413.9L1151.6,413.9M1141.2,418.2L1141.2,424.3M1141.2,413.9L1133.8,406.5M1141.2,413.9L1148.6,406.5M1141.2,413.9L1133.8,421.3M1141.2,413.9L1148.6,421.3M1151.6,413.9L1155.9,409.6L1160.3,413.9L1155.9,418.2ZM1155.9,418.2L1155.9,424.3M1155.9,413.9L1148.6,406.5M1155.9,413.9L1163.3,406.5M1155.9,413.9L1148.6,421.3M1155.9,413.9L1163.3,421.3M1195.9,413.9L1200.2,409.6L1204.5,413.9L1200.2,418.2ZM1204.5,413.9L1210.7,413.9M1200.2,418.2L1200.2,424.3M1200.2,413.9L1192.8,406.5M1200.2,413.9L1207.6,406.5M1200.2,413.9L1192.8,421.3M1200.2,413.9L1207.6,421.3M1210.7,413.9L1215,409.6L1219.3,413.9L1215,418.2ZM1219.3,413.9L1225.4,413.9M1215,418.2L1215,424.3M1225.4,413.9L1229.7,409.6L1234.1,413.9L1229.7,418.2ZM1234.1,413.9L1240.2,413.9M1229.7,418.2L1229.7,424.3M1240.2,413.9L1244.5,409.6L1248.8,413.9L1244.5,418.2ZM1248.8,413.9L1254.9,413.9M1244.5,418.2L1244.5,424.3M1254.9,413.9L1259.3,409.6L1263.6,413.9L1259.3,418.2ZM1263.6,413.9L1269.7,413.9M1259.3,418.2L1259.3,424.3M1269.7,413.9L1274,409.6L1278.3,413.9L1274,418.2ZM1278.3,413.9L1284.5,413.9M1274,418.2L1274,424.3M1284.5,413.9L1288.8,409.6L1293.1,413.9L1288.8,418.2ZM1293.1,413.9L1299.2,413.9M1288.8,418.2L1288.8,424.3M1299.2,413.9L1303.5,409.6L1307.9,413.9L1303.5,418.2ZM1307.9,413.9L1314,413.9M1303.5,418.2L1303.5,424.3M1314,413.9L1318.3,409.6L1322.6,413.9L1318.3,418.2ZM1322.6,413.9L1328.7,413.9M1318.3,418.2L1318.3,424.3M1328.7,413.9L1333.1,409.6L1337.4,413.9L1333.1,418.2ZM1337.4,413.9L1343.5,413.9M1333.1,418.2L1333.1,424.3M1343.5,413.9L1347.8,409.6L1352.1,413.9L1347.8,418.2ZM1352.1,413.9L1358.3,413.9M1347.8,418.2L1347.8,424.3M1358.3,413.9L1362.6,409.6L1366.9,413.9L1362.6,418.2ZM1366.9,413.9L1373,413.9M1362.6,418.2L1362.6,424.3M1373,413.9L1377.3,409.6L1381.7,413.9L1377.3,418.2ZM1381.7,413.9L1387.8,413.9M1377.3,418.2L1377.3,424.3M1387.8,413.9L1392.1,409.6L1396.4,413.9L1392.1,418.2ZM1396.4,413.9L1402.5,413.9M1392.1,418.2L1392.1,424.3M1402.5,413.9L1406.9,409.6L1411.2,413.9L1406.9,418.2ZM1411.2,413.9L1417.3,413.9M1406.9,418.2L1406.9,424.3M1417.3,413.9L1421.6,409.6L1425.9,413.9L1421.6,418.2ZM1425.9,413.9L1432.1,413.9M1421.6,418.2L1421.6,424.3M1432.1,413.9L1436.4,409.6L1440.7,413.9L1436.4,418.2ZM1440.7,413.9L1446.8,413.9M1436.4,418.2L1436.4,424.3M1446.8,413.9L1451.1,409.6L1455.5,413.9L1451.1,418.2ZM1455.5,413.9L1461.6,413.9M1451.1,418.2L1451.1,424.3M1461.6,413.9L1465.9,409.6L1470.2,413.9L1465.9,418.2ZM1470.2,413.9L1476.3,413.9M1465.9,418.2L1465.9,424.3M1476.3,413.9L1480.7,409.6L1485,413.9L1480.7,418.2ZM1485,413.9L1491.1,413.9M1480.7,418.2L1480.7,424.3M1491.1,413.9L1495.4,409.6L1499.7,413.9L1495.4,418.2ZM1499.7,413.9L1505.9,413.9M1495.4,418.2L1495.4,424.3M1505.9,413.9L1510.2,409.6L1514.5,413.9L1510.2,418.2ZM1514.5,413.9L1520.6,413.9M1510.2,418.2L1510.2,424.3M1520.6,413.9L1524.9,409.6L1529.3,413.9L1524.9,418.2ZM1529.3,413.9L1535.4,413.9M1524.9,418.2L1524.9,424.3M1535.4,413.9L1539.7,409.6L1544,413.9L1539.7,418.2ZM1544,413.9L1550.1,413.9M1539.7,418.2L1539.7,424.3M1550.1,413.9L1554.5,409.6L1558.8,413.9L1554.5,418.2ZM1558.8,413.9L1564.9,413.9M1554.5,418.2L1554.5,424.3M1564.9,413.9L1569.2,409.6L1573.5,413.9L1569.2,418.2ZM1569.2,418.2L1569.2,424.3M1573.5,413.9L1575.4,413.9M974.5,428.7L978.8,424.3L983.1,428.7L978.8,433ZM983.1,428.7L989.3,428.7M978.8,428.7L971.4,421.3M978.8,428.7L986.2,421.3M978.8,428.7L971.4,436M978.8,428.7L986.2,436M989.3,428.7L993.6,424.3L997.9,428.7L993.6,433ZM997.9,428.7L1004,428.7M993.6,433L993.6,439.1M993.6,428.7L986.2,421.3M993.6,428.7L986.2,436M993.6,428.7L1001,436M1004,428.7L1008.3,424.3L1012.7,428.7L1008.3,433ZM1012.7,428.7L1018.8,428.7M1008.3,433L1008.3,439.1M1018.8,428.7L1023.1,424.3L1027.4,428.7L1023.1,433ZM1027.4,428.7L1033.5,428.7M1023.1,433L1023.1,439.1M1033.5,428.7L1037.9,424.3L1042.2,428.7L1037.9,433ZM1042.2,428.7L1048.3,428.7M1037.9,433L1037.9,439.1M1048.3,428.7L1052.6,424.3L1056.9,428.7L1052.6,433ZM1052.6,433L1052.6,439.1M1052.6,428.7L1045.2,421.3M1052.6,428.7L1060,421.3M1052.6,428.7L1045.2,436M1052.6,428.7L1060,436M1122.1,428.7L1126.4,424.3L1130.7,428.7L1126.4,433ZM1130.7,428.7L1136.9,428.7M1126.4,428.7L1119,421.3M1126.4,428.7L1133.8,421.3M1126.4,428.7L1119,436M1126.4,428.7L1133.8,436M1136.9,428.7L1141.2,424.3L1145.5,428.7L1141.2,433ZM1145.5,428.7L1151.6,428.7M1141.2,428.7L1133.8,421.3M1141.2,428.7L1148.6,421.3M1141.2,428.7L1133.8,436M1141.2,428.7L1148.6,436M1151.6,428.7L1155.9,424.3L1160.3,428.7L1155.9,433ZM1160.3,428.7L1166.4,428.7M1155.9,433L1155.9,439.1M1155.9,428.7L1148.6,421.3M1155.9,428.7L1163.3,421.3M1155.9,428.7L1148.6,436M1155.9,428.7L1163.3,436M1166.4,428.7L1170.7,424.3L1175,428.7L1170.7,433ZM1175,428.7L1181.1,428.7M1170.7,433L1170.7,439.1M1170.7,428.7L1163.3,421.3M1170.7,428.7L1178.1,421.3M1170.7,428.7L1163.3,436M1170.7,428.7L1178.1,436M1181.1,428.7L1185.5,424.3L1189.8,428.7L1185.5,433ZM1189.8,428.7L1195.9,428.7M1185.5,433L1185.5,439.1M1185.5,428.7L1178.1,421.3M1185.5,428.7L1192.8,421.3M1185.5,428.7L1178.1,436M1185.5,428.7L1192.8,436M1195.9,428.7L1200.2,424.3L1204.5,428.7L1200.2,433ZM1204.5,428.7L1210.7,428.7M1200.2,433L1200.2,439.1M1200.2,428.7L1192.8,421.3M1200.2,428.7L1207.6,421.3M1200.2,428.7L1192.8,436M1200.2,428.7L1207.6,436M1210.7,428.7L1215,424.3L1219.3,428.7L1215,433ZM1219.3,428.7L1225.4,428.7M1215,433L1215,439.1M1215,428.7L1207.6,421.3M1215,428.7L1222.4,421.3M1215,428.7L1207.6,436M1215,428.7L1222.4,436M1225.4,428.7L1229.7,424.3L1234.1,428.7L1229.7,433ZM1234.1,428.7L1240.2,428.7M1229.7,428.7L1222.4,421.3M1229.7,428.7L1237.1,421.3M1229.7,428.7L1222.4,436M1229.7,428.7L1237.1,436M1240.2,428.7L1244.5,424.3L1248.8,428.7L1244.5,433ZM1248.8,428.7L1254.9,428.7M1244.5,428.7L1237.1,421.3M1244.5,428.7L1251.9,421.3M1244.5,428.7L1237.1,436M1244.5,428.7L1251.9,436M1254.9,428.7L1259.3,424.3L1263.6,428.7L1259.3,433ZM1263.6,428.7L1269.7,428.7M1259.3,433L1259.3,439.1M1259.3,428.7L1251.9,421.3M1259.3,428.7L1251.9,436M1259.3,428.7L1266.6,436M1269.7,428.7L1274,424.3L1278.3,428.7L1274,433ZM1278.3,428.7L1284.5,428.7M1274,433L1274,439.1M1284.5,428.7L1288.8,424.3L1293.1,428.7L1288.8,433ZM1293.1,428.7L1299.2,428.7M1288.8,433L1288.8,439.1M1299.2,428.7L1303.5,424.3L1307.9,428.7L1303.5,433ZM1307.9,428.7L1314,428.7M1303.5,433L1303.5,439.1M1314,428.7L1318.3,424.3L1322.6,428.7L1318.3,433ZM1322.6,428.7L1328.7,428.7M1318.3,433L1318.3,439.1M1328.7,428.7L1333.1,424.3L1337.4,428.7L1333.1,433ZM1337.4,428.7L1343.5,428.7M1333.1,433L1333.1,439.1M1343.5,428.7L1347.8,424.3L1352.1,428.7L1347.8,433ZM1352.1,428.7L1358.3,428.7M1347.8,433L1347.8,439.1M1358.3,428.7L1362.6,424.3L1366.9,428.7L1362.6,433ZM1366.9,428.7L1373,428.7M1362.6,433L1362.6,439.1M1373,428.7L1377.3,424.3L1381.7,428.7L1377.3,433ZM1381.7,428.7L1387.8,428.7M1377.3,433L1377.3,439.1M1387.8,428.7L1392.1,424.3L1396.4,428.7L1392.1,433ZM1396.4,428.7L1402.5,428.7M1392.1,433L1392.1,439.1M1402.5,428.7L1406.9,424.3L1411.2,428.7L1406.9,433ZM1411.2,428.7L1417.3,428.7M1406.9,433L1406.9,439.1M1417.3,428.7L1421.6,424.3L1425.9,428.7L1421.6,433ZM1425.9,428.7L1432.1,428.7M1421.6,433L1421.6,439.1M1432.1,428.7L1436.4,424.3L1440.7,428.7L1436.4,433ZM1440.7,428.7L1446.8,428.7M1436.4,433L1436.4,439.1M1446.8,428.7L1451.1,424.3L1455.5,428.7L1451.1,433ZM1455.5,428.7L1461.6,428.7M1451.1,433L1451.1,439.1M1461.6,428.7L1465.9,424.3L1470.2,428.7L1465.9,433ZM1470.2,428.7L1476.3,428.7M1465.9,433L1465.9,439.1M1476.3,428.7L1480.7,424.3L1485,428.7L1480.7,433ZM1485,428.7L1491.1,428.7M1480.7,433L1480.7,439.1M1491.1,428.7L1495.4,424.3L1499.7,428.7L1495.4,433ZM1499.7,428.7L1505.9,428.7M1495.4,433L1495.4,439.1M1505.9,428.7L1510.2,424.3L1514.5,428.7L1510.2,433ZM1514.5,428.7L1520.6,428.7M1510.2,433L1510.2,439.1M1520.6,428.7L1524.9,424.3L1529.3,428.7L1524.9,433ZM1529.3,428.7L1535.4,428.7M1524.9,433L1524.9,439.1M1535.4,428.7L1539.7,424.3L1544,428.7L1539.7,433ZM1544,428.7L1550.1,428.7M1539.7,433L1539.7,439.1M1550.1,428.7L1554.5,424.3L1558.8,428.7L1554.5,433ZM1558.8,428.7L1564.9,428.7M1554.5,433L1554.5,439.1M1564.9,428.7L1569.2,424.3L1573.5,428.7L1569.2,433ZM1569.2,433L1569.2,439.1M1573.5,428.7L1575.4,428.7M989.3,443.4L993.6,439.1L997.9,443.4L993.6,447.7ZM997.9,443.4L1004,443.4M993.6,443.4L986.2,436M993.6,443.4L1001,436M993.6,443.4L986.2,450.8M993.6,443.4L1001,450.8M1004,443.4L1008.3,439.1L1012.7,443.4L1008.3,447.7ZM1012.7,443.4L1018.8,443.4M1008.3,443.4L1001,436M1008.3,443.4L1015.7,436M1008.3,443.4L1001,450.8M1008.3,443.4L1015.7,450.8M1018.8,443.4L1023.1,439.1L1027.4,443.4L1023.1,447.7ZM1027.4,443.4L1033.5,443.4M1023.1,447.7L1023.1,453.9M1023.1,443.4L1015.7,436M1023.1,443.4L1015.7,450.8M1023.1,443.4L1030.5,450.8M1033.5,443.4L1037.9,439.1L1042.2,443.4L1037.9,447.7ZM1042.2,443.4L1048.3,443.4M1037.9,447.7L1037.9,453.9M1048.3,443.4L1052.6,439.1L1056.9,443.4L1052.6,447.7ZM1052.6,447.7L1052.6,453.9M1052.6,443.4L1045.2,436M1052.6,443.4L1060,436M1052.6,443.4L1045.2,450.8M1052.6,443.4L1060,450.8M1151.6,443.4L1155.9,439.1L1160.3,443.4L1155.9,447.7ZM1160.3,443.4L1166.4,443.4M1155.9,447.7L1155.9,453.9M1155.9,443.4L1148.6,436M1155.9,443.4L1163.3,436M1155.9,443.4L1148.6,450.8M1155.9,443.4L1163.3,450.8M1166.4,443.4L1170.7,439.1L1175,443.4L1170.7,447.7ZM1175,443.4L1181.1,443.4M1170.7,447.7L1170.7,453.9M1181.1,443.4L1185.5,439.1L1189.8,443.4L1185.5,447.7ZM1189.8,443.4L1195.9,443.4M1185.5,447.7L1185.5,453.9M1195.9,443.4L1200.2,439.1L1204.5,443.4L1200.2,447.7ZM1204.5,443.4L1210.7,443.4M1200.2,447.7L1200.2,453.9M1210.7,443.4L1215,439.1L1219.3,443.4L1215,447.7ZM1215,447.7L1215,453.9M1215,443.4L1207.6,436M1215,443.4L1222.4,436M1215,443.4L1207.6,450.8M1215,443.4L1222.4,450.8M1254.9,443.4L1259.3,439.1L1263.6,443.4L1259.3,447.7ZM1263.6,443.4L1269.7,443.4M1259.3,443.4L1251.9,436M1259.3,443.4L1266.6,436M1259.3,443.4L1251.9,450.8M1259.3,443.4L1266.6,450.8M1269.7,443.4L1274,439.1L1278.3,443.4L1274,447.7ZM1278.3,443.4L1284.5,443.4M1274,447.7L1274,453.9M1274,443.4L1266.6,436M1274,443.4L1266.6,450.8M1274,443.4L1281.4,450.8M1284.5,443.4L1288.8,439.1L1293.1,443.4L1288.8,447.7ZM1293.1,443.4L1299.2,443.4M1288.8,447.7L1288.8,453.9M1299.2,443.4L1303.5,439.1L1307.9,443.4L1303.5,447.7ZM1307.9,443.4L1314,443.4M1303.5,447.7L1303.5,453.9M1314,443.4L1318.3,439.1L1322.6,443.4L1318.3,447.7ZM1322.6,443.4L1328.7,443.4M1318.3,447.7L1318.3,453.9M1328.7,443.4L1333.1,439.1L1337.4,443.4L1333.1,447.7ZM1337.4,443.4L1343.5,443.4M1333.1,447.7L1333.1,453.9M1343.5,443.4L1347.8,439.1L1352.1,443.4L1347.8,447.7ZM1352.1,443.4L1358.3,443.4M1347.8,447.7L1347.8,453.9M1358.3,443.4L1362.6,439.1L1366.9,443.4L1362.6,447.7ZM1366.9,443.4L1373,443.4M1362.6,447.7L1362.6,453.9M1373,443.4L1377.3,439.1L1381.7,443.4L1377.3,447.7ZM1381.7,443.4L1387.8,443.4M1377.3,447.7L1377.3,453.9M1387.8,443.4L1392.1,439.1L1396.4,443.4L1392.1,447.7ZM1396.4,443.4L1402.5,443.4M1392.1,447.7L1392.1,453.9M1402.5,443.4L1406.9,439.1L1411.2,443.4L1406.9,447.7ZM1411.2,443.4L1417.3,443.4M1406.9,447.7L1406.9,453.9M1417.3,443.4L1421.6,439.1L1425.9,443.4L1421.6,447.7ZM1425.9,443.4L1432.1,443.4M1421.6,447.7L1421.6,453.9M1432.1,443.4L1436.4,439.1L1440.7,443.4L1436.4,447.7ZM1440.7,443.4L1446.8,443.4M1436.4,447.7L1436.4,453.9M1446.8,443.4L1451.1,439.1L1455.5,443.4L1451.1,447.7ZM1455.5,443.4L1461.6,443.4M1451.1,447.7L1451.1,453.9M1461.6,443.4L1465.9,439.1L1470.2,443.4L1465.9,447.7ZM1470.2,443.4L1476.3,443.4M1465.9,447.7L1465.9,453.9M1476.3,443.4L1480.7,439.1L1485,443.4L1480.7,447.7ZM1485,443.4L1491.1,443.4M1480.7,447.7L1480.7,453.9M1491.1,443.4L1495.4,439.1L1499.7,443.4L1495.4,447.7ZM1499.7,443.4L1505.9,443.4M1495.4,447.7L1495.4,453.9M1505.9,443.4L1510.2,439.1L1514.5,443.4L1510.2,447.7ZM1514.5,443.4L1520.6,443.4M1510.2,447.7L1510.2,453.9M1520.6,443.4L1524.9,439.1L1529.3,443.4L1524.9,447.7ZM1529.3,443.4L1535.4,443.4M1524.9,447.7L1524.9,453.9M1535.4,443.4L1539.7,439.1L1544,443.4L1539.7,447.7ZM1544,443.4L1550.1,443.4M1539.7,447.7L1539.7,453.9M1550.1,443.4L1554.5,439.1L1558.8,443.4L1554.5,447.7ZM1558.8,443.4L1564.9,443.4M1554.5,447.7L1554.5,453.9M1564.9,443.4L1569.2,439.1L1573.5,443.4L1569.2,447.7ZM1569.2,447.7L1569.2,453.9M1573.5,443.4L1575.4,443.4M1018.8,458.2L1023.1,453.9L1027.4,458.2L1023.1,462.5ZM1027.4,458.2L1033.5,458.2M1023.1,458.2L1015.7,450.8M1023.1,458.2L1030.5,450.8M1023.1,458.2L1015.7,465.6M1023.1,458.2L1030.5,465.6M1033.5,458.2L1037.9,453.9L1042.2,458.2L1037.9,462.5ZM1042.2,458.2L1048.3,458.2M1037.9,458.2L1030.5,450.8M1037.9,458.2L1045.2,450.8M1037.9,458.2L1030.5,465.6M1037.9,458.2L1045.2,465.6M1048.3,458.2L1052.6,453.9L1056.9,458.2L1052.6,462.5ZM1052.6,458.2L1045.2,450.8M1052.6,458.2L1060,450.8M1052.6,458.2L1045.2,465.6M1052.6,458.2L1060,465.6M1151.6,458.2L1155.9,453.9L1160.3,458.2L1155.9,462.5ZM1160.3,458.2L1166.4,458.2M1155.9,458.2L1148.6,450.8M1155.9,458.2L1163.3,450.8M1155.9,458.2L1148.6,465.6M1155.9,458.2L1163.3,465.6M1166.4,458.2L1170.7,453.9L1175,458.2L1170.7,462.5ZM1175,458.2L1181.1,458.2M1170.7,462.5L1170.7,468.6M1170.7,458.2L1163.3,450.8M1170.7,458.2L1163.3,465.6M1170.7,458.2L1178.1,465.6M1181.1,458.2L1185.5,453.9L1189.8,458.2L1185.5,462.5ZM1189.8,458.2L1195.9,458.2M1185.5,462.5L1185.5,468.6M1195.9,458.2L1200.2,453.9L1204.5,458.2L1200.2,462.5ZM1204.5,458.2L1210.7,458.2M1200.2,462.5L1200.2,468.6M1210.7,458.2L1215,453.9L1219.3,458.2L1215,462.5ZM1219.3,458.2L1225.4,458.2M1215,462.5L1215,468.6M1215,458.2L1207.6,450.8M1215,458.2L1222.4,450.8M1215,458.2L1222.4,465.6M1225.4,458.2L1229.7,453.9L1234.1,458.2L1229.7,462.5ZM1229.7,462.5L1229.7,468.6M1229.7,458.2L1222.4,450.8M1229.7,458.2L1237.1,450.8M1229.7,458.2L1222.4,465.6M1229.7,458.2L1237.1,465.6M1269.7,458.2L1274,453.9L1278.3,458.2L1274,462.5ZM1278.3,458.2L1284.5,458.2M1274,462.5L1274,468.6M1274,458.2L1266.6,450.8M1274,458.2L1281.4,450.8M1274,458.2L1266.6,465.6M1274,458.2L1281.4,465.6M1284.5,458.2L1288.8,453.9L1293.1,458.2L1288.8,462.5ZM1293.1,458.2L1299.2,458.2M1288.8,462.5L1288.8,468.6M1299.2,458.2L1303.5,453.9L1307.9,458.2L1303.5,462.5ZM1307.9,458.2L1314,458.2M1303.5,462.5L1303.5,468.6M1314,458.2L1318.3,453.9L1322.6,458.2L1318.3,462.5ZM1322.6,458.2L1328.7,458.2M1318.3,462.5L1318.3,468.6M1328.7,458.2L1333.1,453.9L1337.4,458.2L1333.1,462.5ZM1337.4,458.2L1343.5,458.2M1333.1,462.5L1333.1,468.6M1343.5,458.2L1347.8,453.9L1352.1,458.2L1347.8,462.5ZM1352.1,458.2L1358.3,458.2M1347.8,462.5L1347.8,468.6M1358.3,458.2L1362.6,453.9L1366.9,458.2L1362.6,462.5ZM1366.9,458.2L1373,458.2M1362.6,462.5L1362.6,468.6M1373,458.2L1377.3,453.9L1381.7,458.2L1377.3,462.5ZM1381.7,458.2L1387.8,458.2M1377.3,462.5L1377.3,468.6M1387.8,458.2L1392.1,453.9L1396.4,458.2L1392.1,462.5ZM1396.4,458.2L1402.5,458.2M1392.1,462.5L1392.1,468.6M1402.5,458.2L1406.9,453.9L1411.2,458.2L1406.9,462.5ZM1411.2,458.2L1417.3,458.2M1406.9,462.5L1406.9,468.6M1417.3,458.2L1421.6,453.9L1425.9,458.2L1421.6,462.5ZM1425.9,458.2L1432.1,458.2M1421.6,462.5L1421.6,468.6M1432.1,458.2L1436.4,453.9L1440.7,458.2L1436.4,462.5ZM1440.7,458.2L1446.8,458.2M1436.4,462.5L1436.4,468.6M1446.8,458.2L1451.1,453.9L1455.5,458.2L1451.1,462.5ZM1455.5,458.2L1461.6,458.2M1451.1,462.5L1451.1,468.6M1461.6,458.2L1465.9,453.9L1470.2,458.2L1465.9,462.5ZM1470.2,458.2L1476.3,458.2M1465.9,462.5L1465.9,468.6M1476.3,458.2L1480.7,453.9L1485,458.2L1480.7,462.5ZM1485,458.2L1491.1,458.2M1480.7,462.5L1480.7,468.6M1491.1,458.2L1495.4,453.9L1499.7,458.2L1495.4,462.5ZM1499.7,458.2L1505.9,458.2M1495.4,462.5L1495.4,468.6M1505.9,458.2L1510.2,453.9L1514.5,458.2L1510.2,462.5ZM1514.5,458.2L1520.6,458.2M1510.2,462.5L1510.2,468.6M1520.6,458.2L1524.9,453.9L1529.3,458.2L1524.9,462.5ZM1529.3,458.2L1535.4,458.2M1524.9,462.5L1524.9,468.6M1535.4,458.2L1539.7,453.9L1544,458.2L1539.7,462.5ZM1544,458.2L1550.1,458.2M1539.7,462.5L1539.7,468.6M1550.1,458.2L1554.5,453.9L1558.8,458.2L1554.5,462.5ZM1558.8,458.2L1564.9,458.2M1554.5,462.5L1554.5,468.6M1564.9,458.2L1569.2,453.9L1573.5,458.2L1569.2,462.5ZM1569.2,462.5L1569.2,468.6M1573.5,458.2L1575.4,458.2M1166.4,472.9L1170.7,468.6L1175,472.9L1170.7,477.3ZM1175,472.9L1181.1,472.9M1170.7,477.3L1170.7,483.4M1170.7,472.9L1163.3,465.6M1170.7,472.9L1178.1,465.6M1170.7,472.9L1163.3,480.3M1170.7,472.9L1178.1,480.3M1181.1,472.9L1185.5,468.6L1189.8,472.9L1185.5,477.3ZM1189.8,472.9L1195.9,472.9M1185.5,477.3L1185.5,483.4M1195.9,472.9L1200.2,468.6L1204.5,472.9L1200.2,477.3ZM1204.5,472.9L1210.7,472.9M1200.2,477.3L1200.2,483.4M1210.7,472.9L1215,468.6L1219.3,472.9L1215,477.3ZM1219.3,472.9L1225.4,472.9M1215,477.3L1215,483.4M1225.4,472.9L1229.7,468.6L1234.1,472.9L1229.7,477.3ZM1229.7,477.3L1229.7,483.4M1229.7,472.9L1222.4,465.6M1229.7,472.9L1237.1,465.6M1229.7,472.9L1222.4,480.3M1229.7,472.9L1237.1,480.3M1269.7,472.9L1274,468.6L1278.3,472.9L1274,477.3ZM1278.3,472.9L1284.5,472.9M1274,477.3L1274,483.4M1274,472.9L1266.6,465.6M1274,472.9L1281.4,465.6M1274,472.9L1266.6,480.3M1274,472.9L1281.4,480.3M1284.5,472.9L1288.8,468.6L1293.1,472.9L1288.8,477.3ZM1293.1,472.9L1299.2,472.9M1288.8,477.3L1288.8,483.4M1299.2,472.9L1303.5,468.6L1307.9,472.9L1303.5,477.3ZM1307.9,472.9L1314,472.9M1303.5,477.3L1303.5,483.4M1314,472.9L1318.3,468.6L1322.6,472.9L1318.3,477.3ZM1322.6,472.9L1328.7,472.9M1318.3,477.3L1318.3,483.4M1328.7,472.9L1333.1,468.6L1337.4,472.9L1333.1,477.3ZM1337.4,472.9L1343.5,472.9M1333.1,477.3L1333.1,483.4M1343.5,472.9L1347.8,468.6L1352.1,472.9L1347.8,477.3ZM1352.1,472.9L1358.3,472.9M1347.8,477.3L1347.8,483.4M1358.3,472.9L1362.6,468.6L1366.9,472.9L1362.6,477.3ZM1366.9,472.9L1373,472.9M1362.6,477.3L1362.6,483.4M1373,472.9L1377.3,468.6L1381.7,472.9L1377.3,477.3ZM1381.7,472.9L1387.8,472.9M1377.3,477.3L1377.3,483.4M1387.8,472.9L1392.1,468.6L1396.4,472.9L1392.1,477.3ZM1396.4,472.9L1402.5,472.9M1392.1,477.3L1392.1,483.4M1402.5,472.9L1406.9,468.6L1411.2,472.9L1406.9,477.3ZM1411.2,472.9L1417.3,472.9M1406.9,477.3L1406.9,483.4M1417.3,472.9L1421.6,468.6L1425.9,472.9L1421.6,477.3ZM1425.9,472.9L1432.1,472.9M1421.6,477.3L1421.6,483.4M1432.1,472.9L1436.4,468.6L1440.7,472.9L1436.4,477.3ZM1440.7,472.9L1446.8,472.9M1436.4,477.3L1436.4,483.4M1446.8,472.9L1451.1,468.6L1455.5,472.9L1451.1,477.3ZM1455.5,472.9L1461.6,472.9M1451.1,477.3L1451.1,483.4M1461.6,472.9L1465.9,468.6L1470.2,472.9L1465.9,477.3ZM1470.2,472.9L1476.3,472.9M1465.9,477.3L1465.9,483.4M1476.3,472.9L1480.7,468.6L1485,472.9L1480.7,477.3ZM1485,472.9L1491.1,472.9M1480.7,477.3L1480.7,483.4M1491.1,472.9L1495.4,468.6L1499.7,472.9L1495.4,477.3ZM1499.7,472.9L1505.9,472.9M1495.4,477.3L1495.4,483.4M1505.9,472.9L1510.2,468.6L1514.5,472.9L1510.2,477.3ZM1514.5,472.9L1520.6,472.9M1510.2,477.3L1510.2,483.4M1520.6,472.9L1524.9,468.6L1529.3,472.9L1524.9,477.3ZM1529.3,472.9L1535.4,472.9M1524.9,477.3L1524.9,483.4M1535.4,472.9L1539.7,468.6L1544,472.9L1539.7,477.3ZM1544,472.9L1550.1,472.9M1539.7,477.3L1539.7,483.4M1550.1,472.9L1554.5,468.6L1558.8,472.9L1554.5,477.3ZM1558.8,472.9L1564.9,472.9M1554.5,477.3L1554.5,483.4M1564.9,472.9L1569.2,468.6L1573.5,472.9L1569.2,477.3ZM1569.2,477.3L1569.2,483.4M1573.5,472.9L1575.4,472.9M1166.4,487.7L1170.7,483.4L1175,487.7L1170.7,492ZM1175,487.7L1181.1,487.7M1170.7,487.7L1163.3,480.3M1170.7,487.7L1178.1,480.3M1170.7,487.7L1163.3,495.1M1170.7,487.7L1178.1,495.1M1181.1,487.7L1185.5,483.4L1189.8,487.7L1185.5,492ZM1189.8,487.7L1195.9,487.7M1185.5,492L1185.5,498.1M1185.5,487.7L1178.1,480.3M1185.5,487.7L1178.1,495.1M1185.5,487.7L1192.8,495.1M1195.9,487.7L1200.2,483.4L1204.5,487.7L1200.2,492ZM1204.5,487.7L1210.7,487.7M1200.2,492L1200.2,498.1M1210.7,487.7L1215,483.4L1219.3,487.7L1215,492ZM1219.3,487.7L1225.4,487.7M1215,492L1215,498.1M1215,487.7L1222.4,480.3M1215,487.7L1207.6,495.1M1215,487.7L1222.4,495.1M1225.4,487.7L1229.7,483.4L1234.1,487.7L1229.7,492ZM1229.7,487.7L1222.4,480.3M1229.7,487.7L1237.1,480.3M1229.7,487.7L1222.4,495.1M1229.7,487.7L1237.1,495.1M1269.7,487.7L1274,483.4L1278.3,487.7L1274,492ZM1278.3,487.7L1284.5,487.7M1274,492L1274,498.1M1274,487.7L1266.6,480.3M1274,487.7L1281.4,480.3M1274,487.7L1266.6,495.1M1274,487.7L1281.4,495.1M1284.5,487.7L1288.8,483.4L1293.1,487.7L1288.8,492ZM1293.1,487.7L1299.2,487.7M1288.8,492L1288.8,498.1M1299.2,487.7L1303.5,483.4L1307.9,487.7L1303.5,492ZM1307.9,487.7L1314,487.7M1303.5,492L1303.5,498.1M1314,487.7L1318.3,483.4L1322.6,487.7L1318.3,492ZM1322.6,487.7L1328.7,487.7M1318.3,492L1318.3,498.1M1328.7,487.7L1333.1,483.4L1337.4,487.7L1333.1,492ZM1337.4,487.7L1343.5,487.7M1333.1,492L1333.1,498.1M1343.5,487.7L1347.8,483.4L1352.1,487.7L1347.8,492ZM1352.1,487.7L1358.3,487.7M1347.8,492L1347.8,498.1M1358.3,487.7L1362.6,483.4L1366.9,487.7L1362.6,492ZM1366.9,487.7L1373,487.7M1362.6,492L1362.6,498.1M1373,487.7L1377.3,483.4L1381.7,487.7L1377.3,492ZM1381.7,487.7L1387.8,487.7M1377.3,492L1377.3,498.1M1387.8,487.7L1392.1,483.4L1396.4,487.7L1392.1,492ZM1396.4,487.7L1402.5,487.7M1392.1,492L1392.1,498.1M1402.5,487.7L1406.9,483.4L1411.2,487.7L1406.9,492ZM1411.2,487.7L1417.3,487.7M1406.9,492L1406.9,498.1M1417.3,487.7L1421.6,483.4L1425.9,487.7L1421.6,492ZM1425.9,487.7L1432.1,487.7M1421.6,492L1421.6,498.1M1432.1,487.7L1436.4,483.4L1440.7,487.7L1436.4,492ZM1440.7,487.7L1446.8,487.7M1436.4,492L1436.4,498.1M1446.8,487.7L1451.1,483.4L1455.5,487.7L1451.1,492ZM1455.5,487.7L1461.6,487.7M1451.1,492L1451.1,498.1M1461.6,487.7L1465.9,483.4L1470.2,487.7L1465.9,492ZM1470.2,487.7L1476.3,487.7M1465.9,492L1465.9,498.1M1476.3,487.7L1480.7,483.4L1485,487.7L1480.7,492ZM1485,487.7L1491.1,487.7M1480.7,492L1480.7,498.1M1491.1,487.7L1495.4,483.4L1499.7,487.7L1495.4,492ZM1499.7,487.7L1505.9,487.7M1495.4,492L1495.4,498.1M1505.9,487.7L1510.2,483.4L1514.5,487.7L1510.2,492ZM1514.5,487.7L1520.6,487.7M1510.2,492L1510.2,498.1M1520.6,487.7L1524.9,483.4L1529.3,487.7L1524.9,492ZM1529.3,487.7L1535.4,487.7M1524.9,492L1524.9,498.1M1535.4,487.7L1539.7,483.4L1544,487.7L1539.7,492ZM1544,487.7L1550.1,487.7M1539.7,492L1539.7,498.1M1550.1,487.7L1554.5,483.4L1558.8,487.7L1554.5,492ZM1558.8,487.7L1564.9,487.7M1554.5,492L1554.5,498.1M1564.9,487.7L1569.2,483.4L1573.5,487.7L1569.2,492ZM1569.2,492L1569.2,498.1M1573.5,487.7L1575.4,487.7M900.7,502.5L905,498.1L909.3,502.5L905,506.8ZM905,502.5L897.6,495.1M905,502.5L912.4,495.1M905,502.5L897.6,509.8M905,502.5L912.4,509.8M1181.1,502.5L1185.5,498.1L1189.8,502.5L1185.5,506.8ZM1189.8,502.5L1195.9,502.5M1185.5,502.5L1178.1,495.1M1185.5,502.5L1192.8,495.1M1185.5,502.5L1178.1,509.8M1185.5,502.5L1192.8,509.8M1195.9,502.5L1200.2,498.1L1204.5,502.5L1200.2,506.8ZM1204.5,502.5L1210.7,502.5M1200.2,506.8L1200.2,512.9M1200.2,502.5L1192.8,495.1M1200.2,502.5L1207.6,495.1M1200.2,502.5L1192.8,509.8M1200.2,502.5L1207.6,509.8M1210.7,502.5L1215,498.1L1219.3,502.5L1215,506.8ZM1215,506.8L1215,512.9M1215,502.5L1207.6,495.1M1215,502.5L1222.4,495.1M1215,502.5L1207.6,509.8M1215,502.5L1222.4,509.8M1269.7,502.5L1274,498.1L1278.3,502.5L1274,506.8ZM1278.3,502.5L1284.5,502.5M1274,506.8L1274,512.9M1274,502.5L1266.6,495.1M1274,502.5L1281.4,495.1M1274,502.5L1266.6,509.8M1274,502.5L1281.4,509.8M1284.5,502.5L1288.8,498.1L1293.1,502.5L1288.8,506.8ZM1293.1,502.5L1299.2,502.5M1288.8,506.8L1288.8,512.9M1299.2,502.5L1303.5,498.1L1307.9,502.5L1303.5,506.8ZM1307.9,502.5L1314,502.5M1303.5,506.8L1303.5,512.9M1314,502.5L1318.3,498.1L1322.6,502.5L1318.3,506.8ZM1322.6,502.5L1328.7,502.5M1318.3,506.8L1318.3,512.9M1328.7,502.5L1333.1,498.1L1337.4,502.5L1333.1,506.8ZM1337.4,502.5L1343.5,502.5M1333.1,506.8L1333.1,512.9M1343.5,502.5L1347.8,498.1L1352.1,502.5L1347.8,506.8ZM1352.1,502.5L1358.3,502.5M1347.8,506.8L1347.8,512.9M1358.3,502.5L1362.6,498.1L1366.9,502.5L1362.6,506.8ZM1366.9,502.5L1373,502.5M1362.6,506.8L1362.6,512.9M1373,502.5L1377.3,498.1L1381.7,502.5L1377.3,506.8ZM1381.7,502.5L1387.8,502.5M1377.3,506.8L1377.3,512.9M1387.8,502.5L1392.1,498.1L1396.4,502.5L1392.1,506.8ZM1396.4,502.5L1402.5,502.5M1392.1,506.8L1392.1,512.9M1402.5,502.5L1406.9,498.1L1411.2,502.5L1406.9,506.8ZM1411.2,502.5L1417.3,502.5M1406.9,506.8L1406.9,512.9M1417.3,502.5L1421.6,498.1L1425.9,502.5L1421.6,506.8ZM1425.9,502.5L1432.1,502.5M1421.6,506.8L1421.6,512.9M1432.1,502.5L1436.4,498.1L1440.7,502.5L1436.4,506.8ZM1440.7,502.5L1446.8,502.5M1436.4,506.8L1436.4,512.9M1446.8,502.5L1451.1,498.1L1455.5,502.5L1451.1,506.8ZM1455.5,502.5L1461.6,502.5M1451.1,506.8L1451.1,512.9M1461.6,502.5L1465.9,498.1L1470.2,502.5L1465.9,506.8ZM1470.2,502.5L1476.3,502.5M1465.9,506.8L1465.9,512.9M1476.3,502.5L1480.7,498.1L1485,502.5L1480.7,506.8ZM1485,502.5L1491.1,502.5M1480.7,506.8L1480.7,512.9M1491.1,502.5L1495.4,498.1L1499.7,502.5L1495.4,506.8ZM1499.7,502.5L1505.9,502.5M1495.4,506.8L1495.4,512.9M1505.9,502.5L1510.2,498.1L1514.5,502.5L1510.2,506.8ZM1514.5,502.5L1520.6,502.5M1510.2,506.8L1510.2,512.9M1520.6,502.5L1524.9,498.1L1529.3,502.5L1524.9,506.8ZM1529.3,502.5L1535.4,502.5M1524.9,506.8L1524.9,512.9M1535.4,502.5L1539.7,498.1L1544,502.5L1539.7,506.8ZM1544,502.5L1550.1,502.5M1539.7,506.8L1539.7,512.9M1550.1,502.5L1554.5,498.1L1558.8,502.5L1554.5,506.8ZM1558.8,502.5L1564.9,502.5M1554.5,506.8L1554.5,512.9M1564.9,502.5L1569.2,498.1L1573.5,502.5L1569.2,506.8ZM1569.2,506.8L1569.2,512.9M1573.5,502.5L1575.4,502.5M1195.9,517.2L1200.2,512.9L1204.5,517.2L1200.2,521.5ZM1204.5,517.2L1210.7,517.2M1200.2,517.2L1192.8,509.8M1200.2,517.2L1207.6,509.8M1200.2,517.2L1192.8,524.6M1200.2,517.2L1207.6,524.6M1210.7,517.2L1215,512.9L1219.3,517.2L1215,521.5ZM1215,517.2L1207.6,509.8M1215,517.2L1222.4,509.8M1215,517.2L1207.6,524.6M1215,517.2L1222.4,524.6M1269.7,517.2L1274,512.9L1278.3,517.2L1274,521.5ZM1278.3,517.2L1284.5,517.2M1274,521.5L1274,527.7M1274,517.2L1266.6,509.8M1274,517.2L1281.4,509.8M1274,517.2L1266.6,524.6M1274,517.2L1281.4,524.6M1284.5,517.2L1288.8,512.9L1293.1,517.2L1288.8,521.5ZM1293.1,517.2L1299.2,517.2M1288.8,521.5L1288.8,527.7M1299.2,517.2L1303.5,512.9L1307.9,517.2L1303.5,521.5ZM1307.9,517.2L1314,517.2M1303.5,521.5L1303.5,527.7M1314,517.2L1318.3,512.9L1322.6,517.2L1318.3,521.5ZM1322.6,517.2L1328.7,517.2M1318.3,521.5L1318.3,527.7M1328.7,517.2L1333.1,512.9L1337.4,517.2L1333.1,521.5ZM1337.4,517.2L1343.5,517.2M1333.1,521.5L1333.1,527.7M1343.5,517.2L1347.8,512.9L1352.1,517.2L1347.8,521.5ZM1352.1,517.2L1358.3,517.2M1347.8,521.5L1347.8,527.7M1358.3,517.2L1362.6,512.9L1366.9,517.2L1362.6,521.5ZM1366.9,517.2L1373,517.2M1362.6,521.5L1362.6,527.7M1373,517.2L1377.3,512.9L1381.7,517.2L1377.3,521.5ZM1381.7,517.2L1387.8,517.2M1377.3,521.5L1377.3,527.7M1387.8,517.2L1392.1,512.9L1396.4,517.2L1392.1,521.5ZM1396.4,517.2L1402.5,517.2M1392.1,521.5L1392.1,527.7M1402.5,517.2L1406.9,512.9L1411.2,517.2L1406.9,521.5ZM1411.2,517.2L1417.3,517.2M1406.9,521.5L1406.9,527.7M1417.3,517.2L1421.6,512.9L1425.9,517.2L1421.6,521.5ZM1425.9,517.2L1432.1,517.2M1421.6,521.5L1421.6,527.7M1432.1,517.2L1436.4,512.9L1440.7,517.2L1436.4,521.5ZM1440.7,517.2L1446.8,517.2M1436.4,521.5L1436.4,527.7M1446.8,517.2L1451.1,512.9L1455.5,517.2L1451.1,521.5ZM1455.5,517.2L1461.6,517.2M1451.1,521.5L1451.1,527.7M1461.6,517.2L1465.9,512.9L1470.2,517.2L1465.9,521.5ZM1470.2,517.2L1476.3,517.2M1465.9,521.5L1465.9,527.7M1476.3,517.2L1480.7,512.9L1485,517.2L1480.7,521.5ZM1485,517.2L1491.1,517.2M1480.7,521.5L1480.7,527.7M1491.1,517.2L1495.4,512.9L1499.7,517.2L1495.4,521.5ZM1499.7,517.2L1505.9,517.2M1495.4,521.5L1495.4,527.7M1505.9,517.2L1510.2,512.9L1514.5,517.2L1510.2,521.5ZM1514.5,517.2L1520.6,517.2M1510.2,521.5L1510.2,527.7M1520.6,517.2L1524.9,512.9L1529.3,517.2L1524.9,521.5ZM1529.3,517.2L1535.4,517.2M1524.9,521.5L1524.9,527.7M1535.4,517.2L1539.7,512.9L1544,517.2L1539.7,521.5ZM1544,517.2L1550.1,517.2M1539.7,521.5L1539.7,527.7M1550.1,517.2L1554.5,512.9L1558.8,517.2L1554.5,521.5ZM1558.8,517.2L1564.9,517.2M1554.5,521.5L1554.5,527.7M1564.9,517.2L1569.2,512.9L1573.5,517.2L1569.2,521.5ZM1569.2,521.5L1569.2,527.7M1573.5,517.2L1575.4,517.2M1166.4,532L1170.7,527.7L1175,532L1170.7,536.3ZM1175,532L1181.1,532M1170.7,536.3L1170.7,542.4M1170.7,532L1163.3,524.6M1170.7,532L1178.1,524.6M1170.7,532L1163.3,539.4M1170.7,532L1178.1,539.4M1181.1,532L1185.5,527.7L1189.8,532L1185.5,536.3ZM1185.5,532L1178.1,524.6M1185.5,532L1192.8,524.6M1185.5,532L1178.1,539.4M1185.5,532L1192.8,539.4M1254.9,532L1259.3,527.7L1263.6,532L1259.3,536.3ZM1263.6,532L1269.7,532M1259.3,532L1251.9,524.6M1259.3,532L1266.6,524.6M1259.3,532L1251.9,539.4M1259.3,532L1266.6,539.4M1269.7,532L1274,527.7L1278.3,532L1274,536.3ZM1278.3,532L1284.5,532M1274,536.3L1274,542.4M1274,532L1266.6,524.6M1274,532L1281.4,524.6M1274,532L1266.6,539.4M1274,532L1281.4,539.4M1284.5,532L1288.8,527.7L1293.1,532L1288.8,536.3ZM1293.1,532L1299.2,532M1288.8,536.3L1288.8,542.4M1299.2,532L1303.5,527.7L1307.9,532L1303.5,536.3ZM1307.9,532L1314,532M1303.5,536.3L1303.5,542.4M1314,532L1318.3,527.7L1322.6,532L1318.3,536.3ZM1322.6,532L1328.7,532M1318.3,536.3L1318.3,542.4M1328.7,532L1333.1,527.7L1337.4,532L1333.1,536.3ZM1337.4,532L1343.5,532M1333.1,536.3L1333.1,542.4M1343.5,532L1347.8,527.7L1352.1,532L1347.8,536.3ZM1352.1,532L1358.3,532M1347.8,536.3L1347.8,542.4M1358.3,532L1362.6,527.7L1366.9,532L1362.6,536.3ZM1366.9,532L1373,532M1362.6,536.3L1362.6,542.4M1373,532L1377.3,527.7L1381.7,532L1377.3,536.3ZM1381.7,532L1387.8,532M1377.3,536.3L1377.3,542.4M1387.8,532L1392.1,527.7L1396.4,532L1392.1,536.3ZM1396.4,532L1402.5,532M1392.1,536.3L1392.1,542.4M1402.5,532L1406.9,527.7L1411.2,532L1406.9,536.3ZM1411.2,532L1417.3,532M1406.9,536.3L1406.9,542.4M1417.3,532L1421.6,527.7L1425.9,532L1421.6,536.3ZM1425.9,532L1432.1,532M1421.6,536.3L1421.6,542.4M1421.6,532L1429,524.6M1421.6,532L1414.2,539.4M1421.6,532L1429,539.4M1432.1,532L1436.4,527.7L1440.7,532L1436.4,536.3ZM1440.7,532L1446.8,532M1436.4,532L1429,524.6M1436.4,532L1443.8,524.6M1436.4,532L1429,539.4M1436.4,532L1443.8,539.4M1446.8,532L1451.1,527.7L1455.5,532L1451.1,536.3ZM1455.5,532L1461.6,532M1451.1,532L1443.8,524.6M1451.1,532L1458.5,524.6M1451.1,532L1443.8,539.4M1451.1,532L1458.5,539.4M1461.6,532L1465.9,527.7L1470.2,532L1465.9,536.3ZM1470.2,532L1476.3,532M1465.9,532L1458.5,524.6M1465.9,532L1473.3,524.6M1465.9,532L1458.5,539.4M1465.9,532L1473.3,539.4M1476.3,532L1480.7,527.7L1485,532L1480.7,536.3ZM1485,532L1491.1,532M1480.7,536.3L1480.7,542.4M1480.7,532L1473.3,524.6M1480.7,532L1473.3,539.4M1480.7,532L1488,539.4M1491.1,532L1495.4,527.7L1499.7,532L1495.4,536.3ZM1499.7,532L1505.9,532M1495.4,536.3L1495.4,542.4M1505.9,532L1510.2,527.7L1514.5,532L1510.2,536.3ZM1514.5,532L1520.6,532M1510.2,536.3L1510.2,542.4M1520.6,532L1524.9,527.7L1529.3,532L1524.9,536.3ZM1529.3,532L1535.4,532M1524.9,536.3L1524.9,542.4M1535.4,532L1539.7,527.7L1544,532L1539.7,536.3ZM1544,532L1550.1,532M1539.7,536.3L1539.7,542.4M1550.1,532L1554.5,527.7L1558.8,532L1554.5,536.3ZM1558.8,532L1564.9,532M1554.5,536.3L1554.5,542.4M1564.9,532L1569.2,527.7L1573.5,532L1569.2,536.3ZM1569.2,536.3L1569.2,542.4M1573.5,532L1575.4,532M1166.4,546.7L1170.7,542.4L1175,546.7L1170.7,551.1ZM1170.7,551.1L1170.7,557.2M1170.7,546.7L1163.3,539.4M1170.7,546.7L1178.1,539.4M1170.7,546.7L1163.3,554.1M1170.7,546.7L1178.1,554.1M1269.7,546.7L1274,542.4L1278.3,546.7L1274,551.1ZM1278.3,546.7L1284.5,546.7M1274,551.1L1274,557.2M1274,546.7L1266.6,539.4M1274,546.7L1281.4,539.4M1274,546.7L1266.6,554.1M1274,546.7L1281.4,554.1M1284.5,546.7L1288.8,542.4L1293.1,546.7L1288.8,551.1ZM1293.1,546.7L1299.2,546.7M1288.8,551.1L1288.8,557.2M1299.2,546.7L1303.5,542.4L1307.9,546.7L1303.5,551.1ZM1307.9,546.7L1314,546.7M1303.5,551.1L1303.5,557.2M1314,546.7L1318.3,542.4L1322.6,546.7L1318.3,551.1ZM1322.6,546.7L1328.7,546.7M1318.3,551.1L1318.3,557.2M1328.7,546.7L1333.1,542.4L1337.4,546.7L1333.1,551.1ZM1337.4,546.7L1343.5,546.7M1333.1,551.1L1333.1,557.2M1343.5,546.7L1347.8,542.4L1352.1,546.7L1347.8,551.1ZM1352.1,546.7L1358.3,546.7M1347.8,551.1L1347.8,557.2M1358.3,546.7L1362.6,542.4L1366.9,546.7L1362.6,551.1ZM1366.9,546.7L1373,546.7M1362.6,551.1L1362.6,557.2M1373,546.7L1377.3,542.4L1381.7,546.7L1377.3,551.1ZM1381.7,546.7L1387.8,546.7M1377.3,551.1L1377.3,557.2M1387.8,546.7L1392.1,542.4L1396.4,546.7L1392.1,551.1ZM1396.4,546.7L1402.5,546.7M1392.1,551.1L1392.1,557.2M1402.5,546.7L1406.9,542.4L1411.2,546.7L1406.9,551.1ZM1411.2,546.7L1417.3,546.7M1406.9,551.1L1406.9,557.2M1417.3,546.7L1421.6,542.4L1425.9,546.7L1421.6,551.1ZM1421.6,551.1L1421.6,557.2M1421.6,546.7L1414.2,539.4M1421.6,546.7L1429,539.4M1421.6,546.7L1414.2,554.1M1421.6,546.7L1429,554.1M1476.3,546.7L1480.7,542.4L1485,546.7L1480.7,551.1ZM1485,546.7L1491.1,546.7M1480.7,546.7L1473.3,539.4M1480.7,546.7L1488,539.4M1480.7,546.7L1473.3,554.1M1480.7,546.7L1488,554.1M1491.1,546.7L1495.4,542.4L1499.7,546.7L1495.4,551.1ZM1499.7,546.7L1505.9,546.7M1495.4,551.1L1495.4,557.2M1495.4,546.7L1488,539.4M1495.4,546.7L1488,554.1M1495.4,546.7L1502.8,554.1M1505.9,546.7L1510.2,542.4L1514.5,546.7L1510.2,551.1ZM1514.5,546.7L1520.6,546.7M1510.2,551.1L1510.2,557.2M1520.6,546.7L1524.9,542.4L1529.3,546.7L1524.9,551.1ZM1529.3,546.7L1535.4,546.7M1524.9,551.1L1524.9,557.2M1535.4,546.7L1539.7,542.4L1544,546.7L1539.7,551.1ZM1544,546.7L1550.1,546.7M1539.7,551.1L1539.7,557.2M1550.1,546.7L1554.5,542.4L1558.8,546.7L1554.5,551.1ZM1558.8,546.7L1564.9,546.7M1554.5,551.1L1554.5,557.2M1564.9,546.7L1569.2,542.4L1573.5,546.7L1569.2,551.1ZM1569.2,551.1L1569.2,557.2M1573.5,546.7L1575.4,546.7M1151.6,561.5L1155.9,557.2L1160.3,561.5L1155.9,565.8ZM1160.3,561.5L1166.4,561.5M1155.9,565.8L1155.9,571.9M1155.9,561.5L1148.6,554.1M1155.9,561.5L1163.3,554.1M1155.9,561.5L1148.6,568.9M1155.9,561.5L1163.3,568.9M1166.4,561.5L1170.7,557.2L1175,561.5L1170.7,565.8ZM1170.7,565.8L1170.7,571.9M1170.7,561.5L1163.3,554.1M1170.7,561.5L1178.1,554.1M1170.7,561.5L1163.3,568.9M1170.7,561.5L1178.1,568.9M1254.9,561.5L1259.3,557.2L1263.6,561.5L1259.3,565.8ZM1263.6,561.5L1269.7,561.5M1259.3,565.8L1259.3,571.9M1259.3,561.5L1251.9,554.1M1259.3,561.5L1266.6,554.1M1259.3,561.5L1251.9,568.9M1259.3,561.5L1266.6,568.9M1269.7,561.5L1274,557.2L1278.3,561.5L1274,565.8ZM1278.3,561.5L1284.5,561.5M1274,565.8L1274,571.9M1274,561.5L1266.6,554.1M1274,561.5L1281.4,554.1M1274,561.5L1266.6,568.9M1284.5,561.5L1288.8,557.2L1293.1,561.5L1288.8,565.8ZM1293.1,561.5L1299.2,561.5M1288.8,565.8L1288.8,571.9M1299.2,561.5L1303.5,557.2L1307.9,561.5L1303.5,565.8ZM1307.9,561.5L1314,561.5M1303.5,565.8L1303.5,571.9M1314,561.5L1318.3,557.2L1322.6,561.5L1318.3,565.8ZM1322.6,561.5L1328.7,561.5M1318.3,565.8L1318.3,571.9M1328.7,561.5L1333.1,557.2L1337.4,561.5L1333.1,565.8ZM1337.4,561.5L1343.5,561.5M1333.1,565.8L1333.1,571.9M1343.5,561.5L1347.8,557.2L1352.1,561.5L1347.8,565.8ZM1352.1,561.5L1358.3,561.5M1347.8,565.8L1347.8,571.9M1358.3,561.5L1362.6,557.2L1366.9,561.5L1362.6,565.8ZM1366.9,561.5L1373,561.5M1362.6,565.8L1362.6,571.9M1373,561.5L1377.3,557.2L1381.7,561.5L1377.3,565.8ZM1381.7,561.5L1387.8,561.5M1377.3,565.8L1377.3,571.9M1387.8,561.5L1392.1,557.2L1396.4,561.5L1392.1,565.8ZM1396.4,561.5L1402.5,561.5M1392.1,565.8L1392.1,571.9M1402.5,561.5L1406.9,557.2L1411.2,561.5L1406.9,565.8ZM1411.2,561.5L1417.3,561.5M1406.9,565.8L1406.9,571.9M1417.3,561.5L1421.6,557.2L1425.9,561.5L1421.6,565.8ZM1421.6,565.8L1421.6,571.9M1421.6,561.5L1414.2,554.1M1421.6,561.5L1429,554.1M1421.6,561.5L1414.2,568.9M1421.6,561.5L1429,568.9M1491.1,561.5L1495.4,557.2L1499.7,561.5L1495.4,565.8ZM1499.7,561.5L1505.9,561.5M1495.4,565.8L1495.4,571.9M1495.4,561.5L1488,554.1M1495.4,561.5L1502.8,554.1M1495.4,561.5L1488,568.9M1495.4,561.5L1502.8,568.9M1505.9,561.5L1510.2,557.2L1514.5,561.5L1510.2,565.8ZM1514.5,561.5L1520.6,561.5M1510.2,565.8L1510.2,571.9M1520.6,561.5L1524.9,557.2L1529.3,561.5L1524.9,565.8ZM1529.3,561.5L1535.4,561.5M1524.9,565.8L1524.9,571.9M1535.4,561.5L1539.7,557.2L1544,561.5L1539.7,565.8ZM1544,561.5L1550.1,561.5M1539.7,565.8L1539.7,571.9M1550.1,561.5L1554.5,557.2L1558.8,561.5L1554.5,565.8ZM1558.8,561.5L1564.9,561.5M1554.5,565.8L1554.5,571.9M1564.9,561.5L1569.2,557.2L1573.5,561.5L1569.2,565.8ZM1569.2,565.8L1569.2,571.9M1573.5,561.5L1575.4,561.5M1136.9,576.3L1141.2,571.9L1145.5,576.3L1141.2,580.6ZM1145.5,576.3L1151.6,576.3M1141.2,580.6L1141.2,586.7M1141.2,576.3L1133.8,568.9M1141.2,576.3L1148.6,568.9M1141.2,576.3L1133.8,583.6M1141.2,576.3L1148.6,583.6M1151.6,576.3L1155.9,571.9L1160.3,576.3L1155.9,580.6ZM1160.3,576.3L1166.4,576.3M1155.9,580.6L1155.9,586.7M1155.9,576.3L1148.6,568.9M1155.9,576.3L1163.3,568.9M1155.9,576.3L1148.6,583.6M1155.9,576.3L1163.3,583.6M1166.4,576.3L1170.7,571.9L1175,576.3L1170.7,580.6ZM1175,576.3L1181.1,576.3M1170.7,580.6L1170.7,586.7M1170.7,576.3L1163.3,568.9M1170.7,576.3L1178.1,568.9M1170.7,576.3L1163.3,583.6M1170.7,576.3L1178.1,583.6M1181.1,576.3L1185.5,571.9L1189.8,576.3L1185.5,580.6ZM1189.8,576.3L1195.9,576.3M1185.5,580.6L1185.5,586.7M1185.5,576.3L1178.1,568.9M1185.5,576.3L1192.8,568.9M1185.5,576.3L1178.1,583.6M1185.5,576.3L1192.8,583.6M1195.9,576.3L1200.2,571.9L1204.5,576.3L1200.2,580.6ZM1204.5,576.3L1210.7,576.3M1200.2,580.6L1200.2,586.7M1200.2,576.3L1192.8,568.9M1200.2,576.3L1207.6,568.9M1200.2,576.3L1192.8,583.6M1200.2,576.3L1207.6,583.6M1210.7,576.3L1215,571.9L1219.3,576.3L1215,580.6ZM1219.3,576.3L1225.4,576.3M1215,580.6L1215,586.7M1215,576.3L1207.6,568.9M1215,576.3L1222.4,568.9M1215,576.3L1207.6,583.6M1215,576.3L1222.4,583.6M1225.4,576.3L1229.7,571.9L1234.1,576.3L1229.7,580.6ZM1234.1,576.3L1240.2,576.3M1229.7,580.6L1229.7,586.7M1229.7,576.3L1222.4,568.9M1229.7,576.3L1237.1,568.9M1229.7,576.3L1222.4,583.6M1229.7,576.3L1237.1,583.6M1240.2,576.3L1244.5,571.9L1248.8,576.3L1244.5,580.6ZM1248.8,576.3L1254.9,576.3M1244.5,580.6L1244.5,586.7M1244.5,576.3L1237.1,568.9M1244.5,576.3L1251.9,568.9M1244.5,576.3L1237.1,583.6M1244.5,576.3L1251.9,583.6M1254.9,576.3L1259.3,571.9L1263.6,576.3L1259.3,580.6ZM1263.6,576.3L1269.7,576.3M1259.3,580.6L1259.3,586.7M1259.3,576.3L1251.9,568.9M1259.3,576.3L1266.6,568.9M1259.3,576.3L1251.9,583.6M1259.3,576.3L1266.6,583.6M1269.7,576.3L1274,571.9L1278.3,576.3L1274,580.6ZM1278.3,576.3L1284.5,576.3M1274,580.6L1274,586.7M1284.5,576.3L1288.8,571.9L1293.1,576.3L1288.8,580.6ZM1293.1,576.3L1299.2,576.3M1288.8,580.6L1288.8,586.7M1299.2,576.3L1303.5,571.9L1307.9,576.3L1303.5,580.6ZM1307.9,576.3L1314,576.3M1303.5,580.6L1303.5,586.7M1314,576.3L1318.3,571.9L1322.6,576.3L1318.3,580.6ZM1322.6,576.3L1328.7,576.3M1318.3,580.6L1318.3,586.7M1328.7,576.3L1333.1,571.9L1337.4,576.3L1333.1,580.6ZM1337.4,576.3L1343.5,576.3M1333.1,580.6L1333.1,586.7M1333.1,576.3L1340.4,568.9M1333.1,576.3L1325.7,583.6M1333.1,576.3L1340.4,583.6M1343.5,576.3L1347.8,571.9L1352.1,576.3L1347.8,580.6ZM1352.1,576.3L1358.3,576.3M1347.8,576.3L1340.4,568.9M1347.8,576.3L1355.2,568.9M1347.8,576.3L1340.4,583.6M1347.8,576.3L1355.2,583.6M1358.3,576.3L1362.6,571.9L1366.9,576.3L1362.6,580.6ZM1366.9,576.3L1373,576.3M1362.6,580.6L1362.6,586.7M1362.6,576.3L1355.2,568.9M1362.6,576.3L1355.2,583.6M1362.6,576.3L1370,583.6M1373,576.3L1377.3,571.9L1381.7,576.3L1377.3,580.6ZM1381.7,576.3L1387.8,576.3M1377.3,580.6L1377.3,586.7M1387.8,576.3L1392.1,571.9L1396.4,576.3L1392.1,580.6ZM1396.4,576.3L1402.5,576.3M1392.1,580.6L1392.1,586.7M1402.5,576.3L1406.9,571.9L1411.2,576.3L1406.9,580.6ZM1411.2,576.3L1417.3,576.3M1406.9,580.6L1406.9,586.7M1417.3,576.3L1421.6,571.9L1425.9,576.3L1421.6,580.6ZM1425.9,576.3L1432.1,576.3M1421.6,580.6L1421.6,586.7M1421.6,576.3L1414.2,568.9M1421.6,576.3L1429,568.9M1421.6,576.3L1414.2,583.6M1421.6,576.3L1429,583.6M1432.1,576.3L1436.4,571.9L1440.7,576.3L1436.4,580.6ZM1436.4,580.6L1436.4,586.7M1436.4,576.3L1429,568.9M1436.4,576.3L1443.8,568.9M1436.4,576.3L1429,583.6M1436.4,576.3L1443.8,583.6M1476.3,576.3L1480.7,571.9L1485,576.3L1480.7,580.6ZM1485,576.3L1491.1,576.3M1480.7,580.6L1480.7,586.7M1480.7,576.3L1473.3,568.9M1480.7,576.3L1488,568.9M1480.7,576.3L1473.3,583.6M1480.7,576.3L1488,583.6M1491.1,576.3L1495.4,571.9L1499.7,576.3L1495.4,580.6ZM1499.7,576.3L1505.9,576.3M1495.4,580.6L1495.4,586.7M1495.4,576.3L1488,568.9M1495.4,576.3L1502.8,568.9M1495.4,576.3L1488,583.6M1505.9,576.3L1510.2,571.9L1514.5,576.3L1510.2,580.6ZM1514.5,576.3L1520.6,576.3M1510.2,580.6L1510.2,586.7M1520.6,576.3L1524.9,571.9L1529.3,576.3L1524.9,580.6ZM1529.3,576.3L1535.4,576.3M1524.9,580.6L1524.9,586.7M1535.4,576.3L1539.7,571.9L1544,576.3L1539.7,580.6ZM1544,576.3L1550.1,576.3M1539.7,580.6L1539.7,586.7M1550.1,576.3L1554.5,571.9L1558.8,576.3L1554.5,580.6ZM1558.8,576.3L1564.9,576.3M1554.5,580.6L1554.5,586.7M1564.9,576.3L1569.2,571.9L1573.5,576.3L1569.2,580.6ZM1569.2,580.6L1569.2,586.7M1573.5,576.3L1575.4,576.3M1136.9,591L1141.2,586.7L1145.5,591L1141.2,595.3ZM1145.5,591L1151.6,591M1141.2,591L1133.8,583.6M1141.2,591L1148.6,583.6M1141.2,591L1133.8,598.4M1141.2,591L1148.6,598.4M1151.6,591L1155.9,586.7L1160.3,591L1155.9,595.3ZM1160.3,591L1166.4,591M1155.9,591L1148.6,583.6M1155.9,591L1163.3,583.6M1155.9,591L1148.6,598.4M1155.9,591L1163.3,598.4M1166.4,591L1170.7,586.7L1175,591L1170.7,595.3ZM1175,591L1181.1,591M1170.7,595.3L1170.7,601.5M1170.7,591L1163.3,583.6M1170.7,591L1178.1,583.6M1170.7,591L1163.3,598.4M1170.7,591L1178.1,598.4M1181.1,591L1185.5,586.7L1189.8,591L1185.5,595.3ZM1189.8,591L1195.9,591M1185.5,595.3L1185.5,601.5M1185.5,591L1178.1,583.6M1185.5,591L1192.8,583.6M1185.5,591L1178.1,598.4M1185.5,591L1192.8,598.4M1195.9,591L1200.2,586.7L1204.5,591L1200.2,595.3ZM1204.5,591L1210.7,591M1200.2,591L1192.8,583.6M1200.2,591L1207.6,583.6M1200.2,591L1192.8,598.4M1200.2,591L1207.6,598.4M1210.7,591L1215,586.7L1219.3,591L1215,595.3ZM1219.3,591L1225.4,591M1215,591L1207.6,583.6M1215,591L1222.4,583.6M1215,591L1207.6,598.4M1215,591L1222.4,598.4M1225.4,591L1229.7,586.7L1234.1,591L1229.7,595.3ZM1234.1,591L1240.2,591M1229.7,591L1222.4,583.6M1229.7,591L1237.1,583.6M1229.7,591L1222.4,598.4M1229.7,591L1237.1,598.4M1240.2,591L1244.5,586.7L1248.8,591L1244.5,595.3ZM1248.8,591L1254.9,591M1244.5,591L1237.1,583.6M1244.5,591L1251.9,583.6M1244.5,591L1237.1,598.4M1244.5,591L1251.9,598.4M1254.9,591L1259.3,586.7L1263.6,591L1259.3,595.3ZM1263.6,591L1269.7,591M1259.3,595.3L1259.3,601.5M1259.3,591L1251.9,583.6M1259.3,591L1266.6,583.6M1259.3,591L1251.9,598.4M1259.3,591L1266.6,598.4M1269.7,591L1274,586.7L1278.3,591L1274,595.3ZM1278.3,591L1284.5,591M1274,595.3L1274,601.5M1284.5,591L1288.8,586.7L1293.1,591L1288.8,595.3ZM1293.1,591L1299.2,591M1288.8,595.3L1288.8,601.5M1299.2,591L1303.5,586.7L1307.9,591L1303.5,595.3ZM1307.9,591L1314,591M1303.5,595.3L1303.5,601.5M1314,591L1318.3,586.7L1322.6,591L1318.3,595.3ZM1322.6,591L1328.7,591M1318.3,595.3L1318.3,601.5M1318.3,591L1325.7,583.6M1318.3,591L1310.9,598.4M1318.3,591L1325.7,598.4M1328.7,591L1333.1,586.7L1337.4,591L1333.1,595.3ZM1333.1,591L1325.7,583.6M1333.1,591L1340.4,583.6M1333.1,591L1325.7,598.4M1333.1,591L1340.4,598.4M1358.3,591L1362.6,586.7L1366.9,591L1362.6,595.3ZM1366.9,591L1373,591M1362.6,595.3L1362.6,601.5M1362.6,591L1355.2,583.6M1362.6,591L1370,583.6M1362.6,591L1355.2,598.4M1362.6,591L1370,598.4M1373,591L1377.3,586.7L1381.7,591L1377.3,595.3ZM1381.7,591L1387.8,591M1377.3,591L1370,583.6M1377.3,591L1384.7,583.6M1377.3,591L1370,598.4M1377.3,591L1384.7,598.4M1387.8,591L1392.1,586.7L1396.4,591L1392.1,595.3ZM1396.4,591L1402.5,591M1392.1,591L1384.7,583.6M1392.1,591L1399.5,583.6M1392.1,591L1384.7,598.4M1392.1,591L1399.5,598.4M1402.5,591L1406.9,586.7L1411.2,591L1406.9,595.3ZM1411.2,591L1417.3,591M1406.9,595.3L1406.9,601.5M1406.9,591L1399.5,583.6M1406.9,591L1414.2,583.6M1406.9,591L1399.5,598.4M1406.9,591L1414.2,598.4M1417.3,591L1421.6,586.7L1425.9,591L1421.6,595.3ZM1425.9,591L1432.1,591M1421.6,595.3L1421.6,601.5M1432.1,591L1436.4,586.7L1440.7,591L1436.4,595.3ZM1436.4,595.3L1436.4,601.5M1436.4,591L1429,583.6M1436.4,591L1443.8,583.6M1436.4,591L1429,598.4M1436.4,591L1443.8,598.4M1476.3,591L1480.7,586.7L1485,591L1480.7,595.3ZM1485,591L1491.1,591M1480.7,595.3L1480.7,601.5M1480.7,591L1473.3,583.6M1480.7,591L1488,583.6M1480.7,591L1473.3,598.4M1480.7,591L1488,598.4M1491.1,591L1495.4,586.7L1499.7,591L1495.4,595.3ZM1499.7,591L1505.9,591M1495.4,595.3L1495.4,601.5M1505.9,591L1510.2,586.7L1514.5,591L1510.2,595.3ZM1514.5,591L1520.6,591M1510.2,595.3L1510.2,601.5M1520.6,591L1524.9,586.7L1529.3,591L1524.9,595.3ZM1529.3,591L1535.4,591M1524.9,595.3L1524.9,601.5M1535.4,591L1539.7,586.7L1544,591L1539.7,595.3ZM1544,591L1550.1,591M1539.7,595.3L1539.7,601.5M1550.1,591L1554.5,586.7L1558.8,591L1554.5,595.3ZM1558.8,591L1564.9,591M1554.5,595.3L1554.5,601.5M1564.9,591L1569.2,586.7L1573.5,591L1569.2,595.3ZM1569.2,595.3L1569.2,601.5M1573.5,591L1575.4,591M1033.5,605.8L1037.9,601.5L1042.2,605.8L1037.9,610.1ZM1037.9,610.1L1037.9,616.2M1037.9,605.8L1030.5,598.4M1037.9,605.8L1045.2,598.4M1037.9,605.8L1030.5,613.2M1037.9,605.8L1045.2,613.2M1166.4,605.8L1170.7,601.5L1175,605.8L1170.7,610.1ZM1175,605.8L1181.1,605.8M1170.7,610.1L1170.7,616.2M1170.7,605.8L1163.3,598.4M1170.7,605.8L1178.1,598.4M1170.7,605.8L1163.3,613.2M1170.7,605.8L1178.1,613.2M1181.1,605.8L1185.5,601.5L1189.8,605.8L1185.5,610.1ZM1185.5,610.1L1185.5,616.2M1185.5,605.8L1178.1,598.4M1185.5,605.8L1192.8,598.4M1185.5,605.8L1178.1,613.2M1185.5,605.8L1192.8,613.2M1254.9,605.8L1259.3,601.5L1263.6,605.8L1259.3,610.1ZM1263.6,605.8L1269.7,605.8M1259.3,610.1L1259.3,616.2M1259.3,605.8L1251.9,598.4M1259.3,605.8L1266.6,598.4M1259.3,605.8L1251.9,613.2M1259.3,605.8L1266.6,613.2M1269.7,605.8L1274,601.5L1278.3,605.8L1274,610.1ZM1278.3,605.8L1284.5,605.8M1274,610.1L1274,616.2M1274,605.8L1266.6,598.4M1274,605.8L1281.4,598.4M1274,605.8L1266.6,613.2M1274,605.8L1281.4,613.2M1284.5,605.8L1288.8,601.5L1293.1,605.8L1288.8,610.1ZM1293.1,605.8L1299.2,605.8M1288.8,605.8L1281.4,598.4M1288.8,605.8L1296.2,598.4M1288.8,605.8L1281.4,613.2M1288.8,605.8L1296.2,613.2M1299.2,605.8L1303.5,601.5L1307.9,605.8L1303.5,610.1ZM1307.9,605.8L1314,605.8M1303.5,605.8L1296.2,598.4M1303.5,605.8L1310.9,598.4M1303.5,605.8L1296.2,613.2M1303.5,605.8L1310.9,613.2M1314,605.8L1318.3,601.5L1322.6,605.8L1318.3,610.1ZM1318.3,605.8L1310.9,598.4M1318.3,605.8L1325.7,598.4M1318.3,605.8L1310.9,613.2M1318.3,605.8L1325.7,613.2M1358.3,605.8L1362.6,601.5L1366.9,605.8L1362.6,610.1ZM1362.6,605.8L1355.2,598.4M1362.6,605.8L1370,598.4M1362.6,605.8L1355.2,613.2M1362.6,605.8L1370,613.2M1402.5,605.8L1406.9,601.5L1411.2,605.8L1406.9,610.1ZM1411.2,605.8L1417.3,605.8M1406.9,610.1L1406.9,616.2M1406.9,605.8L1399.5,598.4M1406.9,605.8L1414.2,598.4M1406.9,605.8L1399.5,613.2M1406.9,605.8L1414.2,613.2M1417.3,605.8L1421.6,601.5L1425.9,605.8L1421.6,610.1ZM1425.9,605.8L1432.1,605.8M1421.6,610.1L1421.6,616.2M1432.1,605.8L1436.4,601.5L1440.7,605.8L1436.4,610.1ZM1440.7,605.8L1446.8,605.8M1436.4,610.1L1436.4,616.2M1436.4,605.8L1429,598.4M1436.4,605.8L1443.8,598.4M1436.4,605.8L1443.8,613.2M1446.8,605.8L1451.1,601.5L1455.5,605.8L1451.1,610.1ZM1455.5,605.8L1461.6,605.8M1451.1,610.1L1451.1,616.2M1451.1,605.8L1443.8,598.4M1451.1,605.8L1458.5,598.4M1451.1,605.8L1443.8,613.2M1451.1,605.8L1458.5,613.2M1461.6,605.8L1465.9,601.5L1470.2,605.8L1465.9,610.1ZM1470.2,605.8L1476.3,605.8M1465.9,610.1L1465.9,616.2M1465.9,605.8L1458.5,598.4M1465.9,605.8L1473.3,598.4M1465.9,605.8L1458.5,613.2M1465.9,605.8L1473.3,613.2M1476.3,605.8L1480.7,601.5L1485,605.8L1480.7,610.1ZM1485,605.8L1491.1,605.8M1480.7,610.1L1480.7,616.2M1480.7,605.8L1473.3,598.4M1480.7,605.8L1488,598.4M1480.7,605.8L1473.3,613.2M1491.1,605.8L1495.4,601.5L1499.7,605.8L1495.4,610.1ZM1499.7,605.8L1505.9,605.8M1495.4,610.1L1495.4,616.2M1505.9,605.8L1510.2,601.5L1514.5,605.8L1510.2,610.1ZM1514.5,605.8L1520.6,605.8M1510.2,610.1L1510.2,616.2M1520.6,605.8L1524.9,601.5L1529.3,605.8L1524.9,610.1ZM1529.3,605.8L1535.4,605.8M1524.9,610.1L1524.9,616.2M1535.4,605.8L1539.7,601.5L1544,605.8L1539.7,610.1ZM1544,605.8L1550.1,605.8M1539.7,610.1L1539.7,616.2M1550.1,605.8L1554.5,601.5L1558.8,605.8L1554.5,610.1ZM1558.8,605.8L1564.9,605.8M1554.5,610.1L1554.5,616.2M1564.9,605.8L1569.2,601.5L1573.5,605.8L1569.2,610.1ZM1569.2,610.1L1569.2,616.2M1573.5,605.8L1575.4,605.8M989.3,620.5L993.6,616.2L997.9,620.5L993.6,624.9ZM997.9,620.5L1004,620.5M993.6,624.9L993.6,631M993.6,620.5L986.2,613.2M993.6,620.5L1001,613.2M993.6,620.5L986.2,627.9M993.6,620.5L1001,627.9M1004,620.5L1008.3,616.2L1012.7,620.5L1008.3,624.9ZM1012.7,620.5L1018.8,620.5M1008.3,624.9L1008.3,631M1008.3,620.5L1001,613.2M1008.3,620.5L1015.7,613.2M1008.3,620.5L1001,627.9M1008.3,620.5L1015.7,627.9M1018.8,620.5L1023.1,616.2L1027.4,620.5L1023.1,624.9ZM1027.4,620.5L1033.5,620.5M1023.1,624.9L1023.1,631M1023.1,620.5L1015.7,613.2M1023.1,620.5L1030.5,613.2M1023.1,620.5L1015.7,627.9M1023.1,620.5L1030.5,627.9M1033.5,620.5L1037.9,616.2L1042.2,620.5L1037.9,624.9ZM1037.9,620.5L1030.5,613.2M1037.9,620.5L1045.2,613.2M1037.9,620.5L1030.5,627.9M1037.9,620.5L1045.2,627.9M1166.4,620.5L1170.7,616.2L1175,620.5L1170.7,624.9ZM1175,620.5L1181.1,620.5M1170.7,624.9L1170.7,631M1170.7,620.5L1163.3,613.2M1170.7,620.5L1178.1,613.2M1170.7,620.5L1163.3,627.9M1170.7,620.5L1178.1,627.9M1181.1,620.5L1185.5,616.2L1189.8,620.5L1185.5,624.9ZM1185.5,624.9L1185.5,631M1185.5,620.5L1178.1,613.2M1185.5,620.5L1192.8,613.2M1185.5,620.5L1178.1,627.9M1185.5,620.5L1192.8,627.9M1254.9,620.5L1259.3,616.2L1263.6,620.5L1259.3,624.9ZM1263.6,620.5L1269.7,620.5M1259.3,624.9L1259.3,631M1259.3,620.5L1251.9,613.2M1259.3,620.5L1266.6,613.2M1259.3,620.5L1251.9,627.9M1259.3,620.5L1266.6,627.9M1269.7,620.5L1274,616.2L1278.3,620.5L1274,624.9ZM1274,620.5L1266.6,613.2M1274,620.5L1281.4,613.2M1274,620.5L1266.6,627.9M1274,620.5L1281.4,627.9M1402.5,620.5L1406.9,616.2L1411.2,620.5L1406.9,624.9ZM1411.2,620.5L1417.3,620.5M1406.9,624.9L1406.9,631M1406.9,620.5L1399.5,613.2M1406.9,620.5L1414.2,613.2M1406.9,620.5L1399.5,627.9M1406.9,620.5L1414.2,627.9M1417.3,620.5L1421.6,616.2L1425.9,620.5L1421.6,624.9ZM1425.9,620.5L1432.1,620.5M1421.6,624.9L1421.6,631M1432.1,620.5L1436.4,616.2L1440.7,620.5L1436.4,624.9ZM1440.7,620.5L1446.8,620.5M1436.4,624.9L1436.4,631M1446.8,620.5L1451.1,616.2L1455.5,620.5L1451.1,624.9ZM1455.5,620.5L1461.6,620.5M1451.1,624.9L1451.1,631M1461.6,620.5L1465.9,616.2L1470.2,620.5L1465.9,624.9ZM1470.2,620.5L1476.3,620.5M1465.9,624.9L1465.9,631M1476.3,620.5L1480.7,616.2L1485,620.5L1480.7,624.9ZM1485,620.5L1491.1,620.5M1480.7,624.9L1480.7,631M1491.1,620.5L1495.4,616.2L1499.7,620.5L1495.4,624.9ZM1499.7,620.5L1505.9,620.5M1495.4,624.9L1495.4,631M1505.9,620.5L1510.2,616.2L1514.5,620.5L1510.2,624.9ZM1514.5,620.5L1520.6,620.5M1510.2,624.9L1510.2,631M1520.6,620.5L1524.9,616.2L1529.3,620.5L1524.9,624.9ZM1529.3,620.5L1535.4,620.5M1524.9,624.9L1524.9,631M1535.4,620.5L1539.7,616.2L1544,620.5L1539.7,624.9ZM1544,620.5L1550.1,620.5M1539.7,624.9L1539.7,631M1550.1,620.5L1554.5,616.2L1558.8,620.5L1554.5,624.9ZM1558.8,620.5L1564.9,620.5M1554.5,624.9L1554.5,631M1564.9,620.5L1569.2,616.2L1573.5,620.5L1569.2,624.9ZM1569.2,624.9L1569.2,631M1573.5,620.5L1575.4,620.5M989.3,635.3L993.6,631L997.9,635.3L993.6,639.6ZM997.9,635.3L1004,635.3M993.6,635.3L986.2,627.9M993.6,635.3L1001,627.9M993.6,635.3L986.2,642.7M993.6,635.3L1001,642.7M1004,635.3L1008.3,631L1012.7,635.3L1008.3,639.6ZM1012.7,635.3L1018.8,635.3M1008.3,635.3L1001,627.9M1008.3,635.3L1015.7,627.9M1008.3,635.3L1001,642.7M1008.3,635.3L1015.7,642.7M1018.8,635.3L1023.1,631L1027.4,635.3L1023.1,639.6ZM1023.1,635.3L1015.7,627.9M1023.1,635.3L1030.5,627.9M1023.1,635.3L1015.7,642.7M1023.1,635.3L1030.5,642.7M1166.4,635.3L1170.7,631L1175,635.3L1170.7,639.6ZM1175,635.3L1181.1,635.3M1170.7,635.3L1163.3,627.9M1170.7,635.3L1178.1,627.9M1170.7,635.3L1163.3,642.7M1170.7,635.3L1178.1,642.7M1181.1,635.3L1185.5,631L1189.8,635.3L1185.5,639.6ZM1189.8,635.3L1195.9,635.3M1185.5,639.6L1185.5,645.7M1185.5,635.3L1178.1,627.9M1185.5,635.3L1192.8,627.9M1185.5,635.3L1178.1,642.7M1185.5,635.3L1192.8,642.7M1195.9,635.3L1200.2,631L1204.5,635.3L1200.2,639.6ZM1204.5,635.3L1210.7,635.3M1200.2,639.6L1200.2,645.7M1200.2,635.3L1192.8,627.9M1200.2,635.3L1207.6,627.9M1200.2,635.3L1192.8,642.7M1200.2,635.3L1207.6,642.7M1210.7,635.3L1215,631L1219.3,635.3L1215,639.6ZM1215,639.6L1215,645.7M1215,635.3L1207.6,627.9M1215,635.3L1222.4,627.9M1215,635.3L1207.6,642.7M1215,635.3L1222.4,642.7M1240.2,635.3L1244.5,631L1248.8,635.3L1244.5,639.6ZM1248.8,635.3L1254.9,635.3M1244.5,639.6L1244.5,645.7M1244.5,635.3L1237.1,627.9M1244.5,635.3L1251.9,627.9M1244.5,635.3L1237.1,642.7M1244.5,635.3L1251.9,642.7M1254.9,635.3L1259.3,631L1263.6,635.3L1259.3,639.6ZM1259.3,639.6L1259.3,645.7M1259.3,635.3L1251.9,627.9M1259.3,635.3L1266.6,627.9M1259.3,635.3L1251.9,642.7M1259.3,635.3L1266.6,642.7M1402.5,635.3L1406.9,631L1411.2,635.3L1406.9,639.6ZM1411.2,635.3L1417.3,635.3M1406.9,639.6L1406.9,645.7M1406.9,635.3L1399.5,627.9M1406.9,635.3L1414.2,627.9M1406.9,635.3L1399.5,642.7M1406.9,635.3L1414.2,642.7M1417.3,635.3L1421.6,631L1425.9,635.3L1421.6,639.6ZM1425.9,635.3L1432.1,635.3M1421.6,639.6L1421.6,645.7M1432.1,635.3L1436.4,631L1440.7,635.3L1436.4,639.6ZM1440.7,635.3L1446.8,635.3M1436.4,639.6L1436.4,645.7M1446.8,635.3L1451.1,631L1455.5,635.3L1451.1,639.6ZM1455.5,635.3L1461.6,635.3M1451.1,639.6L1451.1,645.7M1461.6,635.3L1465.9,631L1470.2,635.3L1465.9,639.6ZM1470.2,635.3L1476.3,635.3M1465.9,639.6L1465.9,645.7M1476.3,635.3L1480.7,631L1485,635.3L1480.7,639.6ZM1485,635.3L1491.1,635.3M1480.7,639.6L1480.7,645.7M1491.1,635.3L1495.4,631L1499.7,635.3L1495.4,639.6ZM1499.7,635.3L1505.9,635.3M1495.4,639.6L1495.4,645.7M1505.9,635.3L1510.2,631L1514.5,635.3L1510.2,639.6ZM1514.5,635.3L1520.6,635.3M1510.2,639.6L1510.2,645.7M1520.6,635.3L1524.9,631L1529.3,635.3L1524.9,639.6ZM1529.3,635.3L1535.4,635.3M1524.9,639.6L1524.9,645.7M1535.4,635.3L1539.7,631L1544,635.3L1539.7,639.6ZM1544,635.3L1550.1,635.3M1539.7,639.6L1539.7,645.7M1539.7,635.3L1547.1,627.9M1539.7,635.3L1532.3,642.7M1539.7,635.3L1547.1,642.7M1550.1,635.3L1554.5,631L1558.8,635.3L1554.5,639.6ZM1558.8,635.3L1564.9,635.3M1554.5,635.3L1547.1,627.9M1554.5,635.3L1561.8,627.9M1554.5,635.3L1547.1,642.7M1554.5,635.3L1561.8,642.7M1564.9,635.3L1569.2,631L1573.5,635.3L1569.2,639.6ZM1573.5,635.3L1575.4,635.3M1569.2,635.3L1561.8,627.9M1569.2,635.3L1576.6,627.9M1569.2,635.3L1561.8,642.7M1569.2,635.3L1576.6,642.7M1181.1,650.1L1185.5,645.7L1189.8,650.1L1185.5,654.4ZM1189.8,650.1L1195.9,650.1M1185.5,650.1L1178.1,642.7M1185.5,650.1L1192.8,642.7M1185.5,650.1L1178.1,657.4M1185.5,650.1L1192.8,657.4M1195.9,650.1L1200.2,645.7L1204.5,650.1L1200.2,654.4ZM1204.5,650.1L1210.7,650.1M1200.2,654.4L1200.2,660.5M1200.2,650.1L1192.8,642.7M1200.2,650.1L1207.6,642.7M1200.2,650.1L1192.8,657.4M1200.2,650.1L1207.6,657.4M1210.7,650.1L1215,645.7L1219.3,650.1L1215,654.4ZM1219.3,650.1L1225.4,650.1M1215,654.4L1215,660.5M1215,650.1L1207.6,642.7M1215,650.1L1222.4,642.7M1215,650.1L1207.6,657.4M1215,650.1L1222.4,657.4M1225.4,650.1L1229.7,645.7L1234.1,650.1L1229.7,654.4ZM1234.1,650.1L1240.2,650.1M1229.7,654.4L1229.7,660.5M1229.7,650.1L1222.4,642.7M1229.7,650.1L1237.1,642.7M1229.7,650.1L1222.4,657.4M1229.7,650.1L1237.1,657.4M1240.2,650.1L1244.5,645.7L1248.8,650.1L1244.5,654.4ZM1248.8,650.1L1254.9,650.1M1244.5,654.4L1244.5,660.5M1244.5,650.1L1237.1,642.7M1244.5,650.1L1251.9,642.7M1244.5,650.1L1237.1,657.4M1244.5,650.1L1251.9,657.4M1254.9,650.1L1259.3,645.7L1263.6,650.1L1259.3,654.4ZM1259.3,654.4L1259.3,660.5M1259.3,650.1L1251.9,642.7M1259.3,650.1L1266.6,642.7M1259.3,650.1L1251.9,657.4M1259.3,650.1L1266.6,657.4M1328.7,650.1L1333.1,645.7L1337.4,650.1L1333.1,654.4ZM1333.1,654.4L1333.1,660.5M1333.1,650.1L1325.7,642.7M1333.1,650.1L1340.4,642.7M1333.1,650.1L1325.7,657.4M1333.1,650.1L1340.4,657.4M1402.5,650.1L1406.9,645.7L1411.2,650.1L1406.9,654.4ZM1411.2,650.1L1417.3,650.1M1406.9,654.4L1406.9,660.5M1406.9,650.1L1399.5,642.7M1406.9,650.1L1414.2,642.7M1406.9,650.1L1399.5,657.4M1406.9,650.1L1414.2,657.4M1417.3,650.1L1421.6,645.7L1425.9,650.1L1421.6,654.4ZM1425.9,650.1L1432.1,650.1M1421.6,654.4L1421.6,660.5M1432.1,650.1L1436.4,645.7L1440.7,650.1L1436.4,654.4ZM1440.7,650.1L1446.8,650.1M1436.4,654.4L1436.4,660.5M1446.8,650.1L1451.1,645.7L1455.5,650.1L1451.1,654.4ZM1455.5,650.1L1461.6,650.1M1451.1,654.4L1451.1,660.5M1461.6,650.1L1465.9,645.7L1470.2,650.1L1465.9,654.4ZM1470.2,650.1L1476.3,650.1M1465.9,654.4L1465.9,660.5M1476.3,650.1L1480.7,645.7L1485,650.1L1480.7,654.4ZM1485,650.1L1491.1,650.1M1480.7,654.4L1480.7,660.5M1491.1,650.1L1495.4,645.7L1499.7,650.1L1495.4,654.4ZM1499.7,650.1L1505.9,650.1M1495.4,654.4L1495.4,660.5M1495.4,650.1L1502.8,642.7M1495.4,650.1L1488,657.4M1495.4,650.1L1502.8,657.4M1505.9,650.1L1510.2,645.7L1514.5,650.1L1510.2,654.4ZM1514.5,650.1L1520.6,650.1M1510.2,650.1L1502.8,642.7M1510.2,650.1L1517.6,642.7M1510.2,650.1L1502.8,657.4M1510.2,650.1L1517.6,657.4M1520.6,650.1L1524.9,645.7L1529.3,650.1L1524.9,654.4ZM1529.3,650.1L1535.4,650.1M1524.9,650.1L1517.6,642.7M1524.9,650.1L1532.3,642.7M1524.9,650.1L1517.6,657.4M1524.9,650.1L1532.3,657.4M1535.4,650.1L1539.7,645.7L1544,650.1L1539.7,654.4ZM1539.7,650.1L1532.3,642.7M1539.7,650.1L1547.1,642.7M1539.7,650.1L1532.3,657.4M1539.7,650.1L1547.1,657.4M1195.9,664.8L1200.2,660.5L1204.5,664.8L1200.2,669.1ZM1204.5,664.8L1210.7,664.8M1200.2,669.1L1200.2,675.3M1200.2,664.8L1192.8,657.4M1200.2,664.8L1207.6,657.4M1200.2,664.8L1192.8,672.2M1200.2,664.8L1207.6,672.2M1210.7,664.8L1215,660.5L1219.3,664.8L1215,669.1ZM1219.3,664.8L1225.4,664.8M1215,669.1L1215,675.3M1225.4,664.8L1229.7,660.5L1234.1,664.8L1229.7,669.1ZM1234.1,664.8L1240.2,664.8M1229.7,669.1L1229.7,675.3M1240.2,664.8L1244.5,660.5L1248.8,664.8L1244.5,669.1ZM1248.8,664.8L1254.9,664.8M1244.5,669.1L1244.5,675.3M1254.9,664.8L1259.3,660.5L1263.6,664.8L1259.3,669.1ZM1263.6,664.8L1269.7,664.8M1259.3,669.1L1259.3,675.3M1259.3,664.8L1251.9,657.4M1259.3,664.8L1266.6,657.4M1259.3,664.8L1266.6,672.2M1269.7,664.8L1274,660.5L1278.3,664.8L1274,669.1ZM1274,669.1L1274,675.3M1274,664.8L1266.6,657.4M1274,664.8L1281.4,657.4M1274,664.8L1266.6,672.2M1274,664.8L1281.4,672.2M1314,664.8L1318.3,660.5L1322.6,664.8L1318.3,669.1ZM1322.6,664.8L1328.7,664.8M1318.3,664.8L1310.9,657.4M1318.3,664.8L1325.7,657.4M1318.3,664.8L1310.9,672.2M1318.3,664.8L1325.7,672.2M1328.7,664.8L1333.1,660.5L1337.4,664.8L1333.1,669.1ZM1337.4,664.8L1343.5,664.8M1333.1,669.1L1333.1,675.3M1333.1,664.8L1325.7,657.4M1333.1,664.8L1340.4,657.4M1333.1,664.8L1325.7,672.2M1333.1,664.8L1340.4,672.2M1343.5,664.8L1347.8,660.5L1352.1,664.8L1347.8,669.1ZM1347.8,669.1L1347.8,675.3M1347.8,664.8L1340.4,657.4M1347.8,664.8L1355.2,657.4M1347.8,664.8L1340.4,672.2M1347.8,664.8L1355.2,672.2M1387.8,664.8L1392.1,660.5L1396.4,664.8L1392.1,669.1ZM1396.4,664.8L1402.5,664.8M1392.1,669.1L1392.1,675.3M1392.1,664.8L1384.7,657.4M1392.1,664.8L1399.5,657.4M1392.1,664.8L1384.7,672.2M1392.1,664.8L1399.5,672.2M1402.5,664.8L1406.9,660.5L1411.2,664.8L1406.9,669.1ZM1411.2,664.8L1417.3,664.8M1406.9,669.1L1406.9,675.3M1406.9,664.8L1399.5,657.4M1406.9,664.8L1414.2,657.4M1406.9,664.8L1399.5,672.2M1417.3,664.8L1421.6,660.5L1425.9,664.8L1421.6,669.1ZM1425.9,664.8L1432.1,664.8M1421.6,669.1L1421.6,675.3M1432.1,664.8L1436.4,660.5L1440.7,664.8L1436.4,669.1ZM1440.7,664.8L1446.8,664.8M1436.4,669.1L1436.4,675.3M1446.8,664.8L1451.1,660.5L1455.5,664.8L1451.1,669.1ZM1455.5,664.8L1461.6,664.8M1451.1,669.1L1451.1,675.3M1461.6,664.8L1465.9,660.5L1470.2,664.8L1465.9,669.1ZM1470.2,664.8L1476.3,664.8M1465.9,669.1L1465.9,675.3M1476.3,664.8L1480.7,660.5L1485,664.8L1480.7,669.1ZM1485,664.8L1491.1,664.8M1480.7,669.1L1480.7,675.3M1480.7,664.8L1488,657.4M1480.7,664.8L1473.3,672.2M1480.7,664.8L1488,672.2M1491.1,664.8L1495.4,660.5L1499.7,664.8L1495.4,669.1ZM1495.4,664.8L1488,657.4M1495.4,664.8L1502.8,657.4M1495.4,664.8L1488,672.2M1495.4,664.8L1502.8,672.2M1195.9,679.6L1200.2,675.3L1204.5,679.6L1200.2,683.9ZM1204.5,679.6L1210.7,679.6M1200.2,683.9L1200.2,690M1200.2,679.6L1192.8,672.2M1200.2,679.6L1207.6,672.2M1200.2,679.6L1192.8,687M1200.2,679.6L1207.6,687M1210.7,679.6L1215,675.3L1219.3,679.6L1215,683.9ZM1219.3,679.6L1225.4,679.6M1215,683.9L1215,690M1225.4,679.6L1229.7,675.3L1234.1,679.6L1229.7,683.9ZM1234.1,679.6L1240.2,679.6M1229.7,683.9L1229.7,690M1240.2,679.6L1244.5,675.3L1248.8,679.6L1244.5,683.9ZM1248.8,679.6L1254.9,679.6M1244.5,683.9L1244.5,690M1254.9,679.6L1259.3,675.3L1263.6,679.6L1259.3,683.9ZM1263.6,679.6L1269.7,679.6M1259.3,683.9L1259.3,690M1269.7,679.6L1274,675.3L1278.3,679.6L1274,683.9ZM1274,683.9L1274,690M1274,679.6L1266.6,672.2M1274,679.6L1281.4,672.2M1274,679.6L1266.6,687M1274,679.6L1281.4,687M1328.7,679.6L1333.1,675.3L1337.4,679.6L1333.1,683.9ZM1337.4,679.6L1343.5,679.6M1333.1,679.6L1325.7,672.2M1333.1,679.6L1340.4,672.2M1333.1,679.6L1325.7,687M1333.1,679.6L1340.4,687M1343.5,679.6L1347.8,675.3L1352.1,679.6L1347.8,683.9ZM1352.1,679.6L1358.3,679.6M1347.8,683.9L1347.8,690M1347.8,679.6L1340.4,672.2M1347.8,679.6L1355.2,672.2M1347.8,679.6L1340.4,687M1347.8,679.6L1355.2,687M1358.3,679.6L1362.6,675.3L1366.9,679.6L1362.6,683.9ZM1366.9,679.6L1373,679.6M1362.6,683.9L1362.6,690M1362.6,679.6L1355.2,672.2M1362.6,679.6L1370,672.2M1362.6,679.6L1355.2,687M1362.6,679.6L1370,687M1373,679.6L1377.3,675.3L1381.7,679.6L1377.3,683.9ZM1381.7,679.6L1387.8,679.6M1377.3,683.9L1377.3,690M1377.3,679.6L1370,672.2M1377.3,679.6L1384.7,672.2M1377.3,679.6L1370,687M1377.3,679.6L1384.7,687M1387.8,679.6L1392.1,675.3L1396.4,679.6L1392.1,683.9ZM1396.4,679.6L1402.5,679.6M1392.1,683.9L1392.1,690M1392.1,679.6L1384.7,672.2M1392.1,679.6L1399.5,672.2M1392.1,679.6L1384.7,687M1402.5,679.6L1406.9,675.3L1411.2,679.6L1406.9,683.9ZM1411.2,679.6L1417.3,679.6M1406.9,683.9L1406.9,690M1417.3,679.6L1421.6,675.3L1425.9,679.6L1421.6,683.9ZM1425.9,679.6L1432.1,679.6M1421.6,683.9L1421.6,690M1432.1,679.6L1436.4,675.3L1440.7,679.6L1436.4,683.9ZM1440.7,679.6L1446.8,679.6M1436.4,683.9L1436.4,690M1446.8,679.6L1451.1,675.3L1455.5,679.6L1451.1,683.9ZM1455.5,679.6L1461.6,679.6M1451.1,683.9L1451.1,690M1461.6,679.6L1465.9,675.3L1470.2,679.6L1465.9,683.9ZM1470.2,679.6L1476.3,679.6M1465.9,683.9L1465.9,690M1476.3,679.6L1480.7,675.3L1485,679.6L1480.7,683.9ZM1480.7,683.9L1480.7,690M1480.7,679.6L1473.3,672.2M1480.7,679.6L1488,672.2M1480.7,679.6L1473.3,687M1480.7,679.6L1488,687M1181.1,694.3L1185.5,690L1189.8,694.3L1185.5,698.7ZM1189.8,694.3L1195.9,694.3M1185.5,698.7L1185.5,704.8M1185.5,694.3L1178.1,687M1185.5,694.3L1192.8,687M1185.5,694.3L1178.1,701.7M1185.5,694.3L1192.8,701.7M1195.9,694.3L1200.2,690L1204.5,694.3L1200.2,698.7ZM1204.5,694.3L1210.7,694.3M1200.2,698.7L1200.2,704.8M1200.2,694.3L1192.8,687M1200.2,694.3L1207.6,687M1200.2,694.3L1192.8,701.7M1210.7,694.3L1215,690L1219.3,694.3L1215,698.7ZM1219.3,694.3L1225.4,694.3M1215,698.7L1215,704.8M1225.4,694.3L1229.7,690L1234.1,694.3L1229.7,698.7ZM1234.1,694.3L1240.2,694.3M1229.7,698.7L1229.7,704.8M1240.2,694.3L1244.5,690L1248.8,694.3L1244.5,698.7ZM1248.8,694.3L1254.9,694.3M1244.5,698.7L1244.5,704.8M1254.9,694.3L1259.3,690L1263.6,694.3L1259.3,698.7ZM1263.6,694.3L1269.7,694.3M1259.3,698.7L1259.3,704.8M1269.7,694.3L1274,690L1278.3,694.3L1274,698.7ZM1274,698.7L1274,704.8M1274,694.3L1266.6,687M1274,694.3L1281.4,687M1274,694.3L1266.6,701.7M1274,694.3L1281.4,701.7M1343.5,694.3L1347.8,690L1352.1,694.3L1347.8,698.7ZM1352.1,694.3L1358.3,694.3M1347.8,698.7L1347.8,704.8M1347.8,694.3L1340.4,687M1347.8,694.3L1355.2,687M1347.8,694.3L1340.4,701.7M1347.8,694.3L1355.2,701.7M1358.3,694.3L1362.6,690L1366.9,694.3L1362.6,698.7ZM1366.9,694.3L1373,694.3M1362.6,698.7L1362.6,704.8M1373,694.3L1377.3,690L1381.7,694.3L1377.3,698.7ZM1381.7,694.3L1387.8,694.3M1377.3,698.7L1377.3,704.8M1387.8,694.3L1392.1,690L1396.4,694.3L1392.1,698.7ZM1396.4,694.3L1402.5,694.3M1392.1,698.7L1392.1,704.8M1402.5,694.3L1406.9,690L1411.2,694.3L1406.9,698.7ZM1411.2,694.3L1417.3,694.3M1406.9,698.7L1406.9,704.8M1417.3,694.3L1421.6,690L1425.9,694.3L1421.6,698.7ZM1425.9,694.3L1432.1,694.3M1421.6,698.7L1421.6,704.8M1432.1,694.3L1436.4,690L1440.7,694.3L1436.4,698.7ZM1440.7,694.3L1446.8,694.3M1436.4,698.7L1436.4,704.8M1446.8,694.3L1451.1,690L1455.5,694.3L1451.1,698.7ZM1455.5,694.3L1461.6,694.3M1451.1,698.7L1451.1,704.8M1461.6,694.3L1465.9,690L1470.2,694.3L1465.9,698.7ZM1470.2,694.3L1476.3,694.3M1465.9,698.7L1465.9,704.8M1476.3,694.3L1480.7,690L1485,694.3L1480.7,698.7ZM1480.7,698.7L1480.7,704.8M1480.7,694.3L1473.3,687M1480.7,694.3L1488,687M1480.7,694.3L1473.3,701.7M1480.7,694.3L1488,701.7M1181.1,709.1L1185.5,704.8L1189.8,709.1L1185.5,713.4ZM1189.8,709.1L1195.9,709.1M1185.5,713.4L1185.5,719.5M1185.5,709.1L1178.1,701.7M1185.5,709.1L1192.8,701.7M1185.5,709.1L1178.1,716.5M1185.5,709.1L1192.8,716.5M1195.9,709.1L1200.2,704.8L1204.5,709.1L1200.2,713.4ZM1204.5,709.1L1210.7,709.1M1200.2,713.4L1200.2,719.5M1210.7,709.1L1215,704.8L1219.3,709.1L1215,713.4ZM1219.3,709.1L1225.4,709.1M1215,713.4L1215,719.5M1225.4,709.1L1229.7,704.8L1234.1,709.1L1229.7,713.4ZM1234.1,709.1L1240.2,709.1M1229.7,713.4L1229.7,719.5M1240.2,709.1L1244.5,704.8L1248.8,709.1L1244.5,713.4ZM1248.8,709.1L1254.9,709.1M1244.5,713.4L1244.5,719.5M1254.9,709.1L1259.3,704.8L1263.6,709.1L1259.3,713.4ZM1263.6,709.1L1269.7,709.1M1259.3,713.4L1259.3,719.5M1259.3,709.1L1266.6,701.7M1259.3,709.1L1251.9,716.5M1259.3,709.1L1266.6,716.5M1269.7,709.1L1274,704.8L1278.3,709.1L1274,713.4ZM1274,709.1L1266.6,701.7M1274,709.1L1281.4,701.7M1274,709.1L1266.6,716.5M1274,709.1L1281.4,716.5M1343.5,709.1L1347.8,704.8L1352.1,709.1L1347.8,713.4ZM1352.1,709.1L1358.3,709.1M1347.8,713.4L1347.8,719.5M1347.8,709.1L1340.4,701.7M1347.8,709.1L1355.2,701.7M1347.8,709.1L1340.4,716.5M1347.8,709.1L1355.2,716.5M1358.3,709.1L1362.6,704.8L1366.9,709.1L1362.6,713.4ZM1366.9,709.1L1373,709.1M1362.6,713.4L1362.6,719.5M1373,709.1L1377.3,704.8L1381.7,709.1L1377.3,713.4ZM1381.7,709.1L1387.8,709.1M1377.3,713.4L1377.3,719.5M1387.8,709.1L1392.1,704.8L1396.4,709.1L1392.1,713.4ZM1396.4,709.1L1402.5,709.1M1392.1,713.4L1392.1,719.5M1402.5,709.1L1406.9,704.8L1411.2,709.1L1406.9,713.4ZM1411.2,709.1L1417.3,709.1M1406.9,713.4L1406.9,719.5M1417.3,709.1L1421.6,704.8L1425.9,709.1L1421.6,713.4ZM1425.9,709.1L1432.1,709.1M1421.6,713.4L1421.6,719.5M1432.1,709.1L1436.4,704.8L1440.7,709.1L1436.4,713.4ZM1440.7,709.1L1446.8,709.1M1436.4,713.4L1436.4,719.5M1446.8,709.1L1451.1,704.8L1455.5,709.1L1451.1,713.4ZM1455.5,709.1L1461.6,709.1M1451.1,713.4L1451.1,719.5M1461.6,709.1L1465.9,704.8L1470.2,709.1L1465.9,713.4ZM1470.2,709.1L1476.3,709.1M1465.9,713.4L1465.9,719.5M1476.3,709.1L1480.7,704.8L1485,709.1L1480.7,713.4ZM1480.7,713.4L1480.7,719.5M1480.7,709.1L1473.3,701.7M1480.7,709.1L1488,701.7M1480.7,709.1L1473.3,716.5M1480.7,709.1L1488,716.5M1550.1,709.1L1554.5,704.8L1558.8,709.1L1554.5,713.4ZM1558.8,709.1L1564.9,709.1M1554.5,713.4L1554.5,719.5M1554.5,709.1L1547.1,701.7M1554.5,709.1L1561.8,701.7M1554.5,709.1L1547.1,716.5M1554.5,709.1L1561.8,716.5M1564.9,709.1L1569.2,704.8L1573.5,709.1L1569.2,713.4ZM1569.2,713.4L1569.2,719.5M1573.5,709.1L1575.4,709.1M1569.2,709.1L1561.8,701.7M1569.2,709.1L1576.6,701.7M1569.2,709.1L1561.8,716.5M1569.2,709.1L1576.6,716.5M1181.1,723.9L1185.5,719.5L1189.8,723.9L1185.5,728.2ZM1189.8,723.9L1195.9,723.9M1185.5,723.9L1178.1,716.5M1185.5,723.9L1192.8,716.5M1185.5,723.9L1178.1,731.2M1185.5,723.9L1192.8,731.2M1195.9,723.9L1200.2,719.5L1204.5,723.9L1200.2,728.2ZM1204.5,723.9L1210.7,723.9M1200.2,728.2L1200.2,734.3M1200.2,723.9L1192.8,716.5M1200.2,723.9L1192.8,731.2M1200.2,723.9L1207.6,731.2M1210.7,723.9L1215,719.5L1219.3,723.9L1215,728.2ZM1219.3,723.9L1225.4,723.9M1215,728.2L1215,734.3M1225.4,723.9L1229.7,719.5L1234.1,723.9L1229.7,728.2ZM1234.1,723.9L1240.2,723.9M1229.7,728.2L1229.7,734.3M1240.2,723.9L1244.5,719.5L1248.8,723.9L1244.5,728.2ZM1248.8,723.9L1254.9,723.9M1244.5,728.2L1244.5,734.3M1254.9,723.9L1259.3,719.5L1263.6,723.9L1259.3,728.2ZM1259.3,728.2L1259.3,734.3M1259.3,723.9L1251.9,716.5M1259.3,723.9L1266.6,716.5M1259.3,723.9L1251.9,731.2M1259.3,723.9L1266.6,731.2M1343.5,723.9L1347.8,719.5L1352.1,723.9L1347.8,728.2ZM1352.1,723.9L1358.3,723.9M1347.8,728.2L1347.8,734.3M1347.8,723.9L1340.4,716.5M1347.8,723.9L1355.2,716.5M1347.8,723.9L1340.4,731.2M1347.8,723.9L1355.2,731.2M1358.3,723.9L1362.6,719.5L1366.9,723.9L1362.6,728.2ZM1366.9,723.9L1373,723.9M1362.6,728.2L1362.6,734.3M1362.6,723.9L1355.2,716.5M1362.6,723.9L1370,716.5M1362.6,723.9L1355.2,731.2M1362.6,723.9L1370,731.2M1373,723.9L1377.3,719.5L1381.7,723.9L1377.3,728.2ZM1381.7,723.9L1387.8,723.9M1377.3,723.9L1370,716.5M1377.3,723.9L1384.7,716.5M1377.3,723.9L1370,731.2M1377.3,723.9L1384.7,731.2M1387.8,723.9L1392.1,719.5L1396.4,723.9L1392.1,728.2ZM1396.4,723.9L1402.5,723.9M1392.1,723.9L1384.7,716.5M1392.1,723.9L1399.5,716.5M1392.1,723.9L1384.7,731.2M1392.1,723.9L1399.5,731.2M1402.5,723.9L1406.9,719.5L1411.2,723.9L1406.9,728.2ZM1411.2,723.9L1417.3,723.9M1406.9,723.9L1399.5,716.5M1406.9,723.9L1414.2,716.5M1406.9,723.9L1399.5,731.2M1406.9,723.9L1414.2,731.2M1417.3,723.9L1421.6,719.5L1425.9,723.9L1421.6,728.2ZM1425.9,723.9L1432.1,723.9M1421.6,723.9L1414.2,716.5M1421.6,723.9L1429,716.5M1421.6,723.9L1414.2,731.2M1421.6,723.9L1429,731.2M1432.1,723.9L1436.4,719.5L1440.7,723.9L1436.4,728.2ZM1440.7,723.9L1446.8,723.9M1436.4,728.2L1436.4,734.3M1436.4,723.9L1429,716.5M1436.4,723.9L1429,731.2M1436.4,723.9L1443.8,731.2M1446.8,723.9L1451.1,719.5L1455.5,723.9L1451.1,728.2ZM1455.5,723.9L1461.6,723.9M1451.1,728.2L1451.1,734.3M1461.6,723.9L1465.9,719.5L1470.2,723.9L1465.9,728.2ZM1470.2,723.9L1476.3,723.9M1465.9,728.2L1465.9,734.3M1476.3,723.9L1480.7,719.5L1485,723.9L1480.7,728.2ZM1480.7,728.2L1480.7,734.3M1480.7,723.9L1473.3,716.5M1480.7,723.9L1488,716.5M1480.7,723.9L1473.3,731.2M1480.7,723.9L1488,731.2M1535.4,723.9L1539.7,719.5L1544,723.9L1539.7,728.2ZM1544,723.9L1550.1,723.9M1539.7,728.2L1539.7,734.3M1539.7,723.9L1532.3,716.5M1539.7,723.9L1547.1,716.5M1539.7,723.9L1532.3,731.2M1539.7,723.9L1547.1,731.2M1550.1,723.9L1554.5,719.5L1558.8,723.9L1554.5,728.2ZM1558.8,723.9L1564.9,723.9M1554.5,728.2L1554.5,734.3M1554.5,723.9L1547.1,716.5M1554.5,723.9L1561.8,716.5M1554.5,723.9L1547.1,731.2M1564.9,723.9L1569.2,719.5L1573.5,723.9L1569.2,728.2ZM1569.2,728.2L1569.2,734.3M1573.5,723.9L1575.4,723.9M1195.9,738.6L1200.2,734.3L1204.5,738.6L1200.2,742.9ZM1204.5,738.6L1210.7,738.6M1200.2,738.6L1192.8,731.2M1200.2,738.6L1207.6,731.2M1200.2,738.6L1192.8,746M1200.2,738.6L1207.6,746M1210.7,738.6L1215,734.3L1219.3,738.6L1215,742.9ZM1219.3,738.6L1225.4,738.6M1215,738.6L1207.6,731.2M1215,738.6L1222.4,731.2M1215,738.6L1207.6,746M1215,738.6L1222.4,746M1225.4,738.6L1229.7,734.3L1234.1,738.6L1229.7,742.9ZM1234.1,738.6L1240.2,738.6M1229.7,742.9L1229.7,749.1M1229.7,738.6L1222.4,731.2M1229.7,738.6L1237.1,731.2M1229.7,738.6L1222.4,746M1229.7,738.6L1237.1,746M1240.2,738.6L1244.5,734.3L1248.8,738.6L1244.5,742.9ZM1248.8,738.6L1254.9,738.6M1244.5,742.9L1244.5,749.1M1244.5,738.6L1237.1,731.2M1244.5,738.6L1251.9,731.2M1244.5,738.6L1237.1,746M1244.5,738.6L1251.9,746M1254.9,738.6L1259.3,734.3L1263.6,738.6L1259.3,742.9ZM1259.3,738.6L1251.9,731.2M1259.3,738.6L1266.6,731.2M1259.3,738.6L1251.9,746M1259.3,738.6L1266.6,746M1328.7,738.6L1333.1,734.3L1337.4,738.6L1333.1,742.9ZM1337.4,738.6L1343.5,738.6M1333.1,738.6L1325.7,731.2M1333.1,738.6L1340.4,731.2M1333.1,738.6L1325.7,746M1333.1,738.6L1340.4,746M1343.5,738.6L1347.8,734.3L1352.1,738.6L1347.8,742.9ZM1352.1,738.6L1358.3,738.6M1347.8,738.6L1340.4,731.2M1347.8,738.6L1355.2,731.2M1347.8,738.6L1340.4,746M1347.8,738.6L1355.2,746M1358.3,738.6L1362.6,734.3L1366.9,738.6L1362.6,742.9ZM1362.6,738.6L1355.2,731.2M1362.6,738.6L1370,731.2M1362.6,738.6L1355.2,746M1362.6,738.6L1370,746M1432.1,738.6L1436.4,734.3L1440.7,738.6L1436.4,742.9ZM1440.7,738.6L1446.8,738.6M1436.4,738.6L1429,731.2M1436.4,738.6L1443.8,731.2M1436.4,738.6L1429,746M1436.4,738.6L1443.8,746M1446.8,738.6L1451.1,734.3L1455.5,738.6L1451.1,742.9ZM1455.5,738.6L1461.6,738.6M1451.1,742.9L1451.1,749.1M1451.1,738.6L1443.8,731.2M1451.1,738.6L1443.8,746M1451.1,738.6L1458.5,746M1461.6,738.6L1465.9,734.3L1470.2,738.6L1465.9,742.9ZM1470.2,738.6L1476.3,738.6M1465.9,742.9L1465.9,749.1M1476.3,738.6L1480.7,734.3L1485,738.6L1480.7,742.9ZM1485,738.6L1491.1,738.6M1480.7,742.9L1480.7,749.1M1480.7,738.6L1473.3,731.2M1480.7,738.6L1488,731.2M1480.7,738.6L1488,746M1491.1,738.6L1495.4,734.3L1499.7,738.6L1495.4,742.9ZM1495.4,742.9L1495.4,749.1M1495.4,738.6L1488,731.2M1495.4,738.6L1502.8,731.2M1495.4,738.6L1488,746M1495.4,738.6L1502.8,746M1520.6,738.6L1524.9,734.3L1529.3,738.6L1524.9,742.9ZM1529.3,738.6L1535.4,738.6M1524.9,742.9L1524.9,749.1M1524.9,738.6L1517.6,731.2M1524.9,738.6L1532.3,731.2M1524.9,738.6L1517.6,746M1524.9,738.6L1532.3,746M1535.4,738.6L1539.7,734.3L1544,738.6L1539.7,742.9ZM1544,738.6L1550.1,738.6M1539.7,742.9L1539.7,749.1M1539.7,738.6L1532.3,731.2M1539.7,738.6L1547.1,731.2M1539.7,738.6L1532.3,746M1539.7,738.6L1547.1,746M1550.1,738.6L1554.5,734.3L1558.8,738.6L1554.5,742.9ZM1558.8,738.6L1564.9,738.6M1554.5,742.9L1554.5,749.1M1564.9,738.6L1569.2,734.3L1573.5,738.6L1569.2,742.9ZM1569.2,742.9L1569.2,749.1M1573.5,738.6L1575.4,738.6M1225.4,753.4L1229.7,749.1L1234.1,753.4L1229.7,757.7ZM1234.1,753.4L1240.2,753.4M1229.7,753.4L1222.4,746M1229.7,753.4L1237.1,746M1229.7,753.4L1222.4,760.8M1229.7,753.4L1237.1,760.8M1240.2,753.4L1244.5,749.1L1248.8,753.4L1244.5,757.7ZM1244.5,757.7L1244.5,763.8M1244.5,753.4L1237.1,746M1244.5,753.4L1251.9,746M1244.5,753.4L1237.1,760.8M1244.5,753.4L1251.9,760.8M1299.2,753.4L1303.5,749.1L1307.9,753.4L1303.5,757.7ZM1303.5,757.7L1303.5,763.8M1303.5,753.4L1296.2,746M1303.5,753.4L1310.9,746M1303.5,753.4L1296.2,760.8M1303.5,753.4L1310.9,760.8M1446.8,753.4L1451.1,749.1L1455.5,753.4L1451.1,757.7ZM1455.5,753.4L1461.6,753.4M1451.1,757.7L1451.1,763.8M1451.1,753.4L1443.8,746M1451.1,753.4L1458.5,746M1451.1,753.4L1443.8,760.8M1451.1,753.4L1458.5,760.8M1461.6,753.4L1465.9,749.1L1470.2,753.4L1465.9,757.7ZM1470.2,753.4L1476.3,753.4M1465.9,757.7L1465.9,763.8M1476.3,753.4L1480.7,749.1L1485,753.4L1480.7,757.7ZM1485,753.4L1491.1,753.4M1480.7,757.7L1480.7,763.8M1491.1,753.4L1495.4,749.1L1499.7,753.4L1495.4,757.7ZM1499.7,753.4L1505.9,753.4M1495.4,757.7L1495.4,763.8M1495.4,753.4L1488,746M1495.4,753.4L1502.8,746M1495.4,753.4L1488,760.8M1495.4,753.4L1502.8,760.8M1505.9,753.4L1510.2,749.1L1514.5,753.4L1510.2,757.7ZM1514.5,753.4L1520.6,753.4M1510.2,757.7L1510.2,763.8M1510.2,753.4L1502.8,746M1510.2,753.4L1517.6,746M1510.2,753.4L1502.8,760.8M1510.2,753.4L1517.6,760.8M1520.6,753.4L1524.9,749.1L1529.3,753.4L1524.9,757.7ZM1529.3,753.4L1535.4,753.4M1524.9,757.7L1524.9,763.8M1524.9,753.4L1517.6,746M1524.9,753.4L1532.3,746M1524.9,753.4L1517.6,760.8M1524.9,753.4L1532.3,760.8M1535.4,753.4L1539.7,749.1L1544,753.4L1539.7,757.7ZM1544,753.4L1550.1,753.4M1539.7,757.7L1539.7,763.8M1539.7,753.4L1532.3,746M1539.7,753.4L1547.1,746M1539.7,753.4L1532.3,760.8M1539.7,753.4L1547.1,760.8M1550.1,753.4L1554.5,749.1L1558.8,753.4L1554.5,757.7ZM1558.8,753.4L1564.9,753.4M1554.5,753.4L1547.1,746M1554.5,753.4L1561.8,746M1554.5,753.4L1547.1,760.8M1554.5,753.4L1561.8,760.8M1564.9,753.4L1569.2,749.1L1573.5,753.4L1569.2,757.7ZM1573.5,753.4L1575.4,753.4M1569.2,753.4L1561.8,746M1569.2,753.4L1576.6,746M1569.2,753.4L1561.8,760.8M1569.2,753.4L1576.6,760.8M1240.2,768.1L1244.5,763.8L1248.8,768.1L1244.5,772.5ZM1244.5,768.1L1237.1,760.8M1244.5,768.1L1251.9,760.8M1244.5,768.1L1237.1,775.5M1244.5,768.1L1251.9,775.5M1299.2,768.1L1303.5,763.8L1307.9,768.1L1303.5,772.5ZM1303.5,768.1L1296.2,760.8M1303.5,768.1L1310.9,760.8M1303.5,768.1L1296.2,775.5M1303.5,768.1L1310.9,775.5M1446.8,768.1L1451.1,763.8L1455.5,768.1L1451.1,772.5ZM1455.5,768.1L1461.6,768.1M1451.1,772.5L1451.1,778.6M1451.1,768.1L1443.8,760.8M1451.1,768.1L1458.5,760.8M1451.1,768.1L1443.8,775.5M1451.1,768.1L1458.5,775.5M1461.6,768.1L1465.9,763.8L1470.2,768.1L1465.9,772.5ZM1470.2,768.1L1476.3,768.1M1465.9,772.5L1465.9,778.6M1476.3,768.1L1480.7,763.8L1485,768.1L1480.7,772.5ZM1485,768.1L1491.1,768.1M1480.7,772.5L1480.7,778.6M1480.7,768.1L1488,760.8M1480.7,768.1L1473.3,775.5M1480.7,768.1L1488,775.5M1491.1,768.1L1495.4,763.8L1499.7,768.1L1495.4,772.5ZM1499.7,768.1L1505.9,768.1M1495.4,768.1L1488,760.8M1495.4,768.1L1502.8,760.8M1495.4,768.1L1488,775.5M1495.4,768.1L1502.8,775.5M1505.9,768.1L1510.2,763.8L1514.5,768.1L1510.2,772.5ZM1514.5,768.1L1520.6,768.1M1510.2,772.5L1510.2,778.6M1510.2,768.1L1502.8,760.8M1510.2,768.1L1517.6,760.8M1510.2,768.1L1502.8,775.5M1510.2,768.1L1517.6,775.5M1520.6,768.1L1524.9,763.8L1529.3,768.1L1524.9,772.5ZM1529.3,768.1L1535.4,768.1M1524.9,768.1L1517.6,760.8M1524.9,768.1L1532.3,760.8M1524.9,768.1L1517.6,775.5M1524.9,768.1L1532.3,775.5M1535.4,768.1L1539.7,763.8L1544,768.1L1539.7,772.5ZM1539.7,768.1L1532.3,760.8M1539.7,768.1L1547.1,760.8M1539.7,768.1L1532.3,775.5M1539.7,768.1L1547.1,775.5M1314,782.9L1318.3,778.6L1322.6,782.9L1318.3,787.2ZM1322.6,782.9L1328.7,782.9M1318.3,787.2L1318.3,793.3M1318.3,782.9L1310.9,775.5M1318.3,782.9L1325.7,775.5M1318.3,782.9L1310.9,790.3M1318.3,782.9L1325.7,790.3M1328.7,782.9L1333.1,778.6L1337.4,782.9L1333.1,787.2ZM1333.1,787.2L1333.1,793.3M1333.1,782.9L1325.7,775.5M1333.1,782.9L1340.4,775.5M1333.1,782.9L1325.7,790.3M1333.1,782.9L1340.4,790.3M1446.8,782.9L1451.1,778.6L1455.5,782.9L1451.1,787.2ZM1455.5,782.9L1461.6,782.9M1451.1,782.9L1443.8,775.5M1451.1,782.9L1458.5,775.5M1451.1,782.9L1443.8,790.3M1451.1,782.9L1458.5,790.3M1461.6,782.9L1465.9,778.6L1470.2,782.9L1465.9,787.2ZM1470.2,782.9L1476.3,782.9M1465.9,787.2L1465.9,793.3M1465.9,782.9L1458.5,775.5M1465.9,782.9L1473.3,775.5M1465.9,782.9L1458.5,790.3M1465.9,782.9L1473.3,790.3M1476.3,782.9L1480.7,778.6L1485,782.9L1480.7,787.2ZM1480.7,787.2L1480.7,793.3M1480.7,782.9L1473.3,775.5M1480.7,782.9L1488,775.5M1480.7,782.9L1473.3,790.3M1480.7,782.9L1488,790.3M1505.9,782.9L1510.2,778.6L1514.5,782.9L1510.2,787.2ZM1510.2,782.9L1502.8,775.5M1510.2,782.9L1517.6,775.5M1510.2,782.9L1502.8,790.3M1510.2,782.9L1517.6,790.3M1314,797.7L1318.3,793.3L1322.6,797.7L1318.3,802ZM1322.6,797.7L1328.7,797.7M1318.3,802L1318.3,808.1M1318.3,797.7L1310.9,790.3M1318.3,797.7L1325.7,790.3M1318.3,797.7L1310.9,805M1318.3,797.7L1325.7,805M1328.7,797.7L1333.1,793.3L1337.4,797.7L1333.1,802ZM1337.4,797.7L1343.5,797.7M1333.1,802L1333.1,808.1M1333.1,797.7L1325.7,790.3M1333.1,797.7L1340.4,790.3M1333.1,797.7L1325.7,805M1333.1,797.7L1340.4,805M1343.5,797.7L1347.8,793.3L1352.1,797.7L1347.8,802ZM1352.1,797.7L1358.3,797.7M1347.8,802L1347.8,808.1M1347.8,797.7L1340.4,790.3M1347.8,797.7L1355.2,790.3M1347.8,797.7L1340.4,805M1347.8,797.7L1355.2,805M1358.3,797.7L1362.6,793.3L1366.9,797.7L1362.6,802ZM1362.6,802L1362.6,808.1M1362.6,797.7L1355.2,790.3M1362.6,797.7L1370,790.3M1362.6,797.7L1355.2,805M1362.6,797.7L1370,805M1461.6,797.7L1465.9,793.3L1470.2,797.7L1465.9,802ZM1470.2,797.7L1476.3,797.7M1465.9,802L1465.9,808.1M1465.9,797.7L1458.5,790.3M1465.9,797.7L1473.3,790.3M1465.9,797.7L1458.5,805M1465.9,797.7L1473.3,805M1476.3,797.7L1480.7,793.3L1485,797.7L1480.7,802ZM1485,797.7L1491.1,797.7M1480.7,802L1480.7,808.1M1480.7,797.7L1473.3,790.3M1480.7,797.7L1488,790.3M1480.7,797.7L1473.3,805M1480.7,797.7L1488,805M1491.1,797.7L1495.4,793.3L1499.7,797.7L1495.4,802ZM1495.4,797.7L1488,790.3M1495.4,797.7L1502.8,790.3M1495.4,797.7L1488,805M1495.4,797.7L1502.8,805M1314,812.4L1318.3,808.1L1322.6,812.4L1318.3,816.7ZM1322.6,812.4L1328.7,812.4M1318.3,812.4L1310.9,805M1318.3,812.4L1325.7,805M1318.3,812.4L1310.9,819.8M1318.3,812.4L1325.7,819.8M1328.7,812.4L1333.1,808.1L1337.4,812.4L1333.1,816.7ZM1337.4,812.4L1343.5,812.4M1333.1,812.4L1325.7,805M1333.1,812.4L1340.4,805M1333.1,812.4L1325.7,819.8M1333.1,812.4L1340.4,819.8M1343.5,812.4L1347.8,808.1L1352.1,812.4L1347.8,816.7ZM1352.1,812.4L1358.3,812.4M1347.8,816.7L1347.8,822.9M1347.8,812.4L1340.4,805M1347.8,812.4L1355.2,805M1347.8,812.4L1340.4,819.8M1347.8,812.4L1355.2,819.8M1358.3,812.4L1362.6,808.1L1366.9,812.4L1362.6,816.7ZM1362.6,816.7L1362.6,822.9M1362.6,812.4L1355.2,805M1362.6,812.4L1370,805M1362.6,812.4L1355.2,819.8M1362.6,812.4L1370,819.8M1417.3,812.4L1421.6,808.1L1425.9,812.4L1421.6,816.7ZM1421.6,816.7L1421.6,822.9M1421.6,812.4L1414.2,805M1421.6,812.4L1429,805M1421.6,812.4L1414.2,819.8M1421.6,812.4L1429,819.8M1461.6,812.4L1465.9,808.1L1470.2,812.4L1465.9,816.7ZM1470.2,812.4L1476.3,812.4M1465.9,816.7L1465.9,822.9M1465.9,812.4L1458.5,805M1465.9,812.4L1473.3,805M1465.9,812.4L1458.5,819.8M1465.9,812.4L1473.3,819.8M1476.3,812.4L1480.7,808.1L1485,812.4L1480.7,816.7ZM1480.7,816.7L1480.7,822.9M1480.7,812.4L1473.3,805M1480.7,812.4L1488,805M1480.7,812.4L1473.3,819.8M1480.7,812.4L1488,819.8M1535.4,812.4L1539.7,808.1L1544,812.4L1539.7,816.7ZM1539.7,812.4L1532.3,805M1539.7,812.4L1547.1,805M1539.7,812.4L1532.3,819.8M1539.7,812.4L1547.1,819.8M1343.5,827.2L1347.8,822.9L1352.1,827.2L1347.8,831.5ZM1352.1,827.2L1358.3,827.2M1347.8,827.2L1340.4,819.8M1347.8,827.2L1355.2,819.8M1347.8,827.2L1340.4,834.6M1347.8,827.2L1355.2,834.6M1358.3,827.2L1362.6,822.9L1366.9,827.2L1362.6,831.5ZM1362.6,827.2L1355.2,819.8M1362.6,827.2L1370,819.8M1362.6,827.2L1355.2,834.6M1362.6,827.2L1370,834.6M1417.3,827.2L1421.6,822.9L1425.9,827.2L1421.6,831.5ZM1421.6,827.2L1414.2,819.8M1421.6,827.2L1429,819.8M1421.6,827.2L1414.2,834.6M1421.6,827.2L1429,834.6M1461.6,827.2L1465.9,822.9L1470.2,827.2L1465.9,831.5ZM1470.2,827.2L1476.3,827.2M1465.9,831.5L1465.9,837.6M1465.9,827.2L1458.5,819.8M1465.9,827.2L1473.3,819.8M1465.9,827.2L1458.5,834.6M1465.9,827.2L1473.3,834.6M1476.3,827.2L1480.7,822.9L1485,827.2L1480.7,831.5ZM1485,827.2L1491.1,827.2M1480.7,831.5L1480.7,837.6M1480.7,827.2L1473.3,819.8M1480.7,827.2L1488,819.8M1480.7,827.2L1473.3,834.6M1480.7,827.2L1488,834.6M1491.1,827.2L1495.4,822.9L1499.7,827.2L1495.4,831.5ZM1499.7,827.2L1505.9,827.2M1495.4,831.5L1495.4,837.6M1495.4,827.2L1488,819.8M1495.4,827.2L1502.8,819.8M1495.4,827.2L1488,834.6M1495.4,827.2L1502.8,834.6M1505.9,827.2L1510.2,822.9L1514.5,827.2L1510.2,831.5ZM1514.5,827.2L1520.6,827.2M1510.2,831.5L1510.2,837.6M1510.2,827.2L1502.8,819.8M1510.2,827.2L1517.6,819.8M1510.2,827.2L1502.8,834.6M1510.2,827.2L1517.6,834.6M1520.6,827.2L1524.9,822.9L1529.3,827.2L1524.9,831.5ZM1524.9,831.5L1524.9,837.6M1524.9,827.2L1517.6,819.8M1524.9,827.2L1532.3,819.8M1524.9,827.2L1517.6,834.6M1524.9,827.2L1532.3,834.6M1461.6,841.9L1465.9,837.6L1470.2,841.9L1465.9,846.3ZM1470.2,841.9L1476.3,841.9M1465.9,841.9L1458.5,834.6M1465.9,841.9L1473.3,834.6M1465.9,841.9L1458.5,849.3M1465.9,841.9L1473.3,849.3M1476.3,841.9L1480.7,837.6L1485,841.9L1480.7,846.3ZM1485,841.9L1491.1,841.9M1480.7,846.3L1480.7,852.4M1480.7,841.9L1473.3,834.6M1480.7,841.9L1488,834.6M1480.7,841.9L1473.3,849.3M1480.7,841.9L1488,849.3M1491.1,841.9L1495.4,837.6L1499.7,841.9L1495.4,846.3ZM1499.7,841.9L1505.9,841.9M1495.4,846.3L1495.4,852.4M1505.9,841.9L1510.2,837.6L1514.5,841.9L1510.2,846.3ZM1514.5,841.9L1520.6,841.9M1510.2,846.3L1510.2,852.4M1520.6,841.9L1524.9,837.6L1529.3,841.9L1524.9,846.3ZM1524.9,846.3L1524.9,852.4M1524.9,841.9L1517.6,834.6M1524.9,841.9L1532.3,834.6M1524.9,841.9L1517.6,849.3M1524.9,841.9L1532.3,849.3M1476.3,856.7L1480.7,852.4L1485,856.7L1480.7,861ZM1485,856.7L1491.1,856.7M1480.7,856.7L1473.3,849.3M1480.7,856.7L1488,849.3M1480.7,856.7L1473.3,864.1M1480.7,856.7L1488,864.1M1491.1,856.7L1495.4,852.4L1499.7,856.7L1495.4,861ZM1499.7,856.7L1505.9,856.7M1495.4,861L1495.4,867.1M1495.4,856.7L1488,849.3M1495.4,856.7L1488,864.1M1495.4,856.7L1502.8,864.1M1505.9,856.7L1510.2,852.4L1514.5,856.7L1510.2,861ZM1514.5,856.7L1520.6,856.7M1510.2,861L1510.2,867.1M1520.6,856.7L1524.9,852.4L1529.3,856.7L1524.9,861ZM1524.9,861L1524.9,867.1M1524.9,856.7L1517.6,849.3M1524.9,856.7L1532.3,849.3M1524.9,856.7L1517.6,864.1M1524.9,856.7L1532.3,864.1M1491.1,871.5L1495.4,867.1L1499.7,871.5L1495.4,875.8ZM1499.7,871.5L1505.9,871.5M1495.4,875.8L1495.4,881.9M1495.4,871.5L1488,864.1M1495.4,871.5L1502.8,864.1M1495.4,871.5L1488,878.8M1495.4,871.5L1502.8,878.8M1505.9,871.5L1510.2,867.1L1514.5,871.5L1510.2,875.8ZM1514.5,871.5L1520.6,871.5M1510.2,875.8L1510.2,881.9M1520.6,871.5L1524.9,867.1L1529.3,871.5L1524.9,875.8ZM1524.9,875.8L1524.9,881.9M1524.9,871.5L1517.6,864.1M1524.9,871.5L1532.3,864.1M1524.9,871.5L1517.6,878.8M1524.9,871.5L1532.3,878.8M1550.1,871.5L1554.5,867.1L1558.8,871.5L1554.5,875.8ZM1558.8,871.5L1564.9,871.5M1554.5,875.8L1554.5,881.9M1554.5,871.5L1547.1,864.1M1554.5,871.5L1561.8,864.1M1554.5,871.5L1547.1,878.8M1554.5,871.5L1561.8,878.8M1564.9,871.5L1569.2,867.1L1573.5,871.5L1569.2,875.8ZM1569.2,875.8L1569.2,881.9M1573.5,871.5L1575.4,871.5M1569.2,871.5L1561.8,864.1M1569.2,871.5L1576.6,864.1M1569.2,871.5L1561.8,878.8M1569.2,871.5L1576.6,878.8M1491.1,886.2L1495.4,881.9L1499.7,886.2L1495.4,890.5ZM1499.7,886.2L1505.9,886.2M1495.4,890.5L1495.4,892.4M1495.4,886.2L1488,878.8M1495.4,886.2L1502.8,878.8M1495.4,886.2L1488,893.6M1495.4,886.2L1502.8,893.6M1505.9,886.2L1510.2,881.9L1514.5,886.2L1510.2,890.5ZM1514.5,886.2L1520.6,886.2M1510.2,890.5L1510.2,892.4M1520.6,886.2L1524.9,881.9L1529.3,886.2L1524.9,890.5ZM1529.3,886.2L1535.4,886.2M1524.9,890.5L1524.9,892.4M1524.9,886.2L1517.6,878.8M1524.9,886.2L1532.3,878.8M1524.9,886.2L1517.6,893.6M1524.9,886.2L1532.3,893.6M1535.4,886.2L1539.7,881.9L1544,886.2L1539.7,890.5ZM1544,886.2L1550.1,886.2M1539.7,890.5L1539.7,892.4M1539.7,886.2L1532.3,878.8M1539.7,886.2L1547.1,878.8M1539.7,886.2L1532.3,893.6M1539.7,886.2L1547.1,893.6M1550.1,886.2L1554.5,881.9L1558.8,886.2L1554.5,890.5ZM1558.8,886.2L1564.9,886.2M1554.5,890.5L1554.5,892.4M1554.5,886.2L1547.1,878.8M1554.5,886.2L1561.8,878.8M1554.5,886.2L1547.1,893.6M1554.5,886.2L1561.8,893.6M1564.9,886.2L1569.2,881.9L1573.5,886.2L1569.2,890.5ZM1573.5,886.2L1575.4,886.2M1569.2,890.5L1569.2,892.4" stroke="#04301f" stroke-opacity="0.75" stroke-width="0.9" fill="none"/>
<path d="M838.6,229.4V893.6M853.4,229.4V893.6M868.1,258.9V893.6M882.9,258.9V893.6M897.6,155.6V244.2M897.6,258.9V893.6M912.4,155.6V893.6M927.2,155.6V893.6M941.9,155.6V893.6M956.7,155.6V893.6M971.4,155.6V893.6M986.2,155.6V377M986.2,421.3V893.6M1001,155.6V199.9M1001,214.6V273.7M1001,288.4V362.2M1001,436V893.6M1015.7,436V893.6M1030.5,450.8V893.6M1045.2,303.2V347.5M1045.2,377V421.3M1045.2,450.8V893.6M1060,288.4V893.6M1074.8,273.7V893.6M1089.5,185.1V229.4M1089.5,273.7V893.6M1104.3,185.1V893.6M1119,214.6V273.7M1119,318V893.6M1133.8,214.6V258.9M1133.8,318V893.6M1148.6,332.7V893.6M1163.3,362.2V436M1163.3,450.8V893.6M1178.1,377V436M1178.1,480.3V893.6M1192.8,377V436M1192.8,495.1V701.7M1192.8,716.5V893.6M1207.6,421.3V436M1207.6,495.1V657.4M1207.6,731.2V893.6M1222.4,421.3V465.6M1222.4,480.3V657.4M1222.4,731.2V893.6M1237.1,421.3V657.4M1237.1,731.2V893.6M1251.9,421.3V657.4M1251.9,731.2V893.6M1266.6,436V568.9M1266.6,598.4V672.2M1266.6,701.7V893.6M1281.4,598.4V893.6M1296.2,598.4V893.6M1310.9,598.4V893.6M1325.7,583.6V893.6M1340.4,568.9V893.6M1355.2,568.9V687M1355.2,716.5V893.6M1370,583.6V687M1370,716.5V893.6M1384.7,583.6V687M1384.7,716.5V893.6M1399.5,583.6V672.2M1399.5,716.5V893.6M1414.2,716.5V893.6M1429,524.6V583.6M1429,716.5V893.6M1443.8,524.6V613.2M1443.8,731.2V893.6M1458.5,524.6V613.2M1458.5,775.5V893.6M1473.3,524.6V613.2M1473.3,775.5V893.6M1488,539.4V583.6M1488,657.4V746M1488,760.8V834.6M1488,849.3V893.6M1502.8,642.7V834.6M1517.6,642.7V834.6M1532.3,642.7V893.6M1547.1,627.9V731.2M1547.1,746V893.6M1561.8,627.9V716.5M1561.8,746V878.8M1576.6,627.9V716.5M1576.6,746V878.8M882.9,155.6H1015.7M882.9,170.4H1015.7M882.9,185.1H1015.7M882.9,199.9H1001M1074.8,199.9H1119M882.9,214.6H1001M1074.8,214.6H1119M882.9,229.4H1015.7M1089.5,229.4H1148.6M838.6,244.2H868.1M897.6,244.2H1015.7M1089.5,244.2H1148.6M838.6,258.9H868.1M897.6,258.9H1015.7M1089.5,258.9H1133.8M838.6,273.7H1001M1089.5,273.7H1119M838.6,288.4H1001M1060,288.4H1119M838.6,303.2H1015.7M1045.2,303.2H1119M838.6,318H1015.7M1030.5,318H1119M838.6,332.7H1015.7M1030.5,332.7H1148.6M838.6,347.5H1015.7M1045.2,347.5H1163.3M838.6,362.2H1001M1045.2,362.2H1163.3M838.6,377H986.2M1045.2,377H1178.1M838.6,391.8H986.2M1030.5,391.8H1207.6M838.6,406.5H986.2M1030.5,406.5H1207.6M838.6,421.3H986.2M1045.2,421.3H1207.6M838.6,436H1001M1045.2,436H1163.3M1207.6,436H1266.6M838.6,450.8H1030.5M1045.2,450.8H1163.3M1207.6,450.8H1281.4M838.6,465.6H1178.1M1222.4,465.6H1281.4M838.6,480.3H1178.1M1222.4,480.3H1281.4M838.6,495.1H1192.8M1207.6,495.1H1281.4M838.6,509.8H1281.4M838.6,524.6H1281.4M838.6,539.4H1281.4M1414.2,539.4H1488M838.6,554.1H1281.4M1414.2,554.1H1502.8M838.6,568.9H1266.6M1414.2,568.9H1502.8M838.6,583.6H1266.6M1325.7,583.6H1370M1429,583.6H1488M838.6,598.4H1266.6M1310.9,598.4H1414.2M1429,598.4H1488M838.6,613.2H1414.2M838.6,627.9H1414.2M838.6,642.7H1414.2M1532.3,642.7H1576.6M838.6,657.4H1207.6M1251.9,657.4H1414.2M1488,657.4H1576.6M838.6,672.2H1207.6M1266.6,672.2H1399.5M1473.3,672.2H1576.6M838.6,687H1207.6M1266.6,687H1355.2M1473.3,687H1576.6M838.6,701.7H1192.8M1266.6,701.7H1355.2M1473.3,701.7H1576.6M838.6,716.5H1192.8M1251.9,716.5H1355.2M1473.3,716.5H1561.8M838.6,731.2H1207.6M1251.9,731.2H1443.8M1473.3,731.2H1547.1M838.6,746H1458.5M1488,746H1547.1M838.6,760.8H1458.5M1488,760.8H1576.6M838.6,775.5H1458.5M1473.3,775.5H1576.6M838.6,790.3H1576.6M838.6,805H1576.6M838.6,819.8H1576.6M838.6,834.6H1488M1517.6,834.6H1576.6M838.6,849.3H1488M1517.6,849.3H1576.6M838.6,864.1H1502.8M1517.6,864.1H1576.6M838.6,878.8H1502.8M1517.6,878.8H1561.8M838.6,893.6H1502.8M1517.6,893.6H1561.8" stroke="#032a1a" stroke-opacity="0.9" stroke-width="1" fill="none" stroke-linecap="square"/>
</svg>
<div id="ui">
<div style="position:absolute;left:1620.0px;top:0.0px;width:889.0px;height:1107.0px;background:#2b2b2b;"></div>
<div style="position:absolute;left:1620.0px;top:0.0px;width:3.5px;height:1107.0px;background:#303030;"></div>
<div style="position:absolute;left:1623.0px;top:0.0px;width:886.0px;height:157.0px;background:#2b2b2b;border-left:1px solid #1e1e1e;border-bottom:1px solid #1c1c1c;box-sizing:border-box;"></div>
<div style="position:absolute;left:1620px;top:29px;font-size:7px;color:#c03848;line-height:1">›</div>
<svg style="position:absolute;left:1629.0px;top:166.0px;" width="15" height="11" viewBox="0 0 15 11"><path d="M0,1.2H14.5M0,5.4H14.5M0,9.6H14.5" stroke="#a8a8a8" stroke-width="1.7" fill="none"/></svg>
<div style="transform:scaleX(0.9130);transform-origin:0 50%;position:absolute;top:163.9px;font-size:14px;line-height:1;color:#d6d6d6;white-space:nowrap;left:1653.3px;transform-origin:0 50%;">File</div>
<div style="transform:scaleX(0.9534);transform-origin:0 50%;position:absolute;top:163.9px;font-size:14px;line-height:1;color:#d6d6d6;white-space:nowrap;left:1688.3px;transform-origin:0 50%;">Edit</div>
<div style="transform:scaleX(0.9969);transform-origin:0 50%;position:absolute;top:163.9px;font-size:14px;line-height:1;color:#d6d6d6;white-space:nowrap;left:1725.5px;transform-origin:0 50%;">View</div>
<div style="transform:scaleX(1.0131);transform-origin:0 50%;position:absolute;top:163.9px;font-size:14px;line-height:1;color:#dede8a;white-space:nowrap;left:1769.5px;transform-origin:0 50%;">Object</div>
<div style="transform:scaleX(0.9297);transform-origin:0 50%;position:absolute;top:163.9px;font-size:14px;line-height:1;color:#d6d6d6;white-space:nowrap;left:1824.8px;transform-origin:0 50%;">Tags</div>
<div style="transform:scaleX(0.9781);transform-origin:0 50%;position:absolute;top:163.9px;font-size:14px;line-height:1;color:#d6d6d6;white-space:nowrap;left:1866.7px;transform-origin:0 50%;">Bookmarks</div>
<svg style="position:absolute;left:2432.0px;top:163.5px;" width="15" height="15" viewBox="0 0 15 15"><circle cx="5.6" cy="5.6" r="4.3" stroke="#a8a8a8" stroke-width="1.6" fill="none"/><path d="M8.8,8.8L14,14" stroke="#a8a8a8" stroke-width="1.9"/></svg>
<svg style="position:absolute;left:2453.0px;top:163.0px;" width="13" height="15" viewBox="0 0 13 15"><path d="M1,14V6.2L6.5,1L12,6.2V14H1Z" stroke="#a8a8a8" stroke-width="1.5" fill="none" stroke-linejoin="round"/><path d="M5.2,14V10.6H7.8V14" stroke="#a8a8a8" stroke-width="1.4" fill="none"/></svg>
<svg style="position:absolute;left:2472.0px;top:165.5px;" width="15" height="12" viewBox="0 0 15 12"><path d="M0,1.2H14.5M2.8,5.6H11.7M5.6,10H8.9" stroke="#a8a8a8" stroke-width="1.7" fill="none"/></svg>
<svg style="position:absolute;left:2491.5px;top:163.0px;" width="15" height="15" viewBox="0 0 15 15"><path d="M7,2.2H1.2V13.8H12.8V8" stroke="#a8a8a8" stroke-width="1.5" fill="none"/><path d="M5.5,9.5L13.5,1.5M8.6,1H14V6.4" stroke="#a8a8a8" stroke-width="1.5" fill="none"/></svg>
<div style="position:absolute;left:1786.0px;top:187.3px;width:720.0px;height:20.3px;background:#222222;border-radius:2px;"></div>
<div style="position:absolute;left:1785.0px;top:187.0px;width:1.0px;height:333.0px;background:#1e1e1e;"></div>
<svg style="position:absolute;left:1625.5px;top:186.0px;" width="12" height="18" viewBox="0 0 12 18"><rect x="1" y="6.5" width="8.6" height="8.6" stroke="#777" stroke-width="1" fill="none"/><path d="M3,10.8H7.6M5.3,2V6.5M9.6,10.8H12" stroke="#777" stroke-width="1" fill="none"/></svg>
<svg style="position:absolute;left:1639.3px;top:190.5px;" width="15" height="14.5" viewBox="0 0 16 15"><rect x="0" y="0" width="16" height="15" rx="2" fill="#f4f4f4"/><rect x="0" y="0" width="7.5" height="15" rx="2" fill="#22c98a"/><circle cx="3.8" cy="4" r="2.6" fill="#5ff0b4" stroke="#0d8a5a" stroke-width="0.7"/><circle cx="3.8" cy="11" r="2.6" fill="#5ff0b4" stroke="#0d8a5a" stroke-width="0.7"/><path d="M7.5,5H16M7.5,10H16" stroke="#9a9a9a" stroke-width="0.8"/></svg>
<div style="transform:scaleX(0.9848);transform-origin:0 50%;position:absolute;top:190.3px;font-size:14px;line-height:1;color:#c6c6c6;white-space:nowrap;left:1658.5px;transform-origin:0 50%;">mtDualGraph</div>
<svg style="position:absolute;left:1750.0px;top:191.0px;" width="13" height="15" viewBox="0 0 13 15"><path d="M6.5,0.5L12.5,5L6.5,9.5L0.5,5Z" fill="#5c5c5c"/><path d="M1.3,8.8L6.5,12.8L11.7,8.8" stroke="#5c5c5c" stroke-width="1.5" fill="none"/></svg>
<svg style="position:absolute;left:1766.5px;top:190.5px;" width="18" height="14" viewBox="0 0 18 14"><circle cx="3.2" cy="3.1" r="2.6" fill="#5c5c5c"/><circle cx="3.2" cy="11" r="2.6" fill="#5c5c5c"/><path d="M8.3,7.2L11,10.2L16.8,3.2" stroke="#8c8c8c" stroke-width="1.2" fill="none"/></svg>
<svg style="position:absolute;left:1638.0px;top:207.0px;" width="15" height="14" viewBox="0 0 15 14"><path d="M3.5,0V11.5H12" stroke="#666" stroke-width="1" fill="none"/></svg>
<svg style="position:absolute;left:1650.5px;top:212.0px;" width="14" height="12" viewBox="0 0 14 12"><path d="M7,0.8L13.4,6L7,11.2L0.6,6Z" fill="#7fd0ee"/><path d="M3.8,3.4L10.2,8.6M10.2,3.4L3.8,8.6" stroke="#e8f8ff" stroke-width="0.9"/></svg>
<div style="transform:scaleX(0.9215);transform-origin:0 50%;position:absolute;top:211.3px;font-size:14px;line-height:1;color:#c6c6c6;white-space:nowrap;left:1669.5px;transform-origin:0 50%;">Plane</div>
<svg style="position:absolute;left:1750.0px;top:212.0px;" width="13" height="15" viewBox="0 0 13 15"><path d="M6.5,0.5L12.5,5L6.5,9.5L0.5,5Z" fill="#5c5c5c"/><path d="M1.3,8.8L6.5,12.8L11.7,8.8" stroke="#5c5c5c" stroke-width="1.5" fill="none"/></svg>
<svg style="position:absolute;left:1766.5px;top:211.5px;" width="18" height="14" viewBox="0 0 18 14"><circle cx="3.2" cy="3.1" r="2.6" fill="#5c5c5c"/><circle cx="3.2" cy="11" r="2.6" fill="#5c5c5c"/><path d="M8.3,7.2L11,10.2L16.8,3.2" stroke="#8c8c8c" stroke-width="1.2" fill="none"/></svg>
<svg style="position:absolute;left:1789.5px;top:210.3px;" width="13" height="13" viewBox="0 0 13 13"><path d="M1,13V1H13" stroke="#8a80e0" stroke-width="1.6" fill="none"/><path d="M3,3H10.5C10.5,7.5 7.5,10.5 3,10.5Z" fill="#c8c8c8"/></svg>
<svg style="position:absolute;left:1807.0px;top:208.0px;" width="18.3" height="18.3" viewBox="0 0 20 20"><defs><radialGradient id="mg1807" cx="0.62" cy="0.3" r="0.75"><stop offset="0" stop-color="#f2f2f2"/><stop offset="0.45" stop-color="#b8b8b8"/><stop offset="0.8" stop-color="#3c3c3c"/><stop offset="1" stop-color="#101010"/></radialGradient></defs><rect width="20" height="20" fill="#6e747a"/><circle cx="10" cy="10" r="8" fill="url(#mg1807)"/><path d="M5,6L8,4L9,7L7,9L8,12L11,12L12,15L9,17L5,15L3,11Z" fill="#1a1a1a" opacity="0.85"/><path d="M11,8L13,7L14,10L12,11Z" fill="#222" opacity="0.8"/><rect x="0.5" y="0.5" width="19" height="19" fill="none" stroke="#e8a868" stroke-width="1.1"/></svg>
<div style="position:absolute;left:1623.0px;top:519.5px;width:886.0px;height:2.0px;background:#252525;"></div>
<div style="position:absolute;left:1623.5px;top:521.0px;width:498.0px;height:17.5px;background:#222222;"></div>
<div style="position:absolute;left:2121.0px;top:521.0px;width:2.5px;height:586.0px;background:#242424;"></div>
<div style="position:absolute;left:2123.5px;top:521.0px;width:386.0px;height:17.5px;background:#222222;"></div>
<svg style="position:absolute;left:1628.3px;top:526.5px;" width="8" height="8" viewBox="0 0 8 8"><path d="M1,1L7,7M7,1L1,7" stroke="#c8c8c8" stroke-width="1.5"/></svg>
<div style="transform:scaleX(1.0230);transform-origin:0 50%;position:absolute;top:525.7px;font-size:14px;line-height:1;color:#d8d8d8;white-space:nowrap;left:1647.8px;transform-origin:0 50%;">Attributes</div>
<svg style="position:absolute;left:1629.8px;top:554.0px;" width="15" height="11" viewBox="0 0 15 11"><path d="M0,1.2H14.5M0,5.4H14.5M0,9.6H14.5" stroke="#a8a8a8" stroke-width="1.7" fill="none"/></svg>
<div style="transform:scaleX(1.0419);transform-origin:0 50%;position:absolute;top:552.4px;font-size:14px;line-height:1;color:#d6d6d6;white-space:nowrap;left:1654.4px;transform-origin:0 50%;">Mode</div>
<div style="transform:scaleX(0.9534);transform-origin:0 50%;position:absolute;top:552.4px;font-size:14px;line-height:1;color:#d6d6d6;white-space:nowrap;left:1705.3px;transform-origin:0 50%;">Edit</div>
<div style="transform:scaleX(0.9440);transform-origin:0 50%;position:absolute;top:552.4px;font-size:14px;line-height:1;color:#d6d6d6;white-space:nowrap;left:1743.3px;transform-origin:0 50%;">User Data</div>
<svg style="position:absolute;left:1964.0px;top:553.0px;" width="14" height="12" viewBox="0 0 14 12"><path d="M13.5,6H1.5M6.5,1L1.5,6L6.5,11" stroke="#555555" stroke-width="1.6" fill="none"/></svg>
<svg style="position:absolute;left:1982.5px;top:553.0px;" width="14" height="12" viewBox="0 0 14 12"><path d="M0.5,6H12.5M7.5,1L12.5,6L7.5,11" stroke="#555555" stroke-width="1.6" fill="none"/></svg>
<svg style="position:absolute;left:2004.0px;top:552.0px;" width="12" height="14" viewBox="0 0 12 14"><path d="M6,13.5V1.5M1,6.5L6,1.5L11,6.5" stroke="#555555" stroke-width="1.6" fill="none"/></svg>
<svg style="position:absolute;left:2023.0px;top:551.5px;" width="15" height="15" viewBox="0 0 15 15"><circle cx="5.6" cy="5.6" r="4.3" stroke="#a8a8a8" stroke-width="1.6" fill="none"/><path d="M8.8,8.8L14,14" stroke="#a8a8a8" stroke-width="1.9"/></svg>
<svg style="position:absolute;left:2042.5px;top:554.0px;" width="15" height="12" viewBox="0 0 15 12"><path d="M0,1.2H14.5M2.8,5.6H11.7M5.6,10H8.9" stroke="#a8a8a8" stroke-width="1.7" fill="none"/></svg>
<svg style="position:absolute;left:2063.5px;top:551.5px;" width="14" height="15" viewBox="0 0 14 15"><path d="M3.6,7V4.6A3.4,3.4 0 0 1 10.4,4.6V7" stroke="#ffffff" stroke-width="1.7" fill="none"/><rect x="0.8" y="6.6" width="12.4" height="8" rx="1.6" fill="#ffffff"/></svg>
<svg style="position:absolute;left:2081.5px;top:551.0px;" width="17" height="17" viewBox="0 0 17 17"><circle cx="8.5" cy="8.5" r="7.3" stroke="#a8a8a8" stroke-width="1.4" fill="none"/><circle cx="8.5" cy="8.5" r="2.6" stroke="#a8a8a8" stroke-width="1.5" fill="none"/></svg>
<svg style="position:absolute;left:2102.5px;top:551.5px;" width="15" height="15" viewBox="0 0 15 15"><path d="M7,2.2H1.2V13.8H12.8V8" stroke="#a8a8a8" stroke-width="1.5" fill="none"/><path d="M5.5,9.5L13.5,1.5M8.6,1H14V6.4" stroke="#a8a8a8" stroke-width="1.5" fill="none"/></svg>
<svg style="position:absolute;left:1627.5px;top:580.3px;" width="19.5" height="18" viewBox="0 0 16 15"><rect x="0" y="0" width="16" height="15" rx="2" fill="#f4f4f4"/><rect x="0" y="0" width="7.5" height="15" rx="2" fill="#22c98a"/><circle cx="3.8" cy="4" r="2.6" fill="#5ff0b4" stroke="#0d8a5a" stroke-width="0.7"/><circle cx="3.8" cy="11" r="2.6" fill="#5ff0b4" stroke="#0d8a5a" stroke-width="0.7"/><path d="M7.5,5H16M7.5,10H16" stroke="#9a9a9a" stroke-width="0.8"/></svg>
<div style="transform:scaleX(1.0003);transform-origin:0 50%;position:absolute;top:582.1px;font-size:14px;line-height:1;color:#b4b4b4;white-space:nowrap;left:1652.0px;transform-origin:0 50%;">mtDualGraph Object [mtDualGraph]</div>
<div style="position:absolute;left:2001.0px;top:578.6px;width:116.0px;height:21.6px;background:#383838;border-radius:6px;"></div>
<div style="position:absolute;left:2097.0px;top:578.6px;width:1.0px;height:21.6px;background:#2b2b2b;"></div>
<div style="transform:scaleX(0.9848);transform-origin:0 50%;position:absolute;top:582.1px;font-size:14px;line-height:1;color:#d0d0d0;white-space:nowrap;left:2007.0px;transform-origin:0 50%;">Custom</div>
<svg style="position:absolute;left:2104.0px;top:587.5px;" width="8.0" height="5.0" viewBox="0 0 8 5"><path d="M0.7,0.7L4,4L7.3,0.7" stroke="#c0c0c0" stroke-width="1.3" fill="none"/></svg>
<div style="position:absolute;left:1626.9px;top:604.3px;width:424.9px;height:22.6px;background:#3a3a3a;border-radius:3px;"></div>
<div style="position:absolute;top:608.6px;font-size:14px;line-height:1;color:#cccccc;white-space:nowrap;left:1646.4px;width:31.2px;text-align:center;"><span style="transform:scaleX(0.9114);display:inline-block;">Basic</span></div>
<div style="position:absolute;left:1697.1px;top:604.3px;width:1.0px;height:22.6px;background:#333;"></div>
<div style="position:absolute;top:608.6px;font-size:14px;line-height:1;color:#cccccc;white-space:nowrap;left:1712.3px;width:41.0px;text-align:center;"><span style="transform:scaleX(0.9755);display:inline-block;">Coord.</span></div>
<div style="position:absolute;left:1768.5px;top:604.3px;width:70.6px;height:22.6px;background:#595ea8;"></div>
<div style="position:absolute;top:608.6px;font-size:14px;line-height:1;color:#ffffff;white-space:nowrap;left:1783.6px;width:40.4px;text-align:center;"><span style="transform:scaleX(0.9983);display:inline-block;">Object</span></div>
<div style="position:absolute;left:1839.1px;top:604.3px;width:1.0px;height:22.6px;background:#333;"></div>
<div style="position:absolute;top:608.6px;font-size:14px;line-height:1;color:#cccccc;white-space:nowrap;left:1843.9px;width:61.6px;text-align:center;"><span style="transform:scaleX(0.9537);display:inline-block;">Selections</span></div>
<div style="position:absolute;left:1910.2px;top:604.3px;width:1.0px;height:22.6px;background:#333;"></div>
<div style="position:absolute;top:608.6px;font-size:14px;line-height:1;color:#cccccc;white-space:nowrap;left:1915.7px;width:60.3px;text-align:center;"><span style="transform:scaleX(0.9682);display:inline-block;">Advanced</span></div>
<div style="position:absolute;left:1981.4px;top:604.3px;width:1.0px;height:22.6px;background:#333;"></div>
<div style="position:absolute;top:608.6px;font-size:14px;line-height:1;color:#cccccc;white-space:nowrap;left:1999.2px;width:34.9px;text-align:center;"><span style="transform:scaleX(0.9342);display:inline-block;">Fields</span></div>
<div style="transform:scaleX(0.9940);transform-origin:0 50%;position:absolute;top:637.5px;font-size:14px;line-height:1;color:#f0f0f0;white-space:nowrap;font-weight:bold;left:1627.7px;transform-origin:0 50%;">Object Properties</div>
<svg style="position:absolute;left:1629.4px;top:665.9px;" width="11" height="11" viewBox="0 0 11 11"><path d="M5.5,1.2L9.8,5.5L5.5,9.8L1.2,5.5Z" stroke="#9a9a9a" stroke-width="1.1" fill="none"/></svg>
<div style="transform:scaleX(0.9863);transform-origin:0 50%;position:absolute;top:664.2px;font-size:14px;line-height:1;color:#b0b0b0;white-space:nowrap;left:1650.3px;transform-origin:0 50%;">Selection Map</div>
<div style="position:absolute;left:1743.3px;top:661.1px;width:336.6px;height:20.2px;background:#202020;border-radius:3px;"></div>
<svg style="position:absolute;left:2083.0px;top:670.0px;" width="8.0" height="5.0" viewBox="0 0 8 5"><path d="M0.7,0.7L4,4L7.3,0.7" stroke="#c0c0c0" stroke-width="1.3" fill="none"/></svg>
<svg style="position:absolute;left:2096.5px;top:662.5px;" width="16" height="16" viewBox="0 0 16 16"><path d="M1.5,14.5L2.5,10.5L9.5,3.5L12.5,6.5L5.5,13.5Z" stroke="#a8a8a8" stroke-width="1.3" fill="none" stroke-linejoin="round"/><path d="M10,2.8C11.5,0.6 15.4,4.5 13.2,6" stroke="#a8a8a8" stroke-width="1.5" fill="none"/><path d="M8.7,3L13,7.3" stroke="#a8a8a8" stroke-width="1.6"/></svg>
<svg style="position:absolute;left:1629.4px;top:691.1px;" width="11" height="11" viewBox="0 0 11 11"><path d="M5.5,1.2L9.8,5.5L5.5,9.8L1.2,5.5Z" stroke="#9a9a9a" stroke-width="1.1" fill="none"/></svg>
<div style="transform:scaleX(0.9610);transform-origin:0 50%;position:absolute;top:689.5px;font-size:14px;line-height:1;color:#b0b0b0;white-space:nowrap;left:1650.3px;transform-origin:0 50%;">Texture Source</div>
<div style="position:absolute;left:1754.2px;top:685.4px;width:129.7px;height:22.5px;background:#383838;border-radius:4px;"></div>
<svg style="position:absolute;left:1761.0px;top:687.0px;" width="19" height="19" viewBox="0 0 19 19"><circle cx="9.5" cy="9.5" r="8.3" stroke="#f0f0f0" stroke-width="1.6" fill="none"/><circle cx="9.5" cy="9.5" r="1.7" fill="#f0f0f0"/><circle cx="6" cy="6" r="1.7" fill="#f0f0f0"/><circle cx="13" cy="6" r="1.7" fill="#f0f0f0"/><circle cx="6" cy="13" r="1.7" fill="#f0f0f0"/><circle cx="13" cy="13" r="1.7" fill="#f0f0f0"/></svg>
<div style="transform:scaleX(0.9636);transform-origin:0 50%;position:absolute;top:689.5px;font-size:14px;line-height:1;color:#d0d0d0;white-space:nowrap;left:1785.4px;transform-origin:0 50%;">Texture Tag</div>
<svg style="position:absolute;left:1870.5px;top:694.5px;" width="8.0" height="5.0" viewBox="0 0 8 5"><path d="M0.7,0.7L4,4L7.3,0.7" stroke="#c0c0c0" stroke-width="1.3" fill="none"/></svg>
<svg style="position:absolute;left:1890.7px;top:691.1px;" width="11" height="11" viewBox="0 0 11 11"><path d="M5.5,1.2L9.8,5.5L5.5,9.8L1.2,5.5Z" stroke="#9a9a9a" stroke-width="1.1" fill="none"/></svg>
<svg style="position:absolute;left:1912.2px;top:692.5px;" width="5" height="8" viewBox="0 0 5 8"><path d="M0.7,0.7L4,4L0.7,7.3" stroke="#909090" stroke-width="1.2" fill="none"/></svg>
<div style="transform:scaleX(0.9608);transform-origin:0 50%;position:absolute;top:689.5px;font-size:14px;line-height:1;color:#b0b0b0;white-space:nowrap;left:1922.3px;transform-origin:0 50%;">Texture Tag</div>
<div style="position:absolute;left:1997.8px;top:685.4px;width:82.1px;height:22.5px;background:#202020;border-radius:3px;"></div>
<div style="transform:scaleX(1.0041);transform-origin:0 50%;position:absolute;top:689.5px;font-size:14px;line-height:1;color:#d8d8d8;white-space:nowrap;left:2004.0px;transform-origin:0 50%;">Material</div>
<svg style="position:absolute;left:2059.0px;top:686.2px;" width="20.5" height="20.5" viewBox="0 0 20 20"><defs><radialGradient id="mg2059" cx="0.62" cy="0.3" r="0.75"><stop offset="0" stop-color="#f2f2f2"/><stop offset="0.45" stop-color="#b8b8b8"/><stop offset="0.8" stop-color="#3c3c3c"/><stop offset="1" stop-color="#101010"/></radialGradient></defs><rect width="20" height="20" fill="#6e747a"/><circle cx="10" cy="10" r="8" fill="url(#mg2059)"/><path d="M5,6L8,4L9,7L7,9L8,12L11,12L12,15L9,17L5,15L3,11Z" fill="#1a1a1a" opacity="0.85"/><path d="M11,8L13,7L14,10L12,11Z" fill="#222" opacity="0.8"/></svg>
<svg style="position:absolute;left:2083.0px;top:695.0px;" width="8.0" height="5.0" viewBox="0 0 8 5"><path d="M0.7,0.7L4,4L7.3,0.7" stroke="#c0c0c0" stroke-width="1.3" fill="none"/></svg>
<svg style="position:absolute;left:2096.5px;top:687.5px;" width="16" height="16" viewBox="0 0 16 16"><path d="M1.5,14.5L2.5,10.5L9.5,3.5L12.5,6.5L5.5,13.5Z" stroke="#a8a8a8" stroke-width="1.3" fill="none" stroke-linejoin="round"/><path d="M10,2.8C11.5,0.6 15.4,4.5 13.2,6" stroke="#a8a8a8" stroke-width="1.5" fill="none"/><path d="M8.7,3L13,7.3" stroke="#a8a8a8" stroke-width="1.6"/></svg>
<svg style="position:absolute;left:1629.4px;top:716.1px;" width="11" height="11" viewBox="0 0 11 11"><path d="M5.5,1.2L9.8,5.5L5.5,9.8L1.2,5.5Z" stroke="#9a9a9a" stroke-width="1.1" fill="none"/></svg>
<div style="transform:scaleX(0.9661);transform-origin:0 50%;position:absolute;top:714.5px;font-size:14px;line-height:1;color:#b0b0b0;white-space:nowrap;left:1650.3px;transform-origin:0 50%;">Texture Channel</div>
<div style="position:absolute;left:1754.2px;top:710.0px;width:129.7px;height:22.6px;background:#383838;border-radius:4px;"></div>
<div style="transform:scaleX(1.0159);transform-origin:0 50%;position:absolute;top:714.5px;font-size:14px;line-height:1;color:#d0d0d0;white-space:nowrap;left:1761.1px;transform-origin:0 50%;">Color</div>
<svg style="position:absolute;left:1870.5px;top:719.0px;" width="8.0" height="5.0" viewBox="0 0 8 5"><path d="M0.7,0.7L4,4L7.3,0.7" stroke="#c0c0c0" stroke-width="1.3" fill="none"/></svg>
<svg style="position:absolute;left:1629.4px;top:741.3px;" width="11" height="11" viewBox="0 0 11 11"><path d="M5.5,1.2L9.8,5.5L5.5,9.8L1.2,5.5Z" stroke="#9a9a9a" stroke-width="1.1" fill="none"/></svg>
<div style="transform:scaleX(0.9637);transform-origin:0 50%;position:absolute;top:739.7px;font-size:14px;line-height:1;color:#b0b0b0;white-space:nowrap;left:1650.3px;transform-origin:0 50%;">Tolerance</div>
<div style="position:absolute;left:1713.5px;top:736.2px;width:92.4px;height:22.1px;background:#212121;border-radius:4px;"></div>
<svg style="position:absolute;left:1715.3px;top:743.2px;" width="5" height="8" viewBox="0 0 5 8"><path d="M4.3,0.7L1,4L4.3,7.3" stroke="#909090" stroke-width="1.2" fill="none"/></svg>
<svg style="position:absolute;left:1799.3px;top:743.2px;" width="5" height="8" viewBox="0 0 5 8"><path d="M0.7,0.7L4,4L0.7,7.3" stroke="#909090" stroke-width="1.2" fill="none"/></svg>
<div style="position:absolute;top:739.7px;font-size:14px;line-height:1;color:#e0e0e0;white-space:nowrap;left:1759.3px;transform:translateX(-50%);">50 %</div>
<div style="position:absolute;left:1813.1px;top:742.3px;width:301.7px;height:9.7px;background:#202020;border-radius:2px;"></div>
<div style="position:absolute;left:1813.1px;top:742.3px;width:150.8px;height:9.7px;background:#5a5fa6;border-radius:2px;"></div>
<div style="position:absolute;left:1962.0px;top:735.7px;width:3.6px;height:22.0px;background:#c4c4c4;border-radius:1px;"></div>
<div style="position:absolute;left:1626.0px;top:763.0px;width:490.0px;height:1.0px;background:#383838;"></div>
<svg style="position:absolute;left:1629.4px;top:774.8px;" width="11" height="11" viewBox="0 0 11 11"><path d="M5.5,1.2L9.8,5.5L5.5,9.8L1.2,5.5Z" stroke="#9a9a9a" stroke-width="1.1" fill="none"/></svg>
<div style="transform:scaleX(0.9708);transform-origin:0 50%;position:absolute;top:773.1px;font-size:14px;line-height:1;color:#b0b0b0;white-space:nowrap;left:1650.3px;transform-origin:0 50%;">Dual Graph</div>
<div style="position:absolute;left:1736.1px;top:769.0px;width:378.7px;height:22.6px;background:#383838;border-radius:4px;"></div>
<svg style="position:absolute;left:1745.4px;top:772.6px;" width="15" height="16" viewBox="0 0 15 16"><path d="M7.5,0.5L14,4.2V11.8L7.5,15.5L1,11.8V4.2Z" fill="#f4f4f4"/></svg>
<div style="transform:scaleX(1.0008);transform-origin:0 50%;position:absolute;top:773.1px;font-size:14px;line-height:1;color:#d0d0d0;white-space:nowrap;left:1767.3px;transform-origin:0 50%;">Ngons</div>
<svg style="position:absolute;left:2101.6px;top:778.0px;" width="8.0" height="5.0" viewBox="0 0 8 5"><path d="M0.7,0.7L4,4L7.3,0.7" stroke="#c0c0c0" stroke-width="1.3" fill="none"/></svg>
<svg style="position:absolute;left:1629.4px;top:799.8px;" width="11" height="11" viewBox="0 0 11 11"><path d="M5.5,1.2L9.8,5.5L5.5,9.8L1.2,5.5Z" stroke="#9a9a9a" stroke-width="1.1" fill="none"/></svg>
<div style="transform:scaleX(1.0010);transform-origin:0 50%;position:absolute;top:798.1px;font-size:14px;line-height:1;color:#b0b0b0;white-space:nowrap;left:1650.3px;transform-origin:0 50%;">Triangulation</div>
<div style="position:absolute;left:1736.1px;top:794.0px;width:378.7px;height:22.6px;background:#383838;border-radius:4px;"></div>
<div style="position:absolute;left:1745.7px;top:798.1px;width:14.4px;height:14.0px;background:#f8f8f8;"></div>
<div style="transform:scaleX(0.9697);transform-origin:0 50%;position:absolute;top:798.1px;font-size:14px;line-height:1;color:#d0d0d0;white-space:nowrap;left:1767.3px;transform-origin:0 50%;">Quads</div>
<svg style="position:absolute;left:2101.6px;top:803.0px;" width="8.0" height="5.0" viewBox="0 0 8 5"><path d="M0.7,0.7L4,4L7.3,0.7" stroke="#c0c0c0" stroke-width="1.3" fill="none"/></svg>
<div style="position:absolute;left:1626.0px;top:821.3px;width:490.0px;height:20.6px;background:#353535;"></div>
<svg style="position:absolute;left:1637.5px;top:829.5px;" width="6" height="5" viewBox="0 0 6 5"><path d="M0,0.5H6L3,4.5Z" fill="#f0f0f0"/></svg>
<div style="transform:scaleX(0.9222);transform-origin:0 50%;position:absolute;top:824.8px;font-size:14px;line-height:1;color:#f0f0f0;white-space:nowrap;left:1646.2px;transform-origin:0 50%;">Hide Faces</div>
<svg style="position:absolute;left:1637.6px;top:851.8px;" width="11" height="11" viewBox="0 0 11 11"><path d="M5.5,1.2L9.8,5.5L5.5,9.8L1.2,5.5Z" stroke="#9a9a9a" stroke-width="1.1" fill="none"/></svg>
<div style="transform:scaleX(0.9813);transform-origin:0 50%;position:absolute;top:849.9px;font-size:14px;line-height:1;color:#b0b0b0;white-space:nowrap;left:1658.1px;transform-origin:0 50%;">Hide Generated</div>
<div style="position:absolute;left:1793.2px;top:851.5px;width:11.9px;height:11.5px;background:#4a4a4a;border-radius:2.5px;"></div>
<svg style="position:absolute;left:1637.6px;top:876.8px;" width="11" height="11" viewBox="0 0 11 11"><path d="M5.5,1.2L9.8,5.5L5.5,9.8L1.2,5.5Z" stroke="#9a9a9a" stroke-width="1.1" fill="none"/></svg>
<div style="transform:scaleX(0.9985);transform-origin:0 50%;position:absolute;top:875.1px;font-size:14px;line-height:1;color:#b0b0b0;white-space:nowrap;left:1658.1px;transform-origin:0 50%;">Hide Non-Generated</div>
<div style="position:absolute;left:1793.2px;top:876.1px;width:11.9px;height:11.5px;background:#4a4a4a;border-radius:2.5px;"></div>
<div style="position:absolute;left:1626.0px;top:901.0px;width:490.0px;height:1.0px;background:#383838;"></div>
<svg style="position:absolute;left:1628.0px;top:907.3px;" width="30" height="30" viewBox="0 0 30 30"><circle cx="15" cy="15" r="13.4" stroke="#e8e8e8" stroke-width="1.8" fill="none"/><path d="M8.6,10.5H17.2A3.2,3.2 0 0 1 17.2,17H11.3" stroke="#e8e8e8" stroke-width="2.6" fill="none"/><circle cx="11.3" cy="21.6" r="1.6" fill="#e8e8e8"/></svg>
<svg style="position:absolute;left:1661.6px;top:907.3px;" width="30" height="30" viewBox="0 0 30 30"><circle cx="15" cy="15" r="13.4" stroke="#e8e8e8" stroke-width="1.8" fill="none"/><path d="M13.5,22.6A8,8 0 1 0 7.3,13" stroke="#e8e8e8" stroke-width="1.8" fill="none"/><path d="M17.5,19.8L13.2,22.8L17.6,25.4Z" fill="#e8e8e8"/></svg>
<svg style="position:absolute;left:2126.2px;top:526.5px;" width="8" height="8" viewBox="0 0 8 8"><path d="M1,1L7,7M7,1L1,7" stroke="#c8c8c8" stroke-width="1.5"/></svg>
<div style="transform:scaleX(0.9982);transform-origin:0 50%;position:absolute;top:526.0px;font-size:14px;line-height:1;color:#d8d8d8;white-space:nowrap;left:2146.8px;transform-origin:0 50%;">Attributes (2)</div>
<svg style="position:absolute;left:2127.5px;top:554.0px;" width="15" height="11" viewBox="0 0 15 11"><path d="M0,1.2H14.5M0,5.4H14.5M0,9.6H14.5" stroke="#f0f0f0" stroke-width="1.7" fill="none"/></svg>
<div style="transform:scaleX(1.0419);transform-origin:0 50%;position:absolute;top:551.8px;font-size:14px;line-height:1;color:#d6d6d6;white-space:nowrap;left:2152.3px;transform-origin:0 50%;">Mode</div>
<div style="transform:scaleX(0.9534);transform-origin:0 50%;position:absolute;top:551.8px;font-size:14px;line-height:1;color:#d6d6d6;white-space:nowrap;left:2203.4px;transform-origin:0 50%;">Edit</div>
<div style="transform:scaleX(0.9519);transform-origin:0 50%;position:absolute;top:551.8px;font-size:14px;line-height:1;color:#d6d6d6;white-space:nowrap;left:2241.2px;transform-origin:0 50%;">User Data</div>
<svg style="position:absolute;left:2351.0px;top:553.0px;" width="14" height="12" viewBox="0 0 14 12"><path d="M13.5,6H1.5M6.5,1L1.5,6L6.5,11" stroke="#a8a8a8" stroke-width="1.6" fill="none"/></svg>
<svg style="position:absolute;left:2372.0px;top:553.0px;" width="14" height="12" viewBox="0 0 14 12"><path d="M0.5,6H12.5M7.5,1L12.5,6L7.5,11" stroke="#555555" stroke-width="1.6" fill="none"/></svg>
<svg style="position:absolute;left:2392.0px;top:552.0px;" width="12" height="14" viewBox="0 0 12 14"><path d="M6,13.5V1.5M1,6.5L6,1.5L11,6.5" stroke="#a8a8a8" stroke-width="1.6" fill="none"/></svg>
<svg style="position:absolute;left:2411.0px;top:551.5px;" width="15" height="15" viewBox="0 0 15 15"><circle cx="5.6" cy="5.6" r="4.3" stroke="#a8a8a8" stroke-width="1.6" fill="none"/><path d="M8.8,8.8L14,14" stroke="#a8a8a8" stroke-width="1.9"/></svg>
<svg style="position:absolute;left:2431.0px;top:554.0px;" width="15" height="12" viewBox="0 0 15 12"><path d="M0,1.2H14.5M2.8,5.6H11.7M5.6,10H8.9" stroke="#a8a8a8" stroke-width="1.7" fill="none"/></svg>
<svg style="position:absolute;left:2451.0px;top:551.0px;" width="14" height="15" viewBox="0 0 14 15"><path d="M3.6,7V4.6A3.4,3.4 0 0 1 10.4,4.6V7" stroke="#a8a8a8" stroke-width="1.5" fill="none"/><rect x="1.4" y="7.2" width="11.2" height="6.8" rx="1.2" stroke="#a8a8a8" stroke-width="1.5" fill="none"/></svg>
<svg style="position:absolute;left:2470.0px;top:551.0px;" width="17" height="17" viewBox="0 0 17 17"><circle cx="8.5" cy="8.5" r="7.3" stroke="#a8a8a8" stroke-width="1.4" fill="none"/><circle cx="8.5" cy="8.5" r="2.6" stroke="#a8a8a8" stroke-width="1.5" fill="none"/></svg>
<svg style="position:absolute;left:2490.5px;top:551.5px;" width="15" height="15" viewBox="0 0 15 15"><path d="M7,2.2H1.2V13.8H12.8V8" stroke="#a8a8a8" stroke-width="1.5" fill="none"/><path d="M5.5,9.5L13.5,1.5M8.6,1H14V6.4" stroke="#a8a8a8" stroke-width="1.5" fill="none"/></svg>
<svg style="position:absolute;left:2124.0px;top:578.2px;" width="22" height="22" viewBox="0 0 20 20"><defs><radialGradient id="mg2124" cx="0.62" cy="0.3" r="0.75"><stop offset="0" stop-color="#f2f2f2"/><stop offset="0.45" stop-color="#b8b8b8"/><stop offset="0.8" stop-color="#3c3c3c"/><stop offset="1" stop-color="#101010"/></radialGradient></defs><rect width="20" height="20" fill="#6e747a"/><circle cx="10" cy="10" r="8" fill="url(#mg2124)"/><path d="M5,6L8,4L9,7L7,9L8,12L11,12L12,15L9,17L5,15L3,11Z" fill="#1a1a1a" opacity="0.85"/><path d="M11,8L13,7L14,10L12,11Z" fill="#222" opacity="0.8"/></svg>
<div style="transform:scaleX(1.0010);transform-origin:0 50%;position:absolute;top:582.2px;font-size:14px;line-height:1;color:#b4b4b4;white-space:nowrap;left:2150.3px;transform-origin:0 50%;">Material Tag [Material]</div>
<div style="position:absolute;left:2388.3px;top:578.2px;width:117.3px;height:22.7px;background:#383838;border-radius:6px;"></div>
<div style="position:absolute;left:2485.3px;top:578.2px;width:1.0px;height:22.7px;background:#2b2b2b;"></div>
<div style="transform:scaleX(0.9848);transform-origin:0 50%;position:absolute;top:582.2px;font-size:14px;line-height:1;color:#d0d0d0;white-space:nowrap;left:2395.3px;transform-origin:0 50%;">Custom</div>
<svg style="position:absolute;left:2492.0px;top:587.5px;" width="8.0" height="5.0" viewBox="0 0 8 5"><path d="M0.7,0.7L4,4L7.3,0.7" stroke="#c0c0c0" stroke-width="1.3" fill="none"/></svg>
<div style="position:absolute;left:2124.9px;top:604.4px;width:247.9px;height:22.3px;background:#3a3a3a;border-radius:3px;"></div>
<div style="position:absolute;top:608.6px;font-size:14px;line-height:1;color:#cccccc;white-space:nowrap;left:2150.8px;width:31.2px;text-align:center;"><span style="transform:scaleX(0.9114);display:inline-block;">Basic</span></div>
<div style="position:absolute;left:2207.8px;top:604.4px;width:82.5px;height:22.3px;background:#595ea8;"></div>
<div style="position:absolute;top:608.6px;font-size:14px;line-height:1;color:#ffffff;white-space:nowrap;left:2238.8px;width:20.5px;text-align:center;"><span style="transform:scaleX(0.9080);display:inline-block;">Tag</span></div>
<div style="position:absolute;left:2290.3px;top:604.4px;width:1.0px;height:22.3px;background:#333;"></div>
<div style="position:absolute;top:608.6px;font-size:14px;line-height:1;color:#cccccc;white-space:nowrap;left:2294.3px;width:74.5px;text-align:center;"><span style="transform:scaleX(0.9868);display:inline-block;">Coordinates</span></div>
<div style="position:absolute;left:2147.8px;top:630.3px;width:327.0px;height:20.9px;background:#3a3a3a;border-radius:3px;"></div>
<div style="position:absolute;top:633.1px;font-size:14px;line-height:1;color:#cccccc;white-space:nowrap;left:2173.3px;width:31.2px;text-align:center;"><span style="transform:scaleX(0.9114);display:inline-block;">Basic</span></div>
<div style="position:absolute;left:2229.9px;top:630.3px;width:81.3px;height:20.9px;background:#595ea8;"></div>
<div style="position:absolute;top:633.1px;font-size:14px;line-height:1;color:#ffffff;white-space:nowrap;left:2253.7px;width:33.8px;text-align:center;"><span style="transform:scaleX(1.0099);display:inline-block;">Color</span></div>
<div style="position:absolute;left:2311.2px;top:630.3px;width:1.0px;height:20.9px;background:#333;"></div>
<div style="position:absolute;top:633.1px;font-size:14px;line-height:1;color:#cccccc;white-space:nowrap;left:2317.2px;width:70.0px;text-align:center;"><span style="transform:scaleX(0.9467);display:inline-block;">Reflectance</span></div>
<div style="position:absolute;left:2393.3px;top:630.3px;width:1.0px;height:20.9px;background:#333;"></div>
<div style="position:absolute;top:633.1px;font-size:14px;line-height:1;color:#cccccc;white-space:nowrap;left:2397.6px;width:73.0px;text-align:center;"><span style="transform:scaleX(1.0307);display:inline-block;">Illumination</span></div>
<div style="position:absolute;left:2147.8px;top:652.2px;width:163.4px;height:22.4px;background:#3a3a3a;border-radius:3px;"></div>
<div style="position:absolute;top:657.1px;font-size:14px;line-height:1;color:#cccccc;white-space:nowrap;left:2161.2px;width:55.3px;text-align:center;"><span style="transform:scaleX(1.0199);display:inline-block;">Viewport</span></div>
<div style="position:absolute;left:2229.9px;top:652.2px;width:1.0px;height:22.4px;background:#333;"></div>
<div style="position:absolute;top:657.1px;font-size:14px;line-height:1;color:#cccccc;white-space:nowrap;left:2250.4px;width:40.4px;text-align:center;"><span style="transform:scaleX(0.9612);display:inline-block;">Assign</span></div>
<div style="position:absolute;left:2229.9px;top:651.2px;width:81.3px;height:1.5px;background:#3a3a3a;"></div>
<div style="position:absolute;left:2497.5px;top:656.0px;width:3.8px;height:241.0px;background:#444444;border-radius:2px;"></div>
<svg style="position:absolute;left:2148.3px;top:683.9px;" width="8.0" height="5.0" viewBox="0 0 8 5"><path d="M0.7,0.7L4,4L7.3,0.7" stroke="#c0c0c0" stroke-width="1.3" fill="none"/></svg>
<svg style="position:absolute;left:2158.0px;top:678.0px;outline:1px solid #202020;" width="120.2" height="119.8" viewBox="0 0 120 120"><defs><pattern id="ck" width="31" height="31" patternUnits="userSpaceOnUse" patternTransform="translate(-3,-3)"><rect width="31" height="31" fill="#8a8a8a"/><rect width="15.5" height="15.5" fill="#6c6c6c"/><rect x="15.5" y="15.5" width="15.5" height="15.5" fill="#6c6c6c"/></pattern>
<radialGradient id="sph" cx="0.6" cy="0.3" r="0.78"><stop offset="0" stop-color="#fafafa"/><stop offset="0.4" stop-color="#e6e6e6"/><stop offset="0.62" stop-color="#c4c7cb"/><stop offset="0.85" stop-color="#98a0aa"/><stop offset="1" stop-color="#7c8692"/></radialGradient>
<radialGradient id="shd" cx="0.78" cy="0.25" r="1.0"><stop offset="0.62" stop-color="#000" stop-opacity="0"/><stop offset="0.88" stop-color="#000" stop-opacity="0.3"/><stop offset="1.02" stop-color="#000" stop-opacity="0.85"/></radialGradient>
<radialGradient id="spc" cx="0.36" cy="0.5" r="0.3"><stop offset="0" stop-color="#fff" stop-opacity="0.3"/><stop offset="1" stop-color="#fff" stop-opacity="0"/></radialGradient>
<linearGradient id="flr" x1="0" y1="0" x2="0" y2="1"><stop offset="0" stop-color="#767b82"/><stop offset="1" stop-color="#8f979f"/></linearGradient>
<clipPath id="sc"><circle cx="60" cy="59.6" r="51.7"/></clipPath></defs>
<rect width="120" height="120" fill="url(#ck)"/>
<path d="M0,64H120V120H0Z" fill="url(#flr)"/>
<path d="M0,72L120,72M0,84H120M0,100H120" stroke="#6a7077" stroke-width="1.2" opacity="0.8"/>
<path d="M60,64V120M40,64L20,120M80,64L100,120M20,64L-30,120M100,64L150,120M0,64L-80,120M120,64L200,120" stroke="#6a7077" stroke-width="1.2" opacity="0.8"/>
<path d="M0,64L40,64L20,120L-30,120Z M60,64L80,64L100,120L60,120Z M100,64L120,64L200,120L150,120Z" fill="#9ea6ae" opacity="0.35"/>
<ellipse cx="70" cy="110" rx="36" ry="5" fill="#3c4044" opacity="0.55"/>
<circle cx="60" cy="59.6" r="51.7" fill="url(#sph)"/>
<g clip-path="url(#sc)"><polygon points="18.7,27.4 31.2,28.6 33.6,33.4 39.6,37.6 45.6,35.2 49.1,38.2 51.5,46.5 53.9,53.7 56.3,59.6 51.5,62.0 47.9,65.6 44.4,71.5 43.2,77.5 46.7,81.1 51.5,84.7 55.1,91.8 56.3,99.0 58.7,104.9 63.4,110.3 58.7,113.3 45.6,110.9 27.7,101.4 13.4,89.4 6.2,71.5 5.0,56.0 8.6,39.4" fill="#0d0d0d"/><polygon points="31.2,28.0 36.0,21.5 43.2,16.1 46.1,17.9 45.6,21.5 49.7,22.7 50.3,27.4 47.9,32.2 42.0,31.6 37.2,29.8 32.4,29.8" fill="#0d0d0d"/><polygon points="15.1,33.4 20.5,30.4 27.7,29.8 31.2,32.2 30.1,39.4 27.7,44.1 22.9,46.5 21.1,50.1 19.3,45.3 17.5,39.4" fill="#f2f2f2"/><circle cx="23.8" cy="55.4" r="1.7" fill="#f2f2f2"/><circle cx="31.2" cy="51.3" r="1.0" fill="#f2f2f2"/><circle cx="30.6" cy="61.4" r="0.8" fill="#f2f2f2"/><circle cx="9.8" cy="54.3" r="0.8" fill="#f2f2f2"/><circle cx="44.4" cy="60.8" r="0.6" fill="#f2f2f2"/><polygon points="17.5,82.3 21.7,80.5 26.5,79.3 27.7,83.5 28.3,87.0 25.3,85.9 23.5,88.2 20.5,85.9" fill="#f2f2f2"/><polygon points="51.5,31.0 56.3,29.2 59.9,31.0 58.1,34.0 53.9,35.2 52.1,33.4" fill="#0d0d0d"/><polygon points="65.8,38.2 70.6,40.5 74.2,46.5 76.0,53.7 74.8,59.6 73.0,63.2 74.2,69.2 70.6,71.5 63.4,72.1 56.3,70.4 52.7,66.8 56.3,62.6 62.2,60.8 66.4,59.0 65.8,53.7 68.2,47.7 67.0,42.9" fill="#0d0d0d"/><polygon points="56.9,82.3 61.1,78.7 65.8,77.5 69.4,81.1 69.4,85.9 65.8,88.2 63.4,85.9 59.9,88.2 57.5,85.9" fill="#0d0d0d"/><polygon points="75.4,85.9 81.3,82.9 87.3,81.1 90.9,77.5 93.3,79.9 92.1,84.7 96.8,79.9 99.8,81.1 96.8,88.2 93.3,93.0 89.7,94.2 87.3,90.6 83.7,93.0 81.3,99.0 77.7,103.7 74.2,107.3 70.6,108.5 75.4,101.4 77.7,95.4 80.1,90.6 75.4,89.4" fill="#0d0d0d"/><polygon points="86.7,64.4 89.1,63.2 89.7,68.0 88.5,72.7 86.7,71.5" fill="#0d0d0d"/><polygon points="107.0,63.2 109.3,62.0 110.5,68.0 108.8,75.1 106.4,76.3" fill="#0d0d0d"/><polygon points="79.5,53.7 81.9,54.3 81.3,56.6 79.9,56.0" fill="#0d0d0d"/><polygon points="49.1,77.5 52.7,76.3 53.9,78.1 50.9,79.3" fill="#0d0d0d"/><circle cx="60" cy="59.6" r="52" fill="url(#spc)"/><circle cx="60" cy="59.6" r="52" fill="url(#shd)"/></g></svg>
<div style="transform:scaleX(0.9846);transform-origin:0 50%;position:absolute;top:807.6px;font-size:14px;line-height:1;color:#f0f0f0;white-space:nowrap;font-weight:bold;left:2149.2px;transform-origin:0 50%;">Color</div>
<svg style="position:absolute;left:2150.2px;top:835.9px;" width="11" height="11" viewBox="0 0 11 11"><path d="M5.5,1.2L9.8,5.5L5.5,9.8L1.2,5.5Z" stroke="#9a9a9a" stroke-width="1.1" fill="none"/></svg>
<div style="transform:scaleX(1.0009);transform-origin:0 50%;position:absolute;top:834.0px;font-size:14px;line-height:1;color:#b0b0b0;white-space:nowrap;left:2171.2px;transform-origin:0 50%;">Color</div>
<svg style="position:absolute;left:2251.5px;top:836.1px;" width="8.0" height="5.0" viewBox="0 0 8 5"><path d="M0.7,0.7L4,4L7.3,0.7" stroke="#c0c0c0" stroke-width="1.3" fill="none"/></svg>
<div style="position:absolute;left:2260.7px;top:829.6px;width:82.9px;height:20.9px;background:#ffffff;"></div>
<svg style="position:absolute;left:2262.0px;top:855.3px;" width="18" height="20" viewBox="0 0 18 20"><path d="M10.5,2V7.5H16M1,12.5H6.5V18" stroke="#8c8c8c" stroke-width="1.5" fill="none"/></svg>
<svg style="position:absolute;left:2286.0px;top:855.3px;" width="20" height="20" viewBox="0 0 20 20"><circle cx="10" cy="10" r="9.4" fill="#8c8c8c"/><path d="M10,0V20M0,10H20M2.9,2.9L17.1,17.1M17.1,2.9L2.9,17.1" stroke="#2b2b2b" stroke-width="1.5"/><circle cx="10" cy="10" r="2.6" fill="#2b2b2b"/></svg>
<svg style="position:absolute;left:2312.0px;top:855.3px;" width="20" height="20" viewBox="0 0 20 20"><rect x="0.7" y="0.7" width="18.6" height="18.6" rx="1.5" stroke="#8c8c8c" stroke-width="1.2" fill="none"/><rect x="1" y="10" width="18" height="9" fill="#8c8c8c"/><path d="M1,7.5H19" stroke="#8c8c8c" stroke-width="2.2" stroke-dasharray="2 2"/></svg>
<svg style="position:absolute;left:2338.0px;top:855.3px;" width="20" height="20" viewBox="0 0 20 20"><rect x="0.7" y="0.7" width="18.6" height="18.6" rx="1" stroke="#8c8c8c" stroke-width="1.2" fill="none"/><path d="M3,16.5L7.5,11L10.5,14L13,11.5L17,16.5Z" fill="#8c8c8c"/></svg>
<div style="position:absolute;left:2364.0px;top:855.3px;width:20.0px;height:20.0px;background:transparent;border:1.2px solid #8c8c8c;box-sizing:border-box;border-radius:1px;"></div>
<div style="position:absolute;top:858.3px;font-size:15px;line-height:1;color:#8c8c8c;white-space:nowrap;left:2374.0px;transform:translateX(-50%);">R</div>
<div style="position:absolute;left:2390.0px;top:855.3px;width:20.0px;height:20.0px;background:#ffffff;"></div>
<div style="position:absolute;top:858.3px;font-size:15px;line-height:1;color:#222222;white-space:nowrap;left:2400.0px;transform:translateX(-50%);">H</div>
<div style="position:absolute;left:2416.0px;top:855.3px;width:20.0px;height:20.0px;background:transparent;border:1.2px solid #8c8c8c;box-sizing:border-box;border-radius:1px;"></div>
<div style="position:absolute;top:858.3px;font-size:15px;line-height:1;color:#8c8c8c;white-space:nowrap;left:2426.0px;transform:translateX(-50%);">K</div>
<svg style="position:absolute;left:2442.0px;top:855.3px;" width="20" height="20" viewBox="0 0 20 20"><rect x="0.7" y="0.7" width="18.6" height="18.6" rx="1" stroke="#8c8c8c" stroke-width="1.2" fill="none"/><rect x="4" y="5" width="3" height="3" fill="#8c8c8c"/><rect x="12.5" y="5" width="3" height="3" fill="#8c8c8c"/><path d="M4,13.5H16M8,11.5V15.5" stroke="#8c8c8c" stroke-width="1.2"/></svg>
<svg style="position:absolute;left:2480.5px;top:860.5px;" width="5" height="9" viewBox="0 0 5 9"><path d="M0,0L5,4.5L0,9Z" fill="#e0e0e0"/></svg>
<div style="position:absolute;left:2260.0px;top:879.5px;width:228.0px;height:1.0px;background:#383838;"></div>
<div style="position:absolute;top:890.6px;font-size:14px;line-height:1;color:#b0b0b0;white-space:nowrap;left:2260.5px;">H</div>
<div style="position:absolute;left:2275.3px;top:887.1px;width:83.4px;height:21.9px;background:#212121;border-radius:4px;"></div>
<svg style="position:absolute;left:2277.0px;top:894.1px;" width="5" height="8" viewBox="0 0 5 8"><path d="M4.3,0.7L1,4L4.3,7.3" stroke="#909090" stroke-width="1.2" fill="none"/></svg>
<svg style="position:absolute;left:2352.0px;top:894.1px;" width="5" height="8" viewBox="0 0 5 8"><path d="M0.7,0.7L4,4L0.7,7.3" stroke="#909090" stroke-width="1.2" fill="none"/></svg>
<div style="position:absolute;top:890.6px;font-size:14px;line-height:1;color:#e0e0e0;white-space:nowrap;left:2317.0px;transform:translateX(-50%);">0 °</div>
<div style="position:absolute;left:2364.7px;top:890.3px;width:123.1px;height:15.0px;background:linear-gradient(90deg,#ff0000 0%,#ffff00 16.6%,#00ff00 33.3%,#00ffff 50%,#0000ff 66.6%,#ff00ff 83.3%,#ff0000 100%);"></div>
<div style="position:absolute;left:2364.2px;top:888.0px;width:2.0px;height:20.5px;background:#f0f0f0;"></div>
<div style="position:absolute;top:918.1px;font-size:14px;line-height:1;color:#b0b0b0;white-space:nowrap;left:2260.5px;">S</div>
<div style="position:absolute;left:2275.3px;top:914.5px;width:83.4px;height:21.5px;background:#212121;border-radius:4px;"></div>
<svg style="position:absolute;left:2277.0px;top:921.2px;" width="5" height="8" viewBox="0 0 5 8"><path d="M4.3,0.7L1,4L4.3,7.3" stroke="#909090" stroke-width="1.2" fill="none"/></svg>
<svg style="position:absolute;left:2352.0px;top:921.2px;" width="5" height="8" viewBox="0 0 5 8"><path d="M0.7,0.7L4,4L0.7,7.3" stroke="#909090" stroke-width="1.2" fill="none"/></svg>
<div style="position:absolute;top:918.1px;font-size:14px;line-height:1;color:#e0e0e0;white-space:nowrap;left:2317.0px;transform:translateX(-50%);">0 %</div>
<div style="position:absolute;left:2364.7px;top:917.5px;width:123.1px;height:15.0px;background:linear-gradient(90deg,#ffffff,#ff0000);"></div>
<div style="position:absolute;left:2364.2px;top:915.2px;width:2.0px;height:20.5px;background:#f0f0f0;"></div>
<div style="position:absolute;top:944.8px;font-size:14px;line-height:1;color:#b0b0b0;white-space:nowrap;left:2260.5px;">V</div>
<div style="position:absolute;left:2275.3px;top:941.7px;width:83.4px;height:21.8px;background:#212121;border-radius:4px;"></div>
<svg style="position:absolute;left:2277.0px;top:948.6px;" width="5" height="8" viewBox="0 0 5 8"><path d="M4.3,0.7L1,4L4.3,7.3" stroke="#909090" stroke-width="1.2" fill="none"/></svg>
<svg style="position:absolute;left:2352.0px;top:948.6px;" width="5" height="8" viewBox="0 0 5 8"><path d="M0.7,0.7L4,4L0.7,7.3" stroke="#909090" stroke-width="1.2" fill="none"/></svg>
<div style="position:absolute;top:944.8px;font-size:14px;line-height:1;color:#e0e0e0;white-space:nowrap;left:2317.0px;transform:translateX(-50%);">100 %</div>
<div style="position:absolute;left:2364.7px;top:944.5px;width:123.1px;height:15.0px;background:linear-gradient(90deg,#000000,#ffffff);"></div>
<div style="position:absolute;left:2485.8px;top:942.2px;width:2.0px;height:20.5px;background:#f0f0f0;outline:1px solid #222;"></div>
<svg style="position:absolute;left:2150.5px;top:974.7px;" width="11" height="11" viewBox="0 0 11 11"><path d="M5.5,1.2L9.8,5.5L5.5,9.8L1.2,5.5Z" stroke="#9a9a9a" stroke-width="1.1" fill="none"/></svg>
<div style="transform:scaleX(0.9674);transform-origin:0 50%;position:absolute;top:973.3px;font-size:14px;line-height:1;color:#b0b0b0;white-space:nowrap;left:2171.4px;transform-origin:0 50%;">Brightness</div>
<div style="position:absolute;left:2260.9px;top:969.5px;width:92.1px;height:22.1px;background:#212121;border-radius:4px;"></div>
<svg style="position:absolute;left:2262.6px;top:976.5px;" width="5" height="8" viewBox="0 0 5 8"><path d="M4.3,0.7L1,4L4.3,7.3" stroke="#909090" stroke-width="1.2" fill="none"/></svg>
<svg style="position:absolute;left:2346.3px;top:976.5px;" width="5" height="8" viewBox="0 0 5 8"><path d="M0.7,0.7L4,4L0.7,7.3" stroke="#909090" stroke-width="1.2" fill="none"/></svg>
<div style="position:absolute;top:973.3px;font-size:14px;line-height:1;color:#e0e0e0;white-space:nowrap;left:2307.0px;transform:translateX(-50%);">100 %</div>
<div style="position:absolute;left:2360.0px;top:974.9px;width:127.8px;height:10.1px;background:#5a5fa6;border-radius:2px;"></div>
<div style="position:absolute;left:2487.0px;top:968.9px;width:3.2px;height:22.1px;background:#c4c4c4;border-radius:1px;"></div>
<svg style="position:absolute;left:2150.3px;top:1008.3px;" width="5" height="8" viewBox="0 0 5 8"><path d="M0.7,0.7L4,4L0.7,7.3" stroke="#909090" stroke-width="1.2" fill="none"/></svg>
<div style="transform:scaleX(0.9581);transform-origin:0 50%;position:absolute;top:1005.8px;font-size:14px;line-height:1;color:#b0b0b0;white-space:nowrap;left:2171.4px;transform-origin:0 50%;">Texture</div>
<div style="position:absolute;left:2260.9px;top:1002.3px;width:24.2px;height:22.2px;background:#3c3c3c;border-radius:11px;"></div>
<svg style="position:absolute;left:2269.0px;top:1012.0px;" width="8.0" height="5.0" viewBox="0 0 8 5"><path d="M0.7,0.7L4,4L7.3,0.7" stroke="#c0c0c0" stroke-width="1.3" fill="none"/></svg>
<div style="position:absolute;left:2287.7px;top:1002.3px;width:167.3px;height:22.2px;background:#3c3c3c;border-radius:11px;"></div>
<div style="position:absolute;top:1005.8px;font-size:14px;line-height:1;color:#d0d0d0;white-space:nowrap;left:2371.1px;transform:translateX(-50%);">Gradient</div>
<div style="position:absolute;left:2457.8px;top:1002.3px;width:32.6px;height:22.2px;background:#3c3c3c;border-radius:11px;"></div>
<div style="position:absolute;top:1004.1px;font-size:14px;line-height:1;color:#e0e0e0;white-space:nowrap;font-weight:bold;left:2474.1px;transform:translateX(-50%);">...</div>
<svg style="position:absolute;left:2259.8px;top:1040.2px;" width="50.3" height="49.6" viewBox="36.5 155.6 738 738"><rect x="36.5" y="155.6" width="738" height="738" fill="#fff"/><use href="#blobp"/></svg>
<div style="transform:scaleX(0.9850);transform-origin:0 50%;position:absolute;top:1031.3px;font-size:14px;line-height:1;color:#b0b0b0;white-space:nowrap;left:2314.4px;transform-origin:0 50%;">Sampling</div>
<div style="position:absolute;left:2386.1px;top:1028.4px;width:74.9px;height:21.0px;background:#303030;border-radius:4px;"></div>
<div style="transform:scaleX(1.0009);transform-origin:0 50%;position:absolute;top:1031.3px;font-size:14px;line-height:1;color:#808080;white-space:nowrap;left:2393.6px;transform-origin:0 50%;">None</div>
<svg style="position:absolute;left:2448.0px;top:1036.0px;" width="8.0" height="5.0" viewBox="0 0 8 5"><path d="M0.7,0.7L4,4L7.3,0.7" stroke="#707070" stroke-width="1.3" fill="none"/></svg>
<div style="transform:scaleX(0.9865);transform-origin:0 50%;position:absolute;top:1056.7px;font-size:14px;line-height:1;color:#b0b0b0;white-space:nowrap;left:2314.4px;transform-origin:0 50%;">Blur Offset</div>
<div style="position:absolute;left:2386.1px;top:1053.7px;width:74.9px;height:21.8px;background:#212121;border-radius:4px;"></div>
<svg style="position:absolute;left:2387.8px;top:1060.6px;" width="5" height="8" viewBox="0 0 5 8"><path d="M4.3,0.7L1,4L4.3,7.3" stroke="#909090" stroke-width="1.2" fill="none"/></svg>
<svg style="position:absolute;left:2454.3px;top:1060.6px;" width="5" height="8" viewBox="0 0 5 8"><path d="M0.7,0.7L4,4L0.7,7.3" stroke="#909090" stroke-width="1.2" fill="none"/></svg>
<div style="position:absolute;top:1056.7px;font-size:14px;line-height:1;color:#e0e0e0;white-space:nowrap;left:2423.5px;transform:translateX(-50%);">0 %</div>
<div style="transform:scaleX(0.9324);transform-origin:0 50%;position:absolute;top:1083.5px;font-size:14px;line-height:1;color:#b0b0b0;white-space:nowrap;left:2314.4px;transform-origin:0 50%;">Blur Scale</div>
<div style="position:absolute;left:2386.1px;top:1080.9px;width:74.9px;height:21.3px;background:#212121;border-radius:4px;"></div>
<svg style="position:absolute;left:2387.8px;top:1087.6px;" width="5" height="8" viewBox="0 0 5 8"><path d="M4.3,0.7L1,4L4.3,7.3" stroke="#909090" stroke-width="1.2" fill="none"/></svg>
<svg style="position:absolute;left:2454.3px;top:1087.6px;" width="5" height="8" viewBox="0 0 5 8"><path d="M0.7,0.7L4,4L0.7,7.3" stroke="#909090" stroke-width="1.2" fill="none"/></svg>
<div style="position:absolute;top:1083.5px;font-size:14px;line-height:1;color:#e0e0e0;white-space:nowrap;left:2423.5px;transform:translateX(-50%);">0 %</div>
</div>
</body></html>
